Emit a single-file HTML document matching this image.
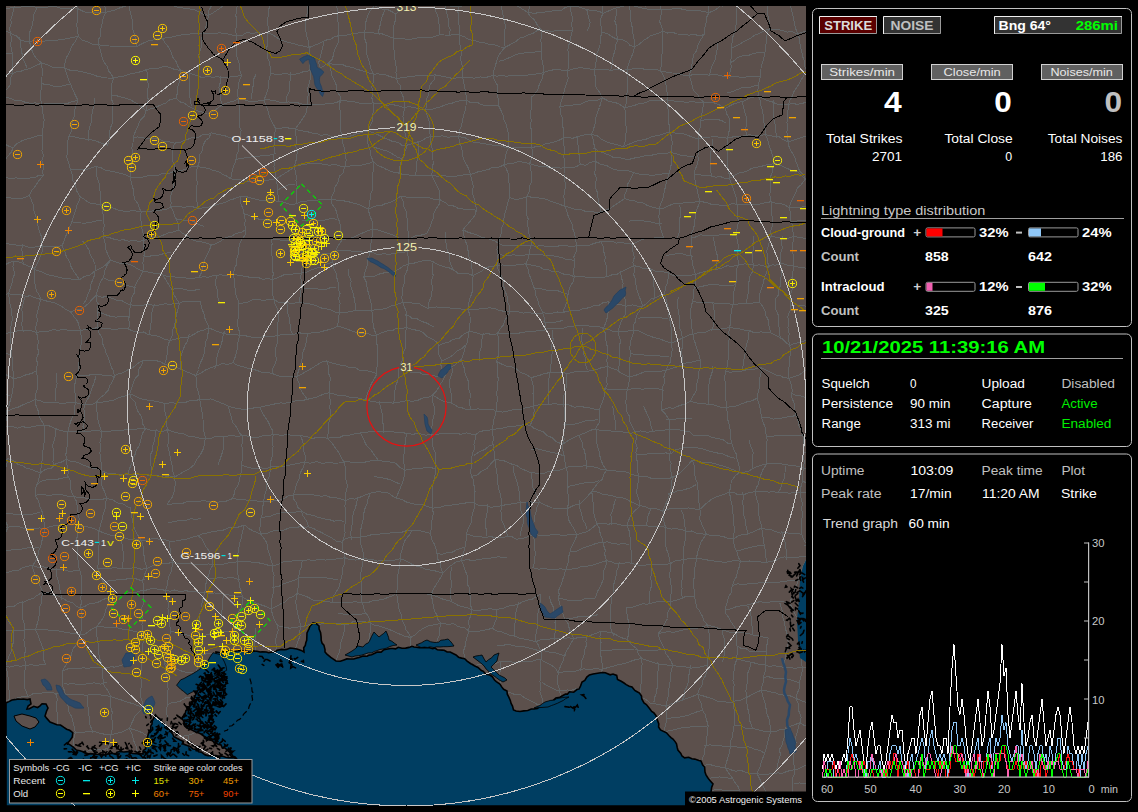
<!DOCTYPE html>
<html><head><meta charset="utf-8"><style>html,body{margin:0;padding:0;background:#000;overflow:hidden}svg{display:block}text{font-family:"Liberation Sans",sans-serif}</style></head>
<body><svg width="1138" height="812" viewBox="0 0 1138 812">
<defs><clipPath id="mclip"><rect x="6" y="6" width="800" height="800"/></clipPath>
<clipPath id="gclip"><rect x="820" y="540" width="269" height="238"/></clipPath></defs>
<rect width="1138" height="812" fill="#000"/>
<rect x="6" y="6" width="800" height="800" fill="#5c504c"/>
<g clip-path="url(#mclip)">
<path d="M-32.2,-26.1 L-27.8,-25.5 L-22.8,-24.3 L-17.0,-25.1 L-11.9,-24.4 L-6.9,-22.6 L-1.7,-21.9 L3.0,-20.4 L8.9,-19.2 L13.2,-17.7 M-32.2,-26.1 L-32.5,-20.7 L-31.5,-16.6 L-31.0,-10.2 L-30.8,-5.2 L-30.4,0.5 L-29.6,8.1 M-29.6,8.1 L-24.2,8.3 L-19.3,8.7 L-14.0,8.3 L-8.4,8.1 L-2.8,6.6 L3.2,8.1 L9.3,8.1 L14.1,7.4 M-29.6,8.1 L-30.7,13.7 L-29.4,19.1 L-26.8,25.3 L-24.5,30.3 M-24.5,30.3 L-17.8,28.9 L-13.5,30.1 L-7.3,30.0 L-2.0,29.9 L5.0,30.8 L10.3,33.2 M-24.5,30.3 L-24.7,35.7 L-25.6,40.7 L-26.3,44.2 L-28.4,50.5 L-28.2,55.2 L-30.6,60.6 L-31.9,67.0 L-34.6,73.2 L-36.7,78.7 M-30.6,54.5 L-25.2,54.5 L-19.7,56.3 L-13.6,55.5 L-8.0,56.1 L-3.3,55.1 L2.5,55.5 L6.4,53.3 L11.5,53.3 M-36.7,78.7 L-31.0,79.2 L-25.2,77.3 L-20.1,77.1 L-13.5,76.6 L-7.3,76.6 L-2.9,76.0 L2.6,75.2 L7.5,74.3 L12.6,73.5 M-36.7,78.7 L-33.8,82.5 L-31.9,86.8 L-31.9,93.2 L-31.8,99.7 M-31.8,99.7 L-26.7,98.4 L-22.7,96.3 L-16.8,97.1 L-10.6,96.0 L-4.9,96.2 L1.7,96.3 M-31.8,99.7 L-29.8,103.4 L-28.4,107.9 L-25.9,111.1 L-23.3,116.2 L-21.8,121.7 L-20.1,125.9 L-19.5,131.8 L-17.1,137.4 M-17.1,137.4 L-13.4,137.2 L-8.5,139.4 L-2.6,139.6 L2.8,142.5 L6.8,145.3 L13.1,147.8 M-17.1,137.4 L-16.8,141.5 L-15.3,147.5 L-16.0,151.5 L-17.2,158.3 L-19.4,165.0 L-20.3,170.5 M-20.3,170.5 L-12.4,172.7 L-7.8,174.6 L-2.2,177.0 M-20.3,170.5 L-19.7,174.4 L-19.7,179.7 L-20.8,185.2 L-23.5,190.1 L-24.2,197.0 M-24.2,197.0 L-17.6,199.0 L-11.6,198.5 L-6.3,199.3 L-0.3,197.9 L4.2,197.0 M-24.2,197.0 L-23.3,200.8 L-23.6,206.6 L-24.4,211.8 L-23.7,217.6 L-22.9,222.2 L-23.0,228.2 L-24.6,233.6 L-23.4,239.6 L-24.3,244.4 M-24.3,244.4 L-20.5,244.9 L-15.1,244.9 L-10.3,243.5 L-3.4,243.5 L1.9,242.4 M-24.3,244.4 L-24.2,249.3 L-25.2,255.2 L-24.3,259.8 L-26.0,263.8 L-25.6,270.2 L-26.5,274.8 M-26.5,274.8 L-21.4,273.3 L-15.9,271.7 L-10.0,270.7 L-6.2,268.1 L0.4,266.5 L4.4,265.2 L7.9,263.3 L13.5,260.9 M-26.5,274.8 L-24.9,279.7 L-24.1,286.5 L-23.6,294.3 M-23.6,294.3 L-18.6,294.9 L-13.7,296.0 L-7.2,295.9 L-3.3,295.8 L1.9,294.7 L8.3,293.9 M-23.6,294.3 L-23.4,299.8 L-25.1,305.5 L-25.2,311.0 L-25.1,314.8 L-23.6,320.3 L-24.3,327.2 L-23.7,332.3 L-21.8,337.8 M-21.8,337.8 L-16.2,337.8 L-11.5,336.8 L-6.7,337.5 L-0.1,334.5 L4.0,333.6 L10.4,332.6 M-21.8,337.8 L-24.6,341.4 L-26.9,347.0 L-29.0,353.6 L-31.0,359.6 M-26.4,348.7 L-22.0,349.5 L-15.6,349.2 L-9.7,349.7 L-5.0,350.5 L0.4,353.3 L6.3,353.3 L12.0,355.6 M-31.0,359.6 L-25.0,360.5 L-19.9,363.4 L-14.8,364.7 L-11.3,366.3 L-5.2,368.1 L-1.4,371.9 L4.9,374.4 L9.6,376.2 L13.6,378.6 M-31.0,359.6 L-29.3,364.0 L-28.3,369.8 L-25.9,374.8 L-23.4,381.0 L-22.5,386.8 L-22.4,392.0 L-19.8,395.9 L-19.7,401.5 M-25.3,380.5 L-19.6,383.5 L-14.5,385.4 L-8.5,388.8 L-4.1,391.3 L0.4,393.2 L5.2,394.5 L9.9,395.3 M-19.7,401.5 L-12.8,403.1 L-6.5,404.7 L-1.3,407.8 L1.4,410.7 L6.1,412.0 M-19.7,401.5 L-21.8,405.7 L-21.5,411.9 L-22.5,416.5 L-22.7,421.2 L-23.7,425.5 L-24.1,431.5 L-23.7,437.5 L-22.6,442.6 M-22.6,442.6 L-18.2,439.3 L-12.1,436.2 L-7.2,434.5 L-2.9,431.0 L2.2,426.5 M-22.6,442.6 L-21.0,448.6 L-21.3,454.0 L-20.3,459.6 L-20.4,466.1 L-21.0,471.5 L-22.7,476.4 M-22.7,459.5 L-18.7,457.1 L-11.9,455.5 L-7.7,453.4 L-3.8,450.0 L0.9,447.5 L5.1,442.6 M-22.7,476.4 L-17.3,473.7 L-12.3,471.3 L-9.0,468.8 L-3.5,464.8 L0.3,462.1 L3.7,461.4 L8.0,458.6 M-22.7,476.4 L-23.6,480.4 L-23.3,485.6 L-24.5,490.5 L-25.2,494.9 L-26.5,500.2 L-29.1,507.0 M-29.1,507.0 L-25.4,505.9 L-21.6,505.2 L-16.3,502.3 L-12.7,502.6 L-6.2,499.6 L-0.1,499.2 M-29.1,507.0 L-28.8,511.8 L-28.3,516.3 L-26.8,521.3 L-27.3,526.1 L-28.0,531.5 L-27.5,537.1 L-28.1,542.7 M-28.1,542.7 L-22.6,540.0 L-19.4,540.1 L-14.8,537.7 L-8.6,534.0 L-3.1,531.4 L3.1,529.4 L8.2,527.1 M-28.1,542.7 L-23.7,545.9 L-20.1,551.2 L-19.4,558.9 M-9.9,534.9 L-9.6,539.5 L-8.7,544.2 L-7.9,549.2 L-9.3,555.7 L-10.7,560.1 L-11.3,566.7 M-19.4,558.9 L-15.4,563.9 L-12.5,567.8 L-7.1,571.8 L-3.2,574.4 M-19.4,558.9 L-21.5,562.7 L-24.8,568.2 L-27.3,572.8 L-29.7,577.2 L-30.7,584.0 L-32.7,588.2 L-34.3,594.3 M-34.3,594.3 L-29.1,596.9 L-25.9,600.0 L-20.9,601.0 L-14.0,604.0 L-8.9,604.6 L-3.0,607.1 L2.3,609.2 M-17.7,631.7 L-12.7,631.1 L-9.5,631.7 L-4.3,631.9 L2.1,631.5 L7.9,630.0 L13.9,630.6 M-17.7,631.7 L-18.5,636.3 L-20.2,642.6 L-21.0,646.0 L-20.9,651.9 L-22.8,656.6 L-24.5,662.0 M-1.9,631.1 L-1.5,635.7 L-2.2,640.5 L-4.2,645.8 L-6.3,652.3 L-7.8,658.2 L-9.6,664.2 M-24.5,662.0 L-18.3,661.5 L-13.7,663.6 L-7.4,663.3 L-0.3,664.2 L5.2,666.4 M-24.5,662.0 L-25.4,667.2 L-27.8,673.9 L-28.9,678.1 L-27.8,684.1 L-27.6,690.1 L-26.9,696.7 M-26.9,696.7 L-21.6,697.2 L-17.7,696.5 L-12.0,697.4 L-7.1,698.3 L-2.0,699.6 L3.4,699.3 L8.9,700.9 M-9.0,698.8 L-8.6,704.6 L-7.2,709.1 L-8.7,713.2 L-8.5,718.1 L-9.5,723.1 L-10.7,729.3 L-11.4,734.1 M-30.0,733.7 L-24.6,734.1 L-20.5,734.5 L-14.4,733.5 L-8.1,734.5 L-3.9,733.1 L1.6,734.1 L7.2,734.4 M-30.0,733.7 L-30.7,740.0 L-30.2,744.8 L-29.3,750.8 L-30.1,756.1 L-29.1,762.0 L-26.0,768.5 L-25.3,773.1 M-25.3,773.1 L-21.1,771.8 L-17.2,770.0 L-11.6,769.1 L-5.9,767.4 L-1.2,766.3 L3.8,766.3 L8.4,765.6 L14.8,765.1 M-25.3,773.1 L-25.1,777.7 L-26.6,782.7 L-25.9,788.4 L-25.7,794.0 L-25.0,800.4 L-23.4,806.6 M-23.4,806.6 L-22.4,812.7 L-22.6,819.8 L-23.4,826.8 L-21.1,832.1 L-20.7,837.3 L-19.9,840.8 M-19.9,840.8 L-13.5,838.2 L-9.4,835.8 L-3.7,831.4 L0.8,827.0 M-19.9,840.8 L-19.5,847.5 L-21.4,853.2 L-23.6,857.3 M-21.7,849.0 L-17.0,848.1 L-11.3,847.4 L-7.0,847.0 L-1.4,845.7 L4.0,845.9 L8.2,845.7 M-23.6,857.3 L-19.4,857.7 L-12.6,858.4 L-8.6,860.9 L-2.5,861.2 L3.7,862.7 L9.2,863.9 L15.6,864.4 M13.2,-17.7 L12.4,-11.8 L12.4,-6.9 L12.5,-1.4 L13.9,2.1 L14.1,7.4 M14.1,7.4 L19.8,7.3 L23.6,6.5 L31.4,6.0 L37.3,7.6 M14.1,7.4 L12.8,13.3 L10.9,19.4 L11.2,23.8 L9.5,28.1 L10.3,33.2 M10.3,33.2 L16.4,35.9 L20.8,40.1 L26.2,41.7 L29.4,41.3 M10.3,33.2 L11.8,38.6 L10.7,43.8 L11.2,49.1 L12.7,54.2 L12.2,58.8 L12.5,64.4 L12.9,69.8 L12.6,73.5 M19.8,37.3 L20.3,43.8 L21.1,48.5 L22.2,54.6 L23.1,59.7 L25.4,63.8 L27.1,68.3 M12.6,73.5 L16.8,71.6 L20.9,71.2 L25.6,69.6 L31.6,67.9 L36.8,65.1 L41.6,63.2 M12.6,73.5 L10.8,77.3 L10.9,83.5 L8.6,87.3 L5.3,91.0 L1.7,96.3 M1.7,96.3 L6.8,97.8 L10.3,98.1 L15.7,100.7 L20.9,100.7 L25.7,102.4 L30.3,103.2 L35.8,102.9 L41.5,104.3 M13.1,147.8 L16.5,144.0 L21.4,141.0 L25.7,139.3 L30.5,138.1 L36.4,136.1 L42.6,135.1 M13.1,147.8 L11.2,152.4 L7.7,156.2 L5.2,160.4 L1.6,166.0 L0.9,170.6 L-2.2,177.0 M-2.2,177.0 L3.2,176.8 L10.2,178.6 L15.7,177.9 L20.5,178.3 L26.1,178.3 L29.8,178.0 L35.6,177.1 L38.0,175.7 L43.1,175.8 M-2.2,177.0 L-0.6,183.9 L-0.1,189.2 L2.8,194.3 L4.2,197.0 M4.2,197.0 L8.4,197.2 L13.7,199.0 L19.0,198.6 L25.1,197.6 L29.4,195.2 M1.9,242.4 L8.0,243.8 L13.5,244.7 L17.3,245.1 L24.1,245.8 L28.2,247.2 L33.4,247.2 L37.8,246.5 L42.5,246.3 M22.2,244.3 L21.9,249.9 L22.4,254.6 L22.5,259.9 L23.7,265.0 M13.5,260.9 L20.8,262.3 L25.6,265.0 L30.0,266.6 L34.0,269.1 M13.5,260.9 L12.9,266.8 L14.8,273.5 L13.1,277.7 L11.7,284.3 L9.7,289.7 L8.3,293.9 M8.3,293.9 L14.2,294.4 L19.5,294.7 L25.8,296.3 L30.4,295.8 L35.9,298.0 L40.9,299.4 M8.3,293.9 L9.5,298.7 L9.9,303.7 L11.1,308.8 L12.0,315.5 L12.3,319.8 L10.7,327.3 L10.4,332.6 M24.6,296.6 L23.5,302.6 L21.7,309.4 L22.9,314.6 L22.6,319.5 L21.6,323.4 L22.2,327.6 L23.3,332.4 M10.4,332.6 L15.0,331.9 L19.2,330.0 L23.7,330.3 L30.3,330.6 L36.3,332.3 M10.4,332.6 L10.5,337.3 L11.1,344.7 L11.0,349.7 L11.3,354.3 L12.7,359.1 L12.7,364.9 L12.8,370.0 L14.0,373.6 L13.6,378.6 M13.6,378.6 L19.8,377.5 L25.9,374.8 L31.3,373.6 L36.4,370.9 M13.6,378.6 L13.5,383.8 L13.0,388.3 L12.2,393.6 L10.4,399.9 L8.7,406.7 L6.1,412.0 M6.1,412.0 L12.0,408.9 L18.2,407.2 L22.2,405.2 L26.6,403.1 L30.8,401.6 L35.0,399.5 M6.1,412.0 L6.8,418.5 L5.0,424.0 L2.2,426.5 M2.2,426.5 L7.2,426.6 L12.0,426.3 L17.2,428.2 L22.7,426.6 L27.6,427.7 L32.1,426.9 L38.0,425.6 L44.4,425.5 M8.0,458.6 L13.8,460.6 L18.3,464.6 L22.6,465.8 L26.3,468.0 L31.2,469.4 L36.3,471.6 L40.4,472.7 M8.0,458.6 L6.8,464.0 L5.1,469.6 L4.0,473.7 L2.8,479.2 L1.1,483.3 L0.6,489.5 L0.8,493.7 L-0.1,499.2 M-0.1,499.2 L2.2,504.6 L3.9,511.0 L5.6,518.2 L5.9,521.9 L8.2,527.1 M4.1,513.1 L10.4,513.7 L15.9,514.4 L20.4,514.8 L26.3,514.5 L31.0,514.4 L36.1,513.2 L40.1,512.1 M8.2,527.1 L14.1,526.5 L18.3,526.5 L24.1,528.3 L29.7,528.1 L35.6,528.8 L39.5,527.9 L45.1,528.8 M8.2,527.1 L5.6,532.3 L5.3,537.4 L2.5,543.8 L1.2,549.4 L0.8,554.6 L-0.5,559.0 L-2.0,563.3 L-1.4,568.7 L-3.2,574.4 M2.5,550.7 L8.6,550.9 L12.6,549.6 L18.6,550.0 L23.0,548.6 L28.7,547.7 L34.4,548.2 L38.9,547.2 M-3.2,574.4 L1.3,573.2 L8.0,572.2 L13.1,570.6 L18.7,570.2 L22.9,567.6 L27.5,566.1 L32.7,565.7 M-3.2,574.4 L-3.5,578.1 L-3.3,583.3 L-3.1,588.2 L-0.7,593.4 L0.4,597.4 L1.1,603.1 L2.3,609.2 M2.3,609.2 L7.1,606.8 L13.9,606.5 L18.4,603.1 L22.8,602.6 L29.1,599.5 L33.9,597.9 L37.3,595.2 L43.0,592.0 M2.3,609.2 L6.4,616.1 L9.2,622.4 L12.6,626.4 L13.9,630.6 M22.6,600.6 L22.7,608.5 L22.4,613.9 L22.9,619.9 L24.6,625.2 L24.7,630.1 M13.9,630.6 L20.7,630.5 L26.3,629.7 L30.5,629.6 L35.4,629.7 M13.9,630.6 L13.6,635.0 L13.9,641.3 L12.2,645.6 L11.1,651.8 L9.0,656.0 L7.4,661.4 L5.2,666.4 M24.7,630.1 L24.3,634.7 L23.9,640.5 L24.9,645.8 L25.5,651.0 L24.1,655.3 L25.0,661.0 L25.4,665.6 M5.2,666.4 L9.7,667.1 L15.4,665.6 L20.5,666.2 L26.6,665.4 L30.8,664.6 L36.3,665.8 L40.2,664.5 L45.7,664.8 M5.2,666.4 L7.3,671.7 L7.8,676.0 L9.0,681.7 L8.8,688.8 L9.5,693.6 L8.9,700.9 M25.4,665.6 L24.9,671.7 L24.2,677.6 L24.4,683.5 L25.0,688.7 L26.9,693.2 L27.5,696.6 M8.9,700.9 L14.2,699.2 L18.4,697.6 L23.9,696.5 L28.3,696.3 L33.4,693.5 L39.9,693.3 L46.1,692.4 M8.9,700.9 L9.1,708.0 L8.4,712.4 L7.2,718.9 L6.3,725.0 L6.8,730.1 L7.2,734.4 M7.2,734.4 L11.8,733.4 L17.7,733.9 L23.1,735.1 L30.0,734.6 L35.7,735.0 M14.8,765.1 L19.9,765.1 L23.8,766.6 L28.8,765.5 L33.7,764.5 L41.2,765.5 L46.7,764.0 M14.8,765.1 L14.2,769.5 L12.9,774.7 L10.3,779.8 L10.0,784.0 L7.2,790.1 L6.8,797.4 L4.6,802.4 M4.6,802.4 L9.9,800.5 L15.1,797.4 L20.6,794.6 L24.7,793.5 L29.3,792.2 L33.5,790.4 M4.6,802.4 L2.8,809.0 L3.5,814.6 L1.4,820.5 L0.8,827.0 M0.8,827.0 L5.5,827.1 L11.3,827.2 L16.0,828.4 L22.5,827.6 L26.7,828.1 L32.6,825.9 L39.6,824.8 M0.8,827.0 L3.0,831.0 L5.9,835.2 L9.4,840.4 L11.1,844.6 L12.6,850.6 L13.0,855.5 L14.2,859.9 L15.6,864.4 M15.6,864.4 L21.4,866.1 L27.5,865.2 L31.8,867.1 L36.8,867.3 L41.9,869.1 L45.1,870.8 M40.0,-36.8 L44.6,-36.0 L50.4,-36.0 L54.3,-35.0 L59.7,-33.7 L65.7,-31.4 M38.6,-14.6 L45.1,-15.6 L51.5,-14.4 L57.0,-14.4 L61.8,-12.9 L66.7,-13.3 L71.9,-11.3 M37.3,7.6 L42.3,7.5 L48.2,7.0 L55.1,6.5 L59.7,8.0 L65.5,8.1 L68.5,8.7 L74.0,7.6 L78.1,8.8 M37.3,7.6 L34.1,13.6 L33.0,21.2 L31.6,27.5 L29.6,32.6 L29.4,37.8 L29.4,41.3 M29.4,41.3 L33.8,40.8 L38.9,42.0 L43.7,41.2 L49.5,40.4 L53.9,40.2 L60.7,39.9 L65.5,38.8 L72.8,37.6 L78.1,35.9 M29.4,41.3 L30.9,46.7 L32.6,52.5 L34.8,56.5 L38.2,60.0 L41.6,63.2 M41.6,63.2 L47.8,64.8 L53.8,67.8 L59.4,67.0 L64.6,67.8 M41.6,63.2 L42.0,67.5 L42.1,72.6 L42.0,77.4 L41.0,82.2 L41.3,87.2 L40.8,92.8 L40.6,99.1 L41.5,104.3 M41.6,83.8 L49.2,84.6 L54.2,86.4 L60.6,86.3 L66.1,84.9 L71.2,84.1 M41.5,104.3 L47.0,103.7 L52.2,103.5 L58.0,103.4 L62.3,103.6 L67.4,103.4 L73.4,101.3 L77.9,100.4 M41.5,104.3 L42.6,109.1 L43.1,114.8 L44.1,119.4 L43.9,124.3 L42.6,129.4 L42.6,135.1 M42.6,135.1 L42.9,139.8 L42.4,146.4 L41.9,150.5 L43.4,155.5 L41.9,160.8 L43.6,166.0 L42.9,171.2 L43.1,175.8 M43.1,175.8 L38.6,181.0 L35.9,185.3 L32.2,190.0 L29.4,195.2 M29.4,195.2 L31.1,199.6 L33.4,204.8 L33.5,208.8 L35.2,214.9 L37.0,219.8 L37.9,225.4 L38.9,230.0 L41.1,235.8 L41.3,241.3 L42.5,246.3 M42.5,246.3 L48.4,246.9 L55.2,246.3 L62.1,245.9 M42.5,246.3 L42.7,250.1 L40.3,256.5 L37.5,263.4 L34.0,269.1 M34.0,269.1 L39.1,271.1 L42.1,271.9 L48.0,274.9 L52.4,275.6 L57.1,276.8 L62.7,278.2 L68.1,278.4 L73.4,279.6 L79.6,279.7 M34.0,269.1 L34.7,274.3 L34.2,281.1 L35.2,284.9 L36.4,291.1 L38.7,294.0 L40.9,299.4 M40.9,299.4 L46.5,301.0 L50.2,301.7 L55.2,303.0 L60.9,305.8 L66.0,309.7 L70.7,312.0 M40.9,299.4 L39.5,303.6 L38.2,309.4 L36.7,315.8 L37.3,320.7 L35.7,326.9 L36.3,332.3 M36.3,332.3 L42.6,331.7 L47.6,331.5 L53.2,329.7 L58.2,330.3 L64.2,329.2 L69.1,330.5 L74.9,330.9 L80.5,330.4 M36.3,332.3 L37.9,337.4 L38.2,343.0 L37.5,347.2 L38.7,352.6 L36.8,357.9 L37.2,364.4 L36.4,370.9 M36.4,370.9 L37.4,377.3 L37.6,383.8 L37.3,388.8 L35.7,394.2 L35.0,399.5 M56.6,373.3 L56.2,377.8 L57.1,383.7 L55.8,389.3 L55.6,395.8 L55.1,401.0 M35.0,399.5 L40.0,400.7 L45.1,402.7 L49.8,402.1 L56.2,402.6 L59.8,403.1 L65.5,403.1 L69.9,402.6 L75.3,402.4 M35.0,399.5 L35.4,404.1 L38.1,410.7 L38.9,415.2 L40.8,419.4 L44.4,425.5 M44.4,425.5 L49.4,426.0 L54.2,428.0 L61.0,430.7 L67.8,431.8 M44.4,425.5 L44.8,430.2 L44.0,434.1 L44.3,439.3 L43.8,445.4 L43.0,450.4 L42.2,455.6 L42.1,460.7 L41.3,466.0 L40.4,472.7 M56.1,428.7 L55.4,435.0 L54.5,440.0 L52.5,445.5 L53.9,451.7 L54.0,456.4 L52.9,461.7 L53.5,466.0 M40.4,472.7 L45.1,469.5 L51.3,468.1 L55.6,463.9 L61.8,461.9 L66.5,459.4 M40.4,472.7 L39.3,476.1 L38.3,481.3 L35.9,487.3 L35.2,495.5 M37.8,484.1 L41.3,481.1 L46.8,479.8 L52.4,479.5 L57.6,479.2 L64.7,477.7 L70.2,478.1 M35.2,495.5 L41.7,494.0 L47.3,495.4 L53.0,494.9 L58.5,494.5 L62.7,494.9 L68.3,496.5 L73.8,496.7 M35.2,495.5 L38.8,501.4 L39.6,505.9 L41.7,510.4 L43.7,517.4 L44.0,522.4 L45.1,528.8 M45.1,528.8 L48.7,527.0 L55.5,525.4 L60.3,525.5 L66.3,525.4 L70.9,524.4 L78.2,524.9 M45.1,528.8 L42.7,535.5 L41.9,541.3 L40.7,546.0 L38.8,550.7 L37.7,557.3 L35.1,561.5 L32.7,565.7 M32.7,565.7 L38.5,567.3 L43.0,566.7 L47.0,567.6 L52.6,569.5 L58.0,569.5 L63.0,569.1 L68.3,571.2 L75.2,570.9 L80.1,570.9 M32.7,565.7 L33.0,568.6 L34.9,574.9 L37.7,578.7 L39.3,584.4 L43.0,592.0 M56.4,568.3 L56.3,573.0 L56.7,576.6 L58.8,582.0 L59.5,587.5 L60.8,592.9 L61.7,600.0 M43.0,592.0 L48.6,593.0 L52.8,595.1 L58.6,596.1 L63.6,598.8 L67.8,601.5 L73.2,603.0 L76.1,606.1 L80.5,607.9 M43.0,592.0 L41.6,598.1 L41.0,604.0 L39.4,607.9 L39.5,614.3 L38.2,619.9 L37.1,624.3 L35.4,629.7 M35.4,629.7 L40.0,629.1 L45.9,629.4 L52.0,630.9 L57.4,630.8 L61.9,631.6 L68.6,632.7 L73.9,633.6 L80.0,634.5 M35.4,629.7 L38.2,635.3 L39.5,639.4 L41.6,644.4 L43.6,650.3 L43.8,654.9 L44.0,660.4 L45.7,664.8 M46.1,692.4 L52.5,692.8 L60.3,694.0 L65.4,695.0 M55.8,693.7 L57.3,699.2 L56.6,704.1 L56.9,710.0 L57.2,715.1 L57.7,721.0 L56.6,725.6 L55.8,728.9 L55.5,733.8 M35.7,735.0 L41.5,733.7 L45.2,733.2 L51.5,731.6 L56.9,730.8 L63.1,731.4 L68.5,731.0 L75.3,732.5 M46.7,764.0 L51.5,767.9 L57.1,770.5 L62.2,772.2 L66.7,772.6 L70.3,773.8 M46.7,764.0 L43.6,769.3 L41.8,773.1 L38.9,779.1 L36.5,783.7 L33.5,790.4 M33.5,790.4 L39.5,791.0 L45.6,792.7 L49.4,793.7 L55.1,792.8 L61.0,793.6 L64.9,793.7 L69.7,794.8 L74.2,794.8 M33.5,790.4 L36.0,796.9 L38.4,803.0 L38.4,809.7 L39.3,815.2 L38.9,819.5 L39.6,824.8 M53.9,792.6 L52.7,798.2 L53.1,804.4 L53.0,810.9 L51.6,816.8 L53.5,821.3 L52.9,826.7 L53.3,831.5 M39.6,824.8 L45.2,826.6 L50.7,827.4 L55.9,828.4 L59.1,832.7 L63.5,834.8 L67.0,838.2 M39.6,824.8 L39.8,830.9 L40.6,836.4 L43.2,841.8 L43.0,847.9 L44.3,853.1 L44.5,856.8 L45.1,861.8 L44.0,865.6 L45.1,870.8 M45.1,870.8 L49.6,870.4 L54.5,870.9 L58.8,871.7 L64.9,870.3 L71.5,869.6 M65.7,-31.4 L71.9,-29.7 L77.2,-30.2 L81.6,-29.1 L87.9,-30.5 L92.7,-31.1 L96.2,-31.9 L102.0,-33.1 M65.7,-31.4 L68.0,-25.2 L68.5,-19.4 L69.7,-14.9 L71.2,-10.0 L74.4,-4.2 L76.1,0.0 L76.7,3.7 L78.1,8.8 M78.1,8.8 L82.8,11.2 L87.8,12.8 L93.1,11.8 L99.9,13.2 L105.7,12.3 M78.1,8.8 L77.3,14.5 L77.3,20.1 L76.8,25.5 L77.9,31.3 L78.1,35.9 M78.1,35.9 L81.6,39.8 L88.2,42.1 L93.0,44.7 L98.4,44.8 M78.1,35.9 L75.3,41.3 L71.8,46.4 L69.3,52.7 L66.5,57.5 L65.0,63.2 L64.6,67.8 M64.6,67.8 L69.7,70.1 L74.8,70.6 L80.1,71.3 L86.3,72.8 L90.1,73.6 L96.8,76.1 L102.2,77.2 L107.1,78.0 L113.4,78.1 M64.6,67.8 L65.7,71.4 L67.3,76.0 L68.3,79.3 L70.5,83.8 L72.8,89.7 L74.9,94.2 L77.9,100.4 M77.9,100.4 L75.9,105.7 L74.8,110.1 L74.7,114.9 L72.7,120.1 L71.4,125.2 L71.4,130.8 L68.9,136.3 M94.7,97.8 L94.3,103.6 L92.9,109.4 L91.8,115.1 L91.9,120.7 L89.9,126.4 L89.0,130.4 L88.8,136.7 L88.2,140.8 M68.9,136.3 L74.2,136.7 L79.2,138.1 L83.5,138.8 L90.6,139.8 L96.2,141.0 L101.6,143.4 L107.6,145.3 M68.9,136.3 L67.7,141.7 L67.3,146.4 L67.2,151.8 L66.9,157.3 L68.4,162.2 L70.4,169.2 M70.4,169.2 L77.4,169.4 L82.5,170.0 L87.8,169.0 L91.7,167.8 L96.0,166.4 M70.4,169.2 L72.2,174.9 L72.8,180.4 L75.4,184.2 L76.4,190.6 L80.4,197.1 M80.4,197.1 L84.3,199.2 L88.6,202.6 L92.9,203.7 L100.4,204.5 M80.4,197.1 L79.3,200.5 L76.6,205.7 L75.7,210.2 L73.8,215.9 L72.4,219.7 L70.4,225.5 L68.0,230.7 L65.9,235.8 L64.2,240.6 L62.1,245.9 M71.3,221.5 L76.0,222.8 L81.2,223.0 L84.5,223.1 L89.7,222.7 L97.0,220.7 L101.9,220.5 M62.1,245.9 L64.9,252.0 L66.5,256.9 L69.7,261.8 L71.1,266.9 L73.9,271.6 L76.5,275.3 L79.6,279.7 M82.8,241.2 L86.4,245.8 L89.2,250.6 L90.3,254.9 L93.1,259.4 L95.0,264.1 L95.1,269.9 M79.6,279.7 L84.1,276.6 L90.3,274.8 L93.9,271.7 L99.4,268.7 L102.7,267.5 L106.4,264.1 L110.5,260.0 M95.1,269.9 L94.4,275.5 L93.1,279.0 L91.1,283.8 L90.1,289.3 L87.6,295.1 L86.5,299.3 L83.4,303.8 M70.7,312.0 L75.3,310.0 L81.7,309.0 L86.1,305.5 L88.6,303.3 L92.2,299.3 L96.1,295.5 M70.7,312.0 L74.1,316.8 L77.8,321.6 L78.5,324.6 L80.5,330.4 M80.5,330.4 L87.0,329.2 L93.0,328.8 L97.5,327.4 M80.5,330.4 L80.9,334.2 L81.9,338.5 L81.2,344.3 L80.1,348.8 L79.6,352.8 L79.3,358.1 L78.8,364.8 L78.8,369.6 L76.9,375.7 M76.9,375.7 L81.6,376.0 L86.7,375.6 L91.4,374.6 L97.1,374.5 L102.3,375.0 L109.4,375.9 L114.5,376.1 M76.9,375.7 L75.5,380.5 L74.6,386.1 L74.9,389.9 L75.1,396.3 L75.3,402.4 M95.7,375.9 L94.5,382.2 L91.7,388.5 L90.2,393.9 L88.3,398.0 L86.0,402.2 M75.3,402.4 L82.6,404.7 L88.3,404.9 L92.8,404.0 L96.7,402.0 M75.3,402.4 L74.8,407.7 L74.3,414.3 L72.0,417.9 L70.2,422.8 L68.9,427.1 L67.8,431.8 M86.0,402.2 L83.9,408.5 L84.7,415.9 L84.0,421.6 L82.9,426.1 L84.5,431.6 M67.8,431.8 L71.8,431.9 L76.8,432.0 L81.7,431.4 L89.1,431.3 L95.5,430.3 L101.3,431.3 M67.8,431.8 L67.6,438.3 L67.3,444.5 L66.6,451.2 L65.8,454.4 L66.5,459.4 M66.5,459.4 L71.6,461.7 L77.4,462.1 L83.8,465.2 L87.8,466.8 L92.1,468.1 L97.7,468.7 L102.0,470.9 M66.5,459.4 L67.0,464.9 L68.2,470.4 L67.9,476.2 L70.5,481.0 L70.5,487.6 L71.7,492.7 L73.8,496.7 M73.8,496.7 L79.8,497.5 L85.0,497.9 L91.8,499.9 L96.3,499.4 L102.3,499.3 L106.7,498.2 M73.8,496.7 L76.8,501.9 L77.2,507.1 L78.0,512.2 L79.2,519.1 L78.2,524.9 M78.2,524.9 L83.8,526.8 L89.5,527.1 L94.2,528.8 L98.8,530.6 M78.2,524.9 L77.4,530.3 L77.9,535.5 L75.9,539.9 L76.7,544.6 L77.7,550.1 L77.2,555.0 L78.2,561.3 L78.3,565.8 L80.1,570.9 M80.1,570.9 L81.4,576.8 L81.6,582.4 L81.3,588.1 L81.7,593.1 L80.6,597.4 L81.4,601.9 L80.5,607.9 M80.5,607.9 L84.5,606.5 L89.9,603.6 L93.7,603.5 L98.6,602.0 L103.5,599.3 L109.3,597.6 M80.5,607.9 L82.1,613.6 L81.6,619.2 L81.1,624.7 L81.7,628.6 L80.0,634.5 M80.0,634.5 L85.3,634.0 L90.0,630.3 L96.6,626.6 M80.0,634.5 L77.8,640.7 L75.4,646.0 L72.6,649.2 L71.2,655.2 L67.9,658.7 L66.4,664.1 L64.7,667.1 L62.3,670.9 M62.3,670.9 L67.5,669.0 L72.0,668.3 L76.1,668.9 L82.6,667.9 L87.8,668.1 L92.1,667.9 L96.3,667.0 L102.5,668.1 M62.3,670.9 L62.1,678.1 L62.6,686.1 L64.3,690.1 L65.4,695.0 M63.8,683.0 L67.6,684.1 L73.5,683.7 L77.8,684.8 L82.7,684.3 L89.1,683.8 L94.3,682.8 L100.4,684.1 L106.6,682.3 M65.4,695.0 L70.6,694.7 L77.0,694.5 L80.6,694.9 L86.9,695.1 L91.7,694.6 L97.0,694.8 L100.9,695.0 L105.1,695.5 L110.7,696.6 M65.4,695.0 L66.1,699.8 L68.2,706.4 L68.4,711.2 L71.5,716.3 L72.8,721.0 L74.2,726.3 L75.3,732.5 M88.0,695.8 L87.4,701.5 L88.0,707.1 L88.5,712.6 L89.5,719.3 L89.7,724.6 L92.0,729.6 L93.1,733.5 M75.3,732.5 L80.1,732.5 L85.9,731.9 L90.3,731.9 L95.2,731.8 L100.6,733.4 L105.9,734.5 L111.0,734.5 M75.3,732.5 L74.0,737.9 L73.2,744.8 L71.9,749.5 L70.8,755.5 L70.9,761.0 L70.0,765.3 L69.8,768.9 L70.3,773.8 M72.8,753.1 L79.8,752.8 L86.0,751.6 L91.1,750.3 L97.4,749.3 L101.6,750.1 L107.3,748.5 M70.3,773.8 L74.5,773.4 L80.6,771.4 L84.9,770.9 L90.9,769.4 L93.8,767.2 L98.9,764.2 L103.6,762.4 M74.2,794.8 L79.7,795.6 L83.9,797.5 L89.3,799.1 L93.4,800.4 L98.5,800.8 L104.9,802.1 M74.2,794.8 L74.5,800.4 L73.0,805.6 L74.1,809.7 L72.3,815.6 L72.5,822.2 L69.6,826.6 L68.0,831.6 L67.0,838.2 M70.6,816.5 L77.5,816.4 L83.5,816.6 L88.6,815.5 L94.0,817.3 L100.2,817.3 L104.2,818.5 M67.0,838.2 L69.4,844.7 L69.7,850.9 L70.0,856.5 L70.9,860.7 L72.2,864.3 L71.5,869.6 M71.5,869.6 L77.2,868.3 L82.0,867.5 L87.7,866.7 L92.9,863.4 L99.2,861.1 L104.2,858.9 M102.0,-33.1 L107.1,-31.6 L113.0,-31.0 L118.8,-29.6 L124.7,-27.1 L129.4,-25.2 L133.3,-25.0 L138.7,-23.1 M102.0,-33.1 L102.1,-27.9 L102.7,-22.7 L102.5,-16.7 L102.9,-12.2 L103.7,-7.2 L105.0,-1.5 L105.7,3.0 L104.9,6.6 L105.7,12.3 M103.9,-10.4 L108.3,-10.8 L112.8,-11.0 L118.3,-10.5 L122.6,-11.0 L127.8,-9.8 L134.1,-9.3 M105.7,12.3 L113.2,10.6 L119.5,8.0 L124.1,6.5 L129.4,4.5 M105.7,12.3 L103.4,17.4 L102.1,24.0 L100.8,28.9 L100.9,35.1 L98.7,39.0 L98.4,44.8 M98.4,44.8 L105.3,45.9 L109.4,46.0 L115.6,46.6 L120.6,47.0 L126.9,46.4 L131.8,46.4 L136.5,46.6 M98.4,44.8 L100.4,49.7 L101.7,56.5 L103.9,61.9 L106.8,65.8 L108.8,71.1 L111.3,74.2 L113.4,78.1 M113.4,78.1 L118.7,76.8 L123.6,76.1 L129.2,74.2 L134.8,73.0 L141.9,71.5 L146.7,69.5 M113.4,78.1 L111.8,84.2 L112.0,90.3 L111.5,95.2 M111.5,95.2 L116.8,95.8 L122.5,97.4 L129.4,99.3 L133.5,101.5 L137.6,104.0 L141.8,107.3 L146.0,110.8 M111.5,95.2 L111.8,99.9 L113.1,103.4 L112.6,108.7 L112.2,114.1 L112.4,118.4 L112.1,123.9 L110.2,128.4 L109.2,134.9 L109.4,139.1 L107.6,145.3 M96.0,166.4 L100.7,167.6 L105.1,170.1 L109.6,170.9 L114.7,172.0 L119.4,173.2 L125.6,174.6 L130.5,177.3 M96.0,166.4 L96.1,171.9 L97.3,178.2 L99.1,183.3 L99.6,188.4 L100.5,194.4 L100.8,198.6 L100.4,204.5 M100.4,204.5 L105.3,205.4 L111.4,207.2 L117.5,209.9 L121.7,210.7 L127.0,211.7 L131.8,210.7 L137.5,211.1 L141.2,211.7 M100.4,204.5 L102.3,209.7 L103.5,216.5 L103.6,220.3 L104.2,226.2 L102.9,231.2 L103.5,236.5 M103.5,236.5 L108.9,237.5 L113.1,238.9 L118.5,240.2 L123.8,239.8 L129.3,241.3 L133.6,240.1 L138.6,241.4 L143.8,240.4 M103.5,236.5 L105.1,243.7 L105.9,249.7 L107.6,253.9 L110.5,260.0 M110.5,260.0 L116.5,262.2 L121.9,264.0 L128.1,263.9 L133.3,266.0 L137.8,269.0 L142.7,271.3 M110.5,260.0 L107.1,265.4 L104.7,271.1 L103.6,277.0 L99.8,283.0 L98.7,286.6 L97.4,290.9 L96.1,295.5 M103.3,277.8 L108.2,280.1 L113.4,280.7 L118.1,282.1 L123.8,284.6 L131.1,286.6 L136.4,288.0 M96.1,295.5 L102.0,297.3 L106.0,296.5 L112.7,298.6 L117.1,300.5 L121.8,300.5 L125.2,302.7 L130.1,304.8 M96.1,295.5 L96.2,300.7 L98.3,304.0 L97.6,309.3 L97.9,314.6 L97.6,320.7 L97.5,327.4 M96.8,311.5 L101.8,313.1 L105.8,314.8 L110.7,316.4 L116.1,317.1 L122.8,316.4 L129.1,316.8 M97.5,327.4 L102.5,328.4 L106.9,328.3 L111.6,329.2 L116.1,329.1 L123.1,328.8 L128.1,328.9 M97.5,327.4 L99.1,332.9 L102.1,338.2 L102.8,344.1 L104.9,348.5 L106.1,353.5 L108.7,358.8 L109.6,361.7 L111.3,367.0 L113.5,371.3 L114.5,376.1 M114.5,376.1 L117.3,374.1 L121.3,373.4 L127.6,370.0 L131.9,368.3 L138.0,363.3 L143.5,359.9 M114.5,376.1 L112.5,381.5 L109.5,386.1 L108.3,390.0 L103.8,395.1 L99.8,398.0 L96.7,402.0 M96.7,402.0 L102.3,402.2 L106.9,401.3 L113.3,400.2 L118.7,397.7 L124.5,396.1 L129.8,394.0 M96.7,402.0 L96.8,409.8 L97.4,415.3 L98.2,421.1 L99.7,426.4 L101.3,431.3 M101.3,431.3 L107.9,431.6 L114.3,430.5 L120.1,430.9 L124.9,429.8 L130.3,429.8 L135.2,429.2 L140.2,428.6 L145.6,428.6 M101.3,431.3 L101.4,436.1 L99.9,442.0 L100.6,447.1 L99.9,452.5 L100.3,458.9 L101.5,464.6 L102.0,470.9 M102.0,470.9 L107.2,473.2 L112.0,473.8 L117.1,474.1 L123.3,474.1 L128.5,474.8 M102.0,470.9 L102.7,476.7 L101.2,482.7 L102.2,486.7 L104.6,491.8 L106.7,498.2 M106.7,498.2 L112.7,500.0 L118.1,503.0 L123.8,504.1 L127.1,506.7 L130.4,507.9 M106.7,498.2 L105.6,502.5 L105.9,507.1 L103.4,513.5 L102.4,518.3 L100.7,524.6 L98.8,530.6 M98.8,530.6 L103.2,532.8 L108.0,534.5 L112.8,535.6 L119.4,536.2 L124.5,537.9 L128.6,539.1 L135.3,539.0 L141.5,540.7 M98.8,530.6 L98.3,536.6 L99.4,542.7 L98.5,548.5 L98.9,554.1 L98.5,558.9 L98.1,564.1 L97.5,568.1 M120.1,535.6 L121.9,542.7 L122.3,548.4 L123.5,553.1 L123.6,558.6 L122.9,562.9 L122.3,568.3 M97.5,568.1 L102.7,568.6 L108.9,568.7 L113.6,567.5 L118.8,568.2 L123.9,568.8 L129.4,568.2 L136.4,567.7 L141.1,569.2 L147.0,568.6 M97.5,568.1 L99.5,572.7 L102.0,579.6 L104.0,583.3 L105.2,589.3 L107.9,593.9 L109.3,597.6 M103.4,582.9 L108.4,580.9 L113.0,580.7 L118.3,579.6 L123.6,579.5 L128.3,578.7 L134.1,578.2 L140.0,580.2 L145.5,579.7 M109.3,597.6 L115.0,596.9 L120.6,595.1 L126.9,593.2 L130.9,592.6 L135.6,592.3 L140.2,591.0 L144.0,590.7 M109.3,597.6 L108.5,603.7 L106.1,608.7 L105.1,613.1 L103.2,617.9 L100.6,621.6 L96.6,626.6 M96.6,626.6 L101.5,626.2 L105.1,627.2 L111.3,627.4 L115.8,627.2 L121.6,629.0 L126.8,629.4 L131.3,630.5 L137.3,632.1 L143.3,633.2 M96.6,626.6 L96.0,631.2 L97.1,637.0 L98.1,643.3 L98.1,647.9 L98.7,653.0 L99.7,658.6 L101.2,662.5 L102.5,668.1 M102.5,668.1 L107.0,667.8 L110.3,666.8 L114.9,667.1 L120.3,665.6 L125.0,664.0 L130.0,662.1 L136.8,659.4 L142.3,658.1 M102.5,668.1 L102.3,673.7 L103.0,679.4 L104.2,685.7 L108.4,691.5 L110.7,696.6 M110.7,696.6 L116.9,698.6 L122.5,700.3 L126.5,701.8 L133.7,704.0 L137.2,705.4 L143.0,707.7 M110.7,696.6 L110.5,702.5 L111.0,707.7 L112.2,712.2 L111.4,718.2 L112.9,723.3 L112.4,728.3 L111.0,734.5 M111.0,734.5 L115.8,733.6 L122.1,731.9 L129.2,728.5 M111.0,734.5 L110.0,740.3 L109.1,745.8 L107.2,749.6 L107.0,756.6 L103.6,762.4 M103.6,762.4 L107.8,765.3 L113.0,767.3 L118.8,768.8 L122.3,769.4 L129.1,770.3 L133.2,771.0 L139.3,771.6 M103.6,762.4 L101.9,768.1 L102.0,774.7 L101.8,779.7 L102.6,784.9 L102.9,790.5 L103.6,797.2 L104.9,802.1 M104.9,802.1 L111.2,798.3 L117.3,795.6 L123.5,792.6 L128.3,791.5 L132.8,791.6 M104.9,802.1 L106.3,808.9 L107.1,813.3 L106.6,819.3 L105.8,824.5 L103.8,829.5 L103.4,834.9 M104.2,818.5 L111.0,816.7 L117.3,814.3 L122.8,812.5 L127.7,811.5 L132.9,812.5 M103.4,834.9 L108.2,834.0 L114.9,833.4 L119.6,834.2 L126.0,832.5 L133.0,833.3 M103.4,834.9 L102.7,841.6 L103.1,848.6 L102.7,853.1 L104.2,858.9 M104.2,858.9 L110.8,859.2 L116.5,860.0 L123.2,861.8 L129.0,861.8 L134.5,863.0 L138.8,862.1 L143.1,861.9 M138.7,-23.1 L144.4,-26.2 L148.3,-27.5 L154.3,-28.4 L158.6,-28.3 L164.2,-29.0 L168.3,-29.1 M138.7,-23.1 L136.5,-15.6 L133.5,-9.3 L131.0,-5.1 L131.4,0.6 L129.4,4.5 M153.5,-26.1 L152.4,-20.5 L150.5,-16.2 L149.4,-9.3 L149.6,-5.0 L149.0,-0.5 L148.7,4.4 M129.4,4.5 L129.7,8.5 L130.4,13.1 L131.8,18.1 L132.8,23.2 L132.6,28.5 L134.4,33.7 L135.7,41.3 L136.5,46.6 M136.5,46.6 L142.8,43.4 L147.9,41.0 L152.9,40.1 L157.6,38.8 L162.7,39.0 M146.7,69.5 L152.0,68.2 L157.2,68.4 L164.1,66.5 L169.3,67.2 L174.8,69.5 L180.5,70.3 M146.7,69.5 L147.5,75.6 L147.1,80.2 L148.8,84.9 L147.5,90.6 L147.7,94.3 L148.1,99.7 L147.2,105.0 L146.0,110.8 M146.0,110.8 L151.4,108.5 L155.2,107.8 L159.1,105.6 L165.8,103.0 L169.5,100.0 L175.9,98.2 M146.0,110.8 L144.3,116.2 L140.1,120.6 L138.2,125.3 L135.7,130.8 L133.2,137.3 M133.2,137.3 L137.8,136.9 L143.2,137.9 L148.5,138.5 L153.4,138.3 L158.2,138.9 L164.4,141.5 L169.6,141.9 L174.8,143.1 M133.2,137.3 L133.0,143.0 L131.9,147.7 L132.5,154.3 L131.6,158.6 L131.4,162.8 L130.9,168.6 L130.6,172.7 L130.5,177.3 M130.5,177.3 L137.0,177.2 L142.0,177.3 L147.4,176.0 L152.2,175.5 L158.7,175.3 L163.0,173.0 L169.7,173.0 L174.5,171.3 M130.5,177.3 L131.5,183.8 L133.2,189.1 L133.8,194.4 L134.6,199.5 L138.0,203.8 L139.4,208.2 L141.2,211.7 M141.2,211.7 L147.6,211.7 L153.8,210.7 L160.2,210.2 L166.3,209.6 L170.7,206.9 M141.2,211.7 L140.4,217.0 L141.2,222.5 L141.8,228.4 L143.3,233.9 L143.8,240.4 M143.8,240.4 L147.4,238.8 L152.6,237.9 L157.2,237.3 L162.0,235.7 L168.2,232.9 L172.8,232.2 L178.9,230.0 M143.8,240.4 L143.2,245.8 L144.9,251.8 L144.0,257.2 L142.8,263.2 L143.6,266.6 L142.7,271.3 M143.3,255.8 L147.6,256.9 L152.5,255.4 L158.2,255.3 L165.3,253.2 L170.9,252.5 M142.7,271.3 L149.7,272.3 L154.5,273.4 L160.0,273.6 L162.9,275.0 M142.7,271.3 L140.2,276.9 L137.4,281.3 L134.8,286.5 L134.4,293.0 L132.0,296.8 L131.2,301.7 L130.1,304.8 M130.1,304.8 L136.0,305.4 L141.5,305.4 L149.1,304.0 L153.6,305.7 L160.5,304.8 L165.7,303.5 L169.6,304.7 L173.7,303.4 L179.3,303.3 M130.1,304.8 L129.9,313.2 L128.7,319.1 L129.8,325.5 L128.1,328.9 M154.7,304.1 L152.4,309.8 L151.4,316.0 L151.2,321.5 L150.5,326.3 L150.0,330.3 L149.0,334.6 M128.1,328.9 L132.4,330.9 L137.8,332.3 L143.5,332.0 L149.1,334.9 L153.8,335.2 L159.7,336.8 L165.2,339.5 L169.9,340.4 M143.5,359.9 L149.7,360.9 L154.6,360.1 L160.9,362.1 L164.7,364.3 M143.5,359.9 L141.7,365.2 L138.5,369.8 L138.2,375.4 L134.4,379.4 L132.8,385.2 L131.1,389.9 L129.8,394.0 M129.8,394.0 L134.1,395.3 L137.8,397.5 L142.1,399.0 L148.7,400.3 L153.6,400.9 L159.0,401.9 L165.0,403.7 M129.8,394.0 L131.1,398.3 L135.4,402.5 L135.9,405.9 L138.1,411.8 L141.7,416.9 L142.5,423.6 L145.6,428.6 M145.6,428.6 L151.9,430.5 L157.3,430.9 L162.6,431.8 L167.3,429.6 M145.6,428.6 L142.5,433.3 L140.8,440.3 L139.7,444.6 L136.3,450.2 L134.6,455.9 L133.0,459.9 L131.0,465.4 L129.1,469.5 L128.5,474.8 M156.5,429.1 L155.4,434.0 L154.8,439.2 L152.9,445.1 L152.3,450.9 L150.6,454.4 L150.4,459.7 L151.0,465.7 L151.9,471.5 L151.6,475.9 M128.5,474.8 L133.1,474.4 L138.6,474.4 L144.3,474.8 L150.2,475.2 L154.9,475.3 L159.0,476.0 L164.7,477.3 L169.1,475.8 L174.8,477.1 M130.4,507.9 L131.2,515.2 L132.6,520.3 L133.4,526.2 L136.3,532.4 L138.9,537.0 L141.5,540.7 M141.5,540.7 L147.5,540.1 L152.9,538.4 L158.0,539.0 L164.9,539.8 L169.3,541.1 M141.5,540.7 L143.2,546.3 L143.6,552.1 L144.4,558.5 L145.3,563.0 L147.0,568.6 M147.0,568.6 L152.3,565.7 L159.2,563.5 L163.1,563.3 L168.2,563.3 L172.7,562.3 M147.0,568.6 L144.5,574.9 L142.6,581.6 L143.7,585.4 L144.0,590.7 M144.0,590.7 L150.8,588.8 L157.0,589.0 L161.2,589.4 L165.4,590.5 M144.0,590.7 L143.2,597.1 L143.8,602.7 L141.5,608.4 L141.5,613.6 L143.2,619.8 L141.9,624.1 L142.7,628.1 L143.3,633.2 M143.3,633.2 L143.6,639.7 L142.5,646.3 L142.5,651.7 L142.3,658.1 M142.3,658.1 L141.2,663.7 L141.1,669.6 L140.7,673.9 L141.1,680.0 L141.5,686.0 L140.3,691.4 L140.8,697.5 L142.5,702.4 L143.0,707.7 M143.0,707.7 L139.8,711.3 L135.1,715.9 L132.6,721.3 L129.2,728.5 M129.2,728.5 L133.3,729.4 L138.8,731.2 L142.5,732.9 L146.9,735.6 L153.1,736.8 L158.3,739.5 L163.9,741.8 M129.2,728.5 L131.8,733.1 L133.5,740.4 L135.9,745.5 L137.2,751.4 L137.9,755.2 L138.8,760.6 L139.7,765.8 L139.3,771.6 M139.3,771.6 L144.8,770.1 L151.4,769.2 L156.2,768.8 L160.7,767.5 L165.9,766.9 L170.6,767.0 M139.3,771.6 L138.0,774.6 L136.0,779.2 L133.6,784.2 L132.8,791.6 M132.8,791.6 L138.8,793.2 L143.5,797.2 L149.0,799.2 L154.2,800.4 L158.2,801.4 L165.3,803.2 L170.4,804.7 M132.8,791.6 L132.8,796.2 L134.4,801.6 L134.3,807.2 L133.6,811.8 L133.8,817.3 L133.8,822.0 L133.2,828.4 L133.0,833.3 M133.0,833.3 L139.2,832.7 L145.4,834.1 L150.1,832.9 L157.4,833.4 L162.6,832.4 L168.1,833.2 L171.8,833.0 L177.4,832.1 M133.0,833.3 L133.1,839.0 L135.9,845.7 L136.1,851.0 L137.7,854.2 L141.3,857.6 L143.1,861.9 M143.1,861.9 L148.1,862.7 L154.0,864.2 L158.9,864.3 L165.7,867.0 L170.6,868.4 M168.3,-29.1 L173.3,-29.1 L179.6,-30.9 L185.6,-31.6 L191.4,-30.8 L195.2,-30.5 L201.0,-31.0 L205.3,-30.5 L211.1,-29.0 M168.3,-29.1 L167.8,-22.3 L168.6,-15.6 L168.1,-9.5 L168.1,-4.3 L168.2,-0.8 L168.0,4.4 M168.0,4.4 L172.5,5.7 L179.5,7.6 L184.3,8.1 L188.7,8.8 L194.9,9.9 L199.1,11.8 L203.8,14.7 L208.7,15.2 M162.7,39.0 L166.5,37.1 L171.0,37.2 L176.8,35.7 L180.7,35.0 L185.7,34.3 L191.2,33.9 L197.3,33.8 L203.3,33.6 M162.7,39.0 L165.1,43.1 L168.2,46.7 L171.1,52.3 L172.8,57.2 L176.1,61.7 L178.0,66.5 L180.5,70.3 M180.5,70.3 L186.6,72.3 L191.8,73.9 L198.7,76.4 M180.5,70.3 L179.7,77.1 L179.4,81.4 L177.4,88.4 L177.4,93.2 L175.9,98.2 M189.6,73.3 L189.9,78.3 L189.8,84.6 L189.5,90.5 L189.7,95.8 L190.4,101.3 L191.7,106.2 M175.9,98.2 L179.8,101.8 L184.3,103.2 L188.2,106.1 L192.4,108.0 L198.0,110.9 L203.0,112.3 L207.5,114.2 M174.8,143.1 L180.2,142.4 L185.7,140.0 L191.2,138.0 L198.1,137.7 L202.1,134.7 L206.7,135.0 L211.1,132.8 M174.8,143.1 L173.4,147.2 L172.4,153.4 L172.1,159.4 L174.2,164.5 L174.5,171.3 M174.5,171.3 L179.3,170.8 L184.6,169.6 L191.2,166.8 L197.8,166.2 M174.5,171.3 L173.9,176.7 L173.2,181.6 L173.5,186.3 L172.0,191.7 L170.7,196.1 L171.1,202.9 L170.7,206.9 M170.7,206.9 L175.6,206.1 L180.0,206.5 L183.9,207.4 L190.9,206.3 L197.7,208.1 M170.7,206.9 L173.0,211.0 L174.8,216.6 L178.0,223.1 L178.9,230.0 M174.8,218.4 L180.7,219.8 L185.9,220.6 L190.3,219.9 L195.9,222.7 L200.8,225.3 L204.5,226.5 M178.9,230.0 L181.9,232.8 L186.5,235.1 L190.5,238.8 L194.7,240.8 L199.8,241.5 L206.6,243.2 L211.2,245.0 M162.9,275.0 L167.8,276.4 L174.1,276.9 L179.0,277.8 L184.8,277.6 L188.4,278.9 L193.2,278.3 L199.1,277.3 M162.9,275.0 L166.4,280.9 L168.4,284.2 L171.5,289.0 L174.3,295.5 L176.4,298.7 L179.3,303.3 M171.1,289.2 L177.5,288.8 L182.4,288.9 L188.7,290.4 L193.5,290.3 L199.7,289.4 M179.3,303.3 L182.6,301.9 L187.1,301.3 L193.1,302.0 L200.3,301.5 M179.3,303.3 L178.2,308.6 L176.4,314.5 L175.2,321.4 L174.7,326.1 L172.0,331.3 L172.3,335.7 L169.9,340.4 M169.9,340.4 L173.8,339.5 L180.3,338.0 L185.1,337.8 L188.9,337.1 L194.8,333.8 L198.2,331.6 L203.3,330.2 L208.6,327.7 M169.9,340.4 L168.2,344.6 L167.7,349.8 L166.8,356.8 L164.7,364.3 M189.2,334.0 L187.8,340.4 L184.7,345.8 L183.2,349.8 L180.9,356.3 L181.0,361.0 L180.3,365.0 L180.3,370.0 M164.7,364.3 L170.0,366.1 L175.6,367.1 L181.1,369.2 L185.3,371.3 L189.7,372.8 L195.9,375.7 M165.0,403.7 L171.0,402.7 L175.1,403.1 L181.2,402.8 L186.4,402.1 L189.5,400.7 L195.5,400.8 L199.8,399.1 M165.0,403.7 L164.2,406.9 L164.8,411.3 L166.1,416.5 L166.4,422.8 L167.3,429.6 M167.3,429.6 L172.7,431.5 L177.4,432.9 L184.0,434.0 L189.1,436.7 L194.4,436.8 L199.4,438.2 L205.6,438.5 M167.3,429.6 L168.2,433.7 L168.7,439.9 L167.8,445.6 L168.7,450.2 L169.8,454.4 L170.6,459.8 L172.5,466.9 L172.5,470.9 L174.8,477.1 M174.8,477.1 L180.3,473.8 L183.4,471.7 L189.3,468.9 L194.1,464.7 M174.8,477.1 L175.2,483.9 L174.5,490.8 L172.5,496.8 L168.7,501.9 L166.9,505.1 M166.9,505.1 L172.6,503.9 L177.5,503.2 L183.0,503.2 L188.2,501.2 L193.8,501.9 L198.9,501.4 L202.7,500.7 M168.1,523.1 L174.7,521.3 L180.2,520.6 L184.2,521.0 L191.1,518.5 L195.8,519.7 L200.5,518.2 M169.3,541.1 L175.9,541.0 L182.0,539.9 L186.3,539.2 L193.3,537.0 L198.2,535.7 M169.3,541.1 L170.1,549.0 L170.1,553.8 L171.1,558.1 L172.7,562.3 M172.7,562.3 L176.7,563.6 L182.8,563.8 L186.9,563.4 L193.2,564.0 L197.5,564.5 L203.6,564.5 L208.5,563.9 L213.1,564.8 M172.7,562.3 L172.1,566.3 L171.1,572.0 L168.1,577.4 L167.9,583.7 L165.4,590.5 M165.4,590.5 L169.9,591.2 L174.4,590.0 L180.8,591.6 L184.9,590.8 L192.5,591.4 L197.9,592.2 L204.9,592.4 M165.4,590.5 L166.1,595.5 L167.5,599.0 L168.4,603.8 L167.9,608.9 L168.8,613.3 L169.3,618.0 L169.6,624.7 L170.6,630.7 M170.6,630.7 L176.4,633.1 L182.0,634.1 L188.5,635.3 L192.9,637.0 L199.5,636.3 M170.6,630.7 L169.6,635.8 L169.3,641.4 L168.6,645.9 L167.0,652.7 L166.1,657.3 L164.4,663.2 M164.4,663.2 L170.8,666.0 L177.5,669.1 L181.4,671.0 L188.0,672.8 L192.5,672.7 L196.3,673.7 M164.4,663.2 L165.9,667.9 L165.5,673.3 L167.4,678.6 L167.8,684.1 L168.1,689.3 L167.5,693.3 L167.2,698.8 L167.4,704.5 M167.4,704.5 L171.9,702.8 L175.6,702.6 L181.1,700.8 L185.7,697.9 L189.8,697.7 L196.0,695.0 L201.1,694.6 L207.2,691.8 L212.2,690.9 M167.4,704.5 L166.2,711.3 L167.6,717.6 L165.7,722.6 L166.7,728.2 L165.1,732.7 L164.5,736.6 L163.9,741.8 M163.9,741.8 L169.7,740.9 L174.1,738.1 L180.1,736.4 L185.5,735.9 L189.9,734.8 L196.0,732.3 L200.0,731.1 L204.5,730.1 L208.2,730.7 L212.8,729.5 M163.9,741.8 L165.5,746.0 L165.5,751.0 L167.9,755.7 L168.8,761.4 L170.6,767.0 M188.3,735.7 L188.6,740.0 L189.0,746.9 L189.1,752.0 L190.0,757.1 L189.9,763.8 L190.0,768.6 M170.6,767.0 L176.1,768.7 L182.6,768.7 L187.3,769.4 L193.2,769.8 L199.0,771.3 L203.2,770.7 L209.4,770.1 M190.0,768.6 L188.3,776.0 L188.2,781.0 L187.8,788.2 L186.6,793.0 L186.6,799.0 L185.1,803.1 M170.4,804.7 L177.4,804.7 L183.7,805.9 L189.5,804.7 L195.3,804.0 L199.9,801.5 M170.4,804.7 L172.3,809.0 L172.9,813.6 L175.6,818.4 L176.0,824.9 L177.4,832.1 M177.4,832.1 L184.6,832.9 L189.1,834.0 L195.1,834.6 L198.4,836.8 L203.9,837.4 L207.1,837.1 M177.4,832.1 L176.5,836.2 L173.9,842.2 L174.0,846.0 L171.7,852.6 L171.1,857.4 L171.9,861.9 L170.6,868.4 M174.0,850.3 L179.0,853.1 L184.7,853.3 L189.6,854.4 L196.4,854.9 L203.2,853.1 M170.6,868.4 L176.3,868.4 L181.4,867.2 L187.2,868.1 L193.6,868.1 L199.3,869.1 M211.1,-29.0 L217.7,-28.7 L223.0,-29.5 L227.4,-29.4 L233.0,-29.0 L238.4,-26.3 L241.7,-24.8 L246.2,-23.5 M211.1,-29.0 L210.6,-21.9 L212.6,-15.5 L212.3,-10.9 L212.1,-4.4 L210.8,0.1 L211.2,6.1 L209.0,10.4 L208.7,15.2 M208.7,15.2 L213.5,12.6 L219.2,8.7 L224.1,5.0 L227.8,3.0 L232.7,1.3 L237.7,-1.7 M208.7,15.2 L206.6,23.8 L205.0,29.7 L203.3,33.6 M203.3,33.6 L209.7,33.3 L214.4,33.8 L219.4,32.8 L226.6,33.6 L231.6,34.9 L236.9,36.0 M203.3,33.6 L201.3,38.7 L201.9,45.2 L200.5,49.8 L198.7,54.9 L200.1,61.9 L198.7,66.5 L198.6,71.9 L198.7,76.4 M198.7,76.4 L202.9,77.8 L207.1,76.4 L212.7,77.3 L217.0,76.7 L223.0,77.7 L229.2,77.1 L234.5,76.4 L241.4,75.6 M220.0,76.0 L220.4,82.1 L218.9,87.5 L220.1,93.3 L220.2,98.2 L221.5,103.2 L222.9,106.4 M207.5,114.2 L214.1,111.1 L219.7,106.5 L224.6,103.8 L229.1,102.3 L233.6,101.1 L238.3,98.6 M211.1,132.8 L218.4,134.7 L224.2,135.5 L230.2,137.7 L235.3,139.7 L239.9,140.6 M211.1,132.8 L209.1,137.8 L205.5,140.4 L203.3,145.1 L202.1,150.9 L199.8,154.7 L199.9,159.8 L197.8,166.2 M197.8,166.2 L203.2,167.9 L208.3,168.1 L213.5,170.6 L218.3,171.3 L221.5,173.6 L227.0,176.3 L230.6,178.8 M197.8,166.2 L196.4,171.5 L196.1,178.2 L197.6,183.1 L196.2,188.0 L196.2,193.6 L196.2,198.9 L197.1,202.6 L197.7,208.1 M197.7,208.1 L202.5,208.0 L207.2,207.4 L212.3,206.2 L219.4,203.8 L223.9,202.8 L229.8,200.2 L235.0,198.5 L240.1,196.5 M211.2,245.0 L216.1,243.6 L221.1,240.9 L226.2,237.1 L230.9,236.8 L235.9,233.2 L240.7,232.7 L245.6,229.8 M211.2,245.0 L209.1,251.2 L206.0,256.8 L203.2,264.1 L202.7,268.9 L201.5,272.7 L199.1,277.3 M199.1,277.3 L204.2,276.8 L208.1,277.2 L213.8,275.5 L220.1,274.9 L226.4,275.2 L233.6,274.4 M216.4,275.9 L215.7,281.9 L215.9,285.6 L217.9,291.5 L217.9,297.4 L219.6,302.8 M200.3,301.5 L201.7,308.6 L203.8,313.4 L205.4,320.1 L207.7,324.0 L208.6,327.7 M208.6,327.7 L215.5,330.7 L220.4,332.5 L226.3,334.0 L231.4,334.4 L236.1,334.7 L239.9,335.2 M208.6,327.7 L208.1,332.7 L207.5,337.9 L206.0,341.4 L204.7,348.3 L204.2,353.7 L202.2,359.1 L199.8,364.1 L198.5,369.5 L195.9,375.7 M224.3,331.4 L222.8,337.1 L222.3,340.5 L220.5,346.5 L218.4,351.3 L216.8,358.0 L216.9,363.1 L214.6,369.1 M195.9,375.7 L201.5,372.6 L205.6,370.0 L212.0,367.3 L215.6,366.1 L222.5,363.6 L227.5,364.4 L233.2,362.5 M195.9,375.7 L196.3,380.7 L196.3,386.1 L198.5,392.8 L199.8,399.1 M199.8,399.1 L205.9,399.1 L211.1,399.0 L217.6,401.5 L223.6,403.9 L228.4,406.3 M199.8,399.1 L200.4,403.4 L201.2,408.5 L202.7,414.6 L203.0,418.9 L203.1,424.8 L203.9,431.8 L205.6,438.5 M205.6,438.5 L210.5,438.6 L215.8,436.2 L221.4,436.7 L225.6,436.3 L232.2,435.5 L236.5,436.2 L242.1,435.9 M205.6,438.5 L204.3,442.4 L203.9,447.6 L201.2,453.2 L196.8,459.6 L194.1,464.7 M223.8,437.2 L223.1,441.3 L223.9,447.6 L222.3,452.7 L220.0,459.5 L218.0,464.9 M202.7,500.7 L210.2,501.4 L215.0,502.5 L220.7,501.8 L226.2,501.1 L232.3,498.7 M198.2,535.7 L201.8,534.0 L206.4,533.1 L211.3,532.0 L217.5,530.9 L223.0,530.2 L228.2,528.0 L233.4,527.9 L239.7,526.8 L244.5,524.8 M198.2,535.7 L202.6,539.7 L205.4,545.9 L208.9,550.8 L209.9,555.1 L212.1,559.3 L213.1,564.8 M213.1,564.8 L217.3,564.4 L222.9,564.3 L229.5,562.5 L237.1,561.9 M213.1,564.8 L210.3,568.8 L208.8,574.4 L206.7,580.2 L205.4,586.4 L204.9,592.4 M209.0,578.6 L215.4,578.3 L219.7,577.4 L225.2,578.5 L230.9,577.0 L235.8,578.7 L239.7,579.5 M204.9,592.4 L210.4,593.4 L214.5,593.0 L218.8,593.3 L224.6,594.1 L230.3,595.4 L237.1,596.4 L242.4,597.1 M204.9,592.4 L203.2,597.2 L201.8,604.3 L202.2,608.9 L199.5,614.6 L199.1,619.9 L198.8,625.7 L199.0,630.5 L199.5,636.3 M223.6,594.7 L222.6,600.3 L222.7,606.9 L221.1,613.7 L221.1,618.5 L220.4,624.0 L218.4,629.0 L216.6,633.7 M199.5,636.3 L206.4,635.0 L213.5,633.8 L217.9,631.3 L224.9,631.0 L229.9,631.2 L233.7,631.1 M199.5,636.3 L198.6,640.9 L197.3,644.7 L197.5,650.3 L197.1,654.7 L197.2,661.1 L197.4,666.7 L196.3,673.7 M197.9,655.0 L204.1,654.2 L210.6,653.3 L217.2,653.2 L220.6,650.9 L226.7,651.1 L230.6,651.3 L235.7,651.3 M196.3,673.7 L203.2,674.2 L209.0,674.9 L213.1,675.6 L220.0,674.4 L224.8,675.1 L228.6,673.5 L234.2,673.5 L237.8,671.4 M196.3,673.7 L200.9,678.1 L203.7,681.5 L208.0,685.7 L212.2,690.9 M212.2,690.9 L215.7,694.5 L219.1,697.6 L224.0,701.7 L229.6,704.0 L234.1,705.9 M212.2,690.9 L213.5,697.2 L213.7,702.9 L213.4,707.8 L213.3,714.2 L214.0,718.2 L213.9,723.4 L212.8,729.5 M209.4,770.1 L213.9,766.3 L218.7,762.6 L222.6,758.7 L229.0,757.3 M209.4,770.1 L208.3,777.3 L208.0,782.0 L206.4,787.6 L205.0,793.1 L202.4,797.4 L199.9,801.5 M199.9,801.5 L206.4,801.5 L212.0,800.5 L217.5,800.1 L224.1,799.8 L227.7,801.1 L233.9,800.3 L237.6,802.6 L242.6,802.5 M199.9,801.5 L201.3,807.2 L203.6,811.7 L204.2,817.3 L205.5,821.7 L204.8,827.8 L206.3,832.4 L207.1,837.1 M207.1,837.1 L211.3,834.7 L215.0,831.8 L219.2,830.2 L224.2,827.0 L230.7,824.8 M207.1,837.1 L205.0,841.2 L203.7,846.1 L202.2,850.8 L201.3,857.8 L199.5,862.9 L199.3,869.1 M246.2,-23.5 L250.6,-24.4 L255.0,-24.3 L260.0,-23.5 L265.2,-22.6 L269.8,-22.0 L276.3,-22.0 M246.2,-23.5 L243.5,-17.2 L240.6,-13.3 L239.0,-7.1 L237.7,-1.7 M237.7,-1.7 L243.4,-1.1 L249.4,-2.1 L256.8,-1.9 L261.6,-0.5 L267.5,-1.0 L271.8,-1.1 M237.7,-1.7 L237.9,3.3 L236.5,9.6 L235.8,15.9 L237.0,19.6 L236.3,25.8 L235.6,31.6 L236.9,36.0 M236.9,36.0 L241.8,35.6 L246.3,32.6 L252.2,33.3 L256.7,32.8 L261.7,33.1 L268.0,32.9 M236.9,36.0 L236.5,40.7 L236.1,46.7 L236.3,52.7 L237.3,58.2 L239.7,64.5 L239.4,68.8 L241.4,75.6 M241.4,75.6 L239.1,81.7 L238.3,87.3 L237.4,92.9 L238.3,98.6 M256.0,74.5 L253.3,79.9 L253.4,85.0 L252.6,88.0 L251.8,94.8 L251.2,99.3 M238.3,98.6 L244.5,99.8 L249.8,101.5 L255.3,101.9 L258.8,100.7 L264.0,100.0 M238.3,98.6 L238.9,103.1 L239.7,109.4 L239.2,113.6 L239.8,119.7 L239.1,125.4 L241.1,130.4 L240.3,135.0 L239.9,140.6 M239.9,140.6 L238.3,144.7 L238.3,151.3 L236.7,154.8 L235.7,161.7 L233.5,166.3 L231.9,172.3 L230.6,178.8 M235.2,159.7 L240.5,158.2 L246.4,157.9 L252.2,156.7 L256.7,156.7 L262.0,155.5 L266.2,155.8 L271.6,154.6 L275.8,153.7 M230.6,178.8 L234.4,179.6 L239.0,179.4 L245.2,181.0 L249.3,181.8 L253.7,180.9 L260.8,181.5 L265.2,180.9 L271.4,179.4 L276.1,178.8 M240.1,196.5 L246.0,196.6 L252.9,198.5 L258.3,199.9 L263.9,200.8 L268.5,199.8 L274.0,200.6 L279.0,201.7 M240.1,196.5 L241.0,203.9 L243.5,210.3 L244.1,214.7 L245.2,219.9 L244.8,224.8 L245.6,229.8 M242.9,213.1 L248.3,215.1 L254.8,218.1 L260.1,219.4 L265.5,220.0 L270.8,220.5 L275.0,220.2 M245.6,229.8 L245.0,235.1 L242.5,238.4 L240.1,242.7 L238.9,247.9 L238.9,252.9 L236.9,258.6 L236.7,264.1 L234.2,268.9 L233.6,274.4 M233.6,274.4 L239.5,275.6 L245.0,276.3 L252.3,277.8 L257.3,277.2 L263.0,279.3 L267.3,278.6 L272.7,279.5 M233.6,274.4 L234.2,279.4 L234.1,284.8 L235.7,289.8 L235.9,295.1 L238.2,300.6 L238.9,304.1 M238.9,304.1 L243.0,303.0 L248.1,302.1 L251.9,299.9 L256.7,299.2 L262.8,300.3 L268.8,299.7 L273.7,299.0 M238.9,304.1 L238.8,311.3 L238.4,315.6 L237.6,322.5 L237.9,326.5 L239.1,330.8 L239.9,335.2 M239.9,335.2 L244.6,335.5 L249.8,336.9 L254.0,337.2 L259.4,337.3 L266.0,336.6 L270.8,336.5 L277.2,335.7 M239.9,335.2 L238.0,341.7 L237.4,347.8 L236.7,352.3 L234.8,358.1 L233.2,362.5 M233.2,362.5 L237.4,365.5 L243.2,366.7 L246.9,368.1 L252.7,369.1 L258.6,371.0 L262.2,372.6 L268.1,372.3 L272.0,373.5 M228.4,406.3 L232.6,407.6 L237.7,408.5 L244.5,409.5 L249.9,408.8 L254.9,407.7 L260.0,407.4 M228.4,406.3 L229.6,411.9 L231.5,417.1 L232.4,422.0 L236.5,427.2 L239.0,432.2 L242.1,435.9 M242.1,435.9 L247.2,436.0 L252.6,437.9 L258.1,437.5 L262.7,435.7 L268.9,435.2 L273.2,434.8 M242.1,435.9 L242.6,440.3 L241.8,445.6 L242.9,452.8 L242.2,458.4 L241.8,465.2 M241.8,465.2 L249.1,467.8 L254.7,468.5 L261.4,467.9 L265.8,468.6 L270.5,467.2 M241.8,465.2 L241.0,472.9 L239.8,478.4 L238.4,484.5 L235.0,489.8 L234.3,493.8 L232.3,498.7 M232.3,498.7 L238.7,499.3 L245.3,499.9 L249.4,500.5 L254.5,500.1 L258.9,501.5 L263.9,501.6 M244.5,524.8 L249.5,529.0 L253.8,531.3 L260.7,534.0 M244.5,524.8 L243.2,528.9 L241.7,535.1 L240.9,539.4 L239.3,544.8 L238.5,550.2 L237.4,556.7 L237.1,561.9 M237.1,561.9 L241.9,561.3 L247.8,561.7 L251.6,562.1 L258.2,562.7 L261.7,563.5 L267.9,565.1 L272.9,565.9 M237.1,561.9 L237.7,567.9 L237.7,571.2 L238.1,576.1 L239.0,582.3 L239.3,586.6 L241.3,591.2 L242.4,597.1 M242.4,597.1 L246.9,599.3 L253.4,601.7 L257.9,603.8 L263.9,605.8 L267.9,607.2 L271.3,609.2 M242.4,597.1 L242.6,601.5 L241.5,607.3 L239.0,610.9 L238.1,616.2 L238.0,621.3 L235.5,625.6 L233.7,631.1 M233.7,631.1 L232.5,636.6 L233.7,642.0 L233.9,646.5 L234.3,653.2 L235.1,656.9 L235.1,663.0 L236.7,667.1 L237.8,671.4 M255.7,628.4 L255.6,632.5 L255.4,638.9 L254.8,642.0 L255.2,648.8 L254.7,654.1 L256.4,658.7 L255.8,664.3 L256.8,669.9 M237.8,671.4 L243.0,672.2 L248.7,671.8 L252.8,672.1 L258.8,672.9 L263.1,670.2 L269.3,670.0 L275.8,668.5 M237.8,671.4 L238.1,677.8 L238.3,682.5 L237.6,689.2 L237.5,695.4 L236.3,699.6 L234.1,705.9 M256.8,669.9 L255.6,675.9 L252.7,681.4 L252.3,686.3 L250.3,691.8 L248.5,696.5 L247.5,701.1 M234.1,705.9 L240.6,705.8 L247.0,704.0 L252.4,702.6 L256.9,698.9 L261.0,696.2 M234.1,705.9 L233.5,711.1 L230.7,716.0 L230.6,721.3 L229.2,727.4 M229.2,727.4 L230.0,734.0 L231.1,739.5 L231.2,744.5 L230.3,750.2 L229.0,757.3 M229.1,742.3 L234.7,744.2 L240.6,745.0 L247.5,746.1 L251.8,748.5 L257.6,748.4 L262.6,748.2 L267.7,748.6 M229.0,757.3 L234.2,759.5 L240.6,762.8 L247.5,765.7 L251.1,766.3 L258.0,769.4 L262.5,770.2 L265.4,772.4 L270.8,773.6 M249.9,765.4 L250.3,770.2 L250.6,775.6 L250.1,780.9 L251.2,787.4 L251.4,791.8 L253.7,799.1 L254.5,804.0 M242.6,802.5 L246.3,802.9 L252.0,803.5 L258.3,804.1 L266.5,805.4 M242.6,802.5 L240.2,807.2 L239.4,813.2 L236.3,816.0 L233.6,821.2 L230.7,824.8 M230.7,824.8 L237.9,823.9 L243.3,823.3 L249.3,822.5 L255.3,822.0 L259.4,821.8 L264.4,822.3 L270.4,823.0 L273.9,823.7 M230.7,824.8 L230.8,830.2 L232.0,836.5 L232.5,842.3 L232.4,846.8 L233.4,852.0 L234.3,858.9 L235.1,862.8 L235.3,868.9 M235.3,868.9 L239.6,868.5 L244.2,870.0 L250.0,869.1 L254.8,869.0 L258.8,868.4 L265.6,868.8 L271.7,866.7 L277.2,866.0 M276.3,-22.0 L281.3,-21.6 L285.7,-23.2 L290.6,-22.7 L295.4,-22.9 L301.8,-23.1 L305.6,-23.1 L311.5,-22.7 M276.3,-22.0 L275.6,-15.0 L273.9,-10.2 L273.2,-6.2 L271.8,-1.1 M271.8,-1.1 L276.5,-0.2 L280.6,1.7 L286.3,1.5 L290.4,2.8 L297.1,3.3 L301.8,3.2 L307.8,2.9 M271.8,-1.1 L269.8,4.8 L268.9,9.0 L268.8,13.7 L267.5,19.4 L268.0,25.8 L268.0,32.9 M268.0,32.9 L272.7,34.8 L276.7,37.6 L280.8,39.9 L287.1,42.0 L291.4,43.1 L297.9,44.9 L302.6,46.0 L309.1,47.6 M268.0,32.9 L267.8,37.3 L267.7,43.5 L266.6,48.3 L267.5,53.3 L267.3,56.8 L269.4,62.3 L270.3,67.5 L270.6,73.4 M270.6,73.4 L275.6,74.4 L280.1,74.3 L285.9,73.5 L291.3,74.8 L297.2,73.9 L303.7,71.6 L310.2,70.7 M270.6,73.4 L269.3,78.8 L268.0,83.2 L268.3,88.6 L265.9,95.3 L264.0,100.0 M290.4,72.1 L290.5,78.5 L289.7,83.2 L289.4,87.1 L289.0,92.2 L286.6,97.0 L286.1,102.4 M264.0,100.0 L269.5,99.9 L275.9,100.9 L282.0,102.9 L288.3,101.9 L294.6,102.9 L297.8,102.8 L303.2,104.5 L308.1,104.7 M264.0,100.0 L266.5,106.7 L268.1,111.2 L269.5,117.1 L271.2,120.8 L273.6,124.6 L275.6,128.6 M275.6,128.6 L279.6,128.2 L286.2,127.7 L295.2,128.9 M275.6,128.6 L274.8,132.8 L274.5,137.6 L274.3,141.7 L273.9,146.3 L274.5,151.5 L273.1,158.1 L274.2,161.6 L274.0,167.1 L275.5,172.8 L276.1,178.8 M276.1,178.8 L282.1,175.1 L287.8,171.4 L292.1,168.6 L294.6,165.0 M276.1,178.8 L277.2,185.5 L277.7,192.7 L278.2,196.9 L279.0,201.7 M277.5,190.2 L281.7,187.8 L289.1,184.6 L295.4,184.5 M279.0,201.7 L283.2,202.0 L290.3,204.3 L296.2,203.9 M271.1,238.7 L274.9,239.6 L280.3,240.0 L286.0,240.9 L291.3,239.4 L295.4,239.9 L302.2,238.7 L307.0,237.7 M271.1,238.7 L272.2,243.9 L271.1,247.3 L271.4,253.1 L272.5,258.7 L272.6,263.3 L272.1,269.2 L273.2,273.2 L272.7,279.5 M272.7,279.5 L278.1,277.6 L283.8,274.9 L288.7,274.8 L294.6,273.7 L301.4,273.0 M272.7,279.5 L272.4,287.1 L272.4,293.0 L273.7,299.0 M273.7,299.0 L277.8,301.9 L280.9,302.4 L287.5,302.9 L292.9,303.4 L299.1,302.3 M273.7,299.0 L274.8,303.7 L277.0,308.3 L278.3,313.2 L278.5,317.7 L277.8,323.9 L277.6,329.9 L277.2,335.7 M286.4,300.6 L287.4,306.0 L287.9,313.7 L289.5,318.9 L290.0,324.0 L290.4,329.2 L292.7,334.9 M277.2,335.7 L283.1,334.3 L288.2,334.2 L294.3,334.2 L298.1,332.4 L303.9,333.9 L308.1,334.0 M277.2,335.7 L278.0,341.0 L275.9,347.2 L275.6,353.8 L276.4,360.0 L275.4,363.3 L272.5,369.0 L272.0,373.5 M272.0,373.5 L279.5,376.1 L286.5,376.6 L292.0,376.8 L296.6,377.0 M260.0,407.4 L264.0,406.3 L270.7,404.8 L274.6,404.0 L280.3,402.9 L285.2,403.2 L290.2,402.4 L296.9,400.3 L302.0,400.6 L307.4,399.3 M260.0,407.4 L262.5,413.5 L265.6,417.8 L268.6,422.5 L270.8,427.6 L272.5,430.3 L273.2,434.8 M273.2,434.8 L277.0,434.3 L281.2,435.8 L287.4,434.0 L292.6,435.8 L300.4,435.6 M273.2,434.8 L272.2,440.3 L273.1,446.5 L272.5,452.8 L272.0,457.5 L270.7,461.5 L270.5,467.2 M270.5,467.2 L275.8,466.1 L282.5,466.6 L286.3,465.9 L293.3,464.3 L298.8,463.1 L304.9,462.5 M270.5,467.2 L269.9,472.6 L269.3,476.4 L266.7,482.1 L266.9,485.9 L265.7,492.2 L264.2,495.6 L263.9,501.6 M263.9,501.6 L270.5,501.4 L278.7,500.3 L283.8,498.7 L287.9,496.1 L293.1,495.2 M263.9,501.6 L262.5,507.7 L262.3,513.6 L260.6,519.6 L260.2,525.1 L259.7,529.5 L260.7,534.0 M262.3,517.8 L267.0,516.6 L270.8,516.1 L277.4,513.3 L282.1,512.9 L288.8,512.1 L295.2,512.1 L300.9,511.0 M260.7,534.0 L267.1,533.4 L273.9,530.5 L278.5,530.2 L283.7,530.1 L290.6,527.4 L294.5,527.8 L300.0,526.7 L304.9,527.1 L308.7,526.9 M260.7,534.0 L263.5,537.9 L266.9,542.8 L267.7,549.1 L269.9,555.1 L271.0,560.2 L272.9,565.9 M272.9,565.9 L279.7,563.7 L283.9,561.6 L290.8,561.2 L295.6,560.5 L302.2,560.9 M272.9,565.9 L272.6,570.5 L274.2,575.4 L273.2,580.5 L273.5,587.7 L273.5,591.8 L271.9,598.8 L272.0,603.6 L271.3,609.2 M272.1,587.5 L278.7,586.4 L284.3,583.5 L291.5,581.3 L295.1,580.1 L299.7,577.2 M271.3,609.2 L275.7,606.6 L281.7,603.4 L285.2,601.8 L289.0,597.8 L293.3,596.7 L297.2,593.4 M271.3,609.2 L272.5,614.7 L274.1,619.6 L277.8,625.7 M277.8,625.7 L283.5,626.8 L289.3,628.2 L296.3,627.4 L301.1,626.4 M277.8,625.7 L278.1,630.5 L276.4,635.7 L275.7,640.6 L276.3,646.5 L275.5,652.6 L275.1,656.9 L274.9,663.8 L275.8,668.5 M275.8,668.5 L277.8,666.8 L283.2,663.4 L287.1,660.3 L293.5,658.2 M275.8,668.5 L271.8,672.5 L270.3,677.4 L266.0,681.4 L263.6,686.7 L263.0,690.9 L261.0,696.2 M284.7,663.3 L284.9,669.0 L284.3,675.0 L283.8,681.1 L283.0,687.9 L280.4,692.3 L278.7,697.5 M261.0,696.2 L264.8,696.7 L271.2,699.3 L275.9,698.6 L280.3,699.1 L285.6,700.7 L290.9,700.3 L296.4,698.8 M261.0,696.2 L261.2,699.9 L261.9,705.4 L264.4,711.6 L264.4,716.5 L264.7,723.6 M262.8,709.9 L270.0,709.0 L274.6,709.0 L280.9,708.3 L286.1,707.9 L291.4,709.8 L295.3,710.6 M264.7,723.6 L270.9,724.4 L277.0,723.2 L281.3,723.1 L287.4,723.8 L294.2,722.4 M264.7,723.6 L264.6,728.2 L264.8,732.2 L267.0,738.9 L266.0,742.6 L267.2,747.4 L268.1,752.1 L269.4,758.8 L268.9,762.7 L270.9,769.3 L270.8,773.6 M279.4,723.0 L280.5,728.4 L280.9,734.0 L281.9,737.6 L281.9,742.6 L282.6,749.2 L282.5,752.8 L284.1,757.7 L285.2,763.0 L286.4,768.4 M270.8,773.6 L274.3,771.3 L278.4,770.3 L284.6,767.2 L289.7,765.1 L296.3,765.1 L302.0,763.2 M270.8,773.6 L268.7,778.6 L267.6,784.5 L266.7,789.5 L267.0,794.3 L265.4,800.0 L266.5,805.4 M268.6,789.5 L272.2,786.9 L277.6,782.9 L281.4,781.7 L286.3,780.5 L292.0,777.8 L299.1,777.8 L304.5,776.1 M266.5,805.4 L270.7,803.5 L275.4,803.3 L280.8,801.5 L285.4,799.0 L291.2,796.1 L295.5,794.9 L302.2,792.1 L307.1,789.0 M266.5,805.4 L268.4,811.1 L270.4,818.7 L273.9,823.7 M273.9,823.7 L280.8,823.6 L285.0,823.4 L290.9,824.7 L295.5,825.7 L301.1,828.9 M273.9,823.7 L273.0,829.0 L273.4,834.0 L274.1,838.3 L273.9,844.8 L273.9,849.3 L274.5,854.6 L276.3,861.3 L277.2,866.0 M277.2,866.0 L283.8,869.6 L289.2,872.5 L293.5,873.3 M311.5,-22.7 L317.1,-26.0 L321.4,-28.5 L325.7,-31.3 L330.4,-35.1 M311.5,-22.7 L309.8,-16.4 L308.5,-12.2 L308.6,-7.0 L309.0,-1.9 L307.8,2.9 M307.8,2.9 L307.4,9.1 L307.0,14.4 L306.2,20.0 L305.1,25.4 L305.7,30.4 L306.8,36.4 L308.7,42.5 L309.1,47.6 M309.1,47.6 L314.7,45.2 L320.6,42.8 L325.3,40.3 L331.3,38.9 L335.2,36.3 L338.4,35.9 M309.1,47.6 L309.0,55.1 L309.2,62.5 L309.6,67.1 L310.2,70.7 M323.8,41.8 L322.8,46.9 L321.6,51.5 L320.7,55.4 L318.8,62.4 L319.4,66.9 M310.2,70.7 L316.2,69.6 L322.5,66.8 L328.5,63.0 M310.2,70.7 L310.4,77.1 L309.4,83.3 L307.4,88.8 L308.5,93.9 L307.1,99.8 L308.1,104.7 M308.1,104.7 L313.7,104.5 L320.8,104.4 L327.2,103.8 L332.0,103.4 L336.4,102.6 L340.6,100.5 M308.1,104.7 L306.8,108.2 L306.0,113.5 L303.0,118.2 L299.4,123.3 L295.2,128.9 M295.2,128.9 L300.6,130.9 L306.4,131.2 L310.6,132.8 L317.1,133.8 L320.8,135.3 L326.9,134.6 L330.8,136.3 L337.2,137.6 L341.8,137.3 M295.2,128.9 L296.0,135.6 L296.8,140.7 L295.8,146.2 L297.5,152.0 L296.3,156.5 L296.1,160.2 L294.6,165.0 M294.6,165.0 L300.0,165.2 L305.0,164.3 L310.3,163.5 L314.0,163.2 L320.3,163.5 L324.6,164.6 L329.5,165.2 L335.8,164.5 L339.7,165.9 L344.7,167.0 M294.6,165.0 L295.0,169.9 L296.1,175.6 L296.0,180.9 L297.3,187.1 L296.3,192.2 L296.7,199.0 L296.2,203.9 M296.2,203.9 L299.9,201.9 L305.6,201.7 L309.5,200.1 L314.3,200.5 L320.5,199.6 L326.2,199.6 L331.0,199.3 M301.6,220.8 L306.6,220.9 L313.7,219.7 L318.1,220.6 L323.1,220.4 L327.8,219.2 L332.8,218.6 L336.6,219.4 M307.0,237.7 L312.8,236.2 L319.4,237.2 L325.0,237.3 L328.3,237.2 L334.5,237.6 L337.6,237.9 L342.3,239.6 M307.0,237.7 L306.3,241.6 L304.4,245.3 L302.9,250.4 L303.1,255.0 L302.5,260.4 L302.1,266.8 L301.4,273.0 M304.2,255.4 L309.9,256.1 L315.1,255.8 L318.9,254.4 L324.7,253.7 L332.2,253.0 L337.6,250.7 M301.4,273.0 L306.1,272.4 L311.7,269.7 L317.2,267.8 L322.2,266.7 L326.6,264.3 L332.9,261.9 M301.4,273.0 L300.7,277.3 L301.4,281.8 L301.1,289.4 L300.3,296.0 L299.1,302.3 M300.3,287.6 L307.0,288.5 L311.4,288.3 L317.5,289.0 L323.6,289.8 L327.0,289.1 L331.7,287.1 L336.3,287.1 M299.1,302.3 L305.3,303.2 L311.0,304.2 L315.9,305.4 L322.3,308.4 L326.4,308.9 L331.7,310.3 L335.0,312.2 L339.6,312.4 M308.1,334.0 L312.9,332.5 L318.0,332.7 L323.2,331.1 L328.7,329.7 L333.4,328.3 L337.8,326.1 M308.1,334.0 L306.8,337.9 L305.9,343.9 L305.0,347.3 L302.1,354.0 L302.3,358.4 L300.2,365.7 L298.9,369.8 L296.6,377.0 M296.6,377.0 L302.0,373.9 L306.2,371.4 L311.9,368.2 L316.6,365.2 L321.0,362.4 L326.6,360.8 M296.6,377.0 L299.0,383.3 L299.9,388.6 L303.4,394.0 L307.4,399.3 M307.4,399.3 L311.5,398.2 L316.6,397.3 L323.1,394.2 L329.4,392.7 M300.4,435.6 L306.2,436.5 L312.2,438.4 L318.0,437.4 L321.4,437.6 L327.1,438.1 M300.4,435.6 L302.8,441.3 L303.4,445.6 L303.8,451.4 L305.4,456.6 L304.9,462.5 M304.9,462.5 L310.4,463.2 L316.6,461.7 L322.5,463.5 L328.0,462.4 L333.7,463.1 L338.7,463.0 L344.0,462.0 M304.9,462.5 L303.2,467.3 L300.1,473.4 L299.0,479.4 L296.3,484.3 L295.7,488.7 L293.1,495.2 M293.1,495.2 L297.9,494.3 L304.0,495.0 L310.2,494.6 L315.7,495.2 L320.6,496.1 L326.4,495.9 L331.1,497.6 L335.7,497.7 L339.7,498.7 L345.5,500.5 M293.1,495.2 L294.0,499.6 L296.0,502.3 L297.6,507.1 L301.6,510.7 L302.4,515.1 L306.4,520.6 L308.7,526.9 M300.9,511.0 L307.0,514.2 L313.0,515.4 L319.2,517.7 L324.1,518.8 L330.2,519.9 L334.0,521.2 L339.4,520.5 L343.8,521.4 M308.7,526.9 L312.9,528.2 L316.9,530.3 L321.7,532.6 L325.3,534.6 L331.3,537.7 L336.2,541.0 L342.1,542.3 M302.2,560.9 L308.7,559.7 L313.6,560.6 L320.2,559.0 L325.3,560.1 L329.2,559.3 L334.7,559.3 L339.8,558.4 L344.8,557.7 M302.2,560.9 L301.5,566.4 L299.8,570.7 L298.8,576.1 L298.3,582.4 L298.1,587.5 L297.2,593.4 M299.7,577.2 L305.8,577.5 L311.4,577.5 L315.0,577.3 L320.8,577.4 L327.5,578.1 L332.1,578.8 L338.4,579.9 M297.2,593.4 L301.7,594.8 L308.5,597.4 L312.7,600.0 L318.1,600.4 L322.0,600.8 L326.9,601.8 L332.1,602.1 M297.2,593.4 L296.8,597.3 L295.5,601.6 L296.5,606.8 L297.4,612.8 L299.4,620.6 L301.1,626.4 M301.1,626.4 L306.1,625.6 L312.0,624.0 L316.5,624.7 L323.4,623.7 L327.3,623.4 L334.0,623.9 L338.7,623.5 L344.9,624.8 M301.1,626.4 L299.7,631.6 L300.1,635.7 L298.3,640.2 L296.3,646.2 L294.7,651.5 L293.5,658.2 M293.5,658.2 L299.2,659.4 L302.5,660.7 L308.2,663.4 L311.8,665.1 L317.9,667.3 L321.6,669.6 L327.4,670.5 L331.9,673.0 M293.5,658.2 L293.3,662.8 L293.0,667.6 L293.8,672.0 L293.6,677.1 L294.9,682.4 L296.0,687.6 L295.8,692.3 L296.4,698.8 M296.4,698.8 L301.7,698.1 L306.7,697.6 L312.8,695.3 L317.4,697.0 L322.6,696.8 L328.3,696.8 M296.4,698.8 L297.7,703.1 L296.2,708.7 L296.4,714.9 L294.2,722.4 M294.2,722.4 L299.5,724.9 L302.7,726.7 L308.4,727.4 L312.7,729.9 L317.9,730.4 L323.5,733.2 L327.8,734.8 L332.7,735.6 M294.2,722.4 L296.6,726.6 L297.1,732.6 L297.5,737.2 L299.0,742.4 L300.6,746.9 L300.6,752.3 L301.7,758.2 L302.0,763.2 M302.0,763.2 L307.0,762.7 L311.4,762.9 L317.1,761.2 L322.2,762.3 L328.2,759.8 L333.7,759.3 L338.6,758.3 L344.6,758.5 M302.0,763.2 L302.3,767.9 L301.9,774.9 L302.5,779.4 L305.4,784.3 L307.1,789.0 M307.1,789.0 L312.7,790.1 L317.1,792.4 L322.4,793.8 L326.5,795.6 L332.2,797.8 L336.9,799.8 L340.8,802.7 M307.1,789.0 L305.2,793.4 L304.0,797.0 L303.4,801.5 L301.7,805.6 L302.0,812.3 L301.0,817.3 L300.7,822.9 L301.1,828.9 M301.1,828.9 L306.2,830.6 L312.3,832.2 L319.2,832.8 L323.6,833.7 L327.9,832.3 L332.9,833.0 L337.9,832.5 L342.7,832.1 M301.1,828.9 L300.7,835.2 L301.2,840.6 L299.7,845.7 L299.4,849.8 L299.5,855.0 L297.0,861.2 L296.6,864.7 L295.4,868.1 L293.5,873.3 M321.9,830.5 L320.7,833.8 L321.3,838.8 L319.5,843.4 L320.6,849.6 L319.3,854.1 L319.8,861.7 L319.0,867.3 M293.5,873.3 L298.3,872.6 L305.5,871.2 L310.7,871.8 L316.4,869.8 L320.2,868.4 L326.7,867.1 L331.0,866.8 L335.4,864.9 L339.5,862.0 L344.5,861.3 M330.4,-35.1 L336.3,-34.4 L343.6,-34.4 L347.9,-33.6 L353.2,-33.8 L359.3,-33.8 L363.8,-33.3 L367.3,-32.4 M330.4,-35.1 L331.0,-30.4 L331.1,-25.0 L332.2,-18.9 L333.0,-12.8 L334.2,-5.7 L335.5,-0.7 M332.9,-17.9 L338.6,-17.5 L344.3,-15.8 L351.0,-14.1 L357.2,-13.9 L361.3,-13.2 L366.6,-13.3 L370.9,-13.4 M335.5,-0.7 L337.2,3.2 L336.9,7.9 L338.0,13.0 L337.1,17.2 L338.3,23.6 L338.6,30.6 L338.4,35.9 M338.4,35.9 L344.2,35.9 L350.2,34.2 L354.2,33.4 L359.4,32.8 L364.4,32.4 M338.4,35.9 L338.4,41.9 L335.5,47.8 L333.7,52.5 L332.6,59.0 L328.5,63.0 M328.5,63.0 L333.6,64.5 L338.5,64.4 L342.4,64.4 L346.7,66.7 L351.5,67.1 L356.2,69.1 L362.4,70.8 L367.5,72.5 L373.4,74.1 M328.5,63.0 L330.6,69.0 L331.8,75.2 L334.4,81.0 L336.6,85.8 L336.8,90.9 L340.2,96.6 L340.6,100.5 M340.6,100.5 L347.8,101.1 L353.2,101.6 L359.3,103.0 L363.6,103.6 L367.9,103.8 L373.2,102.7 M340.6,100.5 L339.3,104.8 L339.9,109.2 L340.5,115.7 L340.4,119.2 L340.3,124.8 L340.9,131.4 L341.8,137.3 M341.8,137.3 L346.7,137.2 L351.8,135.6 L356.4,134.0 L362.7,132.1 L368.7,131.1 M341.8,137.3 L342.9,143.4 L344.5,149.2 L345.8,155.8 L346.1,160.8 L344.7,167.0 M344.7,167.0 L352.0,165.6 L359.2,166.0 L364.2,164.3 L368.5,163.7 L373.2,161.5 M344.7,167.0 L343.0,173.0 L339.4,176.2 L338.4,181.4 L335.0,187.4 L334.8,190.8 L332.8,194.2 L331.0,199.3 M331.0,199.3 L337.5,200.3 L342.0,200.7 L346.8,201.3 L353.4,203.0 L358.2,204.3 L364.0,207.2 L368.3,209.2 M331.0,199.3 L332.1,204.3 L335.5,208.9 L336.9,213.2 L337.9,217.3 L340.0,223.4 L340.3,228.6 L341.8,234.1 L342.3,239.6 M342.3,239.6 L348.1,238.7 L353.4,237.5 L357.2,235.5 L361.9,233.3 L366.9,231.1 L372.5,228.9 M342.3,239.6 L337.9,246.3 L334.6,252.2 L333.1,257.0 L332.9,261.9 M337.6,250.7 L342.9,250.9 L348.4,250.4 L352.1,251.4 L357.0,251.0 L363.0,252.3 L368.1,252.9 M332.9,261.9 L333.4,268.2 L335.9,272.8 L336.7,277.3 L338.2,283.1 L338.4,288.8 L340.0,293.5 L338.6,298.5 L340.1,303.4 L339.2,308.1 L339.6,312.4 M348.3,269.4 L348.7,275.4 L351.1,280.8 L350.8,286.3 L352.2,290.2 L353.8,296.2 L354.6,301.0 L355.8,305.7 L355.7,311.5 M339.6,312.4 L344.6,312.7 L351.4,311.2 L357.0,310.3 L362.9,310.4 L367.9,311.0 L371.8,310.6 M339.6,312.4 L338.2,319.7 L337.8,326.1 M337.8,326.1 L342.9,327.7 L349.8,330.1 L355.6,332.1 L361.4,333.8 L366.3,333.0 L371.4,335.0 L376.4,335.0 M326.6,360.8 L331.6,363.0 L335.5,363.8 L341.4,365.4 L344.8,365.4 L349.9,367.7 L355.9,368.0 L360.3,370.7 L366.3,370.6 L372.0,372.1 L376.9,373.7 M326.6,360.8 L328.6,366.2 L328.0,372.0 L330.4,377.8 L329.6,384.2 L329.1,388.5 L329.4,392.7 M329.4,392.7 L336.2,394.8 L341.9,396.0 L345.5,395.8 L352.6,398.0 L356.6,397.6 L360.3,398.9 L365.7,399.4 M329.4,392.7 L329.3,396.7 L330.8,401.3 L329.4,407.4 L330.8,411.2 L330.5,417.2 L329.1,421.8 L328.1,428.0 L328.1,433.7 L327.1,438.1 M327.1,438.1 L331.8,437.9 L339.2,437.6 L344.5,435.1 L348.7,435.5 L355.7,433.4 L360.4,433.0 M327.1,438.1 L332.6,443.9 L335.4,448.0 L338.9,452.7 L341.3,457.9 L344.0,462.0 M344.0,462.0 L347.8,461.7 L353.5,462.6 L358.9,462.2 L365.1,462.1 L371.9,460.6 L378.1,460.1 M344.0,462.0 L345.2,466.9 L345.6,472.8 L345.9,479.1 L347.1,484.2 L347.0,488.6 L345.4,494.6 L345.5,500.5 M345.5,500.5 L350.3,498.5 L354.4,499.1 L360.2,497.1 L364.8,495.2 L370.4,493.2 M345.5,500.5 L344.9,505.9 L345.5,510.1 L345.8,516.9 L345.5,522.1 L344.3,527.4 L345.1,532.4 L344.1,537.1 L342.1,542.3 M357.9,496.9 L357.0,501.4 L355.5,507.6 L353.9,511.4 L352.4,517.7 L352.9,522.4 L351.3,527.7 L350.8,533.5 L351.3,539.7 M342.1,542.3 L345.5,538.3 L353.3,537.5 L360.6,537.0 M342.1,542.3 L342.5,549.5 L344.1,553.5 L344.8,557.7 M344.8,557.7 L349.3,559.5 L356.0,560.1 L363.8,558.0 M344.8,557.7 L344.7,563.7 L342.4,568.1 L342.4,573.5 L341.3,577.6 L339.9,583.6 L338.7,588.1 L335.7,592.5 L333.1,596.9 L332.1,602.1 M332.1,602.1 L337.7,602.8 L342.5,602.5 L348.8,602.8 L354.7,601.6 L362.1,602.9 M338.5,613.4 L344.3,614.2 L347.5,614.6 L353.6,614.8 L360.2,614.5 L366.4,613.1 M344.9,624.8 L348.4,624.3 L353.3,621.5 L358.6,621.5 L364.6,621.5 L370.7,623.2 M344.9,624.8 L344.2,631.0 L343.0,636.5 L340.9,642.6 L340.3,648.0 L339.2,652.4 L336.7,658.6 L335.8,662.4 L334.2,668.0 L331.9,673.0 M331.9,673.0 L336.6,672.3 L343.6,671.5 L349.3,671.4 L354.3,671.9 L357.6,674.7 L363.6,675.3 M331.9,673.0 L331.0,679.3 L331.5,685.4 L329.5,692.4 L328.3,696.8 M328.3,696.8 L334.8,696.4 L339.1,698.3 L345.6,697.5 L350.3,699.2 L354.2,698.8 L359.0,700.6 L363.4,700.2 M328.3,696.8 L329.2,701.4 L327.7,706.6 L329.2,712.6 L328.6,717.2 L329.6,724.3 L331.4,728.6 L332.7,735.6 M345.8,698.5 L347.1,705.1 L346.1,711.8 L347.9,716.8 L347.2,723.0 L349.0,726.5 L348.5,732.5 L350.0,736.6 M332.7,735.6 L338.5,736.0 L344.5,737.0 L350.0,736.8 L356.5,735.7 L362.3,736.7 L367.4,737.6 M332.7,735.6 L334.9,739.6 L337.3,745.8 L339.2,749.2 L341.8,755.0 L344.6,758.5 M344.6,758.5 L350.8,762.3 L355.3,764.0 L361.6,766.7 L365.6,768.8 L371.1,770.8 M344.6,758.5 L345.4,764.4 L344.3,769.7 L345.1,775.7 L343.7,780.2 L344.2,785.9 L342.2,790.5 L341.7,797.2 L340.8,802.7 M340.8,802.7 L345.1,802.0 L348.9,801.1 L353.4,799.4 L358.8,796.3 L364.0,793.9 L369.7,791.8 M340.8,802.7 L341.5,807.6 L342.0,813.9 L342.8,819.3 L343.2,825.4 L342.7,832.1 M342.7,832.1 L346.8,828.4 L349.6,825.8 L356.8,824.8 L362.6,822.6 M342.7,832.1 L343.7,836.7 L344.3,843.1 L344.2,847.2 L344.7,854.0 L344.5,861.3 M352.6,827.3 L355.2,833.7 L356.8,837.7 L357.1,842.7 L359.3,848.3 L359.3,854.4 L360.0,858.8 M344.5,861.3 L350.3,861.4 L356.2,860.2 L360.9,860.3 L366.3,859.8 L371.0,857.5 L375.5,856.3 M367.3,-32.4 L370.6,-28.1 L375.3,-25.2 L380.1,-21.6 L386.2,-20.2 L392.5,-17.7 M367.3,-32.4 L368.0,-28.7 L368.3,-22.3 L369.9,-17.1 L370.8,-12.3 L372.7,-7.2 L373.1,-1.1 L374.6,5.6 M374.6,5.6 L381.0,8.9 L387.6,9.6 L392.8,12.2 L396.0,13.9 M374.6,5.6 L370.4,10.6 L367.6,15.4 L365.9,21.9 L366.0,26.6 L364.4,32.4 M385.3,9.7 L382.4,15.7 L380.9,21.9 L379.9,25.9 L378.9,30.0 L379.1,35.3 M364.4,32.4 L370.0,32.0 L376.0,33.4 L381.9,33.8 L387.5,35.9 L393.7,38.3 M364.4,32.4 L364.4,37.6 L366.1,42.8 L366.7,49.8 L366.7,54.3 L368.5,59.7 L369.8,63.9 L371.3,69.7 L373.4,74.1 M373.4,74.1 L378.5,73.9 L384.7,74.6 L389.9,76.5 L396.5,78.6 M373.4,74.1 L373.6,81.0 L371.8,86.5 L372.6,93.8 L371.9,98.1 L373.2,102.7 M373.2,102.7 L377.5,103.8 L382.0,103.7 L386.6,105.4 L392.2,104.5 L398.9,106.0 L404.3,107.8 M373.2,102.7 L373.8,109.1 L372.4,116.1 L372.7,120.4 L369.8,126.5 L368.7,131.1 M368.7,131.1 L373.5,132.8 L379.2,135.3 L383.8,137.7 L388.8,139.6 L393.0,141.7 L398.4,142.3 L401.6,145.1 L407.2,145.4 M368.7,131.1 L367.8,135.4 L367.5,140.9 L368.3,145.0 L370.2,150.8 L371.1,156.3 L373.2,161.5 M371.0,146.3 L376.8,148.1 L383.4,150.2 L387.6,151.2 L392.7,154.1 L397.8,157.3 L403.1,159.2 M373.2,161.5 L377.4,165.3 L383.1,167.7 L386.8,169.7 L392.7,172.0 L398.9,173.1 M373.2,161.5 L373.8,167.6 L372.9,172.6 L372.9,178.3 L372.5,182.2 L372.6,189.2 L370.8,193.7 L370.1,198.5 L369.7,204.6 L368.3,209.2 M368.3,209.2 L372.2,207.3 L376.3,205.9 L380.7,205.9 L385.4,203.6 L391.3,202.0 L396.3,199.1 L400.9,196.2 M368.3,209.2 L369.6,215.1 L372.5,222.2 L372.9,225.0 L372.5,228.9 M372.5,228.9 L377.8,230.0 L384.8,232.4 L390.3,234.1 L395.2,236.0 L399.0,238.1 L405.2,238.7 L408.7,238.9 M372.5,228.9 L372.5,233.6 L371.7,239.4 L370.6,245.0 L370.7,248.9 L369.4,254.8 L367.0,261.1 L367.2,265.9 L365.1,271.3 L363.7,276.9 M368.1,252.9 L373.8,253.0 L379.0,255.0 L382.4,253.9 L388.8,254.1 L393.3,253.9 L397.4,252.4 L404.2,252.2 L408.5,251.5 M363.7,276.9 L368.8,276.5 L374.8,276.1 L380.2,273.7 L384.0,272.9 L390.3,271.7 L395.0,271.3 L399.5,268.7 L403.6,265.7 L408.3,264.1 M363.7,276.9 L366.1,281.7 L367.1,287.9 L368.6,293.8 L370.1,299.1 L371.4,304.1 L371.8,310.6 M371.8,310.6 L376.0,309.3 L379.6,309.7 L386.2,308.5 L389.8,306.3 L396.1,304.9 L402.8,302.3 M371.8,310.6 L372.6,317.8 L373.2,324.8 L374.3,329.8 L376.4,335.0 M376.4,335.0 L381.0,333.1 L387.0,331.0 L392.8,330.5 L396.1,328.5 L402.0,328.3 L406.6,327.5 M376.4,335.0 L376.1,341.0 L377.1,344.8 L377.9,350.8 L377.2,357.5 L377.4,361.4 L377.0,367.3 L376.9,373.7 M376.9,373.7 L375.3,377.0 L371.6,383.1 L370.0,386.9 L367.6,393.5 L365.7,399.4 M365.7,399.4 L371.4,401.4 L377.2,402.1 L381.1,402.8 L386.7,402.5 L393.4,403.1 M379.6,401.2 L380.2,406.3 L381.4,410.7 L382.6,415.0 L382.8,421.5 L383.3,426.2 L383.6,433.2 M360.4,433.0 L365.0,432.4 L371.5,431.6 L376.0,431.6 L382.1,431.2 L386.7,431.3 L392.6,431.7 L397.2,432.7 L402.4,432.5 L406.7,433.5 M360.4,433.0 L362.0,436.0 L364.7,441.8 L366.5,445.5 L371.2,450.2 L374.0,454.4 L378.1,460.1 M378.1,460.1 L384.8,461.5 L389.7,461.9 L395.9,463.3 L399.9,467.4 L405.0,470.1 M374.2,476.7 L380.6,477.5 L386.1,478.6 L390.5,479.8 L395.7,482.4 L400.6,484.1 M370.4,493.2 L377.5,491.8 L383.2,492.1 L389.0,493.3 L393.3,496.5 L396.3,498.0 M370.4,493.2 L368.0,499.0 L367.0,504.2 L365.0,508.6 L363.3,515.4 L363.2,519.7 L361.4,526.6 L360.4,531.6 L360.6,537.0 M360.6,537.0 L365.8,536.5 L371.5,534.7 L378.6,534.3 L383.6,533.2 L388.3,533.6 L393.9,532.0 L398.6,532.0 L402.3,532.1 L406.6,530.6 L411.9,530.7 M360.6,537.0 L360.6,543.5 L362.7,550.5 L363.5,553.4 L363.8,558.0 M363.8,558.0 L368.3,559.6 L372.8,559.4 L377.3,561.2 L383.0,560.0 L388.4,560.5 L394.4,560.1 L400.6,558.7 M363.8,558.0 L362.3,564.5 L361.7,570.0 L360.0,574.8 L361.3,581.7 L361.3,587.3 L361.1,593.2 L361.2,598.2 L362.1,602.9 M362.1,602.9 L367.1,603.0 L372.0,601.0 L377.7,600.1 L382.8,599.6 L387.7,597.5 L391.9,596.1 L396.4,593.3 M362.1,602.9 L363.3,605.8 L364.5,611.0 L368.6,616.7 L370.7,623.2 M370.7,623.2 L373.9,625.0 L378.5,625.8 L382.7,627.3 L387.9,628.9 L393.7,631.4 L398.0,633.3 L403.9,635.9 L410.6,637.5 M370.7,623.2 L371.0,628.5 L369.8,633.6 L369.0,639.4 L368.7,644.8 L366.8,649.3 L367.0,655.1 L365.4,659.5 L365.5,665.2 L365.2,669.5 L363.6,675.3 M363.6,675.3 L369.9,675.3 L375.0,676.0 L380.0,677.1 L384.3,676.4 L389.1,677.2 L395.5,678.0 L400.4,676.7 L405.2,676.7 L409.5,675.7 M363.6,675.3 L364.3,681.0 L365.1,687.7 L365.1,694.5 L363.4,700.2 M386.5,675.5 L385.4,681.4 L385.3,686.0 L384.3,692.3 L383.7,698.1 L383.8,703.9 M363.4,700.2 L363.8,705.7 L364.2,709.0 L364.4,714.5 L365.9,719.2 L365.2,726.1 L367.0,732.5 L367.4,737.6 M367.4,737.6 L372.2,735.8 L376.9,733.3 L381.3,731.8 L387.1,732.6 L391.1,730.1 L397.6,731.2 L402.7,730.4 M367.4,737.6 L368.5,742.2 L369.4,748.7 L371.5,753.9 L371.5,759.7 L372.4,765.4 L371.1,770.8 M371.1,770.8 L378.5,771.1 L384.3,770.5 L390.0,771.0 L396.8,771.2 L401.1,770.8 L405.6,771.5 L411.0,773.1 M371.1,770.8 L370.0,776.8 L368.4,782.0 L367.5,786.5 L369.7,791.8 M369.7,791.8 L376.1,792.8 L381.5,793.3 L385.7,793.9 L392.5,794.8 L396.8,795.9 L401.6,796.3 L406.7,796.9 L411.0,797.7 M369.7,791.8 L368.8,796.4 L367.6,801.8 L366.9,808.0 L366.2,813.3 L364.1,817.9 L362.6,822.6 M362.6,822.6 L368.1,823.8 L371.8,824.7 L376.6,826.1 L381.8,826.2 L386.4,827.1 L391.0,828.6 L396.4,828.8 L402.8,828.9 L407.5,829.1 M362.6,822.6 L364.7,826.8 L366.7,831.4 L368.4,835.5 L370.4,840.5 L373.1,844.8 L373.8,849.8 L375.5,856.3 M392.5,-17.7 L397.9,-17.6 L403.8,-16.1 L408.2,-16.9 L413.9,-15.3 L420.5,-17.1 L425.2,-16.7 L430.8,-18.3 M396.0,13.9 L400.1,10.5 L404.3,7.8 L407.8,5.0 L414.1,4.0 L417.4,0.7 L423.9,-0.4 L428.7,-2.1 M396.0,13.9 L395.2,20.7 L393.7,26.5 L393.9,32.9 L393.7,38.3 M393.7,38.3 L398.7,38.3 L405.1,39.0 L410.7,39.3 L415.5,38.1 L421.5,37.6 L426.7,37.6 L431.0,37.6 L435.9,36.0 L439.4,34.9 M393.7,38.3 L393.5,42.3 L393.8,48.7 L394.7,52.5 L394.9,58.7 L395.2,63.0 L396.7,69.0 L396.0,72.4 L396.5,78.6 M396.5,78.6 L400.2,78.0 L405.7,77.1 L411.4,76.7 L416.4,75.7 L421.7,75.6 L429.9,75.7 L435.4,74.8 M396.5,78.6 L397.6,82.3 L400.6,85.9 L401.0,91.6 L402.8,95.4 L404.2,102.7 L404.3,107.8 M404.3,107.8 L408.1,106.6 L413.1,107.4 L419.6,109.0 L425.8,109.9 M404.3,107.8 L403.9,112.5 L402.9,116.6 L403.9,121.8 L403.9,128.4 L404.9,133.0 L406.3,138.4 L407.2,145.4 M407.2,145.4 L414.1,143.0 L421.8,140.8 L426.4,137.7 L430.5,136.6 M407.2,145.4 L404.7,152.2 L402.7,157.7 L400.5,163.0 L399.6,169.0 L398.9,173.1 M418.9,141.0 L419.0,147.4 L418.3,152.5 L417.7,158.4 L416.5,163.7 L416.4,169.9 L415.4,174.5 M398.9,173.1 L403.2,174.6 L408.6,175.0 L413.6,175.6 L419.7,175.0 L426.8,175.5 L431.9,175.8 M400.9,196.2 L406.5,197.1 L411.9,197.1 L418.0,197.3 L422.1,197.7 L428.3,197.5 L433.9,199.2 L439.9,199.7 M400.9,196.2 L403.1,201.2 L403.9,206.4 L406.1,211.3 L406.8,216.5 L407.7,221.0 L407.4,226.3 L408.4,233.8 L408.7,238.9 M408.7,238.9 L416.4,235.5 L422.7,234.9 L427.1,233.0 M408.7,238.9 L408.9,241.9 L407.6,246.6 L406.8,251.4 L408.3,257.0 L408.3,264.1 M408.3,264.1 L414.2,263.1 L421.0,261.3 L424.6,260.4 L429.4,260.6 L433.2,261.6 M408.3,264.1 L407.5,269.4 L404.7,275.8 L404.3,282.8 L403.0,286.8 L402.8,292.5 L401.7,297.3 L402.8,302.3 M402.8,302.3 L408.2,302.8 L415.5,303.2 L419.6,303.9 L423.5,306.4 L428.1,308.3 M402.8,302.3 L404.2,306.3 L406.6,312.7 L406.3,317.3 L407.0,323.1 L406.6,327.5 M404.7,314.9 L408.4,315.4 L412.3,318.5 L417.4,319.0 L421.8,321.4 L427.6,323.4 L433.5,326.9 M406.6,327.5 L412.5,329.7 L418.5,330.3 L422.8,332.5 L426.9,336.5 L431.9,338.9 L436.2,341.5 L439.0,345.5 M406.6,327.5 L405.4,332.7 L405.4,337.2 L405.1,343.1 L405.5,347.7 L403.1,353.1 L402.7,358.8 L400.7,364.2 L398.9,368.7 M398.9,368.7 L403.1,369.7 L408.1,371.7 L413.6,372.5 L419.1,372.2 L423.0,374.5 L428.5,374.6 L434.6,376.0 L440.1,376.0 L444.6,376.5 M398.9,368.7 L398.6,375.2 L397.7,380.6 L395.7,386.3 L394.5,392.2 L394.7,398.2 L393.4,403.1 M393.4,403.1 L399.4,402.2 L406.5,400.7 L412.8,401.3 L418.3,400.1 L422.6,398.0 L428.6,397.1 L432.5,395.2 M406.7,433.5 L412.8,434.3 L418.7,433.3 L425.7,435.2 L431.2,434.3 M406.7,433.5 L405.6,439.7 L404.9,445.4 L404.4,451.6 L403.8,455.4 L403.3,462.1 L404.9,465.9 L405.0,470.1 M405.0,470.1 L410.1,469.5 L415.7,468.1 L420.6,468.4 L425.4,467.7 L430.9,467.6 L435.5,468.8 M405.0,470.1 L404.2,475.9 L402.9,481.6 L400.4,487.8 L398.4,492.5 L396.3,498.0 M396.3,498.0 L402.1,499.7 L407.0,502.3 L414.0,504.0 L417.6,504.2 L424.0,505.2 L428.4,506.8 L432.2,508.1 M411.9,530.7 L416.4,530.2 L421.7,531.2 L430.7,533.3 M411.9,530.7 L409.0,535.6 L405.4,539.5 L403.3,544.9 L402.2,549.3 L400.6,554.2 L400.6,558.7 M400.6,558.7 L406.7,561.2 L411.4,564.0 L415.5,565.8 L421.8,567.6 L426.8,569.6 L432.9,570.5 L437.0,571.3 L442.7,573.1 M400.6,558.7 L399.5,564.2 L399.0,568.9 L397.6,575.6 L397.3,581.4 L397.5,587.3 L396.4,593.3 M396.4,593.3 L401.5,593.5 L406.2,593.5 L412.2,593.5 L417.1,594.0 L424.7,593.5 L430.9,594.9 M396.4,593.3 L397.6,598.0 L398.2,604.8 L399.2,610.2 L401.2,614.3 L402.3,620.7 L404.7,625.0 L405.8,629.5 L409.0,633.7 L410.6,637.5 M410.6,637.5 L415.5,634.6 L419.0,631.1 L424.9,627.3 L428.6,625.8 L435.9,624.4 L441.1,623.2 M410.6,637.5 L410.1,643.2 L409.9,649.7 L408.9,654.5 L408.6,660.0 L409.9,664.8 L409.6,670.6 L409.5,675.7 M409.5,675.7 L413.9,671.9 L417.0,668.8 L423.4,667.2 L427.6,666.6 M409.5,675.7 L406.7,681.4 L405.5,687.5 L405.0,693.1 L403.8,698.6 L403.6,702.9 L404.2,707.6 M404.2,707.6 L410.4,704.5 L415.0,703.0 L419.9,700.4 L423.4,698.2 L427.2,696.2 L431.9,693.7 L435.7,692.3 M404.2,707.6 L403.3,713.5 L403.2,718.0 L402.4,724.4 L402.7,730.4 M402.7,730.4 L408.8,731.3 L416.1,730.5 L421.0,729.1 L426.0,726.1 M402.7,730.4 L404.2,735.4 L404.9,739.2 L407.0,744.1 L406.8,748.8 L409.3,754.9 L409.1,761.5 L411.1,767.5 L411.0,773.1 M411.0,773.1 L411.1,778.2 L412.1,785.5 L411.4,791.7 L411.0,797.7 M411.0,797.7 L415.9,799.0 L420.8,798.9 L427.3,799.6 L431.9,801.3 L438.2,802.4 L444.6,803.7 M411.0,797.7 L410.9,804.5 L410.7,809.2 L410.8,815.8 L410.8,820.5 L410.0,823.8 L407.5,829.1 M407.5,829.1 L412.6,827.6 L418.0,827.5 L423.5,826.2 L428.5,825.6 L433.8,824.9 L438.4,823.2 L444.6,821.7 M407.5,829.1 L408.5,835.3 L407.1,841.2 L407.3,845.7 L409.2,851.7 L409.6,857.7 L409.9,862.2 L410.2,867.0 L411.9,872.4 M411.9,872.4 L414.9,867.7 L418.4,863.7 L422.9,859.3 L428.7,854.3 M430.8,-18.3 L436.2,-20.0 L442.2,-23.1 L448.6,-23.9 L452.8,-25.4 L458.0,-27.4 L462.6,-29.2 L466.6,-30.2 M430.8,-18.3 L429.7,-13.5 L428.6,-8.0 L428.7,-2.1 M448.7,-24.3 L446.8,-18.7 L447.1,-11.3 L445.6,-5.9 L445.7,-2.8 L443.9,2.4 M428.7,-2.1 L434.2,-0.5 L440.8,3.5 L445.2,4.8 L450.3,6.1 L454.7,6.7 L459.0,6.9 M428.7,-2.1 L430.7,2.9 L434.1,5.7 L435.6,11.2 L437.9,16.3 L438.8,22.2 L439.8,29.1 L439.4,34.9 M443.9,2.4 L445.7,8.5 L447.2,14.7 L448.3,19.5 L448.3,25.5 L450.1,29.6 L449.7,35.1 M439.4,34.9 L444.5,35.0 L450.3,35.2 L454.5,34.4 L459.9,35.2 M435.4,74.8 L441.7,76.1 L447.5,77.4 L453.4,78.6 L458.4,77.3 L462.9,78.0 M435.4,74.8 L434.2,79.7 L430.3,84.2 L429.0,89.3 L428.2,95.5 L426.4,99.6 L426.4,104.6 L425.8,109.9 M425.8,109.9 L430.8,109.6 L436.5,107.9 L440.7,106.8 L446.9,104.2 L451.5,103.5 L455.5,101.7 L462.1,100.4 L466.4,100.2 M425.8,109.9 L427.1,115.3 L429.3,121.8 L429.3,126.1 L429.8,132.7 L430.5,136.6 M430.5,136.6 L437.2,136.9 L442.2,135.7 L448.1,137.3 L453.2,136.5 L458.9,136.6 M430.5,136.6 L430.7,141.2 L432.0,147.4 L432.3,152.9 L432.9,158.7 L433.2,163.4 L432.2,169.3 L431.9,175.8 M431.9,175.8 L438.3,176.1 L443.9,175.5 L448.4,176.8 L455.0,176.5 L459.0,175.4 L465.8,174.7 L470.5,174.5 M431.9,175.8 L433.8,180.0 L436.2,184.0 L439.2,190.5 L439.3,194.5 L439.9,199.7 M439.9,199.7 L445.3,202.6 L448.5,205.4 L455.1,206.2 L458.5,208.6 L464.6,209.1 L470.9,209.4 L476.3,210.2 M439.9,199.7 L439.1,204.4 L436.2,208.6 L433.5,214.2 L433.2,218.2 L431.4,222.9 L429.3,228.6 L427.1,233.0 M445.0,231.3 L445.1,238.2 L446.3,244.6 L447.2,249.7 L449.1,254.3 L449.4,259.4 L450.7,264.8 L453.2,268.7 M433.2,261.6 L437.6,264.6 L443.6,266.7 L449.6,268.0 L454.6,270.6 L457.9,273.2 L464.3,273.8 L469.1,273.9 L473.2,275.8 M433.2,261.6 L432.7,266.6 L432.2,270.7 L433.2,275.3 L431.6,280.4 L432.1,285.8 L432.1,290.8 L431.0,297.2 L428.7,302.8 L428.1,308.3 M428.1,308.3 L432.1,307.1 L436.9,307.0 L441.8,307.3 L446.3,307.2 L451.4,308.2 L456.7,308.4 L462.8,309.3 L468.2,309.6 M439.0,345.5 L443.0,343.3 L448.0,342.6 L452.7,339.5 L459.1,338.3 L464.1,333.9 L469.0,331.6 M439.0,345.5 L438.7,350.8 L439.0,354.9 L441.1,359.2 L441.0,365.4 L442.8,371.7 L444.6,376.5 M441.8,361.0 L447.7,358.4 L453.1,354.9 L456.9,350.9 L461.6,348.8 L465.2,345.5 M444.6,376.5 L446.3,372.5 L450.0,368.0 L455.8,364.3 L461.4,359.3 M444.6,376.5 L442.3,381.2 L438.6,387.4 L436.2,391.5 L432.5,395.2 M453.0,367.9 L452.1,373.0 L449.4,380.4 L449.1,384.9 L450.9,391.9 L451.5,397.1 L451.7,402.6 M432.5,395.2 L437.8,398.2 L444.0,401.6 L449.5,402.3 L453.1,404.0 L458.5,407.1 L462.9,408.1 L467.0,409.8 L470.9,409.9 M432.5,395.2 L432.8,402.2 L434.6,407.3 L434.2,414.3 L432.9,419.6 L432.2,424.0 L431.5,429.9 L431.2,434.3 M431.2,434.3 L437.0,434.3 L444.8,433.0 L450.6,433.7 L455.1,433.6 L461.6,434.2 L466.4,432.9 L472.0,434.2 L476.1,434.3 M431.2,434.3 L432.8,441.0 L433.0,447.3 L435.1,452.3 L435.7,458.4 L435.4,463.7 L435.5,468.8 M435.5,468.8 L435.0,475.0 L433.7,481.2 L432.4,486.9 L432.8,492.5 L433.0,498.7 L432.7,502.8 L432.2,508.1 M432.2,508.1 L438.2,507.7 L443.7,506.1 L449.3,505.2 L456.7,504.7 L460.0,503.7 L464.9,503.1 L470.6,502.3 L474.3,503.1 M432.2,508.1 L433.5,513.6 L432.2,517.5 L431.7,524.4 L431.2,527.6 L430.7,533.3 M430.7,533.3 L431.5,539.2 L434.1,543.7 L435.9,548.5 L437.1,554.3 L437.9,559.3 L440.4,563.0 L441.1,568.9 L442.7,573.1 M436.7,553.2 L441.5,554.3 L446.7,552.9 L452.3,552.1 L456.8,549.8 L463.9,547.5 M442.7,573.1 L446.3,569.5 L450.2,566.1 L455.9,561.9 L461.4,560.7 M442.7,573.1 L441.0,577.1 L437.4,582.7 L434.0,588.1 L430.9,594.9 M452.1,566.9 L450.6,572.1 L450.3,575.9 L451.2,581.3 L451.1,586.5 L450.8,590.8 L450.9,597.6 L451.3,602.3 M430.9,594.9 L436.2,596.3 L441.1,598.6 L447.0,600.3 L451.3,601.4 L457.5,605.0 L462.2,606.8 L467.6,607.6 L471.7,609.8 M430.9,594.9 L432.8,601.1 L433.1,605.1 L434.6,611.2 L436.8,614.7 L438.0,619.6 L441.1,623.2 M441.1,623.2 L447.8,624.4 L453.7,623.6 L458.0,626.6 L464.9,627.9 L468.9,631.2 M441.1,623.2 L439.5,628.5 L439.8,634.7 L437.2,639.5 L436.6,644.5 L435.4,650.0 L432.5,652.7 L431.1,658.9 L429.5,662.9 L427.6,666.6 M427.6,666.6 L429.0,671.2 L429.0,674.7 L430.8,681.1 L432.5,685.3 L435.7,692.3 M435.7,692.3 L434.1,696.0 L432.2,701.0 L430.7,706.2 L429.8,710.6 L429.2,715.7 L428.0,720.1 L426.0,726.1 M426.0,726.1 L430.7,725.2 L434.8,725.2 L439.6,723.6 L443.8,724.4 L448.5,723.4 L453.8,723.1 L459.3,724.6 L464.9,723.6 L471.6,725.3 L477.2,725.1 M426.0,726.1 L428.8,730.3 L431.5,734.5 L432.6,739.0 L433.9,743.0 L437.5,748.2 L438.4,753.9 L440.1,758.1 L440.4,764.3 M440.4,764.3 L446.8,764.8 L452.5,763.8 L458.7,764.1 L464.3,765.4 M440.4,764.3 L440.7,770.5 L441.2,776.3 L441.6,781.5 L442.7,787.5 L444.2,793.2 L444.5,797.8 L444.6,803.7 M444.6,803.7 L450.4,804.7 L457.4,806.4 L462.7,806.9 L466.2,805.0 M444.6,803.7 L444.7,807.6 L444.5,814.6 L444.6,821.7 M444.6,821.7 L448.8,825.6 L452.8,829.6 L457.3,831.7 L461.9,836.1 L468.1,838.2 L474.6,839.6 M444.6,821.7 L442.5,824.8 L438.1,829.2 L436.1,832.6 L433.4,838.6 L432.9,842.2 L430.0,849.6 L428.7,854.3 M428.7,854.3 L432.6,855.5 L438.5,855.2 L443.5,856.2 L448.2,855.2 L453.4,854.7 L457.9,855.1 L463.8,854.7 L470.2,854.6 M466.6,-30.2 L470.9,-29.8 L475.4,-29.7 L480.8,-30.5 L485.5,-29.7 L489.9,-28.9 L496.4,-27.1 L502.5,-26.0 M466.6,-30.2 L465.9,-24.1 L466.2,-17.0 L465.2,-11.9 L463.2,-7.2 L463.2,-2.5 L461.5,3.4 L459.0,6.9 M459.0,6.9 L465.7,4.9 L471.3,4.3 L476.8,3.0 L481.8,2.9 L486.0,2.9 L492.3,2.1 L496.4,1.9 L500.8,1.6 M459.0,6.9 L457.8,11.8 L459.0,16.1 L458.5,22.7 L459.9,29.4 L459.9,35.2 M459.9,35.2 L463.9,36.5 L468.8,39.7 L475.5,40.8 L480.3,42.4 L485.4,43.1 L490.4,44.6 L495.8,45.1 L500.3,47.0 L505.2,47.2 M459.9,35.2 L459.5,41.0 L460.3,47.8 L461.4,52.5 L460.6,59.4 L461.7,63.6 L463.1,68.3 L462.5,72.5 L462.9,78.0 M462.9,78.0 L468.9,77.1 L474.3,78.2 L480.2,76.9 L485.4,77.7 L489.1,76.5 L493.0,75.4 M462.9,78.0 L463.7,83.0 L464.8,87.8 L465.9,94.0 L466.4,100.2 M466.4,100.2 L471.0,102.8 L477.5,102.5 L481.6,104.7 L486.4,105.7 L492.6,105.9 L498.4,105.3 M466.4,100.2 L466.0,105.8 L465.0,111.0 L463.7,114.9 L462.3,121.2 L461.5,125.4 L459.4,130.7 L458.9,136.6 M458.9,136.6 L465.0,137.7 L470.2,140.6 L473.5,142.5 L478.6,142.8 L483.7,143.5 L489.6,144.6 L494.5,145.5 L499.9,145.6 L503.8,147.0 L508.9,147.2 M458.9,136.6 L459.3,143.4 L461.8,147.6 L462.6,155.0 L464.0,160.3 L466.6,164.7 L468.7,169.0 L470.5,174.5 M470.5,174.5 L477.1,172.1 L482.0,170.9 L488.4,169.6 L492.7,167.3 L499.0,167.1 L503.9,164.9 M470.5,174.5 L471.7,179.8 L473.4,186.2 L472.4,190.4 L473.1,195.4 L474.7,200.6 L476.0,206.4 L476.3,210.2 M476.3,210.2 L475.2,215.0 L471.8,219.4 L468.1,223.6 L462.9,229.7 M462.9,229.7 L468.2,232.4 L475.7,234.4 L481.2,237.1 L485.7,238.3 L490.3,239.3 L495.2,241.0 L498.7,243.6 M462.9,229.7 L463.6,234.5 L465.5,241.4 L467.2,245.3 L468.1,251.1 L468.4,256.2 L471.1,261.0 L471.7,267.4 L472.6,272.0 L473.2,275.8 M473.2,275.8 L476.4,273.6 L481.8,271.2 L485.5,267.7 L490.3,266.6 L497.3,265.4 M473.2,275.8 L472.1,281.5 L473.0,287.9 L471.8,293.6 L469.7,298.9 L468.5,304.3 L468.2,309.6 M468.2,309.6 L473.7,309.6 L479.4,309.0 L484.9,308.7 L489.1,307.8 L494.7,308.4 L499.6,310.6 L505.2,311.4 L510.0,311.9 M468.2,309.6 L470.0,316.0 L470.1,321.5 L469.7,327.7 L469.0,331.6 M469.0,331.6 L475.3,332.3 L481.7,334.7 L486.6,333.8 L493.6,334.3 L497.3,333.9 M469.0,331.6 L468.3,335.7 L467.5,341.6 L465.1,347.5 L463.9,352.4 L461.4,359.3 M483.2,332.7 L482.3,337.7 L481.3,341.4 L481.2,347.4 L479.0,354.1 L479.0,360.5 M461.4,359.3 L462.7,364.3 L464.8,369.4 L465.1,373.9 L467.3,378.5 L468.7,382.3 L468.6,388.4 L470.2,394.0 L470.0,399.0 L469.8,404.7 L470.9,409.9 M470.9,409.9 L477.5,408.9 L483.4,409.5 L488.5,409.6 L492.5,409.2 L496.0,411.6 M476.1,434.3 L480.1,431.1 L485.4,430.9 L492.6,429.6 M476.1,434.3 L475.3,438.6 L474.0,444.2 L474.2,449.9 L472.2,454.0 L471.6,460.7 L471.4,465.7 L470.8,471.5 L471.3,476.6 M473.7,455.5 L479.1,452.0 L485.2,449.2 L489.8,445.4 L493.8,444.6 M471.3,476.6 L477.5,474.8 L481.6,471.2 L486.9,468.7 L490.9,463.8 L495.0,459.6 M471.3,476.6 L473.7,480.0 L474.0,485.5 L475.1,491.0 L474.2,496.3 L474.3,503.1 M474.3,503.1 L479.2,505.6 L486.1,505.4 L491.4,507.5 L495.8,506.3 L501.5,505.9 M474.3,503.1 L474.6,507.6 L472.7,512.9 L471.9,516.2 L471.5,522.3 L468.5,527.8 L466.3,534.4 M487.9,504.5 L487.7,510.0 L486.7,514.2 L485.9,518.7 L485.5,525.6 L486.4,530.8 L487.0,535.5 M466.3,534.4 L471.3,535.2 L475.4,537.0 L480.4,536.7 L485.0,537.8 L490.1,536.6 L496.0,537.6 L502.8,537.4 L507.8,536.6 M466.3,534.4 L466.3,538.4 L465.7,543.3 L464.6,548.8 L462.8,554.9 L461.4,560.7 M461.4,560.7 L466.7,559.7 L473.0,560.4 L479.1,559.6 L485.0,558.2 L489.5,558.2 L493.3,557.8 L498.7,556.5 L502.4,557.8 L507.4,557.1 M461.4,560.7 L463.7,565.6 L464.4,568.4 L466.6,573.9 L467.6,577.5 L467.1,584.3 L469.5,587.3 L469.9,593.9 L470.3,599.4 L470.6,604.6 L471.7,609.8 M471.7,609.8 L477.4,610.5 L481.2,610.0 L489.2,608.9 L496.6,609.2 M471.7,609.8 L470.5,616.3 L468.7,620.4 L469.1,626.1 L468.9,631.2 M468.9,631.2 L475.6,632.0 L482.6,630.4 L488.2,629.3 L492.4,628.4 M468.9,631.2 L467.3,635.7 L466.1,640.8 L465.1,646.3 L463.4,651.2 L465.0,658.0 L465.0,665.1 M465.0,665.1 L470.8,665.9 L476.1,665.2 L480.6,664.5 L485.2,663.9 L490.2,662.9 L495.9,663.4 L500.7,661.4 M465.0,665.1 L465.3,670.2 L466.9,675.9 L467.6,682.0 L469.1,687.9 L471.0,693.2 L474.1,698.1 M474.1,698.1 L478.9,696.5 L484.8,695.6 L491.7,692.8 L495.9,691.8 L501.9,689.9 M474.1,698.1 L475.9,701.7 L476.6,707.0 L477.8,711.8 L476.9,719.2 L477.2,725.1 M477.2,725.1 L482.2,730.2 L485.5,733.4 L490.8,736.9 L495.7,741.2 M464.3,765.4 L469.8,768.6 L476.5,769.4 L481.6,772.4 L486.1,772.2 L491.0,773.6 L493.9,773.1 M464.3,765.4 L465.9,769.9 L465.4,774.4 L467.1,779.4 L467.0,786.6 L466.5,791.6 L466.2,798.3 L466.2,805.0 M466.2,805.0 L471.7,804.2 L479.0,805.1 L483.3,804.9 L489.8,805.5 L494.6,807.9 M466.2,805.0 L466.8,808.3 L467.5,812.8 L470.0,818.2 L470.0,822.7 L471.4,829.1 L473.6,834.0 L474.6,839.6 M470.4,822.3 L475.7,823.5 L483.3,824.1 L489.2,823.0 L493.9,821.5 L499.5,820.9 M474.6,839.6 L479.8,839.2 L486.4,838.3 L491.3,839.3 L495.3,837.8 L500.9,836.2 L504.5,833.9 M474.6,839.6 L474.2,845.9 L471.8,851.7 L470.2,854.6 M489.5,836.8 L484.6,844.9 L483.1,850.8 L482.0,854.9 M470.2,854.6 L475.3,856.6 L479.6,857.1 L486.6,855.7 L493.8,855.1 M502.5,-26.0 L507.2,-25.2 L512.3,-27.4 L517.8,-27.4 L522.3,-28.4 L528.5,-29.7 L533.0,-30.7 L539.2,-33.5 M502.5,-26.0 L502.2,-21.9 L501.9,-16.0 L499.8,-10.9 L500.2,-4.9 L500.8,1.6 M500.8,1.6 L506.6,3.2 L512.3,3.0 L518.7,6.7 L522.6,9.2 L527.8,12.5 M500.8,1.6 L501.6,6.9 L502.3,12.0 L503.2,15.3 L504.3,21.7 L505.8,26.7 L504.4,30.9 L504.9,37.6 L504.6,42.4 L505.2,47.2 M505.2,47.2 L510.7,44.4 L515.8,41.5 L519.7,38.2 L524.7,36.8 L529.2,34.5 L533.3,33.1 L537.2,30.5 L541.5,30.0 M505.2,47.2 L502.3,50.3 L499.0,54.8 L497.3,58.7 L495.9,64.0 L493.8,70.3 L493.0,75.4 M499.1,61.3 L504.0,60.1 L508.8,57.9 L514.5,55.2 L518.4,54.0 L524.1,53.0 L530.0,52.9 L537.2,51.5 L542.4,51.3 M493.0,75.4 L497.4,76.2 L501.5,75.1 L506.5,76.3 L511.5,75.4 L516.3,75.9 L521.3,76.0 L527.1,75.2 L531.8,74.2 L538.3,73.9 L543.2,72.7 M493.0,75.4 L494.3,80.2 L497.6,85.3 L497.1,91.0 L497.7,95.8 L498.6,101.6 L498.4,105.3 M498.4,105.3 L500.7,110.0 L503.4,115.4 L503.8,120.0 L506.1,124.0 L507.2,129.0 L508.8,134.9 L508.5,141.9 L508.9,147.2 M508.9,147.2 L515.8,147.2 L521.2,147.7 L526.3,147.0 L531.8,147.8 M508.9,147.2 L506.7,151.3 L505.3,157.3 L503.9,164.9 M503.9,164.9 L508.9,163.3 L514.2,163.0 L518.4,161.6 L525.0,162.4 L529.6,163.6 M503.9,164.9 L506.5,169.1 L508.3,174.1 L508.6,179.9 L509.4,185.2 L510.0,191.7 L509.4,197.6 M509.4,197.6 L515.4,199.5 L521.8,198.7 L526.9,196.5 M509.4,197.6 L508.0,202.2 L506.7,207.6 L504.8,213.4 L503.9,218.2 L503.6,224.1 L501.6,228.2 L501.3,233.2 L499.8,238.0 L498.7,243.6 M498.7,243.6 L503.1,245.3 L507.9,245.0 L513.2,246.0 L518.9,245.8 L525.4,245.9 L531.0,245.3 M498.7,243.6 L496.9,249.2 L498.1,254.3 L497.1,260.7 L497.3,265.4 M498.0,254.5 L503.2,255.1 L507.4,255.4 L513.0,254.9 L517.6,255.2 L522.7,255.3 L528.3,254.6 M497.3,265.4 L502.6,265.0 L506.0,265.6 L513.2,265.1 L519.9,264.9 L525.5,263.8 M497.3,265.4 L498.3,270.1 L501.5,275.5 L503.2,279.6 L503.4,285.4 L504.9,290.5 L507.3,296.8 L507.7,302.2 L509.9,306.8 L510.0,311.9 M510.0,311.9 L517.0,311.6 L523.2,313.1 L529.0,312.6 L534.2,313.9 L538.1,313.4 L542.8,312.9 M510.0,311.9 L508.0,316.0 L505.0,319.9 L503.2,325.1 L499.7,329.5 L497.3,333.9 M497.3,333.9 L501.9,333.7 L506.8,333.3 L511.8,333.1 L517.2,333.3 L523.4,332.5 L528.2,331.3 L532.7,331.7 L539.1,330.2 L543.6,330.9 M497.3,333.9 L498.7,337.5 L498.4,343.3 L498.2,348.2 L498.6,354.5 L496.6,361.6 M496.6,361.6 L501.4,364.0 L506.5,366.2 L511.6,366.7 L516.3,368.9 L520.2,372.2 L526.3,374.5 L531.1,378.0 M496.6,361.6 L497.8,366.2 L497.4,372.4 L498.0,377.5 L498.0,381.1 L497.6,388.1 L496.6,392.8 L497.5,399.9 L496.5,405.2 L496.0,411.6 M496.0,411.6 L502.9,412.1 L508.9,410.7 L514.7,409.5 L520.2,409.9 L523.7,408.3 L528.8,407.3 L533.7,406.1 M496.0,411.6 L494.9,416.5 L493.3,421.7 L492.6,429.6 M492.6,429.6 L499.1,428.5 L504.8,427.7 L509.7,426.3 L515.2,426.2 L520.6,425.3 L524.6,424.5 L530.3,425.4 M492.6,429.6 L492.8,433.9 L493.3,438.5 L492.9,442.7 L493.3,447.8 L494.5,453.7 L495.0,459.6 M495.0,459.6 L501.3,460.3 L505.4,461.2 L511.2,463.9 L517.1,465.7 L520.6,468.3 L526.7,471.0 L530.9,473.0 M495.0,459.6 L495.0,465.6 L496.5,469.7 L497.3,476.1 L497.2,481.3 L498.2,485.6 L499.1,490.0 L500.5,495.1 L501.4,500.6 L501.5,505.9 M513.0,466.3 L513.7,471.6 L515.5,477.4 L517.4,482.7 L518.5,488.0 L519.2,492.5 L519.4,497.7 L520.6,504.1 M501.5,505.9 L507.2,504.2 L513.6,503.9 L518.9,502.5 L523.7,502.8 L529.8,501.7 L534.8,502.6 L539.6,502.4 M501.5,505.9 L500.9,511.2 L501.4,514.3 L501.9,520.7 L504.1,524.9 L506.1,531.5 L507.8,536.6 M520.6,504.1 L520.7,510.6 L523.2,516.3 L523.6,523.0 L521.8,527.3 L521.0,530.7 L520.5,535.7 M507.8,536.6 L512.4,537.0 L516.4,539.1 L521.6,538.7 L527.3,536.8 L533.3,534.8 M496.6,609.2 L502.5,608.7 L507.8,606.1 L512.5,605.5 L517.7,604.6 L521.6,602.3 L525.9,600.5 L532.4,599.2 L536.7,596.2 L540.7,594.0 M496.6,609.2 L496.5,614.0 L496.2,619.6 L492.4,628.4 M518.7,601.6 L517.2,607.4 L515.6,614.0 L515.4,619.4 L514.8,625.5 L514.6,629.0 L514.1,635.0 M492.4,628.4 L496.7,630.9 L501.4,631.9 L506.0,633.7 L510.2,635.4 L514.3,635.9 L519.8,638.4 L524.4,639.1 L531.0,640.5 L535.9,641.7 M496.5,644.9 L501.6,645.8 L506.0,644.6 L512.2,645.1 L517.4,646.6 L523.3,646.7 L527.4,647.7 L533.3,649.0 L538.4,650.6 M500.7,661.4 L505.6,661.2 L510.3,661.3 L513.3,662.4 L518.3,662.1 L523.6,661.8 L529.7,662.0 L535.3,660.1 L541.0,659.6 M500.7,661.4 L500.8,666.4 L499.8,673.3 L499.9,678.6 L500.5,684.2 L501.9,689.9 M501.9,689.9 L505.9,691.3 L511.5,693.3 L515.3,694.6 L520.7,695.0 L525.5,698.3 L531.8,701.4 L536.4,704.0 L543.3,705.8 M501.9,689.9 L501.4,695.2 L500.6,702.2 L499.9,707.4 L500.1,712.1 L498.8,718.6 L497.9,722.2 L496.8,726.7 L496.5,731.2 L497.0,736.9 L495.7,741.2 M495.7,741.2 L496.0,746.2 L495.0,749.7 L495.1,754.9 L494.3,761.7 L493.4,767.4 L493.9,773.1 M493.9,773.1 L493.3,778.2 L492.5,782.5 L492.3,789.6 L492.3,795.8 L493.9,802.0 L494.6,807.9 M494.2,790.5 L499.6,789.9 L505.2,787.2 L508.9,785.2 L514.0,784.5 L519.1,782.6 L525.7,779.7 L530.0,777.2 L535.8,776.1 M494.6,807.9 L496.4,815.2 L498.4,820.1 L500.9,825.8 L501.9,829.9 L504.5,833.9 M519.1,802.0 L520.9,806.6 L522.0,811.5 L521.9,817.6 L522.5,822.0 L523.0,828.6 M504.5,833.9 L511.0,832.0 L516.2,831.2 L520.8,829.2 L526.7,828.1 L531.2,825.8 L535.8,825.8 L541.5,823.3 M504.5,833.9 L503.3,838.8 L502.1,842.6 L497.6,848.5 L493.8,855.1 M493.8,855.1 L497.6,857.6 L502.6,859.2 L507.7,863.0 L512.9,865.5 L517.9,868.0 L524.3,871.4 M539.2,-33.5 L543.6,-30.6 L547.8,-29.4 L551.5,-27.0 L556.1,-24.0 L561.9,-22.0 L567.3,-18.8 L572.9,-17.2 M539.2,-33.5 L537.6,-28.2 L536.5,-22.6 L534.2,-16.0 L532.6,-9.8 L532.7,-6.5 L530.8,-0.5 L530.2,4.6 L529.1,8.5 L527.8,12.5 M527.8,12.5 L533.9,13.2 L539.4,12.8 L544.8,12.1 L550.2,11.1 L556.5,10.8 L561.0,10.5 L565.7,7.2 L570.7,6.5 M527.8,12.5 L530.3,16.7 L534.5,19.8 L537.8,25.9 L541.5,30.0 M541.5,30.0 L545.2,30.5 L551.0,31.3 L555.0,30.9 L561.3,30.1 L566.8,30.1 L572.3,30.9 M541.5,30.0 L541.4,35.0 L540.8,40.6 L541.5,45.6 L541.8,50.1 L541.4,55.3 L542.2,62.0 L543.6,66.9 L543.2,72.7 M543.2,72.7 L548.8,70.8 L554.0,69.7 L560.2,69.9 L567.8,70.8 M543.2,72.7 L542.7,77.7 L539.3,84.2 L538.3,88.9 L534.7,94.1 L531.6,97.1 M531.6,97.1 L531.9,100.8 L531.3,105.5 L531.1,109.5 L530.0,115.2 L531.5,120.6 L530.0,125.8 L531.8,130.7 L531.0,137.2 L531.2,141.4 L531.8,147.8 M531.8,147.8 L536.7,146.4 L540.0,146.4 L546.4,143.5 L551.5,142.7 L558.2,140.6 L563.5,138.1 M531.8,147.8 L532.5,151.2 L531.9,157.4 L529.6,163.6 M529.6,163.6 L536.0,165.6 L540.7,166.7 L545.8,166.2 L549.9,168.1 L555.0,167.3 L560.8,168.2 L564.5,167.4 M529.6,163.6 L530.9,169.4 L531.3,175.2 L531.3,182.4 L529.2,186.4 L529.0,192.4 L526.9,196.5 M526.9,196.5 L531.9,197.2 L537.6,197.8 L544.1,198.6 L549.3,200.6 L554.3,202.6 L559.1,204.1 L564.2,206.0 M526.9,196.5 L526.6,202.1 L526.7,207.7 L526.3,214.0 L528.3,219.3 L527.2,223.1 L528.7,229.6 L529.1,234.9 L531.2,240.0 L531.0,245.3 M531.0,245.3 L535.8,246.4 L539.7,245.6 L545.2,246.1 L551.0,246.4 L555.5,246.7 L561.5,245.3 L565.5,245.6 L571.0,246.6 L576.6,245.7 M531.0,245.3 L529.2,251.6 L528.8,258.0 L525.5,263.8 M528.3,254.6 L533.7,254.2 L541.1,254.7 L545.4,255.3 L552.3,255.5 L556.5,256.5 L562.8,257.9 L567.0,259.8 L570.3,259.5 L575.4,261.2 M525.5,263.8 L529.7,264.7 L535.2,265.9 L539.1,266.6 L543.6,269.2 L548.7,269.7 L552.6,271.9 L558.7,271.9 L564.3,274.4 L568.5,274.3 L574.2,276.7 M525.5,263.8 L528.2,269.4 L528.9,274.1 L531.2,279.1 L532.5,283.9 L535.0,289.7 L535.0,294.3 L537.2,298.2 L539.0,304.6 L540.4,307.5 L542.8,312.9 M534.2,288.4 L540.0,288.6 L545.1,289.9 L551.3,290.7 L557.1,290.5 L561.6,292.1 L568.5,294.6 M542.8,312.9 L551.0,313.4 L557.6,312.0 L562.7,312.5 M542.8,312.9 L544.6,319.5 L545.4,326.2 L543.6,330.9 M543.2,321.9 L549.0,322.4 L555.8,322.1 L562.6,320.5 M543.6,330.9 L549.3,328.0 L556.1,328.7 L562.4,328.5 M553.0,329.7 L552.7,335.7 L553.2,340.1 L551.4,346.4 L552.4,351.7 L551.4,357.1 L551.8,361.3 L550.2,366.4 L550.3,371.0 L549.1,375.8 M531.1,378.0 L535.6,376.1 L538.9,375.8 L543.9,373.4 L549.4,372.8 L554.6,372.4 L561.9,372.3 L567.0,373.6 M531.1,378.0 L532.8,383.0 L533.2,387.1 L533.0,393.4 L533.8,400.6 L533.7,406.1 M549.1,375.8 L548.9,380.8 L548.1,387.0 L548.3,392.7 L548.6,398.7 L548.8,405.5 M533.7,406.1 L539.8,404.7 L544.5,404.8 L549.7,404.4 L555.2,403.6 L559.9,404.5 L563.8,404.9 M533.7,406.1 L534.2,410.6 L533.0,418.1 L530.3,425.4 M530.3,425.4 L534.1,428.4 L539.2,430.4 L542.9,431.6 L546.6,435.3 L551.9,437.6 L556.4,441.7 L562.6,444.3 M530.6,449.2 L537.4,448.9 L542.8,450.3 L548.1,451.6 L555.0,453.0 L559.1,454.3 L564.4,455.9 M530.9,473.0 L534.8,472.9 L538.8,473.6 L544.6,473.1 L548.5,471.4 L554.2,470.4 L560.6,470.0 L566.1,467.6 M530.9,473.0 L531.9,477.0 L532.2,482.9 L532.4,486.5 L535.7,492.7 L537.6,498.3 L539.6,502.4 M539.6,502.4 L547.2,505.9 L552.1,508.0 L557.7,508.1 L562.2,508.1 L567.6,508.5 M539.6,502.4 L537.2,506.1 L535.9,512.1 L534.6,516.5 L534.0,522.4 L533.5,529.3 L533.3,534.8 M533.3,534.8 L537.4,534.9 L543.7,535.7 L547.8,535.4 L553.4,534.2 L559.3,534.9 L564.9,535.5 L571.7,534.0 L576.7,534.6 M533.3,534.8 L534.5,541.3 L534.5,547.6 L535.4,553.7 L534.6,559.3 L534.4,562.8 L532.8,567.7 M532.8,567.7 L539.2,569.2 L544.4,568.4 L549.6,569.6 L555.3,569.4 L560.5,568.8 L565.8,569.4 M540.7,594.0 L540.7,600.4 L539.8,605.5 L538.8,610.5 L537.3,615.7 L537.1,621.4 L537.6,626.4 L536.3,631.3 L535.8,635.9 L535.9,641.7 M549.5,596.3 L550.5,601.5 L553.2,606.8 L553.4,612.1 L555.4,616.9 L555.0,622.4 L555.7,628.7 L554.7,634.5 L554.9,640.1 M535.9,641.7 L540.8,639.6 L546.5,639.4 L552.1,638.8 L558.9,638.0 L563.8,638.2 L568.9,637.9 L573.9,638.5 M535.9,641.7 L538.1,644.8 L541.0,650.9 L541.0,659.6 M538.4,650.6 L543.6,650.4 L548.0,651.9 L554.0,652.4 L560.6,654.7 L566.1,655.8 M541.0,659.6 L546.5,662.9 L550.7,664.6 L555.6,668.2 L558.2,673.1 M541.0,659.6 L540.7,664.9 L540.8,671.2 L540.2,675.8 L540.0,681.5 L540.7,686.2 L539.9,691.6 L541.6,696.8 L542.9,701.3 L543.3,705.8 M542.1,682.7 L548.2,686.0 L552.3,688.2 L557.0,690.7 L561.4,690.9 M543.3,705.8 L548.4,706.0 L552.7,708.1 L558.5,708.0 L564.7,708.6 M543.3,705.8 L539.8,709.8 L535.4,713.9 L532.9,718.9 L529.4,722.5 L527.4,727.3 M554.0,707.2 L554.6,712.8 L553.1,718.3 L550.3,722.8 L545.8,726.8 M527.4,727.3 L532.6,726.6 L536.7,726.5 L541.6,726.4 L547.9,726.1 L551.8,726.4 L558.5,727.3 L564.3,726.3 M527.4,727.3 L525.8,732.5 L526.0,737.6 L526.0,745.1 L526.5,750.5 L528.0,756.1 M545.8,726.8 L544.6,731.5 L544.3,736.6 L545.5,741.3 L546.0,745.1 L546.3,751.6 L546.6,757.1 L548.0,764.4 M528.0,756.1 L532.9,759.0 L536.9,760.9 L542.3,763.0 L546.2,764.4 L551.8,767.2 L557.3,768.7 L563.6,771.9 L568.0,772.7 M528.0,756.1 L529.8,760.5 L532.6,767.1 L534.6,771.3 L536.9,776.9 L540.0,781.7 L540.4,787.2 L543.1,791.3 L543.6,796.2 M543.6,796.2 L548.2,798.3 L553.1,801.1 L558.5,803.2 L565.6,805.3 M543.6,796.2 L544.0,803.0 L543.5,807.0 L542.9,812.8 L541.7,818.3 L541.5,823.3 M542.5,809.7 L549.8,809.9 L554.4,810.6 L560.3,812.0 L565.3,814.7 L568.4,816.8 M541.5,823.3 L539.2,827.7 L537.8,833.0 L534.5,838.4 L533.2,843.5 L531.5,848.0 L530.7,852.1 L527.4,857.7 L526.5,863.1 L525.9,866.1 L524.3,871.4 M556.3,825.8 L555.7,830.2 L554.8,833.8 L553.1,839.0 L552.4,844.2 L551.1,848.9 L547.2,855.6 L546.1,861.1 L543.6,867.8 M524.3,871.4 L529.4,870.3 L533.6,869.0 L539.8,867.9 L545.1,865.8 L550.2,865.3 L557.5,863.9 L563.0,864.1 M572.9,-17.2 L578.4,-21.4 L582.4,-24.3 L586.7,-26.4 L592.8,-27.9 L598.0,-29.5 M572.9,-17.2 L573.6,-12.9 L573.5,-8.3 L573.0,-0.6 L570.7,6.5 M570.7,6.5 L577.6,6.7 L583.0,8.3 L589.1,10.1 L593.6,10.3 L599.5,11.4 L603.0,13.5 M570.7,6.5 L571.0,12.0 L572.4,17.1 L571.8,24.3 L572.3,30.9 M586.9,10.0 L588.5,17.1 L590.2,22.2 L589.1,26.9 L587.0,31.4 M572.3,30.9 L571.1,36.0 L570.0,40.9 L568.7,45.6 L567.9,50.0 L568.7,56.5 L568.4,61.3 L568.6,65.2 L567.8,70.8 M567.8,70.8 L575.0,68.5 L579.8,67.6 L585.6,68.3 L590.3,69.1 L594.4,69.4 M567.8,70.8 L567.4,74.3 L568.4,78.3 L566.4,83.3 L564.9,88.7 L563.4,94.5 L561.5,100.4 L559.9,107.0 M559.9,107.0 L564.9,105.7 L569.6,106.0 L575.0,104.6 L580.8,104.2 L586.1,101.6 L590.9,100.2 L597.8,100.1 L602.3,97.8 M559.9,107.0 L560.5,114.0 L562.9,119.3 L562.0,123.7 L563.6,129.6 L563.3,134.5 L563.5,138.1 M563.5,138.1 L567.6,137.6 L572.7,138.3 L577.5,136.7 L584.2,135.0 L591.6,134.4 M563.5,138.1 L563.1,144.1 L565.1,149.0 L563.7,155.3 L564.3,161.3 L564.5,167.4 M577.5,136.3 L577.6,141.6 L578.3,147.3 L578.9,153.8 L579.6,158.2 L580.1,164.5 M564.5,167.4 L570.6,167.7 L575.7,166.9 L579.8,164.8 L586.0,165.1 L590.5,162.2 L595.7,161.6 M564.5,167.4 L564.0,173.8 L564.6,179.4 L565.6,185.0 L564.8,190.4 L563.8,196.8 L564.6,202.1 L564.2,206.0 M564.2,206.0 L570.4,207.7 L575.4,209.4 L582.1,209.9 L586.3,211.8 L591.1,211.6 L596.3,212.4 L600.8,212.4 M564.2,206.0 L566.3,209.3 L567.5,214.5 L569.8,219.5 L572.0,223.8 L572.4,227.9 L574.8,234.3 L575.7,240.2 L576.6,245.7 M576.6,245.7 L582.1,245.5 L588.7,245.6 L593.9,243.4 L600.7,241.7 M576.6,245.7 L576.3,251.4 L573.8,256.9 L574.8,261.7 L574.1,267.1 L573.5,271.2 L574.2,276.7 M574.2,276.7 L579.9,276.5 L585.0,277.0 L590.5,278.0 L596.3,277.3 L601.6,277.7 L606.6,276.8 M574.2,276.7 L573.3,281.4 L570.4,285.9 L568.8,290.6 L567.5,297.0 L567.2,301.5 L564.7,307.5 L562.7,312.5 M562.7,312.5 L567.7,311.1 L573.9,310.6 L579.1,310.6 L582.9,308.3 L589.2,307.9 L593.6,305.9 L598.8,305.4 L603.0,302.7 L608.3,301.8 M562.4,328.5 L568.2,326.7 L574.5,325.9 L579.9,325.5 L586.2,325.7 L590.8,326.3 L595.2,326.8 L599.9,327.0 L603.6,328.4 M583.0,328.4 L582.3,333.4 L581.7,337.3 L582.0,342.2 L583.4,347.9 L583.1,352.7 L585.3,358.0 L585.6,364.2 L587.3,370.1 M567.0,373.6 L572.2,372.7 L575.2,371.7 L579.7,371.8 L585.8,371.5 L590.0,370.8 L596.0,369.8 L601.9,367.4 L607.6,366.6 M567.0,373.6 L566.9,379.1 L566.3,385.8 L565.6,392.0 L563.9,395.1 L563.5,400.3 L563.8,404.9 M563.8,404.9 L568.7,404.8 L574.5,407.3 L579.5,406.2 L584.9,407.3 L589.0,407.6 L594.5,409.2 L599.5,409.8 M563.8,404.9 L564.6,411.6 L564.7,417.5 L565.4,424.4 L564.6,428.5 L563.6,434.0 L564.2,439.6 L562.6,444.3 M563.2,424.6 L570.2,424.4 L575.8,423.9 L580.5,422.4 L586.2,420.7 L592.2,420.7 L597.6,419.3 M562.6,444.3 L567.6,440.9 L572.5,438.2 L576.8,436.2 L581.3,434.3 L585.4,432.9 L590.9,430.2 L595.7,428.8 M562.6,444.3 L562.7,450.0 L564.1,455.5 L564.9,461.2 L566.1,467.6 M579.2,436.6 L582.0,441.8 L582.5,446.9 L584.4,450.1 L585.7,457.4 L586.4,462.7 L586.3,468.8 M566.1,467.6 L570.7,466.2 L576.2,466.2 L579.2,466.6 L585.7,465.7 L589.8,466.5 L596.3,467.3 L601.8,469.7 L606.5,470.0 M566.1,467.6 L567.5,472.8 L567.8,476.7 L567.0,481.3 L567.4,485.9 L567.2,492.0 L568.8,496.4 L568.5,501.9 L567.6,508.5 M566.8,488.0 L570.7,485.8 L576.0,484.8 L580.7,483.6 L586.9,482.4 L592.3,482.7 L599.1,480.8 M567.6,508.5 L573.9,505.3 L580.0,503.7 L584.6,499.4 L588.9,494.8 L591.7,491.6 M567.6,508.5 L567.5,514.0 L569.1,520.9 L571.6,525.0 L574.7,530.0 L576.7,534.6 M579.7,500.0 L579.3,505.4 L579.9,508.7 L581.4,513.7 L582.9,520.0 L585.5,524.0 L586.9,529.4 M576.7,534.6 L581.4,533.2 L587.7,531.5 L593.0,527.4 L597.0,524.1 M576.7,534.6 L575.9,538.0 L573.6,542.8 L571.1,548.0 L569.5,553.8 L568.2,558.4 L568.2,562.8 L565.8,569.4 M571.3,552.0 L576.0,551.3 L581.5,548.7 L586.8,546.8 L592.1,545.0 L596.3,543.2 L601.8,542.4 M565.8,569.4 L571.9,569.0 L577.4,568.5 L580.8,566.8 L586.1,566.3 L591.9,565.4 L595.9,564.0 L601.4,562.2 L606.6,560.7 M565.8,569.4 L564.5,574.4 L562.7,579.3 L561.2,584.3 L558.5,590.7 L559.2,594.5 L558.4,598.5 M558.4,598.5 L563.4,599.0 L570.2,600.8 L576.1,600.0 L579.9,600.8 L585.1,598.7 L590.7,599.0 L595.5,597.8 M558.4,598.5 L559.8,604.2 L561.0,609.0 L562.9,613.4 L564.9,619.4 L567.9,623.1 L569.3,628.6 L571.0,633.1 L573.9,638.5 M566.2,618.5 L571.2,618.7 L574.8,617.4 L579.6,616.7 L585.9,616.8 L592.2,616.0 L597.9,614.7 M573.9,638.5 L580.4,637.3 L585.3,637.7 L590.5,635.4 L594.6,633.9 L600.2,631.6 M573.9,638.5 L571.4,642.3 L569.6,645.6 L566.7,650.8 L564.4,655.7 L562.9,661.4 L559.7,668.1 L558.2,673.1 M587.1,635.1 L586.0,641.2 L586.1,646.2 L584.6,650.7 L583.7,656.8 L581.6,661.2 L581.7,665.3 L580.4,671.1 M558.2,673.1 L563.0,671.9 L567.6,671.4 L573.1,671.7 L577.9,670.4 L583.2,668.9 L589.2,669.3 L595.4,668.8 L602.6,669.2 M558.2,673.1 L557.7,678.6 L557.4,683.1 L558.9,687.6 L560.1,693.6 L561.6,698.9 L562.6,702.7 L564.7,708.6 M561.4,690.9 L567.5,690.0 L571.7,690.2 L576.2,688.8 L581.5,687.5 L586.4,686.4 L590.6,683.5 L595.6,681.6 L600.6,680.1 M564.7,708.6 L564.0,715.9 L564.7,721.0 L564.3,726.3 M564.3,726.3 L568.1,727.6 L573.7,729.8 L577.8,730.8 L583.4,732.2 L587.8,731.8 L593.7,734.4 L598.7,734.5 L603.9,734.7 L609.6,735.8 M564.3,726.3 L564.2,730.8 L566.1,736.9 L567.4,741.3 L567.6,747.3 L567.3,751.8 L568.1,756.9 L568.3,762.0 L568.0,767.1 L568.0,772.7 M568.0,772.7 L574.2,772.1 L579.0,770.0 L583.9,768.9 L589.0,767.0 L591.7,763.8 M568.0,772.7 L566.8,778.3 L567.9,784.2 L566.0,789.4 L566.0,793.9 L566.0,799.5 L565.6,805.3 M565.6,805.3 L569.6,805.1 L574.3,805.9 L580.1,805.4 L586.8,805.7 L592.3,806.9 L599.1,807.2 L605.1,807.8 M565.6,805.3 L565.3,810.6 L567.4,816.9 L569.1,821.9 L571.2,828.2 M568.4,816.8 L574.5,814.7 L582.1,814.8 L588.4,815.0 L593.6,813.9 L598.2,814.5 M571.2,828.2 L574.7,825.4 L580.1,823.0 L586.5,821.9 L591.3,821.2 M571.2,828.2 L568.6,833.6 L566.2,838.9 L565.3,843.3 L564.1,849.7 L564.2,855.2 L564.1,858.7 L563.0,864.1 M567.1,846.2 L572.4,844.8 L578.1,845.2 L585.1,844.9 L590.0,843.6 L595.5,841.8 M563.0,864.1 L567.3,862.3 L572.2,862.0 L575.6,861.7 L581.1,862.2 L587.7,862.0 L594.1,861.5 L599.6,862.4 M598.0,-29.5 L599.4,-23.3 L601.3,-18.2 L601.4,-14.1 L601.3,-8.3 L603.2,-2.6 L602.6,3.6 L602.2,7.8 L603.0,13.5 M603.0,13.5 L607.7,11.4 L615.0,8.2 L619.4,7.3 L623.6,6.0 L629.6,4.4 M603.0,13.5 L600.6,18.6 L601.0,25.8 L601.7,31.9 M616.3,8.9 L616.5,14.0 L614.8,20.9 L616.8,26.8 L616.2,29.9 L616.8,35.5 L618.2,39.3 M601.7,31.9 L608.2,34.1 L612.5,37.0 L616.9,39.2 L623.0,39.9 L627.5,42.2 L629.9,45.4 L634.7,46.7 M601.7,31.9 L600.5,38.2 L600.0,44.6 L598.5,49.5 L596.2,55.4 L596.1,60.2 L595.8,65.6 L594.4,69.4 M618.2,39.3 L615.9,44.3 L614.7,51.4 L613.1,56.5 L612.3,60.4 L612.0,65.3 L610.7,69.6 M594.4,69.4 L599.6,69.3 L605.5,69.1 L610.3,70.5 L616.0,69.5 L622.1,70.3 L627.0,69.8 M594.4,69.4 L595.0,75.5 L595.0,82.6 L596.3,87.9 L600.1,93.0 L602.3,97.8 M602.3,97.8 L609.2,101.5 L615.5,102.5 L620.1,104.7 L624.8,107.8 M602.3,97.8 L601.0,101.6 L599.5,107.5 L597.7,111.5 L596.0,116.9 L595.1,123.6 L593.4,129.6 L591.6,134.4 M591.6,134.4 L597.3,135.8 L602.2,139.7 L606.1,141.6 L612.4,143.7 L618.3,145.0 L623.5,146.7 M591.6,134.4 L593.4,140.7 L594.0,144.5 L595.8,150.7 L595.0,155.3 L595.7,161.6 M593.6,148.0 L598.3,151.0 L602.3,152.4 L608.7,154.9 L613.6,157.6 L617.0,157.0 L622.3,158.4 L628.5,159.6 M595.7,161.6 L600.7,164.2 L606.9,165.6 L612.2,168.8 L617.8,170.1 L623.7,170.6 L628.8,171.0 L633.5,172.5 M595.7,161.6 L595.7,166.4 L594.7,173.8 L596.7,178.4 L595.3,183.4 L596.0,189.2 L597.6,192.8 L598.1,199.4 L598.4,203.0 L600.5,207.5 L600.8,212.4 M600.8,212.4 L605.4,210.2 L610.4,208.3 L614.9,205.1 L620.6,201.2 L624.7,198.6 M600.7,241.7 L605.5,241.2 L612.3,241.4 L616.4,243.1 L621.2,242.2 L627.4,243.8 L632.4,244.1 M600.7,241.7 L603.0,245.8 L603.4,250.4 L605.1,256.4 L604.9,261.9 L606.5,265.8 L606.2,271.6 L606.6,276.8 M606.6,276.8 L612.1,274.8 L616.6,274.5 L622.2,271.5 L627.4,268.8 L633.8,265.7 M620.2,271.2 L621.4,277.2 L623.1,283.5 L622.5,290.3 L624.5,295.8 L625.2,300.3 L625.5,304.0 M608.3,301.8 L613.7,303.6 L620.7,304.8 L626.9,306.1 L632.2,304.9 L637.8,306.1 L642.6,306.2 M608.3,301.8 L608.7,307.8 L607.9,313.7 L606.6,320.7 L604.8,325.0 L603.6,328.4 M625.5,304.0 L625.7,309.9 L625.0,315.0 L622.3,319.2 L620.2,324.3 L618.6,329.2 M603.6,328.4 L608.3,329.4 L613.6,331.6 L620.1,331.6 L625.9,331.5 L633.6,330.0 M603.6,328.4 L605.3,333.3 L605.4,338.3 L606.7,343.8 L608.0,350.9 L607.2,355.7 L606.9,361.5 L607.6,366.6 M618.6,329.2 L618.5,334.9 L620.7,340.5 L619.4,346.3 L619.6,352.1 L619.2,356.5 L619.8,361.8 L618.9,367.1 L618.3,371.8 M607.6,366.6 L612.1,368.4 L617.0,370.1 L621.6,373.5 L629.0,377.0 M607.6,366.6 L608.0,372.4 L606.6,379.1 L607.2,384.2 L604.6,390.6 L604.3,395.6 L602.8,401.1 L601.0,404.9 L599.5,409.8 M603.6,388.2 L607.9,389.3 L614.4,389.7 L619.2,389.0 L627.3,389.8 M599.5,409.8 L599.7,415.4 L599.3,422.1 L595.7,428.8 M612.6,406.2 L613.8,410.4 L614.1,416.7 L615.9,422.4 L615.6,430.4 M595.7,428.8 L601.1,430.7 L608.3,430.1 L613.7,431.9 L618.8,431.3 L624.5,432.3 L631.3,433.2 L635.4,432.1 M595.7,428.8 L597.0,435.6 L596.3,440.2 L597.4,446.1 L599.5,452.2 L599.8,455.8 L601.3,460.8 L603.2,465.5 L606.5,470.0 M606.5,470.0 L611.8,470.2 L616.7,471.1 L621.7,471.3 L626.2,472.0 L632.7,474.6 L638.4,476.2 M606.5,470.0 L603.8,474.6 L602.3,479.3 L598.0,482.8 L595.2,486.4 L591.7,491.6 M591.7,491.6 L596.8,491.9 L602.4,494.1 L606.0,494.7 L612.3,495.9 L615.8,497.0 L620.9,497.4 L625.9,498.8 L630.2,501.4 L636.0,504.0 L640.2,505.8 M591.7,491.6 L592.6,497.0 L592.7,500.4 L593.9,507.3 L593.7,512.2 L594.7,517.1 L597.0,524.1 M615.9,498.7 L614.2,503.6 L612.9,509.7 L610.7,514.9 L611.8,520.0 L612.0,524.7 M597.0,524.1 L602.4,523.2 L608.5,524.2 L613.1,523.3 L617.3,524.1 L622.1,525.3 L627.1,525.2 M597.0,524.1 L599.2,527.8 L600.3,534.1 L602.6,539.2 L603.3,544.3 L605.2,550.1 L604.7,554.5 L606.6,560.7 M601.8,542.4 L607.5,541.9 L611.6,543.3 L618.0,544.1 L622.9,543.8 L629.4,544.2 M606.6,560.7 L611.2,561.8 L615.6,563.6 L621.1,563.7 L626.8,562.6 L631.7,563.2 M606.6,560.7 L606.2,564.9 L603.9,570.4 L603.9,575.6 L602.8,580.8 L599.9,587.1 L597.4,591.5 L595.5,597.8 M619.2,562.0 L618.3,567.3 L616.1,572.5 L616.1,576.1 L614.1,582.7 L613.5,588.1 L613.5,592.9 L611.3,596.5 L611.2,602.6 M611.2,602.6 L610.2,609.5 L610.8,615.0 L611.0,620.7 L610.5,625.7 L611.4,631.8 L613.8,635.6 M600.2,631.6 L606.6,631.9 L612.5,632.8 L617.1,635.4 L622.6,638.1 L627.3,639.5 M600.2,631.6 L600.0,636.6 L601.1,642.3 L600.0,645.7 L600.6,651.6 L601.1,657.6 L602.2,664.2 L602.6,669.2 M601.4,650.4 L607.9,650.9 L613.7,649.5 L619.9,649.5 L624.7,649.2 L629.8,649.8 L634.5,648.9 M602.6,669.2 L607.5,667.7 L612.6,666.4 L617.2,664.8 L620.4,664.3 L625.7,663.2 L631.6,661.0 L635.7,659.6 L641.8,658.4 M602.6,669.2 L599.8,675.5 L598.7,680.9 L599.0,686.3 L598.7,690.9 M598.7,690.9 L604.0,691.2 L608.7,693.3 L615.2,693.1 L620.3,694.7 L625.3,695.8 L629.7,695.3 L635.4,695.9 L641.3,696.9 M598.7,690.9 L600.6,697.4 L601.9,702.8 L602.9,707.0 L606.1,712.9 L605.5,717.1 L606.6,722.8 L608.3,726.3 L608.9,731.2 L609.6,735.8 M609.6,735.8 L612.7,734.2 L618.2,732.2 L622.0,727.8 L627.2,725.7 M591.7,763.8 L597.7,762.4 L603.6,761.6 L610.6,762.6 L615.4,762.5 L620.0,764.3 L623.8,765.0 M591.7,763.8 L593.7,767.2 L594.4,772.7 L596.4,777.9 L597.7,781.8 L598.8,786.8 L599.6,792.0 L601.8,797.5 L603.6,802.5 L605.1,807.8 M607.7,764.4 L609.5,769.3 L612.0,775.2 L612.0,781.0 L614.5,785.2 L615.1,790.6 L615.7,796.7 L618.0,801.3 L617.9,806.4 M605.1,807.8 L610.7,807.4 L614.7,805.2 L620.3,805.5 L626.3,804.9 L630.7,805.0 M605.1,807.8 L600.7,811.6 L595.9,816.2 L591.3,821.2 M598.2,814.5 L602.7,814.6 L607.5,815.6 L613.7,815.3 L618.1,814.2 L623.9,815.4 L629.9,813.6 L635.2,813.6 M591.3,821.2 L597.1,821.2 L602.7,820.1 L609.0,820.9 L614.3,820.4 L618.9,821.3 L625.3,821.8 L630.8,821.5 L634.6,821.2 L639.7,822.1 M591.3,821.2 L593.0,826.8 L594.2,832.0 L594.9,838.0 L596.2,843.0 L598.0,848.0 L597.7,853.9 L599.3,857.7 L599.6,862.4 M599.6,862.4 L603.4,862.5 L609.0,861.6 L613.9,862.6 L618.6,860.9 L625.7,860.8 L631.0,861.8 M640.9,-20.5 L645.1,-24.1 L650.4,-28.9 L655.0,-31.2 L659.6,-32.0 M640.9,-20.5 L637.0,-15.2 L634.6,-10.5 L632.7,-5.4 L631.2,-1.2 L629.6,4.4 M650.2,-26.2 L649.5,-21.0 L648.6,-16.2 L649.2,-11.1 L648.4,-5.8 L646.2,1.1 L645.4,7.1 M629.6,4.4 L635.5,6.5 L639.2,7.4 L645.9,8.9 L650.2,9.4 L656.3,9.9 L661.3,9.9 M629.6,4.4 L629.8,9.8 L631.0,13.4 L630.4,18.9 L631.4,23.6 L632.4,28.3 L633.0,34.1 L634.4,40.4 L634.7,46.7 M634.7,46.7 L639.2,44.3 L643.1,40.8 L646.7,38.5 L651.2,35.4 L658.0,33.5 L662.8,31.2 M634.7,46.7 L632.9,53.7 L629.9,60.2 L628.0,65.8 L627.0,69.8 M627.0,69.8 L633.6,68.7 L638.7,68.2 L645.2,69.3 L650.9,69.3 L656.1,69.5 L660.4,70.8 M627.0,69.8 L627.0,75.1 L627.1,78.8 L627.3,84.2 L627.1,91.0 L626.9,96.1 L626.8,101.0 L624.8,107.8 M624.8,107.8 L630.4,106.5 L634.6,105.4 L638.9,103.5 L644.8,102.9 L649.2,100.8 L654.8,100.8 L661.4,100.3 L667.3,99.9 M624.8,107.8 L625.3,112.6 L625.7,118.8 L625.5,124.2 L626.8,129.4 L625.8,134.4 L625.3,141.6 L623.5,146.7 M623.5,146.7 L629.7,143.9 L635.6,141.5 L639.3,140.4 L645.9,139.3 L651.4,137.0 L656.0,135.8 L660.6,134.9 L665.1,133.1 L670.0,132.3 M628.5,159.6 L633.5,158.1 L636.9,157.8 L641.5,156.6 L647.7,155.0 L652.1,155.1 L657.9,153.7 L663.5,154.0 L669.7,152.7 M633.5,172.5 L639.3,174.1 L644.1,174.1 L649.2,175.0 L654.7,175.0 L659.7,174.6 L665.0,173.1 L669.4,173.2 M633.5,172.5 L631.2,178.0 L627.6,184.1 L626.8,190.8 L624.5,194.7 L624.7,198.6 M624.7,198.6 L628.7,200.0 L633.5,200.2 L637.9,202.4 L642.9,202.9 L647.4,205.5 L654.1,207.5 L659.5,209.0 M628.5,221.4 L633.2,220.3 L640.1,220.2 L644.6,221.2 L650.2,221.9 L656.5,223.3 L661.7,223.4 M632.4,244.1 L637.4,241.8 L642.8,239.2 L647.9,238.3 L654.0,238.0 L658.4,237.5 L663.9,237.8 M632.4,244.1 L632.8,251.6 L634.3,257.5 L632.9,262.4 L633.8,265.7 M633.8,265.7 L639.3,266.7 L643.1,268.3 L649.9,268.5 L655.1,271.1 L660.5,271.5 L668.0,272.6 M633.8,265.7 L634.7,269.5 L633.6,274.5 L635.8,279.6 L635.8,284.0 L637.2,290.7 L638.7,295.5 L640.7,300.1 L642.6,306.2 M650.9,269.1 L651.6,273.9 L653.8,279.2 L653.5,284.4 L654.6,289.3 L654.4,295.9 L653.7,300.2 M642.6,306.2 L646.6,303.7 L650.8,299.0 L654.3,298.3 L659.0,295.9 L664.8,294.1 M642.6,306.2 L639.4,311.3 L636.2,315.9 L635.8,321.2 L633.7,324.5 L633.6,330.0 M638.1,318.1 L643.1,317.8 L648.4,317.5 L653.5,318.0 L659.1,317.4 L662.7,318.1 L668.3,318.7 M633.6,330.0 L638.2,330.6 L642.8,333.0 L647.9,335.3 L652.8,337.1 L657.8,338.4 L662.3,339.9 L667.0,341.8 L671.7,343.2 M633.6,330.0 L632.9,334.6 L631.0,339.6 L630.1,343.6 L629.9,348.8 L630.6,354.4 L629.4,360.7 L629.4,365.6 L630.0,371.8 L629.0,377.0 M631.3,353.5 L636.4,354.9 L642.7,354.8 L647.2,355.6 L651.4,355.7 L657.5,355.5 L663.9,356.8 L668.8,356.9 M629.0,377.0 L635.2,375.5 L640.3,373.6 L645.6,371.1 L651.7,371.5 L656.2,371.4 L661.2,371.1 L665.8,370.6 M629.0,377.0 L629.2,381.2 L628.6,385.0 L627.2,389.8 L626.5,396.0 L625.7,402.6 M627.3,389.8 L633.1,388.4 L637.6,388.5 L642.3,389.3 L647.4,388.6 L653.9,388.8 L659.3,389.0 L663.6,390.3 M625.7,402.6 L626.5,406.8 L626.5,411.4 L629.3,415.9 L629.8,421.5 L632.2,426.6 L635.4,432.1 M643.5,406.3 L646.5,412.6 L649.5,418.8 L650.4,423.0 L651.3,426.8 L652.6,430.8 M635.4,432.1 L640.8,430.9 L647.3,432.2 L653.2,431.5 L657.9,430.1 L664.1,430.2 L669.7,429.4 M635.4,432.1 L636.4,437.1 L635.7,442.7 L637.3,447.5 L635.9,452.4 L636.5,458.3 L637.9,464.4 L637.6,470.2 L638.4,476.2 M636.9,454.1 L642.5,454.7 L649.3,453.6 L653.6,453.3 L659.7,453.1 L666.4,453.0 L671.0,453.6 M638.4,476.2 L646.1,476.4 L652.3,478.7 L657.1,479.0 L662.8,478.8 L668.2,478.4 L672.3,477.7 M638.4,476.2 L638.1,482.0 L637.1,488.4 L636.6,493.0 L639.0,499.9 L640.2,505.8 M640.2,505.8 L644.4,506.2 L648.3,508.1 L656.2,508.6 L662.9,510.9 M640.2,505.8 L634.6,511.0 L631.0,515.0 L628.3,521.0 L627.1,525.2 M651.5,508.3 L648.1,515.3 L647.1,521.3 L646.4,526.4 M627.1,525.2 L633.0,525.7 L638.7,525.5 L644.4,525.8 L650.8,526.2 L655.4,526.5 L661.8,526.0 L665.7,527.6 M627.1,525.2 L629.0,530.4 L629.8,535.9 L630.8,541.0 L630.5,545.3 L631.1,550.5 L631.8,557.9 L631.7,563.2 M631.7,563.2 L635.3,564.6 L642.0,565.8 L646.9,564.8 L651.3,564.8 L658.0,564.3 L663.5,564.4 L670.3,563.8 M651.0,563.5 L651.3,568.6 L651.9,573.0 L650.7,577.0 L651.3,582.7 L651.1,587.1 L649.5,593.0 L649.8,599.2 L648.8,604.5 M626.9,607.4 L632.3,607.3 L636.1,605.9 L643.1,603.8 L646.8,604.3 L653.9,602.5 L658.2,601.5 L664.6,601.8 L670.6,601.7 M626.9,607.4 L626.9,613.4 L627.9,619.1 L629.3,624.8 L628.8,630.2 L628.7,633.7 L627.3,639.5 M627.3,639.5 L632.3,645.3 L636.7,648.5 L638.4,654.0 L641.8,658.4 M634.5,648.9 L638.7,650.2 L643.9,650.9 L647.8,650.9 L654.5,650.2 L660.4,649.9 L665.6,649.6 M641.8,658.4 L648.3,660.9 L653.3,662.5 L658.6,664.0 L662.7,664.3 L668.8,665.4 L673.0,665.6 M641.8,658.4 L642.1,664.3 L641.2,671.4 L641.5,677.0 L641.2,682.9 L640.4,687.8 L640.8,692.9 L641.3,696.9 M657.4,662.0 L658.8,666.9 L657.6,673.3 L658.0,679.1 L657.2,684.8 L656.9,691.1 L654.9,696.8 L654.0,701.6 M641.3,696.9 L646.4,699.8 L649.9,702.9 L655.1,703.9 L660.8,705.0 L666.8,706.3 M641.3,696.9 L639.3,701.9 L634.8,707.1 L633.8,711.1 L631.6,717.4 L629.5,720.7 L627.2,725.7 M627.2,725.7 L631.1,727.8 L636.4,729.1 L641.1,730.6 L646.2,730.8 L653.2,731.3 L659.3,730.7 L664.9,731.9 M627.2,725.7 L625.5,731.6 L624.8,738.5 L624.5,742.9 L623.7,749.2 L622.7,755.8 L623.8,760.5 L623.8,765.0 M625.5,745.4 L631.3,745.8 L636.3,747.5 L641.0,747.0 L646.0,748.7 L651.9,750.2 L657.0,749.9 L661.1,750.0 L666.3,751.7 M623.8,765.0 L628.2,766.3 L634.4,768.6 L640.0,769.6 L645.2,769.6 L650.4,771.3 L656.2,770.8 L662.3,771.3 L667.7,771.5 M623.8,765.0 L624.4,770.0 L623.9,775.9 L624.0,779.8 L625.4,785.3 L627.2,789.5 L627.9,795.5 L630.0,800.9 L630.7,805.0 M645.7,768.2 L643.6,773.2 L642.8,778.9 L643.0,783.4 L644.1,789.7 L645.4,797.5 M630.7,805.0 L635.1,802.8 L640.7,800.3 L644.4,796.5 L650.3,794.0 L656.0,791.4 L660.1,789.9 M630.7,805.0 L631.0,811.2 L635.0,816.1 L639.7,822.1 M645.4,797.5 L645.7,801.6 L646.7,804.5 L648.1,810.4 L650.6,814.7 L652.6,820.8 L655.4,827.1 M639.7,822.1 L644.7,823.5 L650.5,825.5 L657.0,828.4 L662.7,829.1 L666.6,830.5 L671.2,832.1 M655.4,827.1 L653.1,832.1 L651.6,839.2 L650.3,844.1 L648.8,849.1 L648.2,854.3 L648.5,857.2 L647.7,862.6 L646.5,866.8 M631.0,861.8 L635.3,862.0 L639.8,864.0 L645.6,865.2 L650.0,866.1 L655.9,869.5 L662.1,871.8 M659.6,-32.0 L663.6,-30.3 L667.8,-29.9 L673.8,-29.6 L678.2,-27.8 L683.7,-28.2 L689.1,-26.7 L694.8,-27.3 L701.6,-26.1 L706.7,-26.2 M659.6,-32.0 L658.9,-26.8 L659.3,-22.5 L658.8,-16.8 L658.3,-12.2 L660.1,-7.6 L660.6,-2.3 L659.6,4.5 L661.3,9.9 M661.3,9.9 L667.6,9.8 L672.6,8.9 L679.0,8.2 L683.8,9.7 L688.2,10.4 L694.2,10.0 L698.8,10.7 L704.0,11.4 L708.8,12.7 M661.3,9.9 L661.0,15.5 L659.6,21.4 L661.3,25.9 L662.8,31.2 M662.8,31.2 L667.7,33.1 L672.5,32.3 L677.2,34.0 L683.1,34.2 L689.2,35.3 L692.9,34.3 L699.0,35.5 L704.0,34.8 M662.8,31.2 L662.7,35.4 L662.7,41.4 L662.6,45.9 L662.2,52.6 L661.6,57.3 L661.7,63.5 L660.4,70.8 M660.4,70.8 L667.1,72.2 L672.4,73.0 L678.7,73.5 L683.5,75.2 L689.2,75.6 M660.4,70.8 L663.3,75.1 L665.5,81.8 L666.3,86.5 L667.1,93.0 L667.3,99.9 M667.3,99.9 L671.7,100.7 L675.4,101.2 L681.5,101.2 L685.8,102.5 L692.1,101.5 L698.5,102.5 L703.7,102.0 M667.3,99.9 L667.5,104.5 L668.1,110.3 L668.5,116.9 L668.2,120.7 L669.8,128.0 L670.0,132.3 M670.0,132.3 L677.2,133.4 L682.5,133.5 L688.4,135.5 L692.7,137.4 L698.6,139.3 M670.0,132.3 L671.5,136.9 L672.2,141.9 L671.9,147.4 L672.0,152.2 L671.2,156.9 L671.6,162.8 L670.6,167.4 L669.4,173.2 M669.7,152.7 L675.0,153.2 L679.7,155.0 L683.5,155.2 L691.0,156.9 L696.3,157.1 M669.4,173.2 L666.8,179.6 L665.9,185.0 L664.8,189.3 L663.5,195.5 L662.6,199.5 L660.3,204.6 L659.5,209.0 M659.5,209.0 L663.8,208.2 L669.4,205.4 L673.7,203.9 L678.7,204.0 L684.8,202.6 L688.4,202.4 L693.9,202.1 L700.3,201.7 M659.5,209.0 L658.9,216.5 L659.3,222.6 L660.3,226.8 L661.5,232.0 L663.9,237.8 M679.9,205.4 L680.4,211.3 L680.3,216.0 L679.2,221.6 L679.5,226.5 L679.5,231.8 L677.5,237.9 M665.9,255.2 L670.3,254.9 L675.9,253.9 L681.4,253.4 L687.3,255.4 L693.3,256.3 M668.0,272.6 L671.6,274.9 L676.2,275.8 L681.6,275.5 L688.1,275.7 L695.4,274.5 M668.0,272.6 L668.2,276.5 L667.8,281.9 L665.3,287.4 L664.8,294.1 M664.8,294.1 L666.4,300.6 L667.7,305.8 L669.1,311.4 L668.8,316.6 L670.4,322.4 L671.2,327.9 L671.1,334.1 L671.9,337.3 L671.7,343.2 M678.6,297.5 L677.4,301.1 L677.3,305.7 L678.6,311.6 L679.2,316.0 L679.1,321.4 L679.3,327.3 L681.5,332.4 L682.3,338.7 M671.7,343.2 L678.3,340.0 L684.9,337.1 L689.9,334.4 L692.9,334.2 M671.7,343.2 L672.2,350.3 L671.0,357.0 L670.2,362.1 L667.8,366.1 L665.8,370.6 M682.3,338.7 L683.0,345.3 L681.1,351.4 L682.7,357.2 L682.1,362.1 L683.2,365.9 M665.8,370.6 L671.3,368.5 L677.7,366.8 L682.3,364.2 L688.3,362.1 L692.5,362.0 L696.9,360.7 L700.5,361.1 M665.8,370.6 L663.9,376.8 L664.7,382.6 L662.8,386.7 L662.6,393.6 L662.4,399.2 L661.0,404.7 L661.4,410.0 M661.4,410.0 L668.2,407.9 L673.6,408.1 L679.4,405.6 L685.3,403.9 L690.1,401.6 M661.4,410.0 L664.9,413.5 L669.0,419.0 L669.8,423.9 L669.7,429.4 M665.5,419.7 L670.6,419.9 L677.0,418.8 L681.7,419.0 L687.5,418.8 L691.6,418.4 M669.7,429.4 L677.2,429.2 L682.7,430.7 L689.4,431.5 L693.0,435.1 M669.7,429.4 L669.3,436.6 L669.1,442.4 L669.5,446.7 L670.2,452.5 L669.5,459.6 L671.1,463.4 L670.1,467.7 L671.4,474.0 L672.3,477.7 M671.0,453.6 L675.6,450.0 L681.1,448.2 L687.5,447.2 L692.7,447.6 M672.3,477.7 L675.5,476.0 L680.5,472.8 L684.5,468.3 L687.7,465.2 L692.3,460.0 M672.3,477.7 L671.5,484.2 L670.9,490.5 L669.0,496.4 L666.8,501.7 L664.6,507.1 L662.9,510.9 M667.6,494.3 L673.4,492.5 L676.9,491.1 L683.3,490.0 L690.2,487.9 L696.0,484.7 M662.9,510.9 L669.0,509.0 L673.5,508.2 L677.9,509.0 L683.5,508.2 L688.6,508.0 L693.6,508.9 L699.8,509.5 M662.9,510.9 L663.4,516.1 L663.8,521.6 L665.7,527.6 M681.3,510.2 L683.5,515.6 L684.5,522.6 L684.8,526.2 L686.0,530.9 M665.7,527.6 L671.4,529.1 L676.3,528.6 L683.1,529.9 L687.5,531.9 L691.5,531.0 L697.4,533.7 L701.2,533.9 L706.4,534.3 M665.7,527.6 L666.0,531.6 L665.4,538.1 L665.7,541.5 L666.1,548.0 L668.1,553.4 L669.2,557.4 L670.3,563.8 M686.0,530.9 L685.6,535.2 L685.3,539.4 L684.4,544.9 L683.0,550.3 L683.5,554.7 L683.6,561.0 M670.3,563.8 L674.6,561.0 L679.2,560.4 L685.3,559.3 L690.4,558.3 L696.9,558.3 M670.3,563.8 L670.3,570.0 L669.6,575.6 L670.6,580.6 L671.3,587.3 L671.3,591.0 L670.7,596.5 L670.6,601.7 M683.6,561.0 L682.5,567.2 L682.9,571.2 L682.5,578.3 L681.1,582.2 L682.1,588.4 L681.3,592.8 L682.6,599.0 M670.6,601.7 L679.1,599.3 L685.4,596.6 L691.1,596.8 L694.5,596.3 M670.6,601.7 L670.1,608.3 L667.6,612.6 L667.5,618.5 L664.5,624.3 L661.7,629.4 L658.2,633.6 M658.2,633.6 L663.9,632.2 L668.5,631.7 L673.4,632.4 L677.3,631.3 L683.0,630.0 L688.5,629.0 L693.1,628.6 L697.5,628.2 L703.4,626.6 L707.8,625.3 M658.2,633.6 L659.5,639.2 L662.5,644.7 L664.4,649.3 L665.7,653.6 L669.0,657.9 L671.0,661.2 L673.0,665.6 M673.0,665.6 L678.9,666.3 L685.4,666.8 L690.8,668.1 L698.2,667.6 L703.4,666.1 L708.0,665.5 M673.0,665.6 L671.7,669.1 L670.5,673.5 L671.0,678.8 L669.3,684.5 L668.8,689.8 L668.7,694.5 L666.9,701.2 L666.8,706.3 M690.5,665.5 L689.7,670.8 L688.5,677.3 L688.5,681.3 L686.5,687.7 L684.8,690.6 L684.7,695.0 L682.2,700.3 M666.8,706.3 L671.0,703.9 L675.4,702.8 L680.6,700.7 L684.8,699.1 L692.6,696.4 L697.7,694.2 M666.8,706.3 L666.2,711.4 L666.4,716.4 L666.6,721.4 L664.8,727.4 L664.9,731.9 M665.9,719.1 L672.0,717.7 L676.2,717.6 L681.2,716.9 L688.1,715.3 L692.7,713.4 L697.3,711.7 L703.0,710.0 M664.9,731.9 L669.6,730.6 L675.4,729.5 L681.2,727.9 L686.8,727.7 L691.7,726.6 L697.6,726.2 L702.3,726.8 L708.3,725.7 M664.9,731.9 L664.9,737.5 L666.0,742.5 L667.1,748.8 L667.5,754.2 L668.1,759.4 L668.5,766.3 L667.7,771.5 M667.7,771.5 L673.7,770.6 L680.8,768.7 L686.6,767.1 L690.2,765.5 L695.1,766.2 L700.4,765.2 M684.0,768.3 L683.5,773.7 L681.1,777.8 L679.9,784.7 L676.5,791.2 M660.1,789.9 L664.8,790.2 L670.5,791.4 L674.7,791.1 L681.3,791.6 L687.0,793.2 L693.0,792.5 M665.6,811.0 L671.1,810.8 L676.4,812.0 L682.8,811.8 L688.2,813.4 L691.7,812.3 L695.9,814.3 L700.8,814.6 M671.2,832.1 L677.0,834.0 L680.4,834.6 L686.9,836.3 L691.6,837.2 L697.4,837.2 L703.0,837.3 L708.7,836.8 M671.2,832.1 L668.8,835.9 L666.6,839.7 L664.9,844.8 L663.9,849.9 L662.9,855.5 L662.9,860.6 L662.2,865.9 L662.1,871.8 M662.1,871.8 L666.6,871.5 L669.9,870.4 L675.6,870.5 L681.0,870.5 L686.2,870.3 L691.9,871.2 L697.5,872.3 L703.7,872.1 M706.7,-26.2 L710.3,-25.5 L717.1,-25.2 L724.0,-22.9 M706.7,-26.2 L707.5,-21.3 L706.3,-15.4 L707.3,-8.8 L707.1,-3.7 L708.8,2.0 L709.0,7.6 L708.8,12.7 M715.3,-24.5 L714.8,-19.8 L716.3,-15.0 L715.8,-10.6 L718.9,-5.7 L720.3,1.6 L722.9,6.6 M708.8,12.7 L714.0,10.6 L718.4,7.7 L721.8,3.6 L726.7,3.5 L731.2,1.3 L737.0,0.5 M708.8,12.7 L706.8,17.0 L706.2,21.8 L704.8,28.4 L704.0,34.8 M704.0,34.8 L701.1,39.1 L698.1,44.6 L696.7,50.5 L694.1,53.9 L692.5,59.8 L692.0,64.0 L691.1,70.2 L689.2,75.6 M717.6,41.7 L718.0,46.6 L716.3,53.1 L715.5,58.7 L713.2,63.8 L711.7,66.8 L710.1,72.4 L708.9,76.4 M689.2,75.6 L694.1,74.3 L699.2,74.3 L703.5,74.4 L709.2,75.1 L714.9,74.4 L722.2,76.0 L728.5,77.2 M689.2,75.6 L690.7,80.0 L691.9,84.8 L693.4,90.7 L697.6,94.4 L699.4,98.6 L703.7,102.0 M703.7,102.0 L707.4,102.8 L713.6,102.7 L718.9,104.6 L725.3,108.3 M703.7,102.0 L702.8,108.1 L702.2,112.1 L701.2,117.9 L700.5,122.5 L700.1,127.6 L698.2,134.2 L698.6,139.3 M701.1,120.7 L708.0,119.2 L712.9,119.9 L717.7,119.4 L722.8,121.1 L726.3,123.3 M698.6,139.3 L704.4,137.1 L710.8,137.0 L716.1,136.8 L722.4,137.6 L727.4,138.2 M698.6,139.3 L698.2,145.0 L698.9,150.0 L697.9,155.4 L698.3,160.0 L697.0,165.5 L694.8,170.1 L694.0,175.0 M713.0,138.8 L712.8,143.5 L712.1,148.3 L710.2,153.7 L710.1,157.6 L710.1,164.3 L710.5,170.1 L711.7,176.7 M694.0,175.0 L700.1,174.8 L705.1,175.8 L709.6,175.4 L715.7,177.2 L720.4,176.5 L724.3,178.2 L729.4,178.4 M694.0,175.0 L695.2,180.7 L696.1,186.3 L697.6,190.9 L698.4,196.3 L700.3,201.7 M700.3,201.7 L706.6,202.3 L712.8,205.0 L716.5,204.2 L721.9,206.0 L727.7,205.4 L731.7,203.8 L736.9,204.1 M700.3,201.7 L698.1,206.3 L696.1,211.8 L695.1,218.1 L694.8,221.6 L693.8,227.8 L691.4,233.4 L691.2,238.1 M691.2,238.1 L695.0,237.2 L700.5,234.9 L705.9,235.2 L711.5,235.1 L717.5,235.1 L723.5,234.8 L729.5,234.7 L735.7,235.6 M691.2,238.1 L691.9,243.8 L691.1,248.3 L690.6,253.2 L691.9,258.4 L692.2,263.3 L693.8,268.2 L695.4,274.5 M713.5,236.8 L714.3,242.6 L715.3,247.8 L717.1,254.8 L717.6,260.2 L716.0,264.2 L716.7,269.8 M695.4,274.5 L700.7,272.6 L706.6,271.1 L711.1,269.4 L716.8,269.2 L721.4,268.3 L726.8,265.9 L732.7,266.2 L738.1,265.1 M695.4,274.5 L695.3,279.9 L695.5,283.3 L693.8,289.6 L694.0,294.4 L692.5,300.9 M693.9,287.7 L698.8,287.0 L704.0,285.9 L708.3,284.9 L714.9,284.2 L720.0,285.2 L724.6,285.1 L730.3,285.4 L735.5,284.9 M692.5,300.9 L698.0,302.5 L702.0,302.4 L706.9,302.9 L712.6,302.7 L717.6,303.9 L722.1,303.8 L727.7,303.6 L732.9,304.7 M692.5,300.9 L691.7,305.2 L690.8,309.4 L690.5,316.0 L691.5,321.8 L691.7,326.7 L692.9,334.2 M712.7,302.8 L713.9,308.8 L714.6,316.4 L713.8,321.4 L713.7,325.7 L711.3,330.5 M692.9,334.2 L698.3,332.7 L705.1,332.3 L711.2,329.4 L717.2,329.6 L720.3,329.1 L725.3,328.5 L729.8,326.9 M692.9,334.2 L693.5,338.9 L695.5,343.7 L697.1,349.6 L698.9,354.3 L700.5,361.1 M700.5,361.1 L700.8,366.6 L698.8,371.9 L698.2,377.8 L696.8,383.5 L696.9,388.8 L695.1,392.9 L691.9,397.9 L690.1,401.6 M713.0,366.5 L712.1,372.2 L710.0,378.6 L708.8,384.9 L708.8,389.3 L708.3,394.2 L708.7,400.7 L708.2,404.4 M690.1,401.6 L695.4,402.3 L699.0,403.6 L703.7,403.4 L709.1,404.8 L714.4,405.0 L720.7,407.3 L726.2,407.2 M693.0,435.1 L698.4,435.4 L704.0,435.8 L707.8,435.4 L711.9,437.7 L718.4,438.4 L723.1,439.8 L727.4,443.0 L732.1,444.1 M692.7,447.6 L696.5,447.7 L702.4,448.8 L707.5,450.4 L711.5,451.7 L718.8,453.3 L722.7,453.9 L728.8,456.6 L735.5,458.3 M692.3,460.0 L698.1,461.3 L701.4,462.0 L707.6,462.5 L711.6,462.8 L717.9,464.6 L723.5,466.2 L727.6,467.5 L734.1,470.1 L739.0,472.5 M692.3,460.0 L694.4,466.3 L694.7,472.5 L695.2,477.8 L697.5,483.1 L697.9,489.7 L699.0,495.0 L698.3,500.4 L699.4,504.2 L699.8,509.5 M699.8,509.5 L703.4,506.0 L706.8,503.0 L711.7,499.2 L717.0,496.5 L724.1,494.4 L729.5,491.9 M699.8,509.5 L700.7,512.8 L699.5,518.4 L701.4,523.2 L703.6,528.4 L706.4,534.3 M706.4,534.3 L712.7,535.8 L718.1,535.6 L723.6,536.7 L729.2,538.8 L733.1,538.9 M706.4,534.3 L704.1,537.5 L700.7,542.2 L699.2,547.4 L697.1,553.1 L696.9,558.3 M696.9,558.3 L704.2,559.4 L710.2,560.5 L715.2,561.1 L720.2,561.8 L725.5,562.4 L731.8,561.1 L734.9,560.6 L740.4,561.1 M696.9,558.3 L695.5,564.3 L694.2,570.8 L694.5,576.4 L693.1,582.4 L693.8,587.6 L694.8,592.5 L694.5,596.3 M694.5,596.3 L695.8,602.1 L696.6,607.4 L699.5,610.9 L702.2,615.8 L703.7,620.6 L707.8,625.3 M707.8,625.3 L713.5,626.6 L719.3,628.6 L725.5,630.8 L731.3,632.8 L736.8,632.7 M707.8,625.3 L708.5,630.1 L709.6,635.9 L709.8,641.1 L709.5,646.1 L708.8,650.3 L708.4,656.0 L707.5,661.4 L708.0,665.5 M722.3,629.0 L722.8,633.9 L724.4,639.5 L724.1,644.8 L724.6,649.6 L724.2,655.2 L722.4,662.3 M708.0,665.5 L706.9,669.6 L705.7,675.2 L703.0,680.1 L702.7,684.2 L698.9,690.0 L697.7,694.2 M697.7,694.2 L703.5,696.0 L708.6,697.7 L711.8,698.3 L717.3,701.2 L722.4,701.1 L727.1,702.2 L732.9,702.4 M697.7,694.2 L699.2,699.4 L701.6,704.6 L702.3,709.9 L705.0,714.3 L706.8,720.8 L708.3,725.7 M708.3,725.7 L707.5,729.6 L707.2,734.0 L706.8,738.8 L706.4,744.4 L704.4,749.3 L704.4,753.8 L701.9,759.9 L700.4,765.2 M704.3,745.5 L710.5,744.9 L716.2,745.6 L721.4,745.9 L725.0,746.4 L729.4,746.4 M700.4,765.2 L706.1,765.0 L710.2,764.6 L717.6,766.8 L724.7,767.5 M700.4,765.2 L698.6,769.0 L695.3,774.7 L694.3,779.4 L693.0,786.8 L693.0,792.5 M696.7,778.8 L703.3,778.4 L707.9,778.7 L714.1,777.4 L719.6,777.0 L722.5,777.9 L727.1,777.9 L732.2,779.1 M693.0,792.5 L698.4,792.3 L704.0,790.4 L707.4,790.9 L714.0,790.1 L718.0,789.2 L723.5,790.3 L729.5,790.1 L733.8,790.5 L739.7,790.8 M693.0,792.5 L693.7,798.1 L695.8,802.8 L696.1,808.4 L697.6,812.5 L700.1,818.3 L701.7,823.6 L703.4,827.8 L706.6,832.6 L708.7,836.8 M716.3,791.6 L715.7,797.3 L716.4,801.8 L715.1,808.1 L714.5,813.9 L714.5,819.6 L714.4,824.5 L715.4,829.7 M708.7,836.8 L713.6,831.7 L718.4,826.1 L722.1,822.7 M708.7,836.8 L708.7,842.1 L707.1,846.4 L707.3,852.3 L706.3,856.9 L704.5,863.2 L705.1,866.9 L703.7,872.1 M715.4,829.7 L716.1,834.7 L717.1,839.9 L718.5,845.0 L718.2,849.8 L720.5,854.8 L720.8,860.2 L720.7,866.9 M703.7,872.1 L709.0,869.6 L712.0,868.4 L716.1,866.4 L721.4,865.6 L727.5,864.8 L732.7,862.4 L737.7,861.8 M724.0,-22.9 L729.1,-21.6 L735.0,-20.0 L740.6,-19.3 L745.4,-18.9 L751.1,-18.8 L754.6,-16.9 L759.5,-18.1 L764.1,-17.1 M724.0,-22.9 L725.4,-17.8 L728.9,-12.4 L731.8,-9.4 L733.2,-4.5 L737.0,0.5 M744.0,-20.0 L745.0,-14.0 L747.1,-7.6 L748.2,-2.0 L752.1,0.9 M737.0,0.5 L743.0,0.7 L748.7,2.1 L753.6,1.8 L758.4,1.7 L762.7,2.1 L767.2,1.3 M737.0,0.5 L737.6,4.9 L736.6,9.9 L736.5,16.3 L736.9,20.0 L735.9,25.4 L735.2,31.1 L732.9,36.9 L732.2,42.0 L731.1,48.5 M731.1,48.5 L735.8,46.3 L741.1,43.2 L745.5,40.7 L749.2,39.1 L754.7,35.1 L758.8,33.8 L764.6,30.5 L769.0,29.0 M731.1,48.5 L732.0,54.6 L730.4,61.4 L731.3,66.5 L729.8,72.5 L728.5,77.2 M729.8,62.9 L734.0,60.7 L737.7,57.7 L742.7,55.6 L748.4,55.5 L753.4,53.3 L759.0,52.6 L764.8,52.5 M728.5,77.2 L732.7,76.6 L738.6,77.0 L744.2,77.6 L748.1,76.4 L755.6,76.9 L760.6,76.0 M726.9,92.8 L732.7,91.7 L736.8,89.8 L741.9,87.7 L748.7,87.7 L754.6,85.7 L759.5,85.8 M725.3,108.3 L729.5,106.0 L734.0,103.8 L739.5,102.2 L744.4,100.8 L748.8,98.2 L753.2,97.3 L758.4,95.7 M725.3,108.3 L727.0,114.4 L729.3,118.1 L729.6,125.0 L729.2,130.7 L727.4,138.2 M741.9,102.0 L743.2,105.7 L744.8,112.6 L746.2,116.6 L746.4,122.8 L745.8,129.8 L746.4,136.4 M727.4,138.2 L732.1,137.1 L736.3,136.2 L741.9,136.4 L748.6,134.8 L753.7,135.2 L758.5,135.6 L765.4,134.6 M727.4,138.2 L727.4,143.2 L727.3,150.0 L727.3,155.0 L727.4,160.2 L727.6,164.4 L728.1,170.2 L729.2,174.2 L729.4,178.4 M729.4,178.4 L734.8,175.2 L739.4,172.8 L746.0,171.6 L751.3,168.6 L754.7,167.2 L760.8,166.8 L764.2,165.2 L770.2,164.6 L774.4,163.0 M729.4,178.4 L731.0,183.0 L732.7,187.3 L734.6,192.7 L736.5,198.1 L736.9,204.1 M736.9,204.1 L742.8,204.7 L748.6,204.3 L753.8,204.7 L760.8,203.9 L765.3,202.6 L771.0,201.8 M736.9,204.1 L737.5,209.9 L737.3,215.2 L738.5,221.6 L737.4,226.4 L736.6,231.0 L735.7,235.6 M735.7,235.6 L737.7,240.5 L738.3,247.2 L737.5,252.4 L738.0,259.5 L738.1,265.1 M753.4,235.7 L753.3,240.3 L752.9,244.3 L753.3,249.1 L752.7,253.9 L752.7,259.2 L753.2,265.8 M738.1,265.1 L744.9,263.9 L750.6,264.7 L755.8,265.5 L759.5,264.8 L765.0,266.3 L768.3,266.5 M738.1,265.1 L736.5,268.8 L737.0,274.8 L736.8,279.7 L735.5,284.9 L733.8,292.4 L733.9,298.8 L732.9,304.7 M753.2,265.8 L752.8,271.0 L749.8,276.7 L748.9,282.2 L748.9,286.5 L748.3,292.6 L747.1,298.3 L746.2,303.4 M732.9,304.7 L738.3,304.0 L745.6,303.0 L749.6,304.0 L756.0,302.1 L759.5,302.0 M732.9,304.7 L731.5,310.2 L730.9,315.1 L730.8,320.4 L729.8,326.9 M729.8,326.9 L734.8,328.8 L739.6,329.0 L744.6,330.2 L749.2,331.1 L755.8,332.9 L760.7,331.8 L764.7,332.6 L771.0,332.9 M729.8,326.9 L728.7,332.6 L729.6,336.4 L728.5,342.4 L728.4,346.8 L728.4,351.0 L728.4,357.5 L727.7,362.7 L726.9,367.2 L725.4,371.8 M750.4,329.9 L748.2,333.4 L748.6,338.0 L747.0,342.6 L745.7,348.5 L745.2,353.6 L743.9,359.3 L743.3,364.4 L742.5,369.6 M725.4,371.8 L731.1,372.1 L735.7,371.6 L741.6,371.1 L747.7,369.4 L754.0,369.4 L759.6,367.3 M725.4,371.8 L724.7,377.6 L725.1,382.2 L725.8,389.0 L725.4,394.4 L725.5,398.9 L726.3,402.0 L726.2,407.2 M726.2,407.2 L731.3,406.8 L735.8,406.2 L740.3,404.3 L746.8,401.9 L752.1,400.8 L756.9,398.3 M726.2,407.2 L727.7,413.5 L727.6,419.2 L729.2,424.2 L730.3,430.8 L730.6,434.5 L730.9,439.3 L732.1,444.1 M732.1,444.1 L733.8,449.8 L736.0,453.4 L737.2,459.6 L739.1,465.9 L739.0,472.5 M749.3,440.0 L750.2,445.2 L753.1,451.9 L752.8,458.2 L752.5,463.7 L753.0,468.2 M739.0,472.5 L743.7,472.2 L748.5,471.2 L753.3,468.3 L759.2,465.8 L766.9,463.8 M739.0,472.5 L734.6,476.6 L731.2,481.4 L730.8,486.0 L729.5,491.9 M729.5,491.9 L734.5,492.6 L737.3,494.5 L743.4,494.8 L748.8,492.8 L755.5,491.5 M729.5,491.9 L730.2,496.9 L731.4,502.6 L732.5,507.7 L733.0,513.8 L733.7,519.8 L733.5,523.9 L734.5,528.1 L733.9,534.1 L733.1,538.9 M742.5,491.7 L743.4,497.3 L742.5,502.9 L743.5,507.1 L743.1,513.6 L745.0,518.8 L745.3,522.7 L746.8,529.0 L747.5,533.4 M733.1,538.9 L737.7,536.3 L741.5,534.7 L745.6,534.7 L751.1,532.7 L756.1,530.6 L761.8,527.9 M733.1,538.9 L734.4,546.5 L737.0,551.8 L738.3,557.2 L740.4,561.1 M736.8,550.0 L740.7,550.2 L745.0,548.8 L750.6,547.4 L757.3,546.0 L764.1,545.1 M740.4,561.1 L745.0,561.4 L749.3,561.0 L755.2,561.4 L761.0,562.0 L766.4,562.3 M740.4,561.1 L739.2,567.0 L737.7,570.7 L736.3,576.9 L733.7,581.3 L732.0,587.3 L731.7,592.1 L729.1,595.9 L727.5,601.0 L726.0,605.9 L725.2,609.6 M732.8,585.3 L737.9,583.8 L744.7,584.8 L749.8,583.0 L754.4,583.9 L759.4,582.5 L764.2,582.3 L768.3,582.2 M725.2,609.6 L730.8,608.9 L735.5,607.0 L740.7,605.9 L745.5,605.5 L750.5,604.1 L754.0,603.4 L759.2,601.8 L765.1,602.2 L770.2,602.0 M725.2,609.6 L725.5,613.4 L728.2,616.6 L730.7,621.2 L734.5,627.0 L736.8,632.7 M747.7,605.8 L750.2,611.3 L751.3,617.9 L751.0,623.1 L753.0,629.1 L752.5,635.2 M736.8,632.7 L742.7,632.6 L748.1,633.5 L754.2,635.4 L757.9,635.0 L763.3,637.3 L768.2,637.7 M736.8,632.7 L736.9,639.1 L736.4,643.3 L737.4,648.3 L737.1,653.7 L736.8,659.0 M736.8,645.8 L741.4,648.6 L746.0,648.5 L749.0,651.1 L755.4,651.5 L760.8,651.1 L766.8,651.1 M736.8,659.0 L741.7,660.1 L748.4,661.8 L753.0,662.6 L759.0,664.2 L765.4,664.5 M736.8,659.0 L734.9,664.9 L734.1,670.4 L733.4,675.0 L733.0,680.8 L734.2,684.9 L733.0,691.7 L733.5,696.9 L732.9,702.4 M751.1,661.8 L749.6,668.5 L747.1,674.8 L747.9,681.0 L746.4,686.2 L745.9,691.2 L747.0,696.3 M732.9,702.4 L736.6,700.3 L740.9,700.0 L745.8,697.8 L751.0,695.2 L756.1,692.4 L761.2,690.3 M732.9,702.4 L734.0,709.2 L734.4,716.3 L734.1,721.3 L734.1,725.2 M747.0,696.3 L746.9,703.7 L747.8,708.5 L749.0,714.1 L749.4,719.7 L751.0,724.3 L752.5,728.6 M734.1,725.2 L739.9,725.6 L746.1,728.7 L751.9,728.1 L757.3,729.6 L761.8,730.8 L766.4,731.8 L770.9,732.0 M734.1,725.2 L733.1,731.2 L732.3,737.0 L730.0,741.9 L730.3,747.0 L729.2,753.3 L728.0,756.7 L726.5,762.6 L724.7,767.5 M729.4,746.4 L734.1,746.8 L740.5,747.2 L744.2,747.4 L748.9,746.8 L755.1,749.4 L759.3,750.2 L763.9,752.8 M724.7,767.5 L730.7,769.8 L735.7,771.1 L741.7,770.6 L745.2,772.2 L752.1,773.9 L757.0,773.5 M724.7,767.5 L728.6,772.8 L731.9,777.2 L734.1,781.3 L738.3,786.9 L739.7,790.8 M739.7,790.8 L743.5,794.6 L749.3,796.8 L753.8,798.1 L759.7,800.0 L766.6,800.5 M739.7,790.8 L736.6,795.6 L733.7,800.5 L732.3,806.9 L730.2,810.9 L727.2,814.4 L725.4,818.4 L722.1,822.7 M722.1,822.7 L728.3,823.4 L733.4,823.4 L737.6,825.1 L744.3,824.4 L748.5,824.9 L753.9,823.6 L758.2,824.1 L763.8,823.5 M722.1,822.7 L724.9,828.3 L726.6,832.2 L728.5,837.8 L730.8,841.9 L731.2,847.2 L733.8,852.9 L736.5,857.0 L737.7,861.8 M729.9,842.2 L737.2,842.8 L742.3,841.2 L749.0,840.5 L754.8,841.9 L758.3,840.7 L763.8,840.2 L769.4,840.4 M737.7,861.8 L742.4,859.4 L748.2,858.4 L753.6,857.7 L758.6,856.6 L764.2,857.5 L768.8,857.3 L775.0,857.4 M764.1,-17.1 L768.9,-18.7 L776.0,-18.3 L781.3,-18.3 L784.8,-17.9 L790.3,-18.0 L795.3,-17.0 M764.1,-17.1 L766.0,-11.0 L767.9,-4.6 L767.2,1.3 M767.2,1.3 L772.7,3.4 L778.4,4.9 L784.9,5.1 L790.4,6.0 M767.2,1.3 L767.5,7.8 L767.4,13.8 L769.2,20.6 L769.7,24.4 L769.0,29.0 M769.0,29.0 L775.6,29.6 L780.4,30.0 L787.3,32.1 L792.3,31.7 L797.6,34.0 M769.0,29.0 L767.4,32.6 L766.5,38.6 L766.5,42.2 L765.2,47.5 L765.0,52.7 L763.4,59.6 L761.5,65.2 L760.8,70.0 L760.6,76.0 M760.6,76.0 L758.4,84.0 L757.9,90.1 L758.4,95.7 M758.4,95.7 L761.9,97.9 L766.9,100.3 L772.2,101.8 L776.1,103.9 L781.6,104.6 L788.2,104.5 M758.4,95.7 L760.1,100.5 L760.7,105.0 L762.2,109.2 L763.3,115.8 L763.7,121.3 L765.0,128.5 L765.4,134.6 M773.3,100.1 L773.7,106.5 L773.7,113.0 L773.7,119.2 L775.4,125.2 L775.4,130.2 L776.1,133.2 L776.7,138.4 M765.4,134.6 L771.7,136.0 L778.9,136.7 L784.4,140.4 L788.1,142.2 M765.4,134.6 L767.7,140.0 L769.0,145.2 L771.4,151.4 L773.2,157.7 L774.4,163.0 M774.4,163.0 L780.6,165.4 L785.3,167.7 L791.2,170.1 L797.5,171.7 L800.6,174.7 L805.4,179.1 M774.4,163.0 L772.3,168.5 L772.3,172.7 L769.9,177.9 L770.4,183.3 L770.4,190.1 L769.8,194.5 L771.0,201.8 M771.0,201.8 L776.8,203.5 L783.2,204.1 L789.0,207.5 M771.0,201.8 L771.5,208.4 L771.7,214.5 L772.9,219.0 L772.7,225.2 L770.8,231.0 L771.1,235.9 M771.1,235.9 L776.0,237.3 L782.9,238.6 L788.8,238.1 L794.1,236.5 M771.1,235.9 L769.5,239.5 L768.8,245.0 L766.6,250.7 L767.3,254.5 L767.7,260.2 L768.3,266.5 M782.6,236.2 L781.4,241.9 L782.4,248.0 L780.6,253.5 L781.0,257.1 L780.1,261.8 L781.2,266.3 M768.3,266.5 L771.9,264.9 L776.0,265.1 L781.8,263.5 L787.4,265.0 L794.0,266.1 M768.3,266.5 L766.6,272.0 L764.2,278.6 L763.1,283.9 L761.5,288.9 L760.0,292.7 L759.3,298.5 L759.5,302.0 M781.2,266.3 L781.9,273.2 L780.7,278.5 L781.0,284.5 L779.1,288.3 L778.5,295.0 L775.8,298.5 L775.1,303.8 M759.5,302.0 L762.5,306.3 L765.0,310.9 L765.8,315.3 L768.4,320.1 L769.2,327.8 L771.0,332.9 M775.1,303.8 L775.5,308.7 L777.3,313.0 L778.9,316.4 L778.2,321.8 L779.1,328.0 L779.5,332.5 L780.4,339.1 M771.0,332.9 L777.0,336.0 L783.1,339.3 L785.6,342.3 L789.8,345.3 M759.6,367.3 L765.0,369.3 L770.2,372.2 L775.6,374.9 L779.7,375.5 L783.4,377.4 L788.9,378.3 M759.6,367.3 L761.2,371.8 L760.0,376.8 L759.6,381.6 L759.2,387.9 L757.9,393.3 L756.9,398.3 M756.9,398.3 L759.6,405.1 L760.3,409.9 L761.6,417.4 L762.5,421.1 L765.4,427.7 L765.6,432.0 L766.5,435.9 M761.7,417.1 L768.0,417.3 L773.2,419.1 L779.1,418.4 L785.3,417.6 L789.2,416.2 L792.4,416.4 L797.4,414.6 M766.5,435.9 L771.0,436.8 L775.8,435.5 L780.7,435.9 L785.2,435.1 L790.1,435.9 L796.9,435.8 L802.9,435.6 M766.5,435.9 L767.2,439.9 L766.4,444.6 L766.6,450.6 L766.7,457.5 L766.9,463.8 M766.9,463.8 L772.3,463.1 L777.5,463.3 L782.4,464.0 L786.1,464.8 L792.7,465.5 L798.5,466.4 L803.4,468.2 M766.9,463.8 L763.4,468.6 L761.6,473.0 L759.5,478.5 L758.5,483.8 L756.4,487.7 L755.5,491.5 M785.2,466.0 L785.0,472.6 L784.3,478.7 L782.2,483.1 L780.5,488.8 L778.1,492.1 M755.5,491.5 L760.6,491.6 L764.7,491.2 L768.8,492.1 L772.5,491.8 L777.7,492.3 L784.7,492.1 L789.0,493.2 L793.9,492.7 L800.6,492.7 M755.5,491.5 L756.2,497.0 L758.2,503.9 L758.5,508.2 L758.8,514.7 L759.6,519.7 L760.7,522.7 L761.8,527.9 M761.8,527.9 L766.4,529.6 L771.4,529.9 L774.4,531.2 L780.5,533.1 L784.4,532.5 L791.3,533.6 L795.9,533.2 L801.5,534.2 M761.8,527.9 L762.8,535.3 L763.6,541.8 L764.8,547.7 L765.7,553.4 L766.0,557.8 L766.4,562.3 M781.6,531.1 L782.6,535.6 L784.8,540.6 L785.6,547.0 L786.8,552.8 L786.8,559.7 M766.4,562.3 L771.1,561.5 L775.6,560.5 L779.1,558.3 L784.1,556.9 L790.5,557.9 L795.3,557.7 L801.3,556.5 L807.2,557.1 M768.3,582.2 L772.6,582.6 L775.9,582.6 L781.2,581.8 L786.8,581.1 L791.7,580.3 L798.3,580.3 M770.2,602.0 L778.3,601.5 L783.8,602.0 L789.4,603.5 M779.8,602.8 L781.4,608.4 L782.8,612.5 L782.8,616.9 L784.8,623.6 L785.2,628.1 L787.4,634.6 M768.2,637.7 L767.1,643.9 L766.2,649.8 L766.1,655.2 L765.7,659.6 L765.4,664.5 M787.4,634.6 L787.6,639.4 L788.3,642.1 L787.2,648.7 L785.9,653.2 L785.1,659.6 L783.8,665.9 M765.4,664.5 L769.0,666.5 L773.6,665.7 L779.9,666.4 L784.5,667.8 L789.6,667.8 L795.6,668.2 L802.2,667.2 M765.4,664.5 L765.5,670.7 L763.9,675.5 L764.0,681.0 L762.2,684.8 L761.2,690.3 M763.3,677.4 L768.4,676.7 L775.0,678.5 L780.7,678.2 L785.3,678.7 L790.3,679.9 L794.0,680.9 L799.0,682.8 M761.2,690.3 L764.5,690.3 L769.8,691.8 L774.5,692.4 L778.5,694.4 L784.7,695.3 L790.0,695.8 L795.8,698.3 M761.2,690.3 L762.3,693.8 L763.4,698.5 L765.9,704.9 L766.0,708.5 L767.1,714.4 L769.3,719.6 L770.2,726.8 L770.9,732.0 M770.9,732.0 L776.3,731.3 L780.0,729.5 L786.0,729.0 L789.7,726.5 L795.4,724.5 L800.0,722.6 M770.9,732.0 L769.0,736.9 L768.2,740.3 L766.9,745.2 L765.5,750.8 L763.3,756.6 L761.3,762.3 L760.1,766.8 L757.0,773.5 M785.5,727.3 L784.6,731.1 L784.5,736.7 L783.5,739.6 L781.8,745.5 L779.8,748.9 L780.2,755.5 L778.3,761.3 L777.5,767.0 L775.6,771.6 M757.0,773.5 L762.2,774.8 L765.7,774.3 L771.2,773.8 L777.3,772.9 L782.1,773.2 L788.5,771.0 L794.1,769.8 M757.0,773.5 L759.5,778.4 L762.4,785.2 L765.4,790.8 L765.0,796.0 L766.6,800.5 M766.6,800.5 L770.5,802.0 L776.0,801.5 L781.9,799.7 L787.7,799.0 L793.2,797.5 M766.6,800.5 L765.7,807.9 L764.0,814.0 L764.1,819.1 L763.8,823.5 M763.8,823.5 L769.5,824.1 L774.5,827.0 L781.2,826.2 L786.1,828.4 L793.1,828.2 M763.8,823.5 L764.9,828.1 L767.3,833.6 L768.1,837.1 L770.7,841.4 L771.8,847.4 L772.2,852.8 L775.0,857.4 M775.0,857.4 L780.2,858.5 L785.5,862.2 L790.3,862.6 L795.3,866.6 L801.0,868.9 M795.3,-17.0 L801.7,-18.0 L806.4,-17.3 L812.6,-18.1 L816.4,-20.0 L823.2,-19.8 L826.3,-22.5 L832.2,-22.8 L835.7,-25.9 L840.1,-27.5 M795.3,-17.0 L793.0,-13.6 L789.6,-7.9 L789.5,-1.3 L790.4,6.0 M790.4,6.0 L796.4,3.8 L801.6,3.3 L806.1,2.4 L812.8,2.9 L819.3,2.0 L825.1,2.7 M790.4,6.0 L791.7,10.9 L793.2,16.9 L794.1,21.7 L795.4,27.7 L797.6,34.0 M807.7,4.4 L807.5,9.2 L807.9,14.6 L808.4,19.9 L809.0,26.0 L809.9,33.9 M797.6,34.0 L803.3,31.8 L810.9,30.9 L816.3,32.8 L822.2,33.8 M797.6,34.0 L799.8,39.6 L800.1,45.6 L801.7,51.8 L802.7,56.7 L804.4,61.1 L804.4,65.3 L806.5,70.3 M806.5,70.3 L811.7,70.5 L816.5,71.2 L822.0,72.2 L827.7,73.6 L832.7,74.2 M806.5,70.3 L803.6,75.9 L800.3,81.5 L797.5,86.3 L793.9,91.6 L791.9,96.9 L789.9,100.6 L788.2,104.5 M788.2,104.5 L792.9,103.2 L796.8,104.4 L801.7,103.4 L808.9,101.8 L813.6,100.4 L820.4,100.2 L825.8,98.6 M788.2,104.5 L788.0,110.4 L787.4,116.6 L787.0,122.6 L787.3,128.2 L786.9,132.4 L787.8,136.6 L788.1,142.2 M788.1,142.2 L793.1,140.2 L799.7,138.1 L805.5,136.3 L810.5,135.3 L815.4,134.4 L818.2,133.6 L823.0,131.6 M788.1,142.2 L789.3,147.9 L791.6,151.9 L794.7,156.9 L796.3,162.7 L797.8,166.2 L799.6,171.2 L803.1,174.3 L805.4,179.1 M805.4,179.1 L801.6,184.2 L797.6,187.9 L795.7,192.7 L793.7,196.9 L790.7,203.0 L789.0,207.5 M789.0,207.5 L795.8,207.2 L801.9,207.1 L807.8,206.1 L813.3,206.9 L819.0,206.6 L824.8,206.4 L828.9,205.2 L834.7,205.8 L838.7,205.3 M789.0,207.5 L790.7,212.9 L790.9,220.4 L792.3,225.2 L792.7,230.6 L794.1,236.5 M791.5,222.0 L797.8,220.9 L803.9,220.2 L808.7,221.1 L814.3,219.7 L818.8,220.4 L824.0,219.0 L828.2,220.3 L833.2,220.5 M794.1,236.5 L800.0,237.5 L805.9,238.6 L812.2,238.3 L817.6,237.6 L822.7,237.5 L827.8,235.6 M794.1,236.5 L792.8,243.6 L792.7,248.6 L793.1,255.5 L793.6,259.9 L794.0,266.1 M810.9,236.0 L812.1,242.3 L811.4,247.0 L811.0,252.6 L811.5,259.0 L809.9,265.0 L807.9,270.4 M794.0,266.1 L801.2,267.7 L807.9,268.3 L813.4,271.3 L817.8,273.0 L821.8,274.7 M794.0,266.1 L792.8,271.6 L792.0,277.7 L792.8,283.8 L792.2,289.3 L790.6,293.8 L790.5,299.0 L790.7,305.5 M790.7,305.5 L796.2,304.9 L801.1,305.5 L806.5,306.2 L810.4,304.1 L817.0,305.0 L820.7,304.2 L825.5,303.0 L831.3,301.7 L836.0,300.3 M790.7,305.5 L790.1,310.8 L787.8,316.3 L788.9,323.3 L787.9,327.8 L789.2,333.7 L788.1,338.9 L789.8,345.3 M789.8,345.3 L794.8,343.5 L800.5,342.1 L805.4,340.6 L810.8,338.9 L817.5,337.8 L822.4,337.3 L826.4,334.6 L830.6,332.6 L835.5,331.4 M789.8,345.3 L790.8,351.9 L789.8,356.9 L789.5,362.0 L788.8,369.2 L789.0,374.0 L788.9,378.3 M812.6,338.4 L810.7,344.9 L810.3,350.1 L809.4,357.1 L809.7,362.5 L807.7,365.6 L807.1,370.9 M788.9,378.3 L793.3,376.9 L799.9,374.8 L803.7,371.1 L809.9,369.7 L814.1,367.1 L819.7,366.4 L825.4,363.6 M788.9,378.3 L791.7,385.9 L792.2,391.2 L791.8,393.7 M791.8,393.7 L796.0,395.3 L802.8,396.3 L808.3,398.9 L812.5,401.1 L819.1,402.0 L824.9,404.1 M791.8,393.7 L792.0,398.0 L794.4,403.9 L794.3,409.9 L795.5,413.9 L797.7,418.9 L798.6,425.4 L801.0,429.7 L802.9,435.6 M808.4,398.9 L811.0,404.5 L812.0,409.1 L815.1,414.0 L815.3,418.7 L816.8,425.0 L817.3,431.1 L818.4,437.6 M802.9,435.6 L803.5,441.0 L804.3,446.0 L803.1,450.2 L803.6,456.2 L804.3,462.5 L803.4,468.2 M803.1,451.9 L809.2,453.9 L815.5,455.7 L820.4,456.5 L823.9,456.2 L828.5,456.4 M803.4,468.2 L807.1,469.4 L812.9,472.2 L816.4,471.8 L823.1,473.3 M803.4,468.2 L802.3,476.0 L802.2,482.1 L800.6,488.0 L800.6,492.7 M802.0,480.4 L806.4,483.4 L810.3,484.5 L816.1,485.9 L820.4,486.9 L826.8,485.9 M800.6,492.7 L805.0,492.7 L811.3,493.4 L814.7,494.4 L819.9,494.8 L825.0,496.8 L830.6,498.6 M800.6,492.7 L800.8,497.3 L802.6,504.0 L801.5,508.1 L802.6,513.6 L801.9,519.4 L801.8,524.1 L801.3,529.8 L801.5,534.2 M815.6,495.6 L816.6,499.5 L816.8,504.6 L818.0,510.1 L817.9,515.5 L817.2,520.6 L816.2,527.6 L816.3,533.5 M801.5,534.2 L804.4,540.8 L807.4,545.4 L807.7,551.4 L807.2,557.1 M804.4,545.7 L809.8,545.2 L817.0,546.4 L821.7,546.2 L828.0,548.8 M807.2,557.1 L815.4,561.8 L820.4,563.3 L825.0,564.9 M807.2,557.1 L805.7,561.3 L802.4,567.4 L801.1,571.8 L799.0,576.8 L797.2,583.9 L795.5,587.1 L793.8,593.8 L791.8,597.6 L789.4,603.5 M798.3,580.3 L804.4,582.2 L808.8,582.8 L814.9,582.6 L819.0,582.8 L824.3,585.2 L829.5,584.6 M789.4,603.5 L792.5,607.4 L793.8,611.7 L796.0,616.0 L800.2,619.2 L802.1,626.3 L806.5,631.4 M806.5,631.4 L812.0,631.7 L815.1,631.2 L821.3,630.3 L826.6,628.4 L832.7,628.7 L839.3,626.9 M806.5,631.4 L804.5,635.8 L803.9,642.0 L803.1,646.8 L802.5,651.3 L800.9,656.4 L801.5,661.6 L802.2,667.2 M822.9,629.2 L823.0,635.6 L820.4,640.8 L819.8,647.0 L819.6,651.1 L819.4,656.8 L819.6,660.8 L819.5,664.5 L820.5,669.6 M802.2,667.2 L806.6,668.1 L811.3,669.7 L816.1,671.1 L821.0,672.5 L825.9,672.5 L833.3,672.2 L838.8,672.0 M802.2,667.2 L802.0,672.2 L800.7,677.4 L799.1,683.0 L799.3,688.2 L797.6,692.6 L795.8,698.3 M795.8,698.3 L801.8,700.9 L807.9,702.8 L813.0,703.2 L817.0,705.7 L822.8,705.7 L827.9,707.0 L832.0,707.0 L835.3,708.6 M795.8,698.3 L798.4,704.3 L799.0,711.4 L801.1,717.3 L800.0,722.6 M800.0,722.6 L804.3,725.6 L809.7,726.9 L814.7,730.0 L818.7,733.3 L823.8,737.5 M800.0,722.6 L798.3,727.2 L797.5,731.7 L795.6,737.6 L796.1,742.6 L793.6,749.1 L794.1,753.0 L793.1,759.5 L794.1,765.3 L794.1,769.8 M811.9,730.1 L812.9,734.7 L811.8,741.4 L813.7,746.6 L814.3,753.2 L814.2,757.8 L816.6,763.6 M794.1,769.8 L798.6,768.9 L802.6,766.8 L808.6,763.5 L814.0,762.7 L817.4,761.7 L823.9,759.8 L828.8,759.4 L834.1,757.4 L839.0,757.4 M794.1,769.8 L794.1,774.8 L792.5,778.2 L792.2,784.0 L792.5,791.7 L793.2,797.5 M793.6,783.6 L799.3,783.0 L806.7,783.1 L812.2,784.1 L817.1,783.2 L822.3,784.3 L826.6,783.2 L831.4,783.5 L835.9,782.2 M793.2,797.5 L797.3,798.9 L802.9,799.9 L806.6,799.9 L811.4,802.3 L817.4,802.2 L822.2,803.7 L828.1,806.0 L832.9,806.9 M793.1,812.8 L798.7,814.6 L803.3,813.6 L808.3,816.2 L814.9,816.4 L819.3,817.8 L825.2,821.4 L829.9,822.5 M793.1,828.2 L797.7,828.2 L801.9,830.1 L807.0,830.8 L812.0,832.1 L816.0,834.9 L822.7,837.2 L826.9,838.1 M793.1,828.2 L794.1,834.9 L794.7,840.4 L795.3,846.0 L796.9,850.8 L798.9,856.3 L799.5,860.3 L801.0,865.0 L801.0,868.9 M797.1,848.5 L802.4,848.9 L807.3,850.8 L811.8,850.9 L817.5,852.2 L822.1,850.7 L827.8,850.3 L833.0,850.4 M801.0,868.9 L806.5,868.4 L811.2,867.5 L814.8,867.3 L821.8,866.6 L827.3,866.0 L833.6,863.6 L839.1,862.7 M840.1,-27.5 L844.4,-29.7 L850.0,-29.8 L856.9,-32.7 M840.1,-27.5 L837.5,-24.0 L833.3,-18.1 L831.4,-13.5 L827.5,-8.4 L827.5,-3.5 L825.1,2.7 M825.1,2.7 L830.4,3.6 L834.2,2.4 L839.5,3.7 L844.4,4.0 L848.8,3.9 L855.2,2.9 L859.9,3.5 L865.2,4.6 L870.6,4.4 M825.1,2.7 L823.6,7.3 L824.1,11.6 L823.2,16.6 L822.1,21.7 L822.2,27.0 L822.2,33.8 M822.2,33.8 L826.3,34.8 L831.1,34.7 L835.5,36.4 L841.7,37.7 L848.7,37.1 L854.8,37.4 L860.3,37.9 M822.2,33.8 L824.6,39.4 L826.1,44.0 L828.1,49.0 L828.4,53.7 L829.3,58.3 L831.1,64.1 L831.0,69.0 L832.7,74.2 M832.7,74.2 L838.4,73.8 L844.1,72.0 L848.9,71.1 L853.3,70.7 L859.2,70.3 L864.1,69.3 L868.4,68.0 L872.6,67.1 M832.7,74.2 L832.0,80.0 L830.3,85.1 L827.5,89.5 L826.4,93.9 L825.8,98.6 M825.8,98.6 L830.3,101.5 L834.1,102.6 L838.7,104.6 L842.4,108.5 L849.6,109.9 L854.4,114.0 M825.8,98.6 L827.1,104.5 L826.8,111.8 L826.4,116.0 L826.2,121.4 L824.1,127.8 L823.0,131.6 M823.0,131.6 L827.4,132.8 L833.5,133.6 L839.5,133.8 L843.2,135.5 L848.9,135.3 L855.7,134.8 L860.3,135.7 M823.0,131.6 L822.4,138.0 L822.8,142.9 L823.6,148.2 L826.4,152.0 L827.5,157.1 L828.7,161.4 L831.0,166.1 M831.0,166.1 L837.4,165.9 L842.5,167.0 L849.1,167.7 L854.7,166.6 L859.4,166.4 L864.7,166.9 L868.2,167.4 L873.5,166.6 M831.0,166.1 L832.5,170.6 L834.4,177.2 L834.5,182.1 L837.2,188.3 L837.8,193.6 L837.9,199.8 L838.7,205.3 M838.7,205.3 L844.6,206.9 L850.1,209.1 L855.7,211.8 M838.7,205.3 L837.0,209.0 L836.1,213.7 L834.0,219.4 L832.4,224.1 L830.8,229.1 L827.8,235.6 M827.8,235.6 L833.8,235.0 L838.9,235.7 L845.4,235.0 L850.2,235.1 L854.0,233.8 L858.9,231.4 M827.8,235.6 L827.8,239.8 L826.4,245.5 L826.6,250.9 L826.1,257.0 L824.3,262.4 L823.9,268.0 L821.8,274.7 M843.3,233.5 L843.8,239.6 L843.2,244.5 L842.5,251.2 L843.2,255.6 L843.8,259.8 L844.8,264.7 L847.3,269.6 M821.8,274.7 L826.2,274.6 L830.9,272.7 L835.7,273.4 L840.8,271.7 L847.1,271.9 L851.6,269.1 L856.9,269.5 L861.6,267.0 L867.7,266.0 L872.8,264.6 M821.8,274.7 L825.7,280.0 L827.4,283.8 L830.1,290.2 L833.2,294.7 L836.0,300.3 M847.3,269.6 L847.4,275.0 L848.7,279.5 L850.4,284.5 L851.8,288.8 L852.4,293.9 L854.0,300.0 M836.0,300.3 L841.8,299.6 L845.6,301.2 L852.0,300.3 L856.6,299.4 L862.0,299.4 L866.0,299.9 L872.0,299.7 M835.8,315.9 L839.9,314.5 L845.2,314.2 L850.8,313.8 L855.4,313.4 L860.8,314.0 L866.0,315.0 M835.5,331.4 L843.1,330.5 L849.0,329.2 L854.4,329.6 L860.1,330.3 M835.5,331.4 L834.3,337.8 L833.1,344.8 L832.8,349.3 L831.0,355.0 L828.3,359.3 L825.4,363.6 M847.8,330.9 L846.2,337.4 L845.1,342.4 L845.3,348.0 L844.2,352.1 L843.5,357.5 L844.8,361.8 L845.1,366.9 M825.4,363.6 L829.2,363.5 L835.0,364.7 L838.9,365.9 L844.7,365.3 L848.4,365.9 L853.9,366.9 L858.7,369.7 L864.8,370.2 M825.4,363.6 L826.7,368.1 L827.0,373.9 L827.8,379.0 L827.5,382.8 L827.8,388.3 L827.2,394.4 L825.7,398.3 L824.9,404.1 M824.9,404.1 L830.8,404.9 L835.0,404.5 L840.2,405.2 L845.4,405.4 L851.7,405.5 L857.6,403.3 L862.0,402.1 M824.9,404.1 L826.4,407.5 L828.2,413.5 L830.4,417.8 L831.1,421.9 L832.2,427.9 L832.7,434.4 L833.8,439.6 M843.5,403.1 L845.3,406.9 L847.0,413.2 L847.6,416.6 L848.3,423.4 L848.2,428.5 L846.7,433.8 L846.9,440.7 M833.8,439.6 L838.3,441.5 L841.7,443.5 L847.1,443.8 L853.2,441.9 L860.0,441.8 M833.8,439.6 L832.1,443.0 L830.2,448.6 L829.7,453.3 L828.2,457.6 L826.4,462.5 L825.1,468.3 L823.1,473.3 M846.9,440.7 L846.5,446.1 L847.0,452.7 L847.3,458.2 L848.6,462.5 L848.5,468.0 L847.9,473.2 M823.1,473.3 L828.9,473.8 L835.9,474.3 L840.8,473.5 L847.3,473.9 L851.6,474.1 L858.3,474.6 L862.5,472.9 L867.4,473.0 L872.7,473.1 M826.8,485.9 L832.3,485.9 L838.9,484.4 L845.7,484.4 L850.5,483.0 L857.5,484.0 L861.8,482.3 L867.2,483.4 L871.5,482.7 M830.6,498.6 L834.8,496.8 L839.9,497.1 L844.8,495.6 L849.2,495.1 L853.9,495.5 L859.0,493.1 L864.9,493.7 L870.4,492.4 M830.6,498.6 L831.8,504.7 L832.0,511.4 L830.6,517.1 L830.6,521.2 L831.7,526.7 L831.1,532.7 M830.8,515.6 L836.8,513.9 L844.1,512.8 L848.4,512.3 L855.2,510.5 L860.6,510.4 L864.7,510.2 M831.1,532.7 L834.9,532.4 L840.3,531.8 L845.9,532.3 L853.2,530.4 L859.0,528.1 M831.1,532.7 L829.3,537.6 L828.3,543.1 L827.7,547.8 L827.0,554.7 L825.0,558.9 L825.0,564.9 M845.0,530.4 L844.1,534.6 L843.5,539.7 L842.2,544.1 L841.2,550.4 L842.3,554.1 L842.0,559.6 L840.3,565.7 L841.0,570.6 M825.0,564.9 L827.7,570.4 L829.7,573.4 L830.9,578.5 L832.0,584.2 L832.0,588.5 L832.8,594.4 L834.0,599.5 L833.9,604.3 M833.9,604.3 L839.5,604.8 L847.7,604.1 L852.8,604.9 L858.5,604.9 L862.2,605.4 L867.3,606.7 L872.1,608.3 M833.9,604.3 L834.8,611.3 L835.3,615.9 L837.0,622.7 L839.3,626.9 M836.6,615.6 L842.3,615.4 L847.6,615.7 L852.1,616.2 L857.9,616.8 L862.8,617.6 L868.6,616.8 M839.3,626.9 L843.9,625.3 L849.0,624.4 L855.1,622.8 L859.9,623.7 L865.2,625.3 M839.3,626.9 L839.2,632.4 L838.6,638.5 L839.4,644.1 L839.1,649.1 L839.6,654.1 L838.9,658.7 L838.4,662.6 L839.1,668.3 L838.8,672.0 M839.1,649.4 L843.9,649.3 L850.1,647.2 L854.3,647.4 L859.1,644.2 L863.8,641.2 M838.8,672.0 L845.1,667.8 L848.4,664.4 L854.9,663.0 L857.9,659.4 L862.5,657.1 M838.8,672.0 L838.9,677.9 L838.2,682.8 L838.9,688.1 L836.7,692.9 L837.2,699.6 L836.4,703.3 L835.3,708.6 M837.0,690.3 L840.8,689.6 L845.1,686.0 L850.4,684.8 L856.2,682.4 L862.4,679.7 L867.3,675.7 M835.3,708.6 L839.8,707.0 L845.2,704.0 L848.7,703.2 L854.8,699.8 L859.9,697.6 L865.3,696.2 L872.1,694.3 M835.3,708.6 L833.4,715.3 L831.1,721.1 L829.1,726.2 L827.3,729.8 L824.6,734.5 L823.8,737.5 M853.7,701.5 L850.8,706.9 L848.0,713.1 L846.6,718.0 L844.8,723.6 L843.6,729.9 L842.6,734.0 L841.8,739.2 M823.8,737.5 L830.1,737.4 L834.4,738.3 L839.5,738.2 L845.3,739.0 L849.7,740.2 L854.5,740.6 L859.8,740.9 M831.4,747.5 L835.8,748.1 L839.5,750.4 L846.2,751.7 L851.0,754.2 L858.9,757.2 M839.0,757.4 L837.5,763.8 L836.5,769.3 L834.2,774.2 L834.7,780.9 L832.9,785.7 L832.7,792.1 L831.7,796.6 L833.7,801.3 L832.9,806.9 M835.9,782.2 L843.6,782.0 L849.6,782.6 L854.0,785.6 L859.1,787.4 M832.9,806.9 L838.2,807.0 L844.1,807.2 L849.6,805.3 L855.9,804.0 L860.2,801.3 M832.9,806.9 L830.9,813.1 L831.4,818.4 L828.8,824.1 L828.0,829.9 L827.5,834.5 L826.9,838.1 M846.6,804.1 L846.0,810.9 L846.1,817.7 L845.2,822.9 L843.9,827.8 L843.9,833.6 L841.5,838.5 M826.9,838.1 L832.8,838.9 L837.2,837.9 L842.8,838.7 L850.6,837.9 L856.1,839.0 M826.9,838.1 L830.3,842.9 L831.3,848.4 L834.9,854.1 L837.0,857.7 L839.1,862.7 M833.0,850.4 L836.9,849.4 L841.5,848.1 L845.5,847.8 L853.0,849.2 L859.1,849.9 M839.1,862.7 L845.3,860.8 L852.2,860.1 L857.5,859.3 L862.0,860.9 M856.9,-32.7 L859.6,-28.4 L861.4,-22.7 L862.1,-16.9 L864.6,-12.9 L865.8,-7.1 L868.4,-0.9 L870.6,4.4 M870.6,4.4 L869.3,10.7 L866.9,17.6 L866.0,23.1 L864.2,28.4 L861.2,33.9 L860.3,37.9 M860.3,37.9 L863.2,42.3 L864.5,48.5 L866.0,52.5 L868.4,58.2 L870.5,62.3 L872.6,67.1 M872.6,67.1 L869.9,72.2 L866.7,75.9 L866.0,79.4 L863.7,84.3 L861.6,88.9 L859.4,93.4 L858.3,99.6 L856.3,103.4 L854.8,108.6 L854.4,114.0 M860.3,135.7 L861.1,139.2 L863.7,145.0 L865.7,148.8 L866.3,155.4 L870.5,160.2 L873.5,166.6 M873.5,166.6 L871.7,171.2 L869.3,176.1 L866.6,179.2 L864.1,185.6 L862.9,189.6 L860.7,194.0 L858.1,199.6 L857.3,207.0 L855.7,211.8 M855.7,211.8 L857.6,220.1 L859.0,226.1 L858.9,231.4 M858.9,231.4 L860.7,235.3 L861.8,239.9 L863.8,245.7 L866.5,250.8 L868.9,255.0 L870.9,258.8 L872.8,264.6 M872.8,264.6 L872.4,269.7 L871.1,276.5 L869.9,281.5 L869.9,285.3 L871.7,291.4 L871.3,296.2 L872.0,299.7 M872.0,299.7 L872.1,303.3 L869.8,308.8 L867.8,314.2 L865.1,319.4 L863.5,324.1 L860.1,330.3 M860.1,330.3 L861.5,335.8 L862.7,339.8 L862.3,346.2 L864.0,350.4 L863.5,355.3 L864.3,360.8 L863.9,365.6 L864.8,370.2 M864.8,370.2 L863.5,374.2 L862.4,380.5 L863.2,386.5 L862.8,390.9 L861.1,395.8 L862.0,402.1 M862.0,402.1 L861.3,409.8 L863.1,415.7 L862.3,422.0 L861.4,427.9 L862.3,432.8 L861.3,438.1 L860.0,441.8 M860.0,441.8 L862.6,446.4 L865.6,450.1 L866.6,455.1 L869.0,460.7 L871.4,466.0 L872.7,473.1 M872.7,473.1 L872.2,481.0 L870.1,487.3 L870.4,492.4 M870.4,492.4 L868.0,496.2 L866.8,500.6 L864.3,506.5 L864.1,511.3 L862.4,516.7 L861.0,522.9 L859.0,528.1 M859.0,528.1 L859.3,533.9 L859.0,537.6 L860.3,542.6 L860.5,547.9 L859.6,552.5 L858.8,559.9 L857.8,565.4 L858.6,570.3 L857.1,576.4 M857.1,576.4 L858.9,581.3 L859.1,586.0 L862.9,591.4 L863.9,597.0 L866.0,601.0 L869.8,604.4 L872.1,608.3 M872.1,608.3 L867.8,616.6 L865.3,620.8 L865.2,625.3 M865.2,625.3 L865.4,630.2 L865.0,635.1 L863.7,640.5 L864.8,647.4 L863.8,652.8 L862.5,657.1 M862.5,657.1 L862.6,661.4 L864.5,666.4 L864.2,671.3 L865.7,677.1 L868.3,682.8 L869.9,687.7 L872.1,694.3 M872.1,694.3 L870.1,700.5 L868.0,704.9 L866.6,710.6 L865.6,715.7 L864.7,721.4 L864.0,726.6 L861.2,732.4 L859.9,737.0 L859.8,740.9 M859.8,740.9 L859.5,744.7 L860.4,749.5 L861.0,755.5 L860.0,759.8 L859.9,767.9 L858.0,773.5 M858.0,773.5 L856.7,778.9 L857.8,783.1 L857.7,788.9 L859.6,795.1 L860.2,801.3 M860.2,801.3 L860.3,806.9 L859.0,811.2 L859.2,816.7 L858.9,821.1 L857.8,827.8 L856.4,833.2 L856.1,839.0 M856.1,839.0 L857.0,843.6 L857.8,847.9 L859.8,854.6 L862.0,860.9" fill="none" stroke="#626566" stroke-width="1" shape-rendering="crispEdges"/>
<polygon points="6.0,703.0 8.9,701.6 12.0,700.0 15.9,699.4 18.0,699.0 21.0,699.2 23.3,699.0 27.3,699.6 30.0,699.0 31.0,704.0 28.1,706.1 27.0,709.0 29.3,708.8 33.8,706.3 37.6,707.5 40.0,705.9 42.1,703.8 46.0,704.0 48.0,708.0 46.6,711.0 45.0,716.0 46.8,718.4 50.0,722.0 52.5,722.9 56.9,724.8 60.5,725.0 63.6,727.2 66.6,729.2 69.6,730.3 72.8,732.7 72.2,737.3 70.1,740.2 67.6,743.3 70.1,744.9 73.0,746.8 76.4,750.0 79.9,750.8 83.0,751.8 86.1,753.8 88.0,754.0 90.6,753.6 96.3,754.4 100.1,754.5 102.7,755.0 104.8,754.9 109.3,753.6 110.8,753.3 115.8,753.9 116.9,752.3 119.9,751.5 123.8,752.0 127.7,751.6 130.3,752.6 132.7,753.5 135.8,753.6 139.0,753.5 143.0,754.0 143.3,750.5 145.8,748.7 145.3,745.8 146.0,741.8 148.3,739.3 147.5,737.1 148.7,732.5 150.8,729.6 150.7,726.1 152.0,724.0 152.2,721.2 153.7,718.2 155.4,715.0 157.3,717.1 160.8,719.5 162.2,722.6 164.2,724.0 165.6,725.6 169.2,729.4 169.8,730.3 172.9,734.3 173.8,736.7 176.5,738.0 180.2,740.0 182.0,740.6 183.9,744.3 187.2,745.5 190.6,746.8 193.0,749.0 196.6,749.3 198.6,751.7 201.3,752.1 205.2,754.9 208.0,755.6 211.8,755.5 216.0,755.6 217.6,756.1 222.0,756.0 225.7,757.3 228.8,757.6 233.4,757.6 237.0,759.0 235.0,757.0 232.4,755.9 231.4,753.3 228.4,751.2 224.9,748.0 222.3,747.9 221.0,745.0 218.6,744.4 214.2,742.2 212.4,740.8 209.2,739.8 205.8,737.2 204.4,736.5 201.0,734.0 198.8,733.1 196.2,732.2 192.5,730.4 191.0,729.5 187.2,728.0 184.7,726.0 184.1,722.2 182.0,718.0 183.9,715.1 185.4,713.0 185.9,710.5 189.5,708.4 190.0,705.0 192.3,701.5 194.0,698.7 195.1,696.0 197.0,692.0 198.1,689.6 200.0,686.2 203.0,682.4 205.0,680.0 206.7,677.0 207.8,674.9 208.2,669.9 210.0,668.0 211.1,665.4 212.3,661.3 215.4,659.4 216.0,656.0 216.0,652.0 219.5,652.5 223.0,651.7 227.0,651.0 229.3,650.8 233.7,651.9 236.8,650.7 239.2,650.6 241.2,651.0 245.0,651.0 248.7,652.0 251.5,652.4 253.5,650.9 256.9,651.3 260.0,652.0 262.4,651.8 266.3,652.0 268.6,652.7 273.1,651.9 275.0,652.0 277.1,650.2 281.8,649.4 284.5,649.8 286.6,649.4 290.0,648.0 292.4,648.2 296.9,649.0 301.2,650.4 304.0,652.0 303.7,647.8 305.3,645.5 305.8,642.8 306.7,640.3 306.9,635.5 307.0,633.0 308.9,629.0 309.9,626.3 313.0,623.0 316.5,623.8 319.0,626.0 319.1,629.1 320.6,632.8 321.1,636.8 321.2,640.2 322.0,643.0 323.9,645.1 325.0,649.5 325.0,652.0 326.9,654.1 330.8,657.4 333.0,658.9 336.0,661.0 340.3,661.2 344.0,659.9 346.8,658.9 350.0,659.0 353.7,659.0 356.8,658.0 359.1,657.6 363.0,656.0 367.1,656.3 369.1,655.1 371.6,654.7 375.8,652.7 377.1,652.1 381.1,652.1 384.0,649.7 387.7,649.0 390.7,648.5 393.0,648.5 395.6,648.9 398.2,647.3 402.0,648.3 405.7,648.1 409.0,647.4 412.0,646.3 414.0,647.0 416.4,647.2 419.5,647.8 423.3,647.5 426.8,647.7 428.6,647.5 432.8,648.7 435.0,648.0 437.4,649.8 442.0,650.1 444.2,650.3 447.1,652.0 450.2,652.0 454.0,654.0 456.0,655.0 458.5,657.2 461.6,658.1 464.7,658.7 467.1,661.1 470.8,663.7 472.0,664.3 474.4,665.8 478.0,667.5 481.4,670.5 483.4,671.3 485.6,674.0 489.9,675.0 492.4,676.9 494.5,680.0 496.3,681.6 499.9,684.0 501.7,686.9 503.6,689.3 507.0,691.0 507.3,694.2 508.6,696.7 510.3,700.4 511.1,703.5 512.5,706.1 513.5,710.0 516.1,711.0 520.0,711.5 523.8,710.9 527.8,710.5 531.3,709.0 534.0,709.0 537.3,708.5 540.5,706.2 542.0,706.3 544.6,705.3 548.0,703.0 551.7,700.8 553.0,700.7 555.9,697.9 559.9,697.2 562.0,696.0 565.5,694.0 567.5,694.1 569.4,691.8 573.7,692.2 577.2,689.3 579.0,689.0 580.5,686.1 582.0,682.0 584.8,680.4 586.8,677.1 589.4,675.0 593.0,674.0 596.1,673.5 599.0,673.0 602.7,672.5 605.3,672.8 610.2,674.8 613.0,674.0 616.7,675.4 617.5,679.5 621.2,681.3 624.0,683.0 626.2,684.6 629.2,686.2 632.0,686.9 634.8,690.4 636.2,691.2 639.5,693.0 641.5,696.1 641.8,698.9 644.0,703.0 646.4,704.5 649.7,708.7 651.7,711.4 653.9,712.9 656.0,715.6 657.1,719.4 658.8,723.9 658.6,727.0 660.5,729.9 663.9,731.6 666.5,732.8 669.1,735.8 671.0,737.6 673.0,739.0 675.1,741.6 676.5,743.7 677.2,747.4 677.9,750.0 680.8,753.4 682.0,756.0 684.6,757.8 688.7,757.3 691.9,758.7 694.7,759.1 698.9,760.5 701.0,761.0 702.7,765.1 704.6,767.0 705.0,772.0 706.0,775.0 707.8,777.8 709.7,780.3 713.0,784.0 711.7,787.1 711.0,792.0 711.0,806.0 6.0,806.0" fill="#003e62" stroke="#000" stroke-width="1.6"/>
<polygon points="14.0,716.0 22.0,714.0 30.0,716.0 36.0,718.0 39.0,722.0 35.0,727.0 30.0,729.0 22.0,726.0 16.0,721.0" fill="#5c504c" stroke="#000" stroke-width="1"/>
<polygon points="176.6,685.2 180.7,679.8 184.0,678.5 188.0,676.2 191.5,674.4 195.4,672.1 198.8,669.9 202.0,666.8 205.0,665.0 207.8,661.2 209.8,657.3 213.0,652.7 217.1,653.8 222.0,655.0 222.8,658.8 224.5,662.1 226.1,666.4 226.7,670.3 222.8,672.3 218.7,673.8 215.0,676.0 210.2,676.6 205.0,677.0 203.7,682.5 200.1,686.9 197.0,690.7 192.0,692.1 187.4,694.7 183.7,691.5 180.7,689.3" fill="#003e62" stroke="#000" stroke-width="0.8"/>
<polygon points="345.0,655.0 348.1,653.3 352.0,651.0 354.9,649.0 358.0,646.0 363.0,647.0 365.6,644.1 368.3,642.9 370.0,640.0 371.5,636.5 374.0,632.0 376.4,634.5 379.0,637.0 381.9,634.7 383.7,633.5 386.0,631.0 387.3,634.0 388.6,637.4 389.0,640.0 391.8,641.2 394.5,643.3 397.0,645.0 393.1,645.5 390.0,646.5 386.4,648.2 383.0,649.0 379.9,649.5 377.1,650.6 374.3,651.5 371.6,652.9 368.3,652.9 365.0,654.0 361.3,655.2 358.8,655.6 355.1,656.0 352.0,657.0" fill="#003e62" stroke="#000" stroke-width="0.8"/>
<polygon points="416.0,645.0 419.0,643.8 421.6,642.7 424.6,640.9 427.0,640.0 430.7,641.8 435.0,642.5 438.7,642.1 440.9,640.2 444.5,639.8 448.0,639.0 450.1,640.9 452.0,643.2 454.0,646.0 450.0,646.5 447.1,646.7 443.3,646.7 440.0,647.0 436.5,646.9 434.0,647.6 430.0,646.8 427.7,647.5 424.5,647.1 421.0,647.5" fill="#003e62" stroke="#000" stroke-width="0.8"/>
<polygon points="473.0,657.0 475.9,656.0 479.4,655.5 482.0,655.0 484.2,659.1 486.0,662.0 488.5,659.7 491.6,657.8 494.0,655.0 499.0,653.0 497.9,656.8 497.0,661.0 493.5,664.5 491.0,667.0 493.2,669.2 496.4,672.3 499.0,675.0 501.9,676.4 504.7,677.8 507.0,680.0 503.0,682.0 499.7,680.2 496.5,677.8 494.3,676.2 491.0,674.0 488.5,671.1 486.3,669.3 484.1,666.0 482.0,664.0" fill="#003e62" stroke="#000" stroke-width="0.8"/>
<polygon points="534.0,708.0 537.0,706.6 540.0,705.5 542.7,703.4 545.0,702.0 548.4,701.0 550.8,700.3 554.5,700.1 556.7,698.6 560.0,698.0 562.8,697.5 565.9,697.2 569.0,697.0 565.6,698.7 563.4,700.4 560.0,702.0 557.4,703.3 553.6,704.8 551.5,705.5 548.0,707.0" fill="#003e62" stroke="#000" stroke-width="0.8"/>
<polygon points="806.0,560.0 803.0,566.0 800.0,580.0 799.0,600.0 797.0,620.0 798.0,640.0 800.0,658.0 806.0,662.0" fill="#003e62" stroke="none"/>
<polygon points="299.5,59.2 304.2,56.5 308.3,55.2 310.9,56.6 314.4,57.9 315.3,61.1 316.7,64.4 317.1,67.4 320.8,69.3 323.9,72.1 321.9,74.7 319.8,76.8 319.4,79.4 319.8,82.9 321.4,86.5 322.1,89.4 323.9,92.4 322.5,96.5 320.3,93.9 318.9,90.5 316.6,88.1 315.0,85.0 314.4,81.2 313.7,76.8 311.9,72.6 310.3,68.7 310.3,65.7 309.4,62.4 309.0,59.2 305.6,60.6 302.9,63.6" fill="#2a4868" stroke="#24405e" stroke-width="0.8"/>
<polygon points="367.0,258.5 372.0,258.0 374.9,259.7 377.7,260.9 380.0,262.5 383.0,264.3 385.7,266.1 388.0,267.5 391.0,270.1 393.8,272.0 396.0,274.0 395.0,277.0 392.4,275.0 390.0,272.6 387.0,270.5 383.9,268.5 381.2,267.7 378.0,265.5 373.9,263.2 370.0,261.5" fill="#2a4868" stroke="#24405e" stroke-width="0.8"/>
<polygon points="438.0,376.0 439.2,372.9 441.0,370.0 443.3,368.5 446.0,366.0 450.0,363.0 451.0,368.0 448.6,370.3 447.0,373.0 444.1,375.6 442.0,378.0" fill="#2a4868" stroke="#24405e" stroke-width="0.8"/>
<polygon points="424.0,414.0 427.0,417.0 427.8,420.2 428.0,424.0 429.6,427.0 432.0,430.0 431.0,434.0 427.0,431.0 426.1,427.9 425.0,424.0" fill="#2a4868" stroke="#24405e" stroke-width="0.8"/>
<polygon points="527.0,502.0 528.0,505.6 530.0,510.0 530.4,513.1 531.1,516.9 532.0,520.0 533.6,523.7 535.0,528.0 538.0,532.0 536.7,534.8 536.0,538.0 533.2,536.3 531.0,534.0 529.8,531.0 529.3,528.0 528.0,525.0 527.3,522.1 527.4,518.3 526.5,515.7 526.0,512.0" fill="#2a4868" stroke="#24405e" stroke-width="0.8"/>
<polygon points="540.0,603.0 542.5,604.7 545.0,607.0 547.0,610.9 550.0,614.0 553.3,611.9 556.0,610.0 559.0,608.0 562.0,606.0 562.3,609.5 563.0,612.0 560.5,613.7 557.2,616.0 555.0,618.0 551.5,618.0 548.5,617.4 545.0,617.0 542.7,613.2 541.0,610.0" fill="#2a4868" stroke="#24405e" stroke-width="0.8"/>
<polygon points="604.0,310.0 605.8,307.4 608.4,305.3 610.0,303.0 612.1,300.0 614.0,296.0 616.8,293.0 620.0,290.0 622.7,288.8 626.0,287.0 625.2,290.3 625.7,293.3 625.0,296.0 622.2,298.1 620.5,300.3 618.0,303.0 615.3,305.3 613.1,307.8 610.0,310.0 606.0,313.0" fill="#2a4868" stroke="#24405e" stroke-width="0.8"/>
<polygon points="41.0,680.0 45.0,679.0 47.9,681.3 50.0,684.0 51.3,686.9 52.0,690.0 47.0,690.0 45.4,687.1 43.0,685.0" fill="#2a4868" stroke="#24405e" stroke-width="0.8"/>
<polygon points="56.0,685.0 60.0,686.0 62.3,689.7 64.0,694.0 66.7,696.0 69.0,698.3 72.0,700.0 75.8,701.3 80.0,703.0 81.6,705.3 84.0,708.0 81.0,708.2 77.9,708.2 75.0,708.0 71.6,706.2 69.0,705.1 66.0,703.0 64.3,700.8 61.5,698.2 60.0,696.0 58.7,692.7 57.0,690.0" fill="#2a4868" stroke="#24405e" stroke-width="0.8"/>
<polygon points="122.0,660.0 124.1,656.5 126.0,653.0 129.0,653.0 133.0,652.0 134.3,654.7 135.0,658.0 133.1,661.8 131.0,666.0 127.4,666.5 124.0,667.0" fill="#2a4868" stroke="#24405e" stroke-width="0.8"/>
<polygon points="142.0,710.0 143.1,706.5 144.6,703.5 146.0,700.0 148.8,697.7 152.0,696.0 153.7,699.3 155.0,703.0 153.8,706.1 151.9,708.8 150.0,712.0 147.3,712.6 144.0,714.0" fill="#2a4868" stroke="#24405e" stroke-width="0.8"/>
<polygon points="785.0,730.0 790.0,728.0 790.9,730.6 792.7,734.2 793.4,736.9 795.0,740.0 795.6,743.1 795.1,745.7 795.4,748.6 796.0,752.0 792.9,752.6 790.0,754.0 789.4,750.9 788.0,748.1 787.3,745.3 786.0,742.0" fill="#2a4868" stroke="#24405e" stroke-width="0.8"/>
<polyline points="782.0,658.0 783.1,662.3 784.5,666.4 786.0,672.0 785.3,676.9 786.0,681.6 784.8,685.7 784.0,690.0 784.5,693.4 786.7,697.8 787.7,701.0 790.0,705.0 789.0,710.6 788.7,715.2 787.0,720.0 787.3,725.5 789.8,730.1 790.0,735.0" fill="none" stroke="#2a4868" stroke-width="2.5"/>
<polyline points="249.8,678.5 251.1,682.6 251.1,685.5 251.8,688.0 252.1,691.4 253.8,693.4 251.9,695.9 252.6,699.6 250.5,703.5 249.2,706.2 248.4,709.6 245.6,712.3 243.9,713.9 241.6,717.5 239.6,719.4 237.6,720.2 234.9,723.2 231.9,725.8 228.8,726.3 227.5,730.1 224.0,731.3" fill="none" stroke="#000" stroke-width="1.2" stroke-dasharray="6,3"/>
<path d="M211.6,693.6 L209.4,691.8 M202.3,711.4 L200.3,713.7 L198.8,714.5 M193.9,725.5 L195.1,726.2 M223.0,673.1 L224.2,673.4 M193.4,699.1 L191.9,697.2 M195.6,702.4 L194.0,700.8 L194.8,700.5 L196.1,701.9 M203.8,724.1 L202.5,722.3 L199.9,721.6 L202.0,723.5 M206.5,706.0 L206.4,707.5 M198.8,725.5 L197.1,725.3 M223.1,689.5 L221.2,688.9 L219.2,690.5 M219.8,706.2 L218.6,704.3 L216.6,702.9 M217.4,680.0 L216.0,680.9 L213.5,681.5 L215.3,680.9 M210.2,693.3 L211.5,695.9 L213.0,695.4 L210.9,695.3 M218.1,737.3 L216.9,739.7 L218.9,738.6 M184.6,722.3 L184.9,719.9 M203.2,692.3 L204.7,693.3 M222.9,696.8 L225.1,698.3 L222.4,696.0 L222.5,698.6 M207.4,683.0 L207.2,685.5 L208.7,682.7 M225.3,686.3 L223.5,685.8 L221.8,685.1 M219.7,683.4 L216.9,681.6 M211.6,723.0 L211.4,723.6 M201.5,711.5 L199.3,708.6 L198.5,706.0 M213.9,728.0 L213.9,729.8 L212.2,729.8 M206.2,715.7 L206.1,712.9 M200.7,700.5 L202.2,700.9 L203.0,703.2 L202.5,700.7 M192.1,727.2 L191.3,727.7 L192.2,728.7 M215.1,702.6 L212.7,704.8 L213.1,701.9 M202.0,685.4 L203.2,685.1 L203.2,683.3 M208.8,691.3 L210.9,688.4 L211.2,688.0 L208.8,690.3 M209.6,706.7 L211.0,705.1 M217.2,733.1 L217.6,736.1 M211.3,694.1 L209.2,694.0 L208.0,695.9 M221.6,692.6 L220.2,695.0 L219.3,694.6 L219.8,692.8 M223.4,682.4 L221.1,679.6 M208.1,702.6 L209.8,703.5 M219.8,743.2 L222.3,741.2 L222.6,739.2 L225.2,741.4 M187.9,719.7 L190.2,720.0 L188.8,717.1 L191.4,717.5 M210.4,698.0 L211.0,695.4 L209.4,694.7 M213.4,711.6 L211.2,709.2 L211.2,709.4 M197.7,717.6 L199.8,719.1 L200.9,721.6 M203.2,687.8 L202.9,687.4 L205.5,686.3 M203.9,678.5 L201.7,677.7 L202.1,679.8 L203.2,677.1 M189.6,710.0 L186.7,707.1 L184.3,704.5 L184.3,703.9 M215.1,682.9 L215.0,684.3 L213.5,687.3 L216.0,689.2 M215.1,732.3 L213.3,733.9 L212.5,733.6 M193.1,706.0 L194.0,707.1 M215.2,714.5 L215.0,714.8 L216.6,716.1 M202.0,688.8 L203.8,688.1 L203.3,687.1 M220.5,681.0 L219.1,680.9 L220.5,680.9 M206.7,690.2 L208.5,689.3 L208.9,692.0 L211.1,691.4 M215.0,739.4 L212.8,739.1 M220.0,703.3 L222.6,706.1 L220.0,706.8 M205.2,703.7 L207.8,702.3 L205.7,701.8 L204.2,704.6 M209.0,689.5 L209.1,691.5 M211.8,719.4 L213.8,719.8 L211.4,718.4 M217.6,669.8 L215.6,671.1 L215.8,671.1 L213.2,669.7 M201.2,706.9 L201.3,704.2 M194.1,701.3 L196.2,699.4 L193.8,700.2 L196.6,699.9 M201.4,690.1 L201.7,689.0 L200.8,691.7 L200.4,692.5 M210.5,682.2 L212.3,681.2 L209.9,682.6 M208.6,672.4 L207.8,671.5 L205.2,669.2 M199.1,711.0 L197.1,709.9 M199.6,708.5 L197.4,711.2 M212.4,731.2 L212.0,730.9 M208.8,731.6 L205.9,730.4 M205.7,697.2 L208.2,696.5 L210.5,699.3 M190.2,720.9 L190.4,718.5 L190.9,716.8 L192.8,717.7 M206.7,697.2 L204.4,695.1 L205.0,696.2 L203.8,697.3 M218.4,671.1 L220.7,669.6 L220.1,667.7 L218.2,665.0 M196.5,732.5 L198.7,731.1 M207.1,738.5 L207.6,739.8 L204.9,737.4 M209.8,687.7 L211.2,686.4 L213.7,685.0 M222.9,695.3 L224.2,694.9 L223.1,695.5 M206.4,727.7 L203.7,725.3 L203.1,725.5 L201.1,727.6 M210.3,710.9 L212.4,708.4 M217.6,697.9 L216.9,696.4 L215.4,696.2 M207.1,678.4 L209.8,680.4 L212.2,678.9 M202.6,734.3 L202.0,734.0 M205.8,675.8 L204.9,672.9 L204.1,673.4 M198.2,709.8 L200.8,712.2 L200.1,714.1 M209.4,718.3 L208.2,720.7 M209.6,730.5 L211.9,732.7 L210.7,733.3 M211.1,727.1 L208.2,726.7 L207.2,725.6 M227.0,676.8 L225.5,676.4 L224.5,676.0 M211.3,739.0 L210.6,738.3 L212.7,739.6 M193.4,714.3 L190.7,712.9 L191.8,710.7 L191.6,713.1 M198.3,708.2 L196.3,708.3 L197.0,706.0 M213.3,688.8 L213.0,689.0 L215.0,688.1 L216.6,690.4 M204.3,684.3 L204.4,686.0 L201.7,686.6 M210.6,737.4 L209.2,736.8 M228.8,748.0 L227.5,750.3 L225.9,751.4 M210.5,704.6 L208.7,701.7 M225.5,745.5 L224.3,746.7 L222.8,748.1 M210.6,715.9 L212.1,714.0 L214.2,712.2 L212.0,712.2 M217.3,737.5 L217.6,740.3 L218.8,737.6 L218.5,734.9 M197.3,719.8 L197.9,719.7 L196.1,719.1 M210.8,688.4 L210.8,690.0 M208.1,701.6 L208.6,701.6 M184.2,716.8 L184.0,717.1 M199.3,729.1 L202.1,730.1 L200.5,727.7 M222.5,702.9 L221.5,705.2 L219.8,703.4 M205.6,709.7 L207.8,710.4 L206.6,711.8 M216.9,712.3 L218.5,712.7 M225.6,682.7 L226.6,683.4 L224.4,685.4 M202.8,717.5 L200.6,715.3 L198.0,712.7 M189.6,725.1 L189.8,727.5 M210.5,688.5 L211.2,687.5 L210.8,686.0 M198.2,693.1 L198.1,695.0 M192.5,719.9 L193.6,719.1 M214.3,725.7 L216.4,727.5 L214.7,730.2 L215.1,728.7 M227.3,681.0 L226.2,680.5 L224.2,677.5 L223.7,677.8 M209.4,708.5 L211.6,707.8 M218.2,685.3 L219.4,688.2 L217.5,687.2 L219.6,686.9 M217.6,677.1 L215.5,678.5 L216.8,677.0 L219.1,678.0 M188.1,713.8 L188.4,711.7 L188.1,709.0 L187.9,707.9 M217.1,683.7 L219.9,683.8 L218.4,682.8 M204.1,732.8 L206.0,730.2 M190.9,716.1 L189.5,713.2 M216.9,698.9 L218.3,701.7 L218.8,704.2 M209.2,734.4 L206.7,732.4 M198.2,725.9 L201.0,725.9 M186.1,715.5 L184.2,714.1 M208.0,722.2 L210.0,719.8 M222.7,680.0 L222.2,677.7 L221.3,680.2 M213.9,689.5 L215.0,689.1 M213.0,734.6 L211.4,736.0 L209.8,736.0 L212.6,735.4 M215.3,671.0 L216.9,671.9 M219.1,693.2 L217.9,693.7 L216.1,696.1 M220.4,686.9 L220.5,685.9 M188.5,729.9 L190.6,729.2 L190.7,728.7 L192.5,728.2 M211.6,727.2 L212.5,727.5 L210.0,725.2 L211.4,722.6 M214.6,673.3 L214.9,673.9 L216.7,671.2 L217.4,673.7 M223.1,690.2 L224.7,691.2 M209.1,679.5 L210.7,677.4 L208.4,674.8 M191.3,728.6 L192.0,725.7 L193.6,724.5 L195.0,726.7 M209.7,738.4 L207.6,740.1 M196.4,699.3 L199.1,699.3 M196.1,691.5 L194.3,691.1 L195.6,693.4 M207.0,702.2 L209.7,699.5 M194.1,699.6 L194.9,699.9 L192.5,701.7 L189.6,702.2 M222.0,690.7 L223.8,690.1 L224.9,689.8 M225.1,678.8 L223.6,680.3 M204.3,697.8 L206.3,695.8 M203.6,713.9 L203.0,712.0 M186.9,723.3 L184.1,724.7 L183.3,723.1 M206.0,678.7 L207.3,679.4 M208.0,727.8 L207.5,728.9 M217.9,685.2 L219.3,686.1 L220.1,685.5 M215.5,705.7 L213.4,704.6 L215.4,703.7 M213.2,699.0 L215.6,698.5 M186.6,715.7 L183.6,716.4 L183.7,717.0 M196.5,700.6 L194.3,699.8 L191.8,701.7 M191.2,704.3 L189.4,704.1 M208.3,726.4 L208.2,724.8 L205.5,721.9 M227.7,683.4 L226.8,682.1 M194.2,724.7 L196.1,723.6 L193.7,725.0 L195.5,726.4 M186.8,726.6 L185.2,724.0 M218.0,673.4 L220.4,670.7 L222.3,669.8 M203.6,697.2 L203.2,697.9 M199.0,694.8 L198.9,695.7 L198.1,693.2 M216.2,704.1 L214.1,702.2 L212.7,704.4 L210.6,706.3 M208.8,693.5 L206.9,690.6 L208.9,693.0 L208.1,694.5 M209.8,719.0 L211.2,719.3 L213.9,721.7 M204.7,702.6 L206.9,702.8 L209.4,704.7 M197.4,688.1 L198.6,685.3 L196.2,684.3 M223.8,694.1 L223.8,691.9 L223.2,690.1 L225.4,688.6 M217.5,694.3 L216.3,691.8 L219.0,692.9 M222.9,678.7 L221.6,676.7 L221.9,676.9 L219.6,675.7 M198.9,729.3 L199.7,730.7 L197.4,728.7 L197.7,728.9 M210.6,706.6 L210.4,706.3 L207.7,705.8 L209.9,704.6 M197.9,709.5 L196.4,709.7 L199.2,709.5 L196.9,707.9 M188.5,707.4 L187.8,707.3 L188.3,708.5 L188.9,708.0 M199.6,716.9 L197.9,715.5 M209.5,678.5 L211.4,677.0 L211.8,674.3 M221.1,695.2 L220.8,694.4 L219.0,695.4 L220.8,697.0 M212.2,728.5 L209.9,726.6 L210.7,724.9 L211.4,722.5 M200.4,691.7 L202.0,690.6 L203.6,690.5 M212.9,695.2 L214.7,694.9 L213.2,692.1 M182.2,718.8 L179.3,716.8 L181.4,718.8 M217.4,677.1 L219.6,674.3 L219.7,672.8 M211.5,679.0 L209.2,677.3 L209.9,675.8 M194.8,701.1 L194.9,703.9 L194.9,706.0 L194.3,704.3 M212.8,729.5 L211.2,729.5 M221.5,692.8 L220.5,692.8 M198.6,705.1 L197.1,703.6 M207.6,681.7 L205.6,681.9 L205.7,681.5 M217.9,687.4 L220.3,688.7 M226.9,746.1 L228.0,744.2 L227.2,745.1 L225.1,746.3 M211.0,717.0 L210.9,717.6 L208.5,715.6 L211.2,716.4 M210.9,701.1 L210.9,698.8 M204.4,727.0 L206.5,725.9 M201.7,698.0 L204.0,699.7 L202.8,702.2 L203.3,699.4 M205.3,675.0 L206.3,676.3 M198.3,689.8 L200.6,689.6 L201.5,689.5 L199.6,692.2 M206.6,687.6 L204.7,686.6 L206.1,688.7 L204.8,689.1 M203.1,680.6 L204.4,680.9 L205.8,680.7 M198.9,715.4 L201.6,713.6 L201.0,716.0 M191.3,717.9 L190.1,720.3 L189.1,722.1 M205.9,716.0 L205.9,713.3 L206.1,711.3 L205.2,710.7 M217.3,671.3 L217.8,673.1 L220.5,670.3 M210.2,684.2 L207.7,685.9 M210.9,679.1 L208.1,681.0 L209.8,682.5 M216.2,741.3 L215.4,741.9 L215.1,739.0 L213.0,739.4 M208.5,731.2 L211.5,728.6 L213.4,727.2 M197.1,714.5 L197.0,712.8 L197.2,711.4 L198.7,709.5 M187.0,726.2 L187.3,726.9 L188.3,725.2 L190.9,722.3 M223.0,676.4 L220.6,678.9 L218.0,680.0 M194.1,727.9 L196.9,729.8 L194.3,729.7 M197.8,687.1 L200.2,689.2 L199.2,689.2 M205.8,688.7 L203.2,689.1 L203.8,687.0 M217.2,702.9 L215.1,700.2 L215.4,699.8 M194.2,699.3 L193.3,700.0 L192.6,700.2 L192.8,702.6 M198.0,711.4 L195.9,713.6 L195.8,715.2 L193.3,715.6 M216.3,710.9 L218.6,713.5 L220.2,711.6 M192.4,699.9 L191.1,698.4 L191.7,696.5 M198.8,711.0 L201.2,708.6 L200.8,710.1 M193.7,711.2 L196.5,708.5 L196.7,707.8 L193.8,705.6 M207.2,674.5 L208.6,677.4 L206.7,678.6 M209.7,727.3 L212.0,724.4 L213.4,722.1 M217.3,699.6 L218.1,701.2 M190.5,703.6 L188.7,703.6 L190.5,703.8 L193.3,704.2 M208.2,721.1 L210.6,723.3 M211.6,714.3 L210.9,711.9 L213.7,709.1 M209.1,678.0 L209.8,677.8 L207.1,677.5 L206.7,675.5 M200.9,696.5 L202.7,698.4 M199.2,730.9 L202.1,730.4 L203.0,730.0 M194.2,696.9 L194.2,695.8 M201.5,726.8 L199.6,726.3 L200.2,723.7 M210.3,703.5 L208.2,700.6 L207.0,699.9 M219.2,671.2 L221.6,668.5 L224.1,667.7 M203.4,688.5 L206.2,685.6 L204.4,688.5 L204.8,688.9 M210.5,739.4 L208.2,739.6 L210.8,739.7 M206.2,696.2 L205.7,695.2 L203.2,696.6 L205.8,698.8 M218.0,700.9 L220.9,702.7 M219.5,695.8 L219.9,695.7 L217.8,694.8 M220.4,699.6 L222.7,702.2 M218.7,681.9 L215.9,681.3 L217.3,682.9 L218.4,684.4 M200.9,689.6 L203.7,689.4 L202.2,691.6 M215.5,734.1 L217.3,734.5 L220.2,733.9 L219.8,734.2 M225.4,695.3 L224.0,696.2 L226.7,694.3 M209.2,706.9 L211.3,706.4 L213.7,704.5 M210.6,699.0 L212.7,696.3 M226.8,677.9 L224.1,675.5 L224.0,675.1 L222.6,676.1 M211.3,736.5 L208.9,736.4 L206.5,738.5 M182.7,717.0 L184.8,715.6 M212.1,670.0 L214.1,668.2 L214.8,669.1 M220.6,688.6 L223.1,687.8 M222.4,687.0 L224.6,686.7 M192.4,725.9 L190.3,726.2 M199.6,695.2 L201.1,697.1 M216.4,734.8 L217.9,737.4 L215.3,738.1 L217.8,740.1 M201.4,707.9 L203.9,706.1 L204.1,704.6 L201.8,706.2 M199.4,701.4 L197.2,698.7 M204.4,709.9 L207.1,708.4 L204.5,710.6 M215.9,677.8 L214.3,678.6 L214.4,680.2 M219.1,681.9 L221.3,684.0 L219.6,686.3 L220.9,685.8 M186.2,724.9 L188.0,727.9 L186.4,725.0 L186.5,727.8 M213.0,686.9 L213.9,686.6 L216.6,685.8 M193.0,715.3 L194.7,716.1 L194.7,716.5 L193.6,718.6 M200.7,714.3 L199.0,712.1 L199.9,711.0 L202.8,708.7 M221.5,675.3 L221.1,675.1 L222.8,672.7 L225.7,674.2 M210.8,673.6 L211.4,672.6 M219.8,687.5 L216.9,684.9 M215.4,705.3 L217.7,703.7 M202.1,713.7 L205.0,712.4 L203.9,713.2 L203.4,711.5 M213.1,684.7 L215.4,687.5 L217.6,686.3 M215.7,736.7 L215.4,735.6 L212.8,734.2 L212.2,735.4 M201.8,721.5 L204.1,724.4 L205.8,724.6 M221.6,703.8 L223.7,706.5 L226.0,703.9 M225.1,745.4 L225.6,745.1 L224.7,744.5 L225.1,746.3 M211.8,717.0 L209.3,718.1 L210.9,719.0 L209.6,717.8 M195.4,712.9 L196.1,713.3 L196.8,716.1 L198.8,713.3 M224.7,689.4 L224.9,692.2 L226.0,694.0 M201.4,682.6 L200.5,683.1 L199.0,686.1 L201.1,684.3 M209.2,739.0 L210.5,736.2 M219.7,675.3 L217.0,674.8 L219.5,672.9 M227.0,678.3 L225.1,680.9 M212.8,715.6 L210.1,717.8 L212.9,716.0 L211.0,718.9 M221.9,672.5 L223.7,673.6 L223.9,674.4 L224.1,672.0 M209.8,674.8 L207.0,674.6 M212.5,676.6 L210.6,674.2 L211.8,676.9 L212.7,678.8 M187.4,719.6 L185.2,720.7 L187.8,721.4 M199.2,721.4 L197.5,720.6 M187.2,709.3 L186.2,706.6 L188.6,706.9 L191.0,705.3 M220.0,707.2 L217.0,706.2 M208.8,685.0 L209.5,682.2 L210.6,680.1 L213.4,679.7 M202.7,676.9 L200.3,676.1 L199.3,677.2 M199.2,697.3 L196.8,697.7 L199.2,699.2 L199.8,699.3 M221.3,688.7 L220.3,690.5 M210.6,711.5 L208.1,713.3 L207.2,710.8 M209.9,708.4 L211.9,710.5 L210.0,707.7 M203.8,727.8 L204.1,725.1 L204.4,728.1 M217.7,680.0 L218.4,681.4 M191.1,708.8 L190.2,709.5 L190.5,712.1 L191.3,713.6 M207.8,726.1 L207.4,728.3 M186.8,726.2 L189.0,726.1 L187.8,726.4 M204.2,688.6 L203.9,686.0 M208.1,688.5 L207.1,690.6 L209.5,690.3 M220.5,685.8 L222.9,684.8 M217.1,733.4 L216.5,734.1 L215.2,736.6 L214.2,735.5 M173.5,747.3 L176.3,748.5 M156.0,717.6 L154.9,716.7 L157.4,717.9 M165.6,746.7 L164.6,749.3 L165.4,748.7 M177.7,716.3 L179.7,717.4 L176.8,715.2 M178.9,722.3 L181.2,724.5 M176.8,750.8 L178.5,753.6 L177.6,751.5 L179.2,752.0 M149.8,757.8 L150.4,755.3 L147.4,757.3 M148.5,741.2 L147.5,743.6 L144.8,741.3 L143.4,741.7 M150.7,731.4 L152.7,729.7 L152.5,727.3 M174.2,751.3 L174.0,748.3 L171.1,750.2 M171.4,721.6 L170.9,723.9 M157.0,754.9 L154.3,756.1 L153.7,756.0 M164.5,727.3 L167.4,729.3 M161.7,727.4 L160.6,730.4 M172.2,726.3 L174.3,727.6 L177.0,726.9 L175.8,728.5 M167.0,743.3 L165.0,740.9 M146.5,753.9 L143.7,751.9 L145.2,751.6 M152.9,746.0 L152.0,745.7 M150.2,751.8 L153.2,753.3 M148.5,757.0 L147.4,754.6 L147.4,757.6 M159.4,730.2 L160.3,728.0 L159.0,729.6 M161.4,720.2 L161.9,719.0 M150.9,737.0 L152.8,735.8 M158.6,725.3 L157.3,727.4 L158.7,726.6 L156.2,726.8 M160.9,734.8 L160.7,736.3 L161.0,735.2 M178.5,743.5 L178.5,746.0 L178.0,747.8 L180.2,746.0 M166.6,754.2 L169.5,752.8 L167.4,753.5 M172.6,738.2 L172.7,738.6 L175.4,741.3 L173.5,741.3 M157.7,737.7 L159.3,736.0 L158.8,738.6 M160.7,736.9 L162.3,738.0 L159.4,735.8 M150.5,731.0 L152.1,730.0 L151.1,731.3 M154.0,745.9 L155.9,746.7 L153.5,747.5 M156.0,733.3 L158.2,730.8 L158.9,727.8 L156.2,730.2 M154.6,733.7 L155.9,734.5 L158.1,731.8 M175.1,732.3 L177.3,731.7 L178.3,733.2 M161.6,757.6 L161.5,755.5 L164.0,758.1 L165.9,759.2 M154.4,740.3 L151.6,741.0 M147.0,739.4 L146.6,739.8 L146.7,738.4 M150.7,722.2 L151.9,720.3 M165.5,746.5 L164.4,746.6 L162.3,745.8 M153.0,742.2 L150.4,739.8 L152.8,739.4 M148.6,746.0 L151.4,745.3 L150.8,743.3 L150.8,742.6 M161.9,735.8 L160.6,738.7 L162.8,738.2 L165.3,737.0 M151.3,730.6 L148.7,730.2 L149.7,732.6 L150.2,732.5 M150.6,718.5 L151.2,716.8 L150.3,715.4 L150.3,713.0 M164.1,745.0 L163.5,747.9 M146.8,725.4 L148.4,724.1 M174.7,750.3 L176.5,749.6 L178.1,751.9 L178.6,749.2 M156.8,751.5 L155.2,748.9 M170.0,754.0 L171.1,751.7 M176.8,734.7 L176.3,735.0 L176.7,733.0 M172.8,723.2 L173.3,725.6 L175.0,723.5 L177.6,724.5 M154.6,748.9 L152.3,747.9 M170.5,745.8 L167.9,745.4 M167.2,720.5 L167.4,718.1 M160.6,740.4 L159.8,742.1 M146.3,717.7 L146.0,717.6 L145.7,716.5 M148.4,752.3 L150.5,750.4 L151.0,752.8 L151.7,752.8 M176.8,756.8 L173.9,754.4 M163.6,747.4 L165.3,744.9 L168.1,743.9 M165.9,731.8 L167.1,734.7 L167.5,733.1 L164.9,734.5 M169.6,731.5 L172.5,731.7 L170.9,729.4 L172.7,727.9 M159.7,746.7 L160.7,747.0 L160.4,749.6 L158.6,747.3 M161.2,746.2 L159.8,745.0 L161.7,744.2 L159.2,744.7 M151.4,735.5 L153.1,736.7 L155.8,734.0 M172.9,754.1 L170.5,756.1 L168.0,753.2 L167.4,755.9 M174.0,718.9 L175.9,718.1 L175.8,717.8 M154.4,743.2 L155.9,743.6 M155.5,737.6 L153.3,740.5 L153.9,742.8 M165.8,750.3 L164.8,751.0 M125.3,742.5 L126.5,744.9 L127.2,747.3 L126.6,748.6 M114.1,759.5 L112.1,757.1 L110.2,756.3 L109.2,753.4 M92.6,757.5 L90.1,757.7 L91.5,757.9 L90.7,758.2 M119.4,757.3 L117.5,756.0 L119.2,753.8 M77.7,745.7 L80.0,744.3 M117.1,744.0 L115.3,746.7 M139.5,754.0 L141.7,756.1 L141.3,755.6 M146.4,759.5 L145.5,761.3 L147.5,760.4 L148.1,761.9 M103.0,753.5 L102.8,751.0 L105.2,752.5 M79.6,744.2 L81.2,743.4 M125.7,748.1 L127.3,748.5 L127.1,748.0 L128.0,748.2 M139.6,747.0 L140.7,749.2 M142.9,757.8 L140.1,754.8 L137.3,753.0 L138.2,753.9 M87.4,745.9 L86.8,746.6 L89.2,749.3 L88.0,747.4 M64.2,748.9 L66.5,748.8 M67.2,759.6 L69.0,759.5 M95.0,745.5 L93.8,746.8 M120.2,756.9 L120.7,755.7 M94.4,756.9 L96.7,756.9 L95.6,759.1 M95.8,751.1 L93.1,750.4 L94.9,752.9 L97.2,752.4 M148.1,752.7 L145.3,754.7 L143.6,757.3 L145.4,758.1 M71.8,751.8 L69.7,751.9 L68.4,751.7 M110.3,750.6 L108.6,753.0 L108.0,753.8 M73.0,754.2 L76.0,754.9 L77.6,752.3 M143.4,744.2 L144.7,741.9 L142.1,743.0 M115.9,746.2 L115.3,745.2 M134.9,751.3 L137.5,752.6 M83.6,752.1 L86.1,751.3 L84.8,751.4 M82.1,742.2 L83.4,744.7 M107.0,751.6 L105.5,753.7 L105.8,756.3 M112.2,753.0 L111.1,751.8 M134.6,757.7 L132.0,758.4 M119.6,756.5 L118.5,758.5 M83.4,759.1 L84.3,759.8 M93.7,755.2 L95.7,753.4 L93.9,756.3 L93.0,756.8 M80.7,746.3 L78.3,745.7 L75.7,744.8 M128.6,743.8 L129.2,743.3 M126.6,758.8 L128.8,761.4 L127.1,759.4 L124.4,759.5 M148.1,746.4 L147.6,744.0 M118.6,745.8 L118.0,747.8 L116.9,748.2 L117.1,747.0 M129.8,757.4 L127.2,755.3 L126.0,755.8 M93.5,757.5 L91.9,756.8 L94.6,757.9 M132.6,751.1 L129.9,752.6 L131.3,750.1 M68.7,758.4 L70.8,757.5 L71.7,758.3 L70.4,758.8 M88.6,754.2 L86.1,752.9 L87.3,755.0 L84.9,755.4 M107.5,742.9 L108.9,743.9 L105.9,742.7 M64.4,745.0 L67.0,742.8 L67.6,744.2 M111.9,748.4 L110.7,748.1 L112.8,746.2 M131.7,757.3 L132.1,758.0 L134.4,760.6 M121.0,747.3 L121.1,750.2 L123.4,748.9 M94.5,748.0 L92.3,747.0 M131.9,747.7 L130.8,745.3 M136.8,759.7 L135.3,761.8 L137.2,761.3 L135.1,762.3 M99.5,746.1 L101.7,744.2 M101.3,752.8 L99.1,753.7 M77.0,751.4 L74.2,754.1 L74.9,752.2 L72.2,749.2 M146.0,753.1 L148.2,751.3 L148.8,749.2 M96.5,749.0 L93.9,746.9 L91.5,748.5 L94.2,750.9 M104.3,742.1 L101.6,742.7 L99.6,742.2 M137.8,759.5 L137.0,759.9 L135.8,757.6 M76.0,754.5 L73.3,752.5 L75.5,752.7 M118.1,753.9 L116.1,754.4 L118.2,755.0 M99.5,754.1 L101.5,757.0 L103.2,754.5 M140.2,751.5 L137.4,752.8 L139.5,751.3 M117.2,748.5 L117.5,748.4 L116.2,746.7 L114.2,746.2 M121.1,750.9 L118.4,748.9 L117.2,748.6 M114.0,743.1 L116.3,743.8 M147.6,745.6 L148.1,746.4 M131.1,756.2 L129.2,754.4 L130.9,752.9 L129.1,750.3 M117.8,755.7 L118.1,758.2 L118.1,759.9 M217.4,748.5 L219.5,749.8 M192.8,746.0 L195.2,746.2 L195.3,747.3 M229.2,749.9 L231.1,748.2 L230.8,747.8 M218.0,741.5 L215.4,742.6 L214.0,742.9 M231.2,751.8 L233.3,751.4 L230.5,754.0 M205.7,750.2 L207.3,749.7 L207.9,749.1 M229.3,754.5 L231.6,756.4 M196.2,750.8 L195.7,749.5 L197.4,747.1 L197.3,746.0 M231.9,751.0 L230.1,752.1 L230.5,749.9 M183.5,741.3 L182.1,744.2 M188.6,755.7 L185.9,754.6 L186.2,751.7 M227.2,754.6 L224.5,753.0 L225.5,753.4 L228.2,755.9 M194.8,746.1 L192.0,744.9 M205.4,746.5 L203.5,749.5 M211.6,748.6 L209.1,748.2 L210.8,748.5 M219.7,757.9 L218.8,759.8 M211.5,752.9 L213.0,754.8 L212.1,753.6 L212.6,751.8 M209.0,753.3 L211.1,753.6 L211.0,755.5 L213.0,754.0 M197.3,750.5 L200.0,749.7 L197.8,748.6 L197.2,747.0 M182.7,753.5 L184.3,755.2 M216.1,743.3 L213.8,745.5 L212.3,745.8 L213.8,746.7 M203.3,740.2 L203.8,741.9 L202.7,744.2 L205.7,746.6 M190.9,742.2 L189.1,742.7 L187.1,741.8 L189.1,744.0 M215.8,755.7 L218.6,758.1 L221.2,755.4 L219.3,752.7 M190.8,750.5 L189.2,748.6 L189.2,749.9 M200.0,746.3 L198.1,747.4 L197.5,748.6 M206.4,741.0 L206.8,739.6 L204.2,737.9 M216.5,745.9 L216.9,746.8 L214.8,744.9 M201.2,743.4 L202.1,742.6 L202.8,745.2 M222.1,754.7 L221.7,754.4 M800.2,569.9 L800.7,571.7 M789.6,573.7 L791.0,573.4 M789.4,639.4 L787.2,638.5 M797.1,651.9 L797.3,651.1 L799.2,649.1 M792.2,597.4 L791.7,595.7 L793.4,598.0 M797.8,568.2 L800.0,565.6 L798.8,563.7 M795.1,592.4 L795.7,589.6 M797.6,609.0 L795.6,607.9 L795.4,609.9 M789.7,573.8 L789.1,575.1 L792.0,576.8 M800.9,576.6 L799.5,579.4 L799.7,578.3 L800.5,580.3 M799.7,612.7 L799.4,612.4 L802.3,613.4 L803.1,613.0 M792.9,640.2 L792.2,638.7 L789.6,636.9 L788.3,635.8 M795.7,573.4 L792.9,576.1 M799.5,574.6 L801.3,572.8 L802.1,573.0 L804.7,574.6 M787.0,586.9 L785.4,587.2 L786.0,585.4 M789.9,606.9 L791.6,608.7 L791.3,610.0 L793.3,610.4 M803.6,582.1 L802.5,579.9 L805.3,577.9 M789.1,573.5 L786.6,571.5 L788.2,572.4 L787.8,570.4 M800.5,628.0 L801.1,626.6 M791.9,594.1 L793.8,593.7 L793.7,592.4 M797.9,579.6 L795.8,580.5 M789.3,592.1 L791.7,589.6 L792.6,590.1 L793.2,589.4 M803.9,650.0 L804.7,651.8 L807.2,648.8 M787.6,655.5 L788.9,656.3 L789.9,659.1 M792.8,616.8 L791.6,615.2 M798.7,600.1 L799.3,602.0 L798.0,599.1 L796.8,601.3 M790.9,610.8 L792.0,612.0 M803.5,619.9 L800.9,618.5 L798.0,620.4 M786.9,657.8 L787.1,658.1 L789.6,655.3 L791.4,654.0 M786.4,648.6 L785.4,651.6 M799.3,645.0 L798.9,642.4 L797.9,643.4 L797.4,644.0 M789.7,648.3 L788.9,647.7 L786.0,647.9 M800.4,635.5 L803.1,633.0 L804.0,630.2 M790.0,603.4 L787.7,602.1 M794.6,572.2 L795.2,572.1 L797.5,572.1 M802.3,641.8 L801.9,643.2 M793.0,654.9 L791.5,653.0 M805.3,620.2 L803.0,618.5 L804.8,619.2 L803.7,620.9 M798.8,610.8 L799.4,611.8 L799.1,611.5 L800.6,614.3 M805.8,620.0 L805.6,621.4 L808.4,622.1 M791.2,576.9 L793.3,576.1 L792.2,576.9 L790.7,575.5 M789.9,628.5 L790.4,630.9 M805.9,590.8 L804.6,593.6 L802.5,596.6 M796.0,599.3 L795.0,596.5 M801.0,648.5 L801.5,649.7 L799.2,647.5 L799.9,647.0 M795.4,595.3 L797.7,593.6 L797.1,592.5 L800.0,590.8 M791.7,592.4 L792.4,594.9 M791.7,602.2 L793.8,600.6 M786.6,637.0 L788.0,634.5 M796.6,575.9 L797.7,573.4 L799.4,570.5 L800.3,573.2 M803.5,620.5 L802.1,618.4 M795.2,603.0 L797.9,605.8 M802.7,577.3 L802.6,579.2 M797.6,587.8 L794.7,586.4 L794.3,587.1 M791.5,590.4 L792.0,589.2 L791.4,588.7 L792.2,591.4 M799.6,588.4 L801.3,587.3 L802.8,588.1 M798.6,599.6 L796.0,600.6 M789.3,618.2 L787.2,620.4 L786.4,620.1 M789.3,646.8 L791.0,645.7 L788.3,642.8 M790.4,572.5 L788.5,571.6 L787.6,573.4 M799.5,621.2 L800.5,619.0 L797.8,618.1 M792.9,609.7 L790.2,608.1 L787.8,605.1 L784.9,603.4 M804.4,592.8 L802.7,595.4 L803.3,593.5 L801.0,591.6 M792.7,628.2 L794.3,630.6 M786.4,601.6 L788.0,604.0 M790.2,619.9 L790.1,618.8 M798.1,650.0 L797.1,651.6 L799.5,652.8 L802.5,651.7 M791.9,656.6 L791.6,658.1 L793.4,655.8 M800.2,622.5 L797.4,621.3 L798.8,624.2 L801.0,622.5 M790.4,622.0 L790.5,624.3 L790.9,626.7 L793.7,624.7 M573.7,707.0 L574.7,709.6 L574.5,709.9 L574.2,706.9 M578.1,707.3 L577.3,705.0 L575.3,707.4 M565.0,706.6 L567.8,707.0 M569.4,707.2 L568.2,707.1 M572.9,708.2 L572.9,708.0 L570.0,706.4 L570.8,706.8 M585.9,698.4 L584.2,696.3 L581.9,694.9 L584.0,694.6 M275.9,664.8 L278.2,667.4 M264.0,661.2 L265.3,659.5 M289.3,662.4 L290.1,660.1 L290.6,657.5 L291.0,655.9 M289.2,662.8 L292.0,660.3 L291.8,658.6 M301.5,661.3 L303.5,662.1 L303.4,660.3 M289.1,662.4 L292.0,664.9 M263.2,658.2 L263.9,659.0 L262.0,656.5 L259.5,656.2 M280.0,660.8 L280.9,659.3 L280.6,661.3 L281.9,661.4 M263.8,665.4 L262.2,664.4 M266.1,659.5 L267.3,659.5 L270.0,661.0 M281.2,666.2 L281.9,664.5 L282.7,667.1 M290.9,665.7 L290.7,668.1 L292.9,666.6 L295.5,667.9 M279.0,664.4 L276.9,663.4 L279.2,666.1 L280.8,664.2 M294.3,658.5 L295.0,659.3 L297.7,657.4" fill="none" stroke="#000" stroke-width="1.6" stroke-linecap="round"/>
<polyline points="470.0,6.0 470.5,12.1 471.2,18.0 471.3,23.6 470.2,28.2 472.3,34.2 472.5,38.7 472.0,45.0 467.2,46.9 462.7,50.0 456.9,51.7 452.7,55.5 449.0,56.5 444.3,58.8 439.0,62.0 435.8,66.1 431.2,72.3 428.2,75.8 426.4,81.9 422.0,86.0 420.6,92.5 420.1,97.6 418.4,103.7 418.4,109.3 417.0,114.0 416.0,118.4 413.1,122.9 410.9,127.5 409.4,133.4 408.0,138.0 405.6,143.9 404.9,148.6 404.4,154.5 402.0,160.0 401.0,165.5 400.8,169.8 400.7,174.9 399.6,181.8 397.5,186.8 397.6,191.6 396.3,195.7 396.0,202.7 396.0,207.0 395.7,213.2 397.5,219.2 396.7,223.7 397.4,230.2 396.9,235.8 398.0,241.0 398.1,247.3 396.1,253.0 395.7,257.4 396.2,264.1 395.2,269.7 395.1,274.1 394.5,280.0 394.5,284.6 394.4,289.8 396.0,296.7 396.0,301.0 395.9,305.3 398.2,311.6 397.7,316.2 398.7,322.7 399.0,327.1 398.9,333.3 399.4,337.7 401.0,343.0 402.3,347.9 402.8,355.2 403.3,360.6 402.9,365.5 403.6,372.0 405.0,377.0 405.0,381.9 406.9,387.7 407.2,391.9 406.7,397.5 407.1,401.6 407.4,406.3 408.0,412.0 410.3,417.8 413.9,422.0 415.5,426.2 417.2,431.0 421.1,437.0 422.7,441.7 425.5,446.0 428.7,451.2 431.2,456.1 433.3,460.8 435.9,465.2 439.0,470.0 437.4,475.1 434.3,480.4 432.9,484.4 429.5,489.1 427.9,494.1 426.2,499.1 424.4,503.8 422.0,508.0 418.2,514.3 415.0,520.0 412.3,524.6 408.4,528.6 406.2,532.3 403.3,536.8 399.2,539.9 395.3,544.5 393.7,547.8 390.0,552.3 386.9,555.1 383.9,559.9 380.5,563.6 377.2,568.3 373.8,571.7 369.6,575.3 364.0,577.4 360.4,581.6 355.5,584.8 351.9,586.7 347.2,590.3 342.8,594.0 336.7,595.3 332.1,597.4 326.6,599.1 322.0,601.8 317.1,604.2 311.7,606.0 309.5,612.1 307.3,616.3 306.1,621.6 304.8,627.0" fill="none" stroke="#8a7200" stroke-width="1" shape-rendering="crispEdges"/>
<polyline points="260.0,148.0 265.0,148.2 271.2,146.1 277.5,145.7 283.1,145.7 288.9,146.4 294.5,145.0 300.3,144.1 305.4,143.9 309.7,142.2 315.3,142.3 321.2,142.4 325.6,140.5 331.3,139.1 334.9,139.5 341.1,138.0 346.0,138.0 351.3,138.0 355.8,136.3 360.5,135.2 366.9,134.6 371.9,134.9 376.2,132.9 382.0,132.5 385.8,131.4 391.0,131.0 396.5,133.3 399.7,135.6 403.9,138.1 409.1,139.8 414.3,143.2 417.4,144.9 422.4,148.0 428.0,148.9 432.0,151.7 436.7,149.6 443.4,148.5 447.8,147.5 453.1,146.4 458.5,144.1 463.7,143.1 468.5,141.8 473.2,140.8 478.7,139.1 484.0,138.0 489.6,138.8 493.3,138.8 499.2,140.7 505.1,140.6 508.5,141.7 514.4,142.0 520.1,142.7 524.7,143.9 529.6,143.5 535.6,143.8 540.0,145.0 544.5,147.7 548.9,149.7 555.1,150.9 559.2,153.6 564.5,155.0 571.1,153.7 576.0,154.0 581.7,153.0 586.8,153.0 593.9,151.4 599.0,151.7 603.6,151.4 609.9,150.2 613.6,149.4 619.7,148.0 626.4,148.5 631.5,146.1 637.5,145.9 642.9,146.9 648.7,144.8 654.0,145.0 658.0,142.8 662.2,139.2 667.1,135.3 672.0,132.1 675.4,129.8 679.7,126.1 685.0,124.0 689.9,122.3 695.2,118.9 699.0,117.1 704.1,115.3 709.5,112.8 712.5,111.3 717.4,109.0 722.8,107.4 727.7,104.6 731.8,102.3 737.0,100.0 741.4,98.5 746.7,95.3 751.0,93.7 756.9,91.4 761.7,90.3 765.3,88.3 771.0,86.0 775.2,83.2 781.2,81.5 786.8,80.0 790.6,78.6 795.1,76.5 800.1,73.3 806.0,72.0" fill="none" stroke="#8a7200" stroke-width="1" shape-rendering="crispEdges"/>
<polyline points="6.0,257.6 12.0,257.6 15.6,256.0 22.2,256.7 27.0,255.3 31.6,255.3 35.9,254.9 41.8,254.5 46.4,253.7 51.7,254.0 58.1,252.6 63.8,250.5 69.0,249.0 74.5,247.3 78.7,245.7 83.8,243.6 87.3,241.1 92.3,239.4 98.4,238.6 103.0,235.9 107.2,235.9 112.0,233.4 117.2,232.2 121.9,230.4 126.2,229.5 131.6,228.9 137.6,227.3 141.3,226.5 146.1,225.4 151.7,224.8 156.8,224.4 162.1,224.9 168.4,224.6 174.7,223.7 180.0,223.0 183.7,219.6 187.6,214.4 191.2,211.9 196.0,209.0 201.2,205.1 204.6,202.0 209.0,199.2 213.7,198.2 218.0,194.0 222.7,191.5 227.7,188.8 233.3,187.4 237.2,184.2 243.2,183.4 248.2,180.1 253.9,177.0 258.0,175.7 262.1,175.0 267.8,172.3 273.1,173.0 278.0,170.4 282.2,168.6 288.8,168.2 293.0,167.0 298.9,164.8 302.5,163.5 307.8,162.3 312.5,161.7 317.6,159.7 322.1,160.2 328.0,158.0 332.6,156.7 338.3,155.5 342.9,153.7 348.2,152.9 355.1,151.7 360.2,149.6 363.8,149.0 370.0,147.6 374.2,144.4 378.2,141.2 383.1,138.5 386.4,134.2 391.0,131.0" fill="none" stroke="#8a7200" stroke-width="1" shape-rendering="crispEdges"/>
<polyline points="199.5,6.0 200.2,10.5 198.7,15.7 198.7,21.7 200.1,25.8 198.8,30.4 199.0,35.4 199.4,41.4 199.0,45.5 199.9,50.5 198.9,56.0 199.2,60.7 199.5,66.5 198.8,71.8 199.0,77.9 198.8,83.7 198.0,89.2 196.9,95.3 196.8,101.3 196.0,106.0 194.8,111.4 192.3,116.6 190.8,120.3 188.6,125.3 187.3,131.4 185.7,135.1 185.0,141.1 181.9,145.1 180.5,150.7 179.6,156.0 177.4,161.1 173.9,163.8 170.6,168.3 167.5,171.8 165.0,177.6 162.4,180.3 159.0,184.7 156.0,189.5 154.4,194.1 152.9,199.5 149.2,203.2 148.8,208.2 146.0,213.0 148.4,217.9 151.5,223.9 153.6,228.9 156.0,233.0 158.8,237.6 161.8,243.6 162.9,250.2 165.5,254.8 169.0,260.0 169.5,266.5 169.9,270.9 170.3,276.7 171.4,282.7 172.3,288.2 172.4,294.5 172.8,299.3 174.8,305.8 175.2,310.6 175.0,314.9 176.5,320.9 175.6,325.6 176.5,331.9 178.7,336.2 179.2,341.7 179.7,348.1 180.3,353.3 180.5,357.0 181.4,363.4 181.5,368.3 182.8,373.8 181.7,378.7 181.0,385.2 180.7,391.6 180.0,397.0 177.2,402.4 175.5,406.7 172.7,410.6 169.8,415.3 166.9,419.3 164.9,423.6 162.0,428.0 160.3,432.5 158.6,438.5 158.3,444.6 157.3,449.1 156.4,454.4 154.7,459.4 153.5,466.0 151.7,471.0 150.5,476.8 147.8,481.6 145.7,486.1 142.5,490.9 141.7,495.3 139.7,500.9 136.4,504.7 134.5,510.7 133.7,516.5 133.7,524.4 132.8,530.0 133.9,535.2 133.1,539.2 134.0,545.1 134.4,549.7 135.0,554.4 134.5,560.0 133.7,564.8 133.9,571.3 132.6,576.1 133.4,580.5 131.6,586.5 132.7,592.4 132.1,596.7 131.1,602.2 131.6,607.0 130.0,612.9 131.0,617.3 128.7,622.4 129.3,628.7 128.2,633.1 128.4,639.0 132.2,642.8 136.0,646.5 138.3,649.5 143.5,653.9 146.0,657.2 150.0,660.0 154.8,663.5 158.5,665.7 164.2,668.0 167.2,670.1 171.8,672.5 177.0,676.0" fill="none" stroke="#8a7200" stroke-width="1" shape-rendering="crispEdges"/>
<polyline points="6.0,460.7 10.4,461.5 15.4,462.3 21.7,462.9 27.0,463.2 32.3,464.2 36.8,464.8 40.8,463.5 45.8,464.3 51.6,465.3 56.9,465.9 62.7,468.1 67.0,469.1 73.4,470.8 78.0,473.0 84.0,474.9 89.7,476.2 94.9,476.8 100.9,474.8 105.7,475.8 110.0,474.3 115.5,474.5 121.2,475.3 125.6,473.8 131.0,474.3 136.2,473.6 142.3,474.4 146.7,474.6 153.3,475.6 157.2,476.0 163.1,477.2 168.2,477.0 173.7,478.1 180.0,478.8 186.0,478.3 189.8,478.5 194.2,476.8 200.6,475.6 205.0,476.0 211.0,475.5 215.0,475.1 221.4,475.2 227.0,474.4 231.9,476.1 237.8,474.9 242.6,474.3 249.8,475.0 254.4,474.4 260.0,471.7 265.4,471.4 271.1,469.3 277.7,467.7 282.5,465.6 286.6,460.8 289.3,458.4 293.9,454.7 298.6,450.9 301.8,446.2 305.3,443.5 309.7,439.6 312.2,435.6 316.5,432.3 321.3,427.1 323.9,423.5 327.7,419.8 331.8,415.8 335.2,412.8 338.9,407.5 344.0,402.3 348.3,401.4 355.2,401.7 359.0,399.2 365.5,400.4 370.0,398.8 374.6,395.0 378.2,393.4 384.0,388.6 386.9,386.3 391.4,383.8 396.0,380.8 399.9,377.1 405.0,374.0 409.7,370.8 411.8,365.9 416.7,362.8 419.9,359.4 424.2,356.7 427.3,352.3 431.1,348.6 435.9,344.1 439.2,341.7 443.0,337.6 445.5,334.1 449.7,329.5 453.6,326.0 455.9,321.3 459.3,317.0 463.4,312.2 466.7,309.0 470.9,305.9 474.0,301.0 476.4,296.5 479.8,292.8 482.9,288.3 484.3,282.1 488.2,277.4 489.9,274.1 492.7,268.9 496.2,264.2 498.0,260.0 502.7,257.8 506.4,254.0 511.7,251.6 515.7,248.5 520.0,244.9 525.1,242.1 530.0,240.0" fill="none" stroke="#8a7200" stroke-width="1" shape-rendering="crispEdges"/>
<polyline points="411.7,367.0 417.8,366.0 421.6,366.6 427.7,365.0 433.0,365.3 437.3,364.8 442.2,363.5 448.6,363.4 453.0,363.0 458.9,361.8 462.5,360.9 468.8,361.4 472.5,359.7 479.2,360.0 484.4,358.6 489.0,358.1 494.4,358.5 499.3,357.1 505.1,356.3 508.4,356.9 513.6,355.1 519.4,355.7 525.4,355.2 528.9,354.5 535.6,352.8 540.0,353.0 545.7,351.6 550.0,350.3 556.2,350.4 561.7,349.4 565.4,348.1 570.8,348.6 575.9,346.1 581.7,346.0 586.6,346.9 591.9,349.7 597.5,350.6 601.7,352.9 607.9,354.6 612.9,357.3 617.2,357.7 623.0,360.0 629.0,361.8 633.4,363.4 638.9,363.6 644.3,364.8 648.5,363.7 653.6,364.6 660.0,364.7 664.6,365.8 670.4,365.2 675.2,366.0 679.0,366.9 685.0,367.0 690.9,367.5 694.5,368.5 700.4,368.2 706.2,367.7 710.8,368.2 715.4,367.9 721.8,368.9 727.3,368.5 731.4,369.1 737.0,370.0 743.6,369.5 749.1,367.8 753.2,366.5 759.1,364.7 765.5,364.1 771.0,363.4 774.5,360.7 780.5,358.9 783.9,354.5 788.9,351.8 792.7,349.0 798.0,347.2 801.2,344.0 805.8,342.7 810.0,339.0" fill="none" stroke="#8a7200" stroke-width="1" shape-rendering="crispEdges"/>
<polyline points="439.0,470.0 443.9,468.4 449.0,468.8 453.8,467.3 459.8,465.7 464.6,465.1 468.3,463.1 474.0,463.0 479.4,459.6 482.9,457.2 487.6,453.0 491.6,450.2 496.0,446.3 501.0,443.0 505.7,440.2 508.6,436.4 513.8,434.5 516.8,432.0 521.0,427.3 525.0,424.9 530.0,422.0 533.3,418.1 535.5,413.2 538.4,408.4 541.8,403.4 544.4,399.5 547.6,395.0 551.1,390.1 554.8,385.3 557.6,380.7 561.4,377.2 563.2,371.7 567.4,367.0 569.5,363.2 573.6,358.3 576.0,355.2 579.1,349.3 581.7,346.0 586.9,342.6 591.0,340.3 594.4,337.7 599.2,333.7 603.6,331.0 607.8,328.2 612.3,324.3 616.0,322.0 620.7,318.5 626.0,317.5 630.9,313.6 635.0,312.0 638.9,308.9 645.3,307.7 648.6,305.2 654.1,301.8 658.8,299.0 662.8,296.0 668.0,294.5 673.0,292.2 677.9,289.5 682.0,286.6 687.3,284.2 691.7,282.5 696.1,279.9 700.0,276.5 706.3,273.8 709.4,271.0 715.5,268.7 719.7,267.0 724.2,263.7 729.4,260.6 733.4,256.6 738.5,254.9 742.8,251.9 747.3,248.5 752.3,245.1 756.2,241.7 760.4,240.1 767.5,236.3 770.8,234.2 776.0,231.8 782.0,229.7 787.2,227.4 793.0,226.1 799.6,225.0 806.0,222.8" fill="none" stroke="#8a7200" stroke-width="1" shape-rendering="crispEdges"/>
<polyline points="581.7,346.0 579.8,340.2 579.2,336.5 576.9,330.0 574.6,325.3 572.9,319.3 571.3,315.6 570.0,310.7 568.3,305.3 567.0,300.5 564.5,294.5 563.1,289.4 560.9,285.0 559.4,280.1 556.5,274.2 554.3,269.4 553.0,265.5 550.7,260.0 545.9,256.1 543.1,251.7 537.5,248.2 533.9,243.3 530.0,240.0" fill="none" stroke="#8a7200" stroke-width="1" shape-rendering="crispEdges"/>
<polyline points="581.7,346.0 583.7,350.0 585.9,355.8 588.3,359.9 591.7,366.7 594.7,370.4 597.4,374.9 599.0,380.7 601.1,384.2 603.6,389.9 607.8,394.1 610.6,398.5 613.6,403.3 615.6,406.9 618.1,411.9 621.6,416.0 623.3,421.7 626.5,425.5 627.9,430.1 630.5,434.8 633.4,439.0 632.9,443.8 632.5,450.0 631.0,456.5 631.2,461.0 630.0,467.0 630.4,471.9 630.0,477.5 630.3,484.8 630.3,488.7 630.0,495.3 630.0,501.0 630.9,505.9 631.6,512.0 632.1,518.1 633.5,522.9 634.2,528.5 636.9,534.0 637.0,540.0 640.7,542.7 646.0,546.0 648.4,550.2 648.7,555.4 651.0,560.9 651.3,566.7 653.3,571.4 655.1,576.7 655.8,580.5 657.8,585.5 660.4,591.0 661.3,596.0 664.3,599.9 668.7,603.9 671.2,607.9 674.9,611.3 677.8,614.6 681.2,620.0 684.3,622.9 688.0,627.0 691.1,631.5 693.2,635.5 697.2,639.0 698.9,644.7 703.4,647.6 704.6,653.1 708.0,657.4 711.3,661.4 712.9,666.0 715.8,670.5 719.4,675.5 722.3,680.9 724.4,685.6 726.1,689.5 728.9,694.5 731.1,699.8 734.4,703.7 735.6,709.6 738.2,715.2 738.5,720.3 741.2,724.1 742.1,730.6 743.0,735.0 743.9,740.5 746.0,746.0 747.5,750.8 746.8,756.2 747.8,761.2 748.4,765.6 748.2,771.6 750.1,775.5 750.4,781.2 751.1,786.8 752.3,790.6 752.0,796.2 752.3,801.9 753.6,806.0" fill="none" stroke="#8a7200" stroke-width="1" shape-rendering="crispEdges"/>
<polyline points="633.4,432.4 637.1,434.5 642.1,436.6 646.3,438.0 652.8,441.2 655.8,442.6 660.1,444.0 665.0,447.8 669.8,448.4 673.9,450.2 680.4,453.5 684.8,455.8 689.2,456.7 692.5,458.8 696.9,460.7 702.4,463.4 707.9,464.7 711.6,465.6 718.4,467.9 723.2,469.0 728.6,469.9 732.7,471.2 737.6,471.4 742.6,473.5 747.4,474.0 752.7,475.9 759.2,477.4 764.1,479.2 768.7,479.6 773.4,480.9 778.9,483.2 784.3,483.4 788.1,484.1 794.1,485.8 799.0,487.6" fill="none" stroke="#8a7200" stroke-width="1" shape-rendering="crispEdges"/>
<polyline points="304.8,630.0 311.7,623.4 316.4,623.0 322.6,622.8 329.2,623.6 334.1,623.9 339.7,624.2 346.0,623.4 350.4,623.2 356.8,623.2 361.6,623.1 367.1,622.4 371.2,621.1 377.1,621.5 381.6,621.5 387.3,620.6 392.8,621.0 398.0,620.0 403.2,619.7 409.4,619.5 414.4,618.3 420.3,618.5 426.3,617.1 431.5,617.6 436.6,616.2 442.8,616.6 449.4,615.4 454.2,615.7 459.0,615.3 464.9,615.3 472.1,614.4 477.0,615.0 482.1,616.0 488.1,615.2 492.7,616.3 499.5,617.2 503.7,617.8 509.5,617.7 515.0,619.0 520.2,620.7 524.6,621.7 530.0,623.8 534.6,623.3 539.2,625.8 543.7,627.1 548.6,628.3 553.9,629.7 559.4,631.0 563.8,632.3 567.6,633.4 573.0,634.5 578.5,634.3 584.0,635.3 588.7,636.6 594.4,637.8 599.1,638.8 604.3,638.7 610.6,638.9 615.3,640.9 619.3,641.2 625.7,641.4 630.6,642.0 636.3,643.8 640.1,644.1 646.2,645.5 652.0,646.8 656.9,646.3 661.2,649.1 667.4,649.8 671.3,650.9 676.8,651.7 682.1,653.1 687.4,654.4 692.1,654.5 697.6,655.6 701.5,657.5 707.5,657.6 712.6,657.6 717.6,657.0 724.9,657.2 729.1,658.2 734.5,657.9 740.6,658.4 746.0,657.6 751.4,656.7 756.4,656.2 761.3,655.2 767.0,655.0 773.7,655.7 778.3,653.8 784.0,653.7 789.1,653.0 795.0,651.1 800.5,650.5 806.0,650.0" fill="none" stroke="#8a7200" stroke-width="1" shape-rendering="crispEdges"/>
<polyline points="6.0,661.0 10.3,661.2 16.0,660.3 20.6,658.2 27.3,656.5 32.9,654.1 38.5,651.5 43.0,650.5 49.7,648.6 53.8,646.6 61.6,645.8 66.5,643.7 76.3,643.0 82.3,643.2 86.4,641.7 92.9,642.5 98.5,641.2 104.6,640.3 110.0,640.9 113.9,639.8 119.4,640.4 124.7,639.8 130.0,640.0 136.6,640.0 140.9,640.6 146.5,639.8 151.9,639.5 159.3,640.2 164.0,640.0 169.0,643.0 174.3,645.4 178.7,647.3 183.1,649.9 188.8,652.4 194.0,656.0 200.2,653.2 205.2,650.7 211.6,648.6 218.1,646.5 225.2,645.5 231.0,644.0 235.6,643.5 242.7,644.8 246.9,645.4 251.9,646.1 259.1,646.0 262.8,645.9 269.8,646.5 274.0,646.1 280.0,647.0 283.3,644.2 287.6,641.2 293.2,639.3 296.5,636.2 299.9,633.7 304.8,630.0" fill="none" stroke="#8a7200" stroke-width="1" shape-rendering="crispEdges"/>
<polyline points="256.0,476.0 255.0,481.6 253.3,486.8 251.7,492.4 249.9,499.1 247.3,504.0 244.6,509.8 239.2,514.2 236.5,520.0 234.1,525.8 231.5,529.1 228.5,535.0 225.1,538.7 221.6,542.5 219.2,546.7 216.0,551.0 214.9,558.2 214.8,565.7 216.0,573.0 215.0,578.0 212.8,583.5 209.4,588.3 207.7,591.7 207.1,597.7 205.0,602.0 203.3,606.7 201.0,611.7 198.6,616.7 196.7,621.9 196.7,629.3 194.0,634.0 193.7,639.3 193.6,645.6 194.0,649.8 194.0,656.0" fill="none" stroke="#8a7200" stroke-width="1" shape-rendering="crispEdges"/>
<polyline points="6.0,616.0 10.5,623.0 13.5,628.3 11.3,635.6 11.0,643.0 12.1,649.0 14.1,654.1 16.0,660.3" fill="none" stroke="#8a7200" stroke-width="1" shape-rendering="crispEdges"/>
<polyline points="86.2,646.8 88.3,651.9 91.1,656.6 93.6,661.6 98.9,664.8 104.3,668.0 108.3,671.4 114.3,672.9 119.4,672.8 125.2,673.7 130.0,673.9 134.4,675.5 139.3,676.5 145.4,678.9 150.0,681.0" fill="none" stroke="#8a7200" stroke-width="1" shape-rendering="crispEdges"/>
<polyline points="240.3,6.0 242.1,10.1 244.0,16.3 247.3,21.0 251.7,25.5 257.1,31.1 261.4,35.0 263.6,41.5 265.0,49.2 269.5,53.0 272.0,58.0 277.4,57.4 282.1,57.0 288.0,55.8 293.0,54.5 299.3,54.3 307.0,52.7 312.8,56.5 319.4,59.8 324.3,62.4 327.7,65.3 333.5,68.9 336.9,71.6 341.6,73.9 345.7,77.3 349.7,79.3 355.6,83.1 361.2,86.0 365.8,89.6 370.0,91.4 373.9,95.0 377.7,98.6 382.2,102.8 384.8,107.2 389.5,110.6 393.4,114.0 397.4,116.8 400.4,121.7 405.0,125.0" fill="none" stroke="#8a7200" stroke-width="1" shape-rendering="crispEdges"/>
<polyline points="716.6,190.0 719.4,193.6 723.5,199.1 726.6,202.7 728.5,207.8 731.8,211.9 735.5,215.9 741.9,217.5 747.6,220.0 749.6,225.6 754.2,231.0 757.6,235.7 759.7,241.7 762.3,247.6 764.0,253.8 765.4,258.6 765.9,264.3 767.8,270.2 769.0,274.5 770.0,279.7 774.6,284.3 778.4,287.9 783.3,292.4 787.2,297.0 790.6,299.8 795.6,304.2 800.5,307.3 804.5,310.7" fill="none" stroke="#8a7200" stroke-width="1" shape-rendering="crispEdges"/>
<polyline points="670.0,291.7 675.8,289.0 680.1,287.4 685.9,284.4 691.5,281.2 695.9,279.7 700.2,277.2 705.0,272.7 709.1,270.1 713.5,266.5 717.2,263.9 722.0,260.1 725.2,257.2 731.9,254.7 739.0,253.8 742.8,257.5 746.6,262.3 749.3,267.6 753.9,271.9 759.6,275.0 764.5,277.4 770.0,281.4 773.9,285.5 777.7,288.4 783.2,291.1 786.1,294.3 790.7,297.0" fill="none" stroke="#8a7200" stroke-width="1" shape-rendering="crispEdges"/>
<polyline points="670.0,151.4 673.1,156.5 674.0,161.4 677.8,166.2 678.5,170.3 681.8,174.9 683.8,180.7 688.5,182.7 694.8,185.3 701.0,187.6 705.9,187.1 712.9,186.0 718.4,185.9 724.6,185.4 730.0,184.7 735.5,184.0 742.0,182.2 746.4,182.7 753.7,180.0 759.7,180.2 764.8,179.0 770.6,178.8 774.7,176.9 780.5,177.5 785.0,175.9 789.8,176.6 795.1,174.5 801.2,175.4 805.3,173.8" fill="none" stroke="#8a7200" stroke-width="1" shape-rendering="crispEdges"/>
<polyline points="434.0,131.0 432.9,138.8 429.6,146.0 424.3,152.2 417.5,157.0 409.5,160.0 401.0,161.0 392.5,160.0 384.5,157.0 377.7,152.2 372.4,146.0 369.1,138.8 368.0,131.0 369.1,123.2 372.4,116.0 377.7,109.8 384.5,105.0 392.5,102.0 401.0,101.0 409.5,102.0 417.5,105.0 424.3,109.8 429.6,116.0 432.9,123.2 434.0,131.0" fill="none" stroke="#8a7200" stroke-width="1" shape-rendering="crispEdges"/>
<polyline points="596.0,348.0 595.0,353.7 592.2,358.6 588.0,361.9 583.0,363.0 578.0,361.9 573.8,358.6 571.0,353.7 570.0,348.0 571.0,342.3 573.8,337.4 578.0,334.1 583.0,333.0 588.0,334.1 592.2,337.4 595.0,342.3 596.0,348.0" fill="none" stroke="#8a7200" stroke-width="1" shape-rendering="crispEdges"/>
<polyline points="405.0,125.0 400.8,120.8 398.3,117.6 394.2,114.7 390.3,110.9 386.6,106.6 383.7,103.4 380.0,100.0 378.3,94.3 375.8,89.5 372.2,84.2 369.6,81.0 367.2,75.7 366.0,70.4 361.9,64.9 360.0,60.0 358.0,54.6 356.9,49.5 356.3,45.3 354.1,39.9 352.5,34.7 351.7,29.7 350.5,25.1 349.6,20.3 348.4,16.7 347.2,10.4 345.0,6.0" fill="none" stroke="#8a7200" stroke-width="1" shape-rendering="crispEdges"/>
<polyline points="405.0,125.0 409.4,121.4 412.9,117.8 415.8,113.8 419.8,110.4 423.6,107.6 426.3,102.6 430.0,100.0 433.2,96.2 437.0,92.9 439.9,89.0 445.3,86.4 448.6,82.2 452.0,79.2 456.0,74.5 459.1,71.8 462.8,67.5 466.0,64.0 470.0,60.0" fill="none" stroke="#8a7200" stroke-width="1" shape-rendering="crispEdges"/>
<polyline points="405.0,125.0 407.1,130.9 410.3,136.0 412.3,139.1 412.7,144.7 416.4,150.1 417.4,154.2 420.0,160.0 423.7,162.6 427.6,167.2 431.9,169.3 436.9,172.6 441.5,177.0 445.8,180.5 449.6,182.9 453.2,186.4 457.3,190.8 461.5,193.9 466.1,195.8 470.0,200.0 473.7,203.0 479.2,205.2 482.4,208.3 487.1,211.3 492.3,214.5 495.3,216.8 500.0,219.3 504.1,222.0 508.9,226.4 513.7,228.8 516.9,231.5 521.5,233.6 525.8,237.1 530.0,240.0" fill="none" stroke="#8a7200" stroke-width="1" shape-rendering="crispEdges"/>
<polyline points="6.0,105.0 12.1,104.8 17.8,105.5 23.8,105.0 31.2,104.4 36.8,105.2 42.3,104.8 49.3,104.9 55.5,104.5 61.0,104.5 67.5,105.6 73.8,105.4 79.6,105.3 85.4,104.7 92.3,105.3 98.1,104.4 104.1,104.6 110.2,105.4 116.3,105.5 123.4,104.4 128.8,105.0 134.5,104.9 141.9,104.5 147.6,104.5 153.6,105.0 157.4,110.4 161.0,114.7 159.6,126.4 151.0,133.0 146.3,137.6 141.8,143.7 138.0,149.0 143.3,148.4 150.0,149.6 155.9,148.9 162.2,148.4 168.1,148.5 174.2,149.6 179.4,149.1 186.0,149.0" fill="none" stroke="#000" stroke-width="1" shape-rendering="crispEdges"/>
<polyline points="201.6,7.0 202.9,10.2 204.0,14.0 205.8,18.4 208.0,22.0 207.9,24.7 207.0,28.0 204.7,30.9 202.0,33.0 202.3,36.6 203.0,40.0 204.3,42.6 206.5,45.4 208.0,48.0 210.7,50.7 213.0,54.0 216.1,56.2 219.5,57.8 222.7,59.8 224.4,63.7 226.3,66.4 228.0,70.3 228.2,74.5 228.0,79.0 227.1,81.9 226.2,85.1 225.0,88.4 224.5,91.4 220.7,93.4 217.5,95.0" fill="none" stroke="#000" stroke-width="1" shape-rendering="crispEdges"/>
<polyline points="216.0,93.7 215.9,92.9 215.9,92.1 215.8,91.6 215.9,91.2 215.8,90.6 215.6,90.7 215.3,91.3 214.6,91.8 211.1,90.8 211.7,91.2 212.2,92.3 212.8,93.2 213.2,94.0 213.4,95.2 214.0,96.3 213.8,97.6 213.4,98.8 213.2,100.1 212.1,101.0 211.2,101.5 210.2,102.2 209.1,102.6 207.8,102.9 207.0,103.1 205.8,103.3 205.2,103.2 204.0,103.2 203.5,103.0 203.2,103.0 203.6,103.0 210.4,103.5 209.6,104.1 209.2,104.5 208.4,104.9 206.9,105.2 205.7,105.7 204.4,105.9 203.3,105.7 202.0,105.6 200.9,105.1 199.8,104.2 199.2,102.9 198.2,102.0 198.0,100.6 197.9,99.5 198.0,98.2 199.7,100.8 198.4,101.1 197.4,101.4 196.4,101.4 195.6,101.6 194.8,101.3 194.5,100.9 194.7,101.2 194.5,101.1 194.6,104.9 195.1,104.8 195.5,104.4 196.6,104.2 197.8,104.1 199.0,104.0 200.2,104.4 201.4,104.8 202.7,104.8 203.3,106.0 205.0,109.1 205.4,110.2 204.6,111.3 204.3,112.2 203.9,113.3 202.8,114.2 201.6,115.0 200.4,115.4 199.5,115.4 198.8,115.7 198.1,115.9 197.5,116.1 197.7,116.2 197.6,116.4 197.7,116.5 198.3,116.9 198.7,117.2 199.1,117.6 199.6,118.1 200.4,118.9 201.1,119.6 201.7,120.4 202.4,121.4 201.8,124.6 201.1,125.4 200.3,125.9 199.5,126.5 198.5,126.7 197.5,126.5 196.4,126.6 195.5,126.4 194.6,126.6 194.0,126.4 193.4,126.3 192.4,125.9 192.1,125.7 191.6,125.6 191.2,125.6 191.1,125.9 190.8,126.1 189.0,128.6 189.6,128.7 190.0,129.0 190.6,129.3 191.3,129.5 192.2,129.8 192.8,130.5 193.5,130.9 194.1,131.6 194.7,132.3 195.2,133.0 195.4,134.0 195.8,134.7 195.7,135.6 195.8,136.4 195.9,137.3 195.8,138.0 195.6,138.8 195.4,139.6 195.1,140.1 195.2,140.4 195.1,139.1 194.7,139.3 194.6,139.5 194.5,139.8 194.4,140.5 194.4,141.0 194.4,141.9 194.4,142.5 194.2,143.3 193.9,144.2 193.8,145.0 193.2,145.7 192.6,146.4 192.1,147.0 191.5,147.6 190.8,148.1 189.9,148.4 189.1,148.7 188.3,148.9 187.5,149.1 186.6,149.2 186.0,149.9 185.8,150.2 185.3,150.3 185.1,150.6 184.8,150.9 185.1,151.3 185.2,151.5 185.3,152.0 185.9,152.6 186.1,153.3 186.3,153.8 186.7,154.5 186.8,155.5 187.1,156.3 187.3,157.2 187.5,158.1 187.3,159.2 187.0,160.2 186.6,161.2 186.2,162.1 185.4,162.6 186.1,161.2 186.2,162.4 186.5,163.4 186.6,164.3 186.6,165.3 186.6,165.8 186.5,166.6 186.5,166.9 186.5,166.9 186.5,167.1 188.5,161.8 188.6,162.5 188.6,162.9 188.8,163.8 188.7,164.6 188.7,165.9 188.3,166.9 187.9,168.0 187.5,169.3 186.7,170.3 186.0,171.5 184.7,171.8 183.8,172.1 182.6,172.6 181.1,172.3 179.9,171.4 178.9,171.2 178.1,170.9 177.2,170.4 176.3,169.7 175.5,169.1 175.1,168.8 175.1,168.6 175.4,168.2 175.8,168.8 175.9,168.9 176.0,169.6 176.1,170.8 176.3,171.8 176.1,173.1 175.7,174.5 175.2,175.4 174.7,176.8 173.8,177.5 173.7,171.9 174.5,172.7 175.1,173.9 175.5,175.3 175.5,176.4 175.2,177.8 175.0,179.4 174.3,180.4 174.1,181.6 173.5,182.2 172.9,183.1 172.5,183.5 172.2,183.9 172.4,183.6 173.7,178.0 174.0,178.5 174.5,178.9 174.8,179.8 175.2,180.8 175.1,181.9 175.4,183.0 175.0,184.3 175.2,185.4 174.7,186.8 174.3,187.8 173.2,188.6 172.3,189.3 171.5,190.1 170.3,190.1 169.1,190.2 167.7,190.5 166.7,190.2 165.7,190.1 164.5,189.5 163.9,189.1 163.2,188.8 163.0,188.7 162.7,188.6 162.6,188.3 162.7,189.0 162.8,189.4 162.9,189.7 163.2,190.7 163.4,191.5 163.1,192.5 163.1,193.6 162.8,194.8 162.4,195.7 161.9,196.6 161.3,197.3 160.5,198.2 159.4,198.4 158.4,198.7 157.6,199.2 156.6,199.1 155.6,199.0 154.8,199.0 153.8,198.8 155.0,200.6 154.8,201.2 154.7,201.8 154.9,202.0 155.2,202.1 155.5,202.2 156.0,202.2 156.3,202.3 157.1,202.2 158.0,202.3 158.7,202.1 159.7,202.3 160.7,202.5 161.3,203.1 162.0,203.6 162.7,204.2 163.2,207.2 162.6,207.8 161.8,208.3 161.1,208.7 160.4,209.0 159.5,209.2 158.7,209.4 158.0,209.5 157.5,209.6 156.9,209.8 156.3,209.8 155.9,209.9 155.4,210.0 155.2,210.3 155.1,210.7 154.8,210.9 153.6,212.4 154.1,212.7 154.8,213.0 155.4,213.5 156.0,213.9 156.5,214.6 157.0,215.2 157.7,215.7 158.0,216.5 158.4,217.3 158.6,218.2 158.8,219.1 158.7,219.9 158.7,220.8 158.6,221.6 158.4,222.4 158.1,223.0 157.8,223.6 156.9,222.6 156.6,222.8 155.9,222.8 155.9,223.0 155.6,223.0 155.6,223.5 155.5,224.0 155.4,224.5 155.4,225.0 155.4,225.6 155.5,226.6 155.5,227.5 155.3,228.5 155.1,229.3 154.4,230.1 154.0,230.9 153.6,231.5 153.0,232.3 152.2,232.8 151.5,233.5 150.6,233.8 149.7,234.2 148.8,234.5 148.0,234.6 147.0,234.6 146.1,234.6 145.3,234.4 144.7,234.1 144.3,234.0 144.4,234.4 144.2,234.5 144.2,234.8 144.4,235.2 144.7,235.6 143.4,236.7 144.4,237.3 145.6,237.6 146.6,238.6 147.5,239.2 148.2,240.1 148.8,241.3 149.0,242.4 149.2,243.6 148.8,244.7 148.8,246.1 147.9,246.9 147.5,248.0 146.6,249.0 145.6,249.6 144.6,250.3 143.9,250.3 145.6,245.8 145.2,244.9 145.4,245.0 145.5,245.1 145.5,245.8 145.4,246.7 144.9,247.5 144.8,248.5 144.2,249.9 143.2,250.6 142.5,251.7 141.4,252.0 140.2,252.9 139.1,252.7 138.0,253.0 136.8,252.7 135.4,252.6 134.2,251.9 133.3,250.7 132.4,249.5 131.6,248.5 131.2,247.3 131.1,246.5 130.8,245.5 130.9,245.4 127.5,247.7 127.5,247.9 127.8,247.9 128.4,248.3 129.1,248.7 129.8,249.2 130.7,250.2 131.3,251.6 131.7,252.5 132.3,253.6 132.0,254.7 132.1,255.9 131.8,256.9 131.3,257.8 130.8,259.0 130.0,259.6 129.2,260.7 128.3,261.2 127.0,261.7 126.1,262.1 125.1,262.0 124.0,262.2 123.3,262.4 123.2,262.2 122.7,262.3 122.6,262.5 123.0,262.6 123.1,262.7 123.8,263.0 124.3,263.6 124.9,264.5 125.4,265.1 125.9,266.2 126.4,267.1 126.6,268.2 126.8,269.3 127.0,269.6 127.0,270.6 126.6,271.7 126.2,272.7 126.1,273.7 125.3,274.5 124.5,275.0 123.8,276.0 123.1,276.4 122.6,276.9 122.2,277.1 121.5,277.4 121.2,277.7 121.0,277.8 121.0,278.1 121.3,278.3 121.6,278.7 122.2,279.1 122.6,279.8 123.2,280.3 123.7,281.1 124.4,281.7 124.8,282.6 125.3,283.4 125.3,284.5 125.5,285.3 125.6,286.2 125.2,287.0 124.9,287.9 124.7,288.8 124.3,289.4 123.8,290.3 123.4,290.7 123.0,291.3 122.8,290.0 122.4,289.8 122.1,289.8 121.7,290.0 121.5,290.4 121.2,290.4 120.8,290.7 120.5,291.4 120.2,291.7 119.7,292.5 119.3,293.1 118.8,293.8 118.2,294.5 117.6,295.1 116.7,295.5 115.9,295.8 115.1,295.9 114.1,296.0 113.2,295.9 112.2,295.7 111.7,295.5 110.9,295.3 110.3,295.1 109.8,295.0 108.7,295.6 108.2,295.6 107.9,295.8 107.8,296.1 107.7,296.5 107.7,296.8 107.9,297.4 108.1,298.2 108.2,298.9 108.1,300.0 108.2,301.0 108.0,302.0 107.7,302.9 107.3,303.9 106.6,304.6 105.6,305.0 104.7,305.7 103.8,305.9 102.7,306.1 101.9,306.3 100.8,306.2 100.1,306.0 99.7,306.0 99.2,305.9 98.7,305.9 98.5,305.9 98.4,306.2 98.4,306.3 98.6,306.8 98.8,307.3 99.1,308.2 99.3,309.3 99.2,310.3 99.2,311.3 98.5,309.8 99.1,310.7 100.1,311.4 100.4,312.6 100.6,313.9 100.5,315.3 100.0,316.5 99.2,317.7 98.6,318.7 98.0,319.3 97.1,319.9 96.5,320.5 95.6,321.0 95.5,321.2 95.6,321.3 95.3,321.5 95.5,321.2 96.5,321.3 97.1,321.0 98.4,321.1 102.2,323.1 102.0,324.3 101.9,325.7 101.3,326.8 100.2,327.3 99.5,328.2 98.6,329.0 97.2,329.2 95.9,329.5 94.7,329.6 93.4,329.4 92.3,329.1 91.5,328.6 90.4,328.1 89.7,327.3 88.9,326.9 88.1,326.2 87.7,325.4 87.7,324.9 87.8,325.2 87.8,325.4 88.0,325.7 88.5,326.8 88.7,327.4 88.6,329.0 86.1,328.0 87.1,328.5 88.5,329.3 89.2,330.1 90.2,330.9 90.2,332.2 90.8,333.2 90.9,334.6 91.0,335.7 90.9,336.9 90.1,338.2 89.1,339.2 88.4,340.4 87.4,341.0 86.7,341.7 86.2,342.0 86.1,342.1 85.4,342.6 85.5,342.5 85.5,342.6 86.0,342.6 86.6,342.8 86.7,342.9 90.2,342.1 90.5,343.3 90.5,344.3 90.7,345.3 90.4,346.7 90.2,347.8 89.7,349.1 88.8,350.0 87.6,350.5 86.4,350.8 85.2,351.0 84.0,351.1 82.9,350.8 82.1,350.6 81.1,350.1 80.7,350.1 80.2,350.0 79.9,350.1 79.6,350.0 79.6,350.4 79.5,350.6 79.6,351.3 79.5,351.9 79.5,352.7 79.4,353.7 79.4,354.6 79.0,355.4 78.4,356.2 78.1,357.0 77.0,355.1 77.8,355.5 78.4,356.3 78.7,357.3 79.2,358.2 79.4,359.1 79.4,359.9 79.4,360.7 79.2,361.5 79.3,362.3 79.1,362.8 79.2,363.4 79.2,363.9 79.3,364.1 79.4,362.5 79.6,363.0 79.5,363.3 79.6,363.8 79.9,364.5 80.1,365.3 80.3,366.0 80.2,366.8 80.2,367.7 80.2,368.5 80.0,369.3 79.7,370.1 79.1,370.7 78.8,371.5 78.3,372.1 77.7,372.7 77.0,373.3 76.4,373.8 75.8,374.2 76.6,374.7 76.7,375.5 76.9,375.8 77.1,376.4 77.3,376.6 77.4,377.1 77.8,377.3 78.1,377.4 78.7,377.3 79.2,377.4 79.6,377.3 80.4,377.2 81.2,377.0 82.1,377.1 83.1,377.2 83.9,377.2 84.8,377.4 85.6,377.9 86.6,378.3 87.1,379.2 87.8,381.6 87.5,382.6 86.9,383.4 86.2,383.8 85.5,384.5 84.9,385.0 84.5,385.3 83.9,385.7 83.6,386.0 83.6,386.2 83.8,386.5 83.8,386.7 84.2,386.8 84.7,387.3 85.5,387.8 86.4,388.0 87.2,388.9 88.1,389.7 88.7,392.0 88.8,393.1 88.6,394.2 87.9,395.3 87.0,396.2 86.0,396.6 85.3,397.4 84.0,397.7 82.8,397.8 81.5,398.1 80.6,397.8 79.7,397.6 78.8,397.1 78.6,397.0 78.7,397.2 78.6,397.2 79.3,397.7 79.7,398.2 80.1,398.9 80.8,399.7 81.3,401.0 81.9,402.1 82.1,403.6 81.8,404.7 82.0,406.2 81.3,407.1 81.2,404.4 81.5,405.5 81.5,406.8 80.9,408.1 80.7,409.4 79.9,410.9 78.9,411.7 77.9,412.5 77.3,412.8 76.8,413.0 76.8,413.0 76.9,413.1 78.0,409.5 78.4,409.9 79.3,410.4 80.1,411.3 80.9,412.1 81.5,413.6 82.6,414.7 82.6,416.2 83.0,417.5 82.4,418.8 81.8,419.8 81.1,420.7 80.3,421.5 79.4,422.5 78.1,422.8 77.0,423.2 76.0,423.5 74.9,423.8 74.0,423.4 77.3,425.3 77.6,426.4 77.5,426.3 77.6,427.1 77.5,426.9 77.5,426.5 77.6,426.4 78.0,425.5 78.5,425.0 79.0,424.4 79.9,423.2 81.1,422.6 81.9,422.0 82.9,421.4 87.7,425.4 87.6,426.8 86.4,427.3 86.1,428.4 85.1,429.1 83.7,429.4 82.7,429.9 81.6,430.1 80.5,430.2 79.5,430.2 78.7,430.2 78.2,430.1 77.8,430.1 77.6,430.1 77.9,430.4 77.9,430.7 77.1,433.2 77.7,433.2 78.4,433.3 79.0,433.5 80.0,433.7 80.9,434.1 81.7,434.7 82.5,435.2 83.1,435.8 83.8,436.6 84.2,437.3 84.4,438.3 84.8,439.1 85.0,440.1 84.6,441.1 84.5,442.1 84.2,442.9 84.0,443.5 83.7,444.2 83.7,445.1 83.9,445.4 84.0,445.6 83.9,446.1 84.2,446.3 84.7,446.4 85.0,446.6 85.7,446.7 86.4,446.9 86.9,447.1 87.8,447.4 88.6,447.7 89.4,447.9 90.2,448.5 91.2,451.1 90.6,451.7 90.2,452.5 89.6,453.1 88.7,453.5 88.0,453.9 87.2,454.2 86.5,454.5 85.8,454.8 85.3,454.9 84.4,455.1 83.9,455.1 83.7,455.3 83.5,455.5 83.2,455.8 83.2,456.1 83.2,456.8 83.3,457.4 81.7,458.6 82.6,458.5 83.5,458.5 84.3,458.5 85.2,458.8 86.0,458.9 87.0,459.2 87.7,459.8 88.3,460.4 89.0,460.9 89.7,461.5 90.2,462.1 90.5,463.0 90.9,463.8 91.0,464.6 91.1,465.4 90.4,465.9 90.5,466.2 90.5,466.7 90.7,466.8 90.9,467.0 91.2,467.3 91.9,467.1 92.2,467.2 93.0,467.1 93.8,467.1 95.0,467.3 95.9,467.6 96.9,467.7 97.9,468.2 98.9,468.8 99.3,469.8 100.2,470.3 100.7,471.3 100.5,473.0 100.5,474.0 100.4,475.1 100.1,475.9 100.0,477.1 99.5,477.8 97.6,476.1 96.7,475.7 96.1,475.5 96.2,475.5 96.0,475.6 95.9,475.8 95.8,475.6 96.1,476.1 96.6,476.7 96.9,477.8 97.4,478.8 97.6,480.0 97.7,481.3 97.2,482.6 97.0,484.0 96.6,485.2 94.8,486.6 93.5,487.0 92.3,487.2 91.0,487.0 89.6,486.7 88.3,486.1 87.2,485.2 86.4,484.4 85.6,483.5 85.6,483.3 85.2,482.8 85.0,482.2 85.2,482.3 85.4,482.9 85.4,483.4 85.7,484.5 85.8,485.4 85.7,486.4 85.8,487.4 85.6,488.6 85.3,489.7 84.6,491.2 83.4,491.7 82.7,492.9 81.8,493.8 81.2,486.7 82.5,487.3 83.0,488.4 83.9,489.5 84.0,490.9 84.2,492.4 84.5,493.5 84.4,494.4 84.3,495.4 84.1,495.7 84.1,495.8 84.2,496.1 84.2,496.4 84.6,496.1 84.7,495.8 86.6,490.7 87.1,491.3 87.6,492.3 88.5,493.2 89.3,494.5 89.2,495.9 89.8,497.2 89.3,498.3 88.7,499.5 88.1,500.4 87.1,501.2 86.4,502.0 85.5,502.6 84.2,502.8 83.3,503.3 82.5,503.5 81.2,503.6 80.5,503.6 80.1,503.7 79.6,503.6 79.7,503.8 79.8,503.9 80.3,504.3 80.7,504.6 81.1,505.2 81.5,506.0 81.9,506.8 82.6,508.7 82.4,509.7 81.9,510.4 81.5,511.3 80.9,512.1 80.1,512.7 79.6,513.4 78.7,513.9 77.6,513.9 76.7,514.2 75.7,514.4 74.9,514.3 74.2,514.3 73.4,514.4 72.8,514.4 72.3,514.3 71.9,514.4 71.5,514.5 71.3,514.6 70.9,514.8 70.6,515.0 70.7,515.7 70.3,516.1 70.3,516.8 70.4,517.5 70.4,518.3 70.3,519.0 70.1,519.8 70.0,520.8 69.7,521.6 69.1,522.3 68.4,523.0 67.9,523.6 67.2,524.1 66.4,524.6 65.6,524.9 64.8,525.1 64.1,525.2 63.4,525.4 63.0,525.6 62.5,525.8 62.1,526.1 61.6,526.2 61.4,526.4 61.3,526.7 61.0,527.6 61.1,528.1 61.3,528.7 61.4,529.3 61.7,530.1 61.9,530.8 62.2,531.5 62.3,532.4 62.1,533.2 62.0,534.1 61.9,534.9 61.7,535.9 61.2,536.7 60.5,537.3 60.0,537.9 59.3,538.6 58.6,538.9 57.9,539.3 57.2,539.5 56.5,539.7 55.9,539.8 55.6,539.9 55.5,540.2 55.4,540.6 55.4,540.8 55.5,541.1 55.9,541.7 56.1,542.2 56.5,543.1 56.7,543.9 56.8,544.8 57.2,545.7 57.1,546.8 57.1,547.9 56.9,548.9 56.0,549.6 55.5,550.5 55.7,550.7 55.1,551.4 54.3,552.3 53.5,553.0 52.7,553.5 52.0,553.8 50.9,554.3 50.5,554.5 50.2,554.7 50.1,554.9 49.5,555.1 50.1,555.2 50.2,555.2 50.5,555.4 51.6,555.8 52.5,556.0 53.6,556.7 54.7,557.5 55.2,558.8 55.9,559.8 56.5,561.0 56.5,562.1 56.0,563.4 55.8,564.7 55.0,565.7 54.0,566.6 53.3,567.3 52.5,567.9 51.7,568.4 50.5,569.2 49.6,569.4 49.1,569.4 48.2,569.7 47.4,569.6 48.3,567.9 48.4,567.8 48.7,568.2 48.8,568.3 49.2,569.1 49.5,569.4 49.9,570.1 50.7,571.1 51.1,572.5 51.6,573.7 51.3,574.9 51.3,576.1 51.7,577.8 50.8,578.8 49.9,579.5 49.2,580.4 48.0,581.0 46.8,581.3 45.4,581.8 44.1,581.6 45.5,582.4 44.8,583.1 44.0,584.0 43.7,584.4 43.3,584.5 42.7,584.8 43.3,584.5 43.0,584.6 44.2,584.2 44.6,583.8 45.6,583.8 47.0,584.0 48.0,584.0 49.0,584.4 50.3,584.8 51.7,585.1 52.3,586.4 52.4,591.6 51.3,592.1 50.3,592.7 49.1,593.2 47.9,593.3 46.8,593.4 45.8,593.0 44.9,592.7 43.8,592.5 43.2,592.1 42.7,592.0 42.7,591.9 42.0,591.6 44.0,594.5" fill="none" stroke="#000" stroke-width="1" shape-rendering="crispEdges"/>
<polyline points="44.0,594.5 64.5,594.4 84.2,594.4 104.6,594.4 125.0,594.7 145.4,594.8 165.6,594.4 185.7,594.7" fill="none" stroke="#000" stroke-width="1" shape-rendering="crispEdges"/>
<polyline points="184.7,594.5 185.4,596.6 186.1,599.0 184.5,600.0 182.4,600.8 182.1,602.5 183.0,604.6 182.7,606.2 181.4,607.4 179.5,608.4 179.0,609.9 179.9,611.9 180.2,613.5 179.6,614.9 177.3,615.9 176.8,617.3 178.0,619.2 178.7,620.9 177.4,621.8 176.3,623.9 177.0,625.4 179.2,626.2 180.5,627.4 180.1,629.4 179.5,631.4 180.5,632.8 182.6,633.3 183.8,634.5 184.2,636.6 185.0,638.3 187.2,638.5 188.8,639.3 189.6,641.2 188.8,642.9 189.2,644.3 190.8,645.5 191.6,646.9 191.0,648.6 191.0,650.3 192.2,651.4 193.6,652.4 194.5,653.7 194.4,655.4 194.7,657.0 196.0,658.0" fill="none" stroke="#000" stroke-width="1" shape-rendering="crispEdges"/>
<polyline points="222.7,59.8 226.0,54.5 230.0,48.0 236.0,42.0 243.8,39.5 252.0,42.0 261.4,47.5 268.0,51.0 275.4,53.6 280.0,51.0 282.5,45.7 280.0,38.0 277.0,31.6 280.0,26.0 286.0,22.0 296.0,19.0 302.1,17.8 308.8,17.6 309.0,12.0 308.8,6.0" fill="none" stroke="#000" stroke-width="1" shape-rendering="crispEdges"/>
<polyline points="207.0,105.4 212.6,105.6 219.2,104.8 225.6,105.3 232.0,105.8 237.0,104.7 243.9,104.9 250.0,105.9 255.9,104.9 262.6,104.9 269.1,105.8 275.1,105.5 280.5,105.8 286.4,105.6 292.5,104.7 299.8,106.1 306.0,105.2 311.5,105.4 310.4,97.4 309.7,88.8 316.9,90.6 324.7,91.4 331.3,90.9 336.1,91.0 342.6,91.6 348.8,90.9 355.4,90.3 360.2,90.3 366.1,91.4 373.1,91.4 378.5,91.3 384.4,90.7 391.5,90.6 396.3,90.5 402.8,90.5 408.5,90.1 415.0,90.3 421.3,89.9 426.5,91.3 433.0,90.6 439.0,91.2 444.6,91.3 452.0,91.4 458.0,92.2 463.3,91.6 468.8,92.0 476.0,92.8 481.8,91.7 487.9,91.9 493.5,92.9 499.9,93.1 505.7,93.1 512.2,93.8 517.4,93.2 524.2,92.9 530.0,93.8 535.9,93.7 542.8,93.9 548.2,94.8 553.8,94.6 559.8,94.1 567.0,94.3 571.9,94.6 579.2,94.6 585.2,95.0 590.4,95.1 597.2,95.8 602.9,95.3 608.4,95.9 615.6,95.6 620.9,96.2 627.5,95.8 633.4,96.6 639.0,96.9 645.8,97.3 651.5,96.5 657.9,96.9 663.8,96.8 670.0,96.4 676.4,97.0 683.1,96.8 688.6,96.3 694.9,97.2 701.8,97.3 707.8,96.5 712.9,96.8 719.7,96.3 726.3,96.9 731.6,97.1 738.3,97.2 744.0,97.4 750.9,96.5 756.8,96.5 762.8,97.1 769.5,97.1 775.0,96.5 781.5,97.2 787.8,97.4 794.0,97.6 800.0,96.5 806.0,97.0" fill="none" stroke="#000" stroke-width="1" shape-rendering="crispEdges"/>
<polyline points="633.4,96.6 638.9,93.2 645.3,91.0 650.0,88.0 656.6,84.6 662.6,81.6 668.0,79.0 674.3,76.1 680.2,73.8 685.7,71.9 692.0,69.0 699.0,60.0 704.0,54.6 709.0,48.0 714.1,44.6 719.9,41.7 726.1,37.6 731.1,34.0 737.0,31.0 741.6,26.8 747.9,22.0 752.5,17.8 757.6,13.8 750.7,6.0" fill="none" stroke="#000" stroke-width="1" shape-rendering="crispEdges"/>
<polyline points="757.6,13.8 764.5,13.8 766.9,19.8 769.4,25.4 771.0,31.0 778.6,35.3 785.0,41.0 792.4,37.7 799.0,34.9 806.0,32.8" fill="none" stroke="#000" stroke-width="1" shape-rendering="crispEdges"/>
<polyline points="787.2,97.0 783.8,101.4 783.1,107.9 782.0,115.0 773.4,118.6 766.6,125.5 762.2,132.2 758.0,137.6 751.0,136.0 744.0,136.0 735.5,139.3 728.6,144.5 723.4,147.8 718.3,151.4 711.4,146.2 704.5,148.0 695.9,153.0 692.4,163.4 686.0,165.4 680.3,168.6 673.6,174.1 668.0,179.0 661.0,181.3 654.5,184.5 647.0,188.0 639.8,187.9 633.8,188.2 626.1,187.7 619.7,188.0 614.2,193.6 609.0,200.0 609.0,210.0 601.9,212.4 594.0,215.5 592.2,222.4 590.1,230.2 588.6,238.0" fill="none" stroke="#000" stroke-width="1" shape-rendering="crispEdges"/>
<polyline points="144.8,238.5 151.3,239.0 157.4,238.5 163.6,238.6 168.8,238.5 175.0,238.0 182.1,238.6 187.2,237.8 193.4,238.6 201.0,237.8 206.6,238.8 212.9,238.4 219.1,237.7 225.5,238.4 231.5,238.7 237.0,238.7 242.9,238.7 248.9,238.2 255.1,238.0 262.5,238.4 267.6,238.6 274.3,237.8 279.8,237.6 286.5,237.8 292.3,237.7 298.5,238.3 305.0,238.0 310.7,238.6 317.0,237.9 322.8,238.6 328.7,237.7 335.1,238.2 340.8,238.4 347.0,238.4 352.8,238.1 359.7,238.0 365.7,238.1 371.0,238.5 377.7,238.7 382.7,238.4 389.8,238.6 395.3,238.8 400.9,238.2 407.2,238.8 413.6,238.5 419.8,237.7 425.1,238.1 431.5,237.9 437.4,238.0 443.6,238.7 449.2,238.5 455.5,238.2 461.0,237.9 468.2,239.0 473.2,238.8 479.4,238.0 485.5,238.9 491.6,238.0 498.0,238.9 504.5,238.7 510.0,239.0 516.2,239.1 522.1,237.9 528.4,239.3 534.4,238.0 540.0,238.6 545.5,238.8 552.6,238.9 557.7,238.3 563.7,238.6 570.5,238.1 576.5,238.1 581.9,237.8 588.6,238.0 594.9,237.8 601.3,238.4 606.4,237.6 613.2,238.4 618.2,237.7 625.3,237.6 630.9,238.2 636.7,238.2 643.4,238.6 648.5,238.5 655.3,238.8 661.0,238.5 667.2,238.8 672.7,237.9 679.3,238.2" fill="none" stroke="#000" stroke-width="1" shape-rendering="crispEdges"/>
<polyline points="305.0,238.0 304.9,245.2 304.6,251.8 304.8,258.6 304.2,265.1 304.4,270.7 304.3,278.1 303.6,284.6 303.5,290.2 302.6,296.1 302.3,303.0 300.4,309.2 300.9,315.6 299.7,320.7 298.7,327.6 297.9,333.1 298.4,339.4 296.6,345.6 296.6,351.9 295.4,358.1 295.5,363.0 295.1,370.1 293.4,375.1 292.6,382.0 292.2,387.6 292.2,393.6 291.3,400.0 290.7,406.0 290.9,412.9 289.4,419.2 288.8,424.6 287.9,431.1 287.8,436.7 288.0,442.9 286.7,449.2 286.8,455.7 285.2,461.7 285.3,467.4 285.4,474.6 283.6,480.2 284.0,486.1 283.5,493.1 282.2,499.7 281.3,504.8 280.8,511.3 280.4,517.2 279.8,523.4 279.8,530.0 280.6,535.7 279.7,542.0 281.2,548.2 280.1,554.2 280.5,560.4 281.0,566.6 280.8,573.5 282.1,579.7 281.3,585.7 281.5,592.3 282.4,598.1 282.5,603.9 283.2,610.8 283.5,617.6 283.5,622.5 283.3,629.7 283.2,635.9 284.4,641.8 284.0,648.0" fill="none" stroke="#000" stroke-width="1" shape-rendering="crispEdges"/>
<polyline points="498.0,238.6 498.4,245.5 498.8,252.3 499.6,258.9 500.4,265.9 500.7,273.4 501.0,280.0 501.7,286.4 503.5,291.6 504.1,297.7 505.4,304.4 505.8,310.1 507.2,315.5 507.5,321.6 508.5,328.2 509.4,333.5 510.3,339.6 512.0,346.1 513.0,351.4 514.0,358.1 515.1,363.4 515.4,369.5 516.4,374.8 517.7,380.8 518.6,387.6 519.9,393.8 520.3,399.7 522.0,404.6 522.5,411.7 523.5,416.5 524.5,423.5 525.5,429.0 527.3,435.1 529.7,440.8 532.9,445.7 535.2,451.6 537.3,457.4 539.0,463.4 539.4,470.9 539.9,477.1 540.0,484.0 536.0,489.5 533.0,495.4 530.0,501.0 530.1,507.0 529.7,514.1 529.7,520.3 529.9,526.5 528.8,533.1 529.7,539.7 528.8,546.1 529.7,552.7 529.7,558.0 529.0,565.0 531.2,572.9 532.3,580.1 534.8,587.0 536.0,594.0 538.1,600.6 539.5,607.1 541.6,612.1 544.0,619.0" fill="none" stroke="#000" stroke-width="1" shape-rendering="crispEdges"/>
<polyline points="342.8,594.0 348.8,593.8 355.3,594.2 360.4,594.0 367.2,594.1 372.6,594.1 378.5,593.8 385.6,594.6 390.8,593.6 396.6,593.6 403.3,593.9 409.0,593.3 415.3,593.9 420.9,593.7 427.0,593.4 433.0,594.2 439.1,594.6 445.3,594.6 451.1,594.6 457.1,593.5 463.2,593.7 470.1,594.1 475.5,593.6 481.1,594.4 487.3,593.5 493.9,594.3 499.4,593.9 506.2,593.4 512.1,593.7 517.8,594.0 523.9,594.6 529.4,593.3 536.0,594.0" fill="none" stroke="#000" stroke-width="1" shape-rendering="crispEdges"/>
<polyline points="342.8,594.0 341.4,600.1 341.0,606.0 345.8,610.6 351.4,615.5 356.6,620.0 358.0,627.9 360.0,637.0 356.6,647.6" fill="none" stroke="#000" stroke-width="1" shape-rendering="crispEdges"/>
<polyline points="544.0,619.0 550.3,619.7 556.1,619.5 562.6,619.6 568.6,620.0 575.1,621.1 580.2,621.7 586.5,620.9 592.7,622.2 598.6,622.7 605.1,622.6 611.2,622.9 617.6,623.1 623.2,623.3 629.3,623.6 636.2,624.1 642.4,625.1 647.9,625.7 653.7,625.3 660.2,625.1 665.8,626.8 672.3,627.1 679.0,627.5 684.7,627.2 690.2,627.2 696.5,627.8 703.7,627.9 709.1,628.9 715.5,628.9 721.3,629.3 727.1,629.2 734.0,629.6 739.3,631.0 746.0,630.7 744.8,632.7 743.4,639.2 743.2,645.5 749.9,647.3 756.0,650.3 758.2,643.6 759.2,636.0 758.9,629.7 758.2,622.5 757.6,616.7 765.6,610.3 772.2,610.8 778.4,610.3 788.0,616.7" fill="none" stroke="#000" stroke-width="1" shape-rendering="crispEdges"/>
<polyline points="679.3,238.2 685.4,236.6 691.1,234.3 696.7,232.3 702.9,230.8 710.8,226.9 717.6,225.5 724.2,223.7 730.0,222.0 735.6,221.4 742.4,220.7 748.9,220.2 754.2,221.0 760.4,221.6 767.5,221.8 773.3,222.3 778.7,222.2 786.0,221.8 791.2,222.1 798.0,222.7 803.8,222.0 810.0,222.8" fill="none" stroke="#000" stroke-width="1" shape-rendering="crispEdges"/>
<polyline points="679.3,238.2 678.3,243.6 669.4,249.6 663.5,254.5 660.5,263.3 664.5,268.3 674.3,274.2 678.6,279.4 684.2,284.0 694.0,284.0 698.3,291.1 702.0,298.8 704.5,305.4 706.0,311.7 710.5,316.8 714.5,322.2 718.4,327.3 723.0,332.0 728.3,336.2 733.9,340.5 739.0,344.9 743.8,349.7 748.8,356.8 754.0,363.4 759.1,368.2 763.8,372.6 768.0,377.0 768.0,387.6 772.6,392.4 778.0,398.0 784.5,402.1 790.0,407.4 795.5,411.7 798.2,418.9 800.5,425.0 802.0,432.4 806.7,439.7 810.0,446.0" fill="none" stroke="#000" stroke-width="1" shape-rendering="crispEdges"/>
<polyline points="6.0,415.5 12.2,415.1 18.2,414.9 23.4,415.7 29.9,415.6 35.5,415.9 41.5,415.9 48.4,415.3 54.9,415.5 60.9,415.6 65.8,415.4 72.9,415.1 78.4,415.5" fill="none" stroke="#000" stroke-width="1" shape-rendering="crispEdges"/>
<circle cx="406.5" cy="406.5" r="519" fill="none" stroke="#c8c8c8" stroke-width="1" shape-rendering="crispEdges"/>
<circle cx="406.5" cy="406.5" r="399.5" fill="none" stroke="#c8c8c8" stroke-width="1" shape-rendering="crispEdges"/>
<circle cx="406.5" cy="406.5" r="279" fill="none" stroke="#c8c8c8" stroke-width="1" shape-rendering="crispEdges"/>
<circle cx="406.5" cy="406.5" r="159.3" fill="none" stroke="#c8c8c8" stroke-width="1" shape-rendering="crispEdges"/>
<circle cx="406.5" cy="406.5" r="39.6" fill="none" stroke="#e81010" stroke-width="1.2"/>
<rect x="395.0" y="5.5" width="23" height="3" fill="#5c504c"/>
<text x="406.5" y="11.0" font-size="10.5" font-weight="400" fill="#f4f0b0" text-anchor="middle" textLength="20.0" lengthAdjust="spacingAndGlyphs">313</text>
<rect x="395.0" y="126.0" width="23" height="3" fill="#5c504c"/>
<text x="406.5" y="131.0" font-size="10.5" font-weight="400" fill="#f4f0b0" text-anchor="middle" textLength="20.0" lengthAdjust="spacingAndGlyphs">219</text>
<rect x="394.5" y="246.0" width="24" height="3" fill="#5c504c"/>
<text x="406.5" y="251.0" font-size="10.5" font-weight="400" fill="#f4f0b0" text-anchor="middle" textLength="21.0" lengthAdjust="spacingAndGlyphs">125</text>
<rect x="399.0" y="365.5" width="15" height="3" fill="#5c504c"/>
<text x="406.5" y="371.0" font-size="10.5" font-weight="400" fill="#f4f0b0" text-anchor="middle" textLength="12.0" lengthAdjust="spacingAndGlyphs">31</text>
<polygon points="301.5,184 322.5,205 301.5,226 280.5,205" fill="none" stroke="#00e000" stroke-width="1.2" stroke-dasharray="4.5,3.5"/>
<polygon points="131,587.5 151,607.5 131,627.5 111,607.5" fill="none" stroke="#00e000" stroke-width="1.2" stroke-dasharray="4.5,3.5"/>
<polygon points="250.5,601.0 270.0,620.5 250.5,640.0 231.0,620.5" fill="none" stroke="#00e000" stroke-width="1.2" stroke-dasharray="4.5,3.5"/>
<line x1="242" y1="145.5" x2="287" y2="189.8" stroke="#d8d8d8" stroke-width="1"/>
<line x1="72.4" y1="548.4" x2="117.2" y2="593.3" stroke="#d8d8d8" stroke-width="1"/>
<line x1="190.8" y1="562.3" x2="235.4" y2="605.7" stroke="#d8d8d8" stroke-width="1"/>
<circle cx="37.5" cy="41.5" r="4.1" fill="none" stroke="#e86400" stroke-width="1"/><path d="M35.0,41.5H40.0" stroke="#e86400" stroke-width="1"/><path d="M37.5,39.0V44.0" stroke="#e86400" stroke-width="1"/>
<circle cx="96.5" cy="10.5" r="4.1" fill="none" stroke="#f0a400" stroke-width="1"/><path d="M94.0,10.5H99.0" stroke="#f0a400" stroke-width="1"/>
<circle cx="134.5" cy="39.5" r="4.1" fill="none" stroke="#f0a400" stroke-width="1"/><path d="M132.0,39.5H137.0" stroke="#f0a400" stroke-width="1"/>
<circle cx="162.5" cy="28.5" r="4.1" fill="none" stroke="#f8c800" stroke-width="1"/><path d="M160.0,28.5H165.0" stroke="#f8c800" stroke-width="1"/><path d="M162.5,26.0V31.0" stroke="#f8c800" stroke-width="1"/>
<circle cx="157.5" cy="35.5" r="4.1" fill="none" stroke="#f8c800" stroke-width="1"/><path d="M155.0,35.5H160.0" stroke="#f8c800" stroke-width="1"/>
<rect x="151.0" y="44" width="7" height="1.3" fill="#f0a400"/>
<circle cx="135.5" cy="60.5" r="4.1" fill="none" stroke="#ffff00" stroke-width="1"/><path d="M133.0,60.5H138.0" stroke="#ffff00" stroke-width="1"/><path d="M135.5,58.0V63.0" stroke="#ffff00" stroke-width="1"/>
<rect x="140.0" y="79" width="7" height="1.3" fill="#ffff00"/>
<circle cx="74.5" cy="124.5" r="4.1" fill="none" stroke="#f0a400" stroke-width="1"/><path d="M72.0,124.5H77.0" stroke="#f0a400" stroke-width="1"/>
<circle cx="221.5" cy="48.5" r="4.1" fill="none" stroke="#e86400" stroke-width="1"/><path d="M219.0,48.5H224.0" stroke="#e86400" stroke-width="1"/><path d="M221.5,46.0V51.0" stroke="#e86400" stroke-width="1"/>
<rect x="233.0" y="42" width="7" height="1.3" fill="#e86400"/>
<path d="M224.0,62.5H231.0M227.5,59.0V66.0" stroke="#f8c800" stroke-width="1"/>
<circle cx="207.5" cy="70.5" r="4.1" fill="none" stroke="#f8c800" stroke-width="1"/><path d="M205.0,70.5H210.0" stroke="#f8c800" stroke-width="1"/><path d="M207.5,68.0V73.0" stroke="#f8c800" stroke-width="1"/>
<circle cx="183.5" cy="76.5" r="4.1" fill="none" stroke="#f0a400" stroke-width="1"/><path d="M181.0,76.5H186.0" stroke="#f0a400" stroke-width="1"/>
<circle cx="225.5" cy="90.5" r="4.1" fill="none" stroke="#f8c800" stroke-width="1"/><path d="M223.0,90.5H228.0" stroke="#f8c800" stroke-width="1"/><path d="M225.5,88.0V93.0" stroke="#f8c800" stroke-width="1"/>
<rect x="243.0" y="84" width="7" height="1.3" fill="#f0a400"/>
<rect x="239.0" y="98" width="7" height="1.3" fill="#f0a400"/>
<circle cx="192.5" cy="115.5" r="4.1" fill="none" stroke="#f8c800" stroke-width="1"/><path d="M190.0,115.5H195.0" stroke="#f8c800" stroke-width="1"/>
<circle cx="183.5" cy="121.5" r="4.1" fill="none" stroke="#e86400" stroke-width="1"/><path d="M181.0,121.5H186.0" stroke="#e86400" stroke-width="1"/>
<circle cx="213.5" cy="114.5" r="4.1" fill="none" stroke="#f0a400" stroke-width="1"/><path d="M211.0,114.5H216.0" stroke="#f0a400" stroke-width="1"/>
<circle cx="17.5" cy="154.5" r="4.1" fill="none" stroke="#f0a400" stroke-width="1"/><path d="M15.0,154.5H20.0" stroke="#f0a400" stroke-width="1"/>
<path d="M37.0,164.5H44.0M40.5,161.0V168.0" stroke="#f08400" stroke-width="1"/>
<circle cx="154.5" cy="140.5" r="4.1" fill="none" stroke="#f8c800" stroke-width="1"/><path d="M152.0,140.5H157.0" stroke="#f8c800" stroke-width="1"/>
<circle cx="162.5" cy="146.5" r="4.1" fill="none" stroke="#f8c800" stroke-width="1"/><path d="M160.0,146.5H165.0" stroke="#f8c800" stroke-width="1"/>
<circle cx="128.5" cy="160.5" r="4.1" fill="none" stroke="#f8c800" stroke-width="1"/><path d="M126.0,160.5H131.0" stroke="#f8c800" stroke-width="1"/>
<circle cx="135.5" cy="157.5" r="4.1" fill="none" stroke="#f8c800" stroke-width="1"/><path d="M133.0,157.5H138.0" stroke="#f8c800" stroke-width="1"/><path d="M135.5,155.0V160.0" stroke="#f8c800" stroke-width="1"/>
<circle cx="131.5" cy="167.5" r="4.1" fill="none" stroke="#f8c800" stroke-width="1"/><path d="M129.0,167.5H134.0" stroke="#f8c800" stroke-width="1"/>
<circle cx="106.5" cy="206.5" r="4.1" fill="none" stroke="#f4ec00" stroke-width="1"/><path d="M104.0,206.5H109.0" stroke="#f4ec00" stroke-width="1"/>
<circle cx="66.5" cy="210.5" r="4.1" fill="none" stroke="#f0a400" stroke-width="1"/><path d="M64.0,210.5H69.0" stroke="#f0a400" stroke-width="1"/><path d="M66.5,208.0V213.0" stroke="#f0a400" stroke-width="1"/>
<path d="M34.0,219.5H41.0M37.5,216.0V223.0" stroke="#f0a400" stroke-width="1"/>
<path d="M65.0,230.5H72.0M68.5,227.0V234.0" stroke="#f08400" stroke-width="1"/>
<circle cx="56.5" cy="251.5" r="4.1" fill="none" stroke="#f0a400" stroke-width="1"/><path d="M54.0,251.5H59.0" stroke="#f0a400" stroke-width="1"/>
<rect x="17.0" y="258" width="7" height="1.3" fill="#f08400"/>
<circle cx="154.5" cy="225.5" r="4.1" fill="none" stroke="#f4ec00" stroke-width="1"/><path d="M152.0,225.5H157.0" stroke="#f4ec00" stroke-width="1"/>
<circle cx="151.5" cy="234.5" r="4.1" fill="none" stroke="#f8c800" stroke-width="1"/><path d="M149.0,234.5H154.0" stroke="#f8c800" stroke-width="1"/><path d="M151.5,232.0V237.0" stroke="#f8c800" stroke-width="1"/>
<rect x="131.0" y="261" width="7" height="1.3" fill="#e86400"/>
<circle cx="191.5" cy="160.5" r="4.1" fill="none" stroke="#f0a400" stroke-width="1"/><path d="M189.0,160.5H194.0" stroke="#f0a400" stroke-width="1"/>
<circle cx="263.5" cy="172.5" r="4.1" fill="none" stroke="#e86400" stroke-width="1"/><path d="M261.0,172.5H266.0" stroke="#e86400" stroke-width="1"/>
<circle cx="253.5" cy="178.5" r="4.1" fill="none" stroke="#e86400" stroke-width="1"/><path d="M251.0,178.5H256.0" stroke="#e86400" stroke-width="1"/>
<circle cx="259.5" cy="180.5" r="4.1" fill="none" stroke="#f0a400" stroke-width="1"/><path d="M257.0,180.5H262.0" stroke="#f0a400" stroke-width="1"/>
<circle cx="270.5" cy="198.5" r="4.1" fill="none" stroke="#f8c800" stroke-width="1"/><path d="M268.0,198.5H273.0" stroke="#f8c800" stroke-width="1"/>
<path d="M267.0,192.5H274.0M270.5,189.0V196.0" stroke="#f8c800" stroke-width="1"/>
<path d="M243.0,201.5H250.0M246.5,198.0V205.0" stroke="#f8c800" stroke-width="1"/>
<circle cx="268.5" cy="212.5" r="4.1" fill="none" stroke="#f0a400" stroke-width="1"/><path d="M266.0,212.5H271.0" stroke="#f0a400" stroke-width="1"/>
<path d="M251.0,216.5H258.0M254.5,213.0V220.0" stroke="#f8c800" stroke-width="1"/>
<circle cx="267.5" cy="223.5" r="4.1" fill="none" stroke="#f8c800" stroke-width="1"/><path d="M265.0,223.5H270.0" stroke="#f8c800" stroke-width="1"/>
<path d="M273.0,222.5H280.0M276.5,219.0V226.0" stroke="#f8c800" stroke-width="1"/>
<circle cx="281.5" cy="220.5" r="4.1" fill="none" stroke="#f8c800" stroke-width="1"/><path d="M279.0,220.5H284.0" stroke="#f8c800" stroke-width="1"/>
<circle cx="280.5" cy="229.5" r="4.1" fill="none" stroke="#f8c800" stroke-width="1"/><path d="M278.0,229.5H283.0" stroke="#f8c800" stroke-width="1"/>
<circle cx="192.5" cy="220.5" r="4.1" fill="none" stroke="#e86400" stroke-width="1"/><path d="M190.0,220.5H195.0" stroke="#e86400" stroke-width="1"/>
<circle cx="303.5" cy="208.5" r="4.1" fill="none" stroke="#f4ec00" stroke-width="1"/><path d="M301.0,208.5H306.0" stroke="#f4ec00" stroke-width="1"/>
<path d="M301.0,215.5H308.0M304.5,212.0V219.0" stroke="#f8c800" stroke-width="1"/>
<circle cx="311.5" cy="214.5" r="4.1" fill="none" stroke="#00f0f0" stroke-width="1"/><path d="M309.0,214.5H314.0" stroke="#00f0f0" stroke-width="1"/><path d="M311.5,212.0V217.0" stroke="#00f0f0" stroke-width="1"/>
<rect x="289.0" y="215" width="7" height="1.3" fill="#f4ec00"/>
<circle cx="290.5" cy="221.5" r="4.1" fill="none" stroke="#f8c800" stroke-width="1"/><path d="M288.0,221.5H293.0" stroke="#f8c800" stroke-width="1"/>
<circle cx="338.5" cy="235.5" r="4.1" fill="none" stroke="#f4ec00" stroke-width="1"/><path d="M336.0,235.5H341.0" stroke="#f4ec00" stroke-width="1"/>
<path d="M323.0,243.5H330.0M326.5,240.0V247.0" stroke="#f4ec00" stroke-width="1"/>
<circle cx="280.5" cy="253.5" r="4.1" fill="none" stroke="#f8c800" stroke-width="1"/><path d="M278.0,253.5H283.0" stroke="#f8c800" stroke-width="1"/><path d="M280.5,251.0V256.0" stroke="#f8c800" stroke-width="1"/>
<circle cx="334.5" cy="255.5" r="4.1" fill="none" stroke="#f8c800" stroke-width="1"/><path d="M332.0,255.5H337.0" stroke="#f8c800" stroke-width="1"/><path d="M334.5,253.0V258.0" stroke="#f8c800" stroke-width="1"/>
<path d="M321.0,267.5H328.0M324.5,264.0V271.0" stroke="#f8c800" stroke-width="1"/>
<circle cx="306.5" cy="263.5" r="4.1" fill="none" stroke="#f8c800" stroke-width="1"/><path d="M304.0,263.5H309.0" stroke="#f8c800" stroke-width="1"/><path d="M306.5,261.0V266.0" stroke="#f8c800" stroke-width="1"/>
<circle cx="311.5" cy="260.5" r="4.1" fill="none" stroke="#f4ec00" stroke-width="1"/><path d="M309.0,260.5H314.0" stroke="#f4ec00" stroke-width="1"/><path d="M311.5,258.0V263.0" stroke="#f4ec00" stroke-width="1"/>
<rect x="289.0" y="246" width="7" height="1.3" fill="#f8c800"/>
<rect x="293.0" y="249" width="7" height="1.3" fill="#f4ec00"/>
<circle cx="203.5" cy="266.5" r="4.1" fill="none" stroke="#f0a400" stroke-width="1"/><path d="M201.0,266.5H206.0" stroke="#f0a400" stroke-width="1"/>
<circle cx="119.5" cy="282.5" r="4.1" fill="none" stroke="#f0a400" stroke-width="1"/><path d="M117.0,282.5H122.0" stroke="#f0a400" stroke-width="1"/>
<circle cx="51.5" cy="294.5" r="4.1" fill="none" stroke="#f0a400" stroke-width="1"/><path d="M49.0,294.5H54.0" stroke="#f0a400" stroke-width="1"/><path d="M51.5,292.0V297.0" stroke="#f0a400" stroke-width="1"/>
<circle cx="79.5" cy="310.5" r="4.1" fill="none" stroke="#e86400" stroke-width="1"/><path d="M77.0,310.5H82.0" stroke="#e86400" stroke-width="1"/>
<circle cx="68.5" cy="376.5" r="4.1" fill="none" stroke="#f0a400" stroke-width="1"/><path d="M66.0,376.5H71.0" stroke="#f0a400" stroke-width="1"/>
<circle cx="163.5" cy="370.5" r="4.1" fill="none" stroke="#f0a400" stroke-width="1"/><path d="M161.0,370.5H166.0" stroke="#f0a400" stroke-width="1"/><path d="M163.5,368.0V373.0" stroke="#f0a400" stroke-width="1"/>
<circle cx="172.5" cy="365.5" r="4.1" fill="none" stroke="#f8c800" stroke-width="1"/><path d="M170.0,365.5H175.0" stroke="#f8c800" stroke-width="1"/>
<rect x="191.0" y="271" width="7" height="1.3" fill="#f8c800"/>
<path d="M227.0,274.5H234.0M230.5,271.0V278.0" stroke="#f0a400" stroke-width="1"/>
<rect x="218.0" y="302" width="7" height="1.3" fill="#f4ec00"/>
<path d="M226.0,329.5H233.0M229.5,326.0V333.0" stroke="#f0a400" stroke-width="1"/>
<rect x="212.0" y="344" width="7" height="1.3" fill="#f0a400"/>
<circle cx="361.5" cy="332.5" r="4.1" fill="none" stroke="#f0a400" stroke-width="1"/><path d="M359.0,332.5H364.0" stroke="#f0a400" stroke-width="1"/>
<path d="M299.0,366.5H306.0M302.5,363.0V370.0" stroke="#f0a400" stroke-width="1"/>
<rect x="299.0" y="387" width="7" height="1.3" fill="#f0a400"/>
<path d="M146.0,406.5H153.0M149.5,403.0V410.0" stroke="#f0a400" stroke-width="1"/>
<circle cx="125.5" cy="449.5" r="4.1" fill="none" stroke="#f8c800" stroke-width="1"/><path d="M123.0,449.5H128.0" stroke="#f8c800" stroke-width="1"/><path d="M125.5,447.0V452.0" stroke="#f8c800" stroke-width="1"/>
<path d="M174.0,452.5H181.0M177.5,449.0V456.0" stroke="#f8c800" stroke-width="1"/>
<path d="M159.0,464.5H166.0M162.5,461.0V468.0" stroke="#f8c800" stroke-width="1"/>
<rect x="162.0" y="474" width="7" height="1.3" fill="#f8c800"/>
<path d="M61.0,470.5H68.0M64.5,467.0V474.0" stroke="#f8c800" stroke-width="1"/>
<path d="M101.0,476.5H108.0M104.5,473.0V480.0" stroke="#f8c800" stroke-width="1"/>
<rect x="91.0" y="483" width="7" height="1.3" fill="#f0a400"/>
<path d="M120.0,478.5H127.0M123.5,475.0V482.0" stroke="#f8c800" stroke-width="1"/>
<circle cx="133.5" cy="480.5" r="4.1" fill="none" stroke="#f4ec00" stroke-width="1"/><path d="M131.0,480.5H136.0" stroke="#f4ec00" stroke-width="1"/>
<circle cx="132.5" cy="483.5" r="4.1" fill="none" stroke="#f8c800" stroke-width="1"/><path d="M130.0,483.5H135.0" stroke="#f8c800" stroke-width="1"/>
<circle cx="142.5" cy="480.5" r="4.1" fill="none" stroke="#e86400" stroke-width="1"/><path d="M140.0,480.5H145.0" stroke="#e86400" stroke-width="1"/>
<circle cx="125.5" cy="496.5" r="4.1" fill="none" stroke="#f8c800" stroke-width="1"/><path d="M123.0,496.5H128.0" stroke="#f8c800" stroke-width="1"/>
<circle cx="138.5" cy="501.5" r="4.1" fill="none" stroke="#f0a400" stroke-width="1"/><path d="M136.0,501.5H141.0" stroke="#f0a400" stroke-width="1"/>
<circle cx="147.5" cy="504.5" r="4.1" fill="none" stroke="#f0a400" stroke-width="1"/><path d="M145.0,504.5H150.0" stroke="#f0a400" stroke-width="1"/>
<circle cx="61.5" cy="504.5" r="4.1" fill="none" stroke="#f8c800" stroke-width="1"/><path d="M59.0,504.5H64.0" stroke="#f8c800" stroke-width="1"/>
<path d="M59.0,513.5H66.0M62.5,510.0V517.0" stroke="#f8c800" stroke-width="1"/>
<circle cx="90.5" cy="513.5" r="4.1" fill="none" stroke="#f0a400" stroke-width="1"/><path d="M88.0,513.5H93.0" stroke="#f0a400" stroke-width="1"/>
<circle cx="116.5" cy="512.5" r="4.1" fill="none" stroke="#f4ec00" stroke-width="1"/><path d="M114.0,512.5H119.0" stroke="#f4ec00" stroke-width="1"/>
<path d="M113.0,516.5H120.0M116.5,513.0V520.0" stroke="#f4ec00" stroke-width="1"/>
<rect x="131.0" y="512" width="7" height="1.3" fill="#f8c800"/>
<path d="M137.0,516.5H144.0M140.5,513.0V520.0" stroke="#f8c800" stroke-width="1"/>
<path d="M38.0,518.5H45.0M41.5,515.0V522.0" stroke="#f8c800" stroke-width="1"/>
<path d="M56.0,518.5H63.0M59.5,515.0V522.0" stroke="#f0a400" stroke-width="1"/>
<circle cx="71.5" cy="520.5" r="4.1" fill="none" stroke="#f08400" stroke-width="1"/><path d="M69.0,520.5H74.0" stroke="#f08400" stroke-width="1"/><path d="M71.5,518.0V523.0" stroke="#f08400" stroke-width="1"/>
<path d="M75.0,524.5H82.0M78.5,521.0V528.0" stroke="#f8c800" stroke-width="1"/>
<circle cx="114.5" cy="526.5" r="4.1" fill="none" stroke="#f0a400" stroke-width="1"/><path d="M112.0,526.5H117.0" stroke="#f0a400" stroke-width="1"/>
<circle cx="122.5" cy="526.5" r="4.1" fill="none" stroke="#f4ec00" stroke-width="1"/><path d="M120.0,526.5H125.0" stroke="#f4ec00" stroke-width="1"/>
<circle cx="79.5" cy="528.5" r="4.1" fill="none" stroke="#f0a400" stroke-width="1"/><path d="M77.0,528.5H82.0" stroke="#f0a400" stroke-width="1"/>
<path d="M304.0,473.5H311.0M307.5,470.0V477.0" stroke="#f8c800" stroke-width="1"/>
<path d="M267.0,499.5H274.0M270.5,496.0V503.0" stroke="#f0a400" stroke-width="1"/>
<circle cx="213.5" cy="505.5" r="4.1" fill="none" stroke="#f0a400" stroke-width="1"/><path d="M211.0,505.5H216.0" stroke="#f0a400" stroke-width="1"/>
<circle cx="250.5" cy="512.5" r="4.1" fill="none" stroke="#f8c800" stroke-width="1"/><path d="M248.0,512.5H253.0" stroke="#f8c800" stroke-width="1"/>
<rect x="27.0" y="529" width="7" height="1.3" fill="#f0a400"/>
<circle cx="44.5" cy="532.5" r="4.1" fill="none" stroke="#e86400" stroke-width="1"/><path d="M42.0,532.5H47.0" stroke="#e86400" stroke-width="1"/>
<circle cx="62.5" cy="528.5" r="4.1" fill="none" stroke="#f8c800" stroke-width="1"/><path d="M60.0,528.5H65.0" stroke="#f8c800" stroke-width="1"/>
<rect x="138.0" y="537" width="7" height="1.3" fill="#f08400"/>
<path d="M146.0,541.5H153.0M149.5,538.0V545.0" stroke="#f0a400" stroke-width="1"/>
<circle cx="136.5" cy="544.5" r="4.1" fill="none" stroke="#f8c800" stroke-width="1"/><path d="M134.0,544.5H139.0" stroke="#f8c800" stroke-width="1"/><path d="M136.5,542.0V547.0" stroke="#f8c800" stroke-width="1"/>
<circle cx="119.5" cy="536.5" r="4.1" fill="none" stroke="#f8c800" stroke-width="1"/><path d="M117.0,536.5H122.0" stroke="#f8c800" stroke-width="1"/>
<circle cx="64.5" cy="556.5" r="4.1" fill="none" stroke="#f08400" stroke-width="1"/><path d="M62.0,556.5H67.0" stroke="#f08400" stroke-width="1"/>
<circle cx="52.5" cy="558.5" r="4.1" fill="none" stroke="#e86400" stroke-width="1"/><path d="M50.0,558.5H55.0" stroke="#e86400" stroke-width="1"/>
<path d="M60.0,567.5H67.0M63.5,564.0V571.0" stroke="#f0a400" stroke-width="1"/>
<circle cx="88.5" cy="553.5" r="4.1" fill="none" stroke="#f8c800" stroke-width="1"/><path d="M86.0,553.5H91.0" stroke="#f8c800" stroke-width="1"/><path d="M88.5,551.0V556.0" stroke="#f8c800" stroke-width="1"/>
<circle cx="107.5" cy="562.5" r="4.1" fill="none" stroke="#f8c800" stroke-width="1"/><path d="M105.0,562.5H110.0" stroke="#f8c800" stroke-width="1"/>
<circle cx="157.5" cy="561.5" r="4.1" fill="none" stroke="#f0a400" stroke-width="1"/><path d="M155.0,561.5H160.0" stroke="#f0a400" stroke-width="1"/>
<circle cx="155.5" cy="573.5" r="4.1" fill="none" stroke="#f0a400" stroke-width="1"/><path d="M153.0,573.5H158.0" stroke="#f0a400" stroke-width="1"/>
<path d="M145.0,576.5H152.0M148.5,573.0V580.0" stroke="#f8c800" stroke-width="1"/>
<circle cx="35.5" cy="579.5" r="4.1" fill="none" stroke="#f0a400" stroke-width="1"/><path d="M33.0,579.5H38.0" stroke="#f0a400" stroke-width="1"/>
<circle cx="96.5" cy="575.5" r="4.1" fill="none" stroke="#f8c800" stroke-width="1"/><path d="M94.0,575.5H99.0" stroke="#f8c800" stroke-width="1"/><path d="M96.5,573.0V578.0" stroke="#f8c800" stroke-width="1"/>
<circle cx="102.5" cy="587.5" r="4.1" fill="none" stroke="#f0a400" stroke-width="1"/><path d="M100.0,587.5H105.0" stroke="#f0a400" stroke-width="1"/><path d="M102.5,585.0V590.0" stroke="#f0a400" stroke-width="1"/>
<path d="M107.0,591.5H114.0M110.5,588.0V595.0" stroke="#f8c800" stroke-width="1"/>
<circle cx="71.5" cy="591.5" r="4.1" fill="none" stroke="#f08400" stroke-width="1"/><path d="M69.0,591.5H74.0" stroke="#f08400" stroke-width="1"/><path d="M71.5,589.0V594.0" stroke="#f08400" stroke-width="1"/>
<circle cx="112.5" cy="598.5" r="4.1" fill="none" stroke="#f8c800" stroke-width="1"/><path d="M110.0,598.5H115.0" stroke="#f8c800" stroke-width="1"/><path d="M112.5,596.0V601.0" stroke="#f8c800" stroke-width="1"/>
<rect x="107.0" y="604" width="7" height="1.3" fill="#f0a400"/>
<circle cx="65.5" cy="608.5" r="4.1" fill="none" stroke="#f08400" stroke-width="1"/><path d="M63.0,608.5H68.0" stroke="#f08400" stroke-width="1"/>
<circle cx="81.5" cy="613.5" r="4.1" fill="none" stroke="#f08400" stroke-width="1"/><path d="M79.0,613.5H84.0" stroke="#f08400" stroke-width="1"/>
<circle cx="131.5" cy="604.5" r="4.1" fill="none" stroke="#f0a400" stroke-width="1"/><path d="M129.0,604.5H134.0" stroke="#f0a400" stroke-width="1"/><path d="M131.5,602.0V607.0" stroke="#f0a400" stroke-width="1"/>
<circle cx="113.5" cy="613.5" r="4.1" fill="none" stroke="#f8c800" stroke-width="1"/><path d="M111.0,613.5H116.0" stroke="#f8c800" stroke-width="1"/>
<circle cx="138.5" cy="613.5" r="4.1" fill="none" stroke="#f0a400" stroke-width="1"/><path d="M136.0,613.5H141.0" stroke="#f0a400" stroke-width="1"/>
<circle cx="123.5" cy="619.5" r="4.1" fill="none" stroke="#f0a400" stroke-width="1"/><path d="M121.0,619.5H126.0" stroke="#f0a400" stroke-width="1"/>
<path d="M125.0,618.5H132.0M128.5,615.0V622.0" stroke="#f0a400" stroke-width="1"/>
<path d="M113.0,623.5H120.0M116.5,620.0V627.0" stroke="#f08400" stroke-width="1"/>
<rect x="139.0" y="620" width="7" height="1.3" fill="#f0a400"/>
<path d="M163.0,596.5H170.0M166.5,593.0V600.0" stroke="#f8c800" stroke-width="1"/>
<path d="M169.0,601.5H176.0M172.5,598.0V605.0" stroke="#f8c800" stroke-width="1"/>
<circle cx="157.5" cy="620.5" r="4.1" fill="none" stroke="#f4ec00" stroke-width="1"/><path d="M155.0,620.5H160.0" stroke="#f4ec00" stroke-width="1"/>
<circle cx="161.5" cy="623.5" r="4.1" fill="none" stroke="#f4ec00" stroke-width="1"/><path d="M159.0,623.5H164.0" stroke="#f4ec00" stroke-width="1"/><path d="M161.5,621.0V626.0" stroke="#f4ec00" stroke-width="1"/>
<path d="M159.0,617.5H166.0M162.5,614.0V621.0" stroke="#f4ec00" stroke-width="1"/>
<circle cx="174.5" cy="615.5" r="4.1" fill="none" stroke="#f8c800" stroke-width="1"/><path d="M172.0,615.5H177.0" stroke="#f8c800" stroke-width="1"/>
<circle cx="81.5" cy="643.5" r="4.1" fill="none" stroke="#f08400" stroke-width="1"/><path d="M79.0,643.5H84.0" stroke="#f08400" stroke-width="1"/>
<circle cx="66.5" cy="658.5" r="4.1" fill="none" stroke="#f08400" stroke-width="1"/><path d="M64.0,658.5H69.0" stroke="#f08400" stroke-width="1"/>
<circle cx="166.5" cy="638.5" r="4.1" fill="none" stroke="#f0a400" stroke-width="1"/><path d="M164.0,638.5H169.0" stroke="#f0a400" stroke-width="1"/>
<circle cx="186.5" cy="552.5" r="4.1" fill="none" stroke="#f0a400" stroke-width="1"/><path d="M184.0,552.5H189.0" stroke="#f0a400" stroke-width="1"/>
<path d="M246.0,581.5H253.0M249.5,578.0V585.0" stroke="#f0a400" stroke-width="1"/>
<rect x="206.0" y="591" width="7" height="1.3" fill="#f0a400"/>
<rect x="234.0" y="592" width="7" height="1.3" fill="#f8c800"/>
<path d="M231.0,598.5H238.0M234.5,595.0V602.0" stroke="#f8c800" stroke-width="1"/>
<path d="M247.0,600.5H254.0M250.5,597.0V604.0" stroke="#f4ec00" stroke-width="1"/>
<path d="M234.0,604.5H241.0M237.5,601.0V608.0" stroke="#f4ec00" stroke-width="1"/>
<circle cx="209.5" cy="606.5" r="4.1" fill="none" stroke="#f8c800" stroke-width="1"/><path d="M207.0,606.5H212.0" stroke="#f8c800" stroke-width="1"/>
<path d="M121.0,618.5H128.0M124.5,615.0V622.0" stroke="#f8c800" stroke-width="1"/>
<circle cx="185.5" cy="616.5" r="4.1" fill="none" stroke="#f0a400" stroke-width="1"/><path d="M183.0,616.5H188.0" stroke="#f0a400" stroke-width="1"/>
<circle cx="196.5" cy="624.5" r="4.1" fill="none" stroke="#f4ec00" stroke-width="1"/><path d="M194.0,624.5H199.0" stroke="#f4ec00" stroke-width="1"/><path d="M196.5,622.0V627.0" stroke="#f4ec00" stroke-width="1"/>
<circle cx="218.5" cy="623.5" r="4.1" fill="none" stroke="#f4ec00" stroke-width="1"/><path d="M216.0,623.5H221.0" stroke="#f4ec00" stroke-width="1"/><path d="M218.5,621.0V626.0" stroke="#f4ec00" stroke-width="1"/>
<circle cx="217.5" cy="632.5" r="4.1" fill="none" stroke="#f4ec00" stroke-width="1"/><path d="M215.0,632.5H220.0" stroke="#f4ec00" stroke-width="1"/>
<path d="M217.0,632.5H224.0M220.5,629.0V636.0" stroke="#f4ec00" stroke-width="1"/>
<rect x="196.0" y="629" width="7" height="1.3" fill="#f0a400"/>
<circle cx="195.5" cy="635.5" r="4.1" fill="none" stroke="#f8c800" stroke-width="1"/><path d="M193.0,635.5H198.0" stroke="#f8c800" stroke-width="1"/>
<circle cx="198.5" cy="642.5" r="4.1" fill="none" stroke="#f4ec00" stroke-width="1"/><path d="M196.0,642.5H201.0" stroke="#f4ec00" stroke-width="1"/><path d="M198.5,640.0V645.0" stroke="#f4ec00" stroke-width="1"/>
<circle cx="232.5" cy="618.5" r="4.1" fill="none" stroke="#f8c800" stroke-width="1"/><path d="M230.0,618.5H235.0" stroke="#f8c800" stroke-width="1"/>
<circle cx="241.5" cy="616.5" r="4.1" fill="none" stroke="#f4ec00" stroke-width="1"/><path d="M239.0,616.5H244.0" stroke="#f4ec00" stroke-width="1"/>
<circle cx="248.5" cy="610.5" r="4.1" fill="none" stroke="#f4ec00" stroke-width="1"/><path d="M246.0,610.5H251.0" stroke="#f4ec00" stroke-width="1"/><path d="M248.5,608.0V613.0" stroke="#f4ec00" stroke-width="1"/>
<circle cx="254.5" cy="608.5" r="4.1" fill="none" stroke="#f4ec00" stroke-width="1"/><path d="M252.0,608.5H257.0" stroke="#f4ec00" stroke-width="1"/><path d="M254.5,606.0V611.0" stroke="#f4ec00" stroke-width="1"/>
<circle cx="260.5" cy="614.5" r="4.1" fill="none" stroke="#f4ec00" stroke-width="1"/><path d="M258.0,614.5H263.0" stroke="#f4ec00" stroke-width="1"/>
<circle cx="237.5" cy="624.5" r="4.1" fill="none" stroke="#f4ec00" stroke-width="1"/><path d="M235.0,624.5H240.0" stroke="#f4ec00" stroke-width="1"/><path d="M237.5,622.0V627.0" stroke="#f4ec00" stroke-width="1"/>
<circle cx="241.5" cy="625.5" r="4.1" fill="none" stroke="#f4ec00" stroke-width="1"/><path d="M239.0,625.5H244.0" stroke="#f4ec00" stroke-width="1"/>
<path d="M229.0,631.5H236.0M232.5,628.0V635.0" stroke="#f0a400" stroke-width="1"/>
<path d="M223.0,640.5H230.0M226.5,637.0V644.0" stroke="#f8c800" stroke-width="1"/>
<circle cx="234.5" cy="635.5" r="4.1" fill="none" stroke="#f4ec00" stroke-width="1"/><path d="M232.0,635.5H237.0" stroke="#f4ec00" stroke-width="1"/><path d="M234.5,633.0V638.0" stroke="#f4ec00" stroke-width="1"/>
<circle cx="234.5" cy="640.5" r="4.1" fill="none" stroke="#f4ec00" stroke-width="1"/><path d="M232.0,640.5H237.0" stroke="#f4ec00" stroke-width="1"/><path d="M234.5,638.0V643.0" stroke="#f4ec00" stroke-width="1"/>
<circle cx="244.5" cy="640.5" r="4.1" fill="none" stroke="#f4ec00" stroke-width="1"/><path d="M242.0,640.5H247.0" stroke="#f4ec00" stroke-width="1"/><path d="M244.5,638.0V643.0" stroke="#f4ec00" stroke-width="1"/>
<circle cx="248.5" cy="643.5" r="4.1" fill="none" stroke="#f4ec00" stroke-width="1"/><path d="M246.0,643.5H251.0" stroke="#f4ec00" stroke-width="1"/>
<rect x="208.0" y="644" width="7" height="1.3" fill="#f4ec00"/>
<path d="M219.0,646.5H226.0M222.5,643.0V650.0" stroke="#f4ec00" stroke-width="1"/>
<path d="M201.0,650.5H208.0M204.5,647.0V654.0" stroke="#f8c800" stroke-width="1"/>
<circle cx="225.5" cy="650.5" r="4.1" fill="none" stroke="#f8c800" stroke-width="1"/><path d="M223.0,650.5H228.0" stroke="#f8c800" stroke-width="1"/><path d="M225.5,648.0V653.0" stroke="#f8c800" stroke-width="1"/>
<circle cx="237.5" cy="649.5" r="4.1" fill="none" stroke="#f8c800" stroke-width="1"/><path d="M235.0,649.5H240.0" stroke="#f8c800" stroke-width="1"/>
<circle cx="248.5" cy="649.5" r="4.1" fill="none" stroke="#f8c800" stroke-width="1"/><path d="M246.0,649.5H251.0" stroke="#f8c800" stroke-width="1"/>
<circle cx="230.5" cy="655.5" r="4.1" fill="none" stroke="#f4ec00" stroke-width="1"/><path d="M228.0,655.5H233.0" stroke="#f4ec00" stroke-width="1"/>
<circle cx="237.5" cy="658.5" r="4.1" fill="none" stroke="#f4ec00" stroke-width="1"/><path d="M235.0,658.5H240.0" stroke="#f4ec00" stroke-width="1"/>
<rect x="209.0" y="662" width="7" height="1.3" fill="#f4ec00"/>
<circle cx="198.5" cy="658.5" r="4.1" fill="none" stroke="#f8c800" stroke-width="1"/><path d="M196.0,658.5H201.0" stroke="#f8c800" stroke-width="1"/><path d="M198.5,656.0V661.0" stroke="#f8c800" stroke-width="1"/>
<circle cx="198.5" cy="662.5" r="4.1" fill="none" stroke="#f8c800" stroke-width="1"/><path d="M196.0,662.5H201.0" stroke="#f8c800" stroke-width="1"/>
<circle cx="204.5" cy="664.5" r="4.1" fill="none" stroke="#f4ec00" stroke-width="1"/><path d="M202.0,664.5H207.0" stroke="#f4ec00" stroke-width="1"/><path d="M204.5,662.0V667.0" stroke="#f4ec00" stroke-width="1"/>
<circle cx="242.5" cy="669.5" r="4.1" fill="none" stroke="#f4ec00" stroke-width="1"/><path d="M240.0,669.5H245.0" stroke="#f4ec00" stroke-width="1"/>
<circle cx="141.5" cy="635.5" r="4.1" fill="none" stroke="#f8c800" stroke-width="1"/><path d="M139.0,635.5H144.0" stroke="#f8c800" stroke-width="1"/><path d="M141.5,633.0V638.0" stroke="#f8c800" stroke-width="1"/>
<circle cx="147.5" cy="634.5" r="4.1" fill="none" stroke="#f8c800" stroke-width="1"/><path d="M145.0,634.5H150.0" stroke="#f8c800" stroke-width="1"/><path d="M147.5,632.0V637.0" stroke="#f8c800" stroke-width="1"/>
<circle cx="135.5" cy="642.5" r="4.1" fill="none" stroke="#f8c800" stroke-width="1"/><path d="M133.0,642.5H138.0" stroke="#f8c800" stroke-width="1"/>
<circle cx="130.5" cy="647.5" r="4.1" fill="none" stroke="#f8c800" stroke-width="1"/><path d="M128.0,647.5H133.0" stroke="#f8c800" stroke-width="1"/>
<circle cx="135.5" cy="649.5" r="4.1" fill="none" stroke="#f8c800" stroke-width="1"/><path d="M133.0,649.5H138.0" stroke="#f8c800" stroke-width="1"/>
<circle cx="150.5" cy="640.5" r="4.1" fill="none" stroke="#f4ec00" stroke-width="1"/><path d="M148.0,640.5H153.0" stroke="#f4ec00" stroke-width="1"/><path d="M150.5,638.0V643.0" stroke="#f4ec00" stroke-width="1"/>
<circle cx="154.5" cy="649.5" r="4.1" fill="none" stroke="#f4ec00" stroke-width="1"/><path d="M152.0,649.5H157.0" stroke="#f4ec00" stroke-width="1"/><path d="M154.5,647.0V652.0" stroke="#f4ec00" stroke-width="1"/>
<circle cx="158.5" cy="654.5" r="4.1" fill="none" stroke="#f4ec00" stroke-width="1"/><path d="M156.0,654.5H161.0" stroke="#f4ec00" stroke-width="1"/>
<circle cx="168.5" cy="646.5" r="4.1" fill="none" stroke="#f8c800" stroke-width="1"/><path d="M166.0,646.5H171.0" stroke="#f8c800" stroke-width="1"/>
<rect x="159.0" y="646" width="7" height="1.3" fill="#f8c800"/>
<circle cx="142.5" cy="658.5" r="4.1" fill="none" stroke="#f8c800" stroke-width="1"/><path d="M140.0,658.5H145.0" stroke="#f8c800" stroke-width="1"/><path d="M142.5,656.0V661.0" stroke="#f8c800" stroke-width="1"/>
<circle cx="156.5" cy="663.5" r="4.1" fill="none" stroke="#f8c800" stroke-width="1"/><path d="M154.0,663.5H159.0" stroke="#f8c800" stroke-width="1"/>
<circle cx="167.5" cy="657.5" r="4.1" fill="none" stroke="#f8c800" stroke-width="1"/><path d="M165.0,657.5H170.0" stroke="#f8c800" stroke-width="1"/>
<circle cx="174.5" cy="659.5" r="4.1" fill="none" stroke="#f4ec00" stroke-width="1"/><path d="M172.0,659.5H177.0" stroke="#f4ec00" stroke-width="1"/><path d="M174.5,657.0V662.0" stroke="#f4ec00" stroke-width="1"/>
<circle cx="181.5" cy="660.5" r="4.1" fill="none" stroke="#f4ec00" stroke-width="1"/><path d="M179.0,660.5H184.0" stroke="#f4ec00" stroke-width="1"/><path d="M181.5,658.0V663.0" stroke="#f4ec00" stroke-width="1"/>
<circle cx="185.5" cy="658.5" r="4.1" fill="none" stroke="#f4ec00" stroke-width="1"/><path d="M183.0,658.5H188.0" stroke="#f4ec00" stroke-width="1"/><path d="M185.5,656.0V661.0" stroke="#f4ec00" stroke-width="1"/>
<circle cx="170.5" cy="668.5" r="4.1" fill="none" stroke="#f8c800" stroke-width="1"/><path d="M168.0,668.5H173.0" stroke="#f8c800" stroke-width="1"/>
<circle cx="136.5" cy="672.5" r="4.1" fill="none" stroke="#f8c800" stroke-width="1"/><path d="M134.0,672.5H139.0" stroke="#f8c800" stroke-width="1"/>
<circle cx="165.5" cy="677.5" r="4.1" fill="none" stroke="#f8c800" stroke-width="1"/><path d="M163.0,677.5H168.0" stroke="#f8c800" stroke-width="1"/>
<path d="M130.0,660.5H137.0M133.5,657.0V664.0" stroke="#f8c800" stroke-width="1"/>
<path d="M27.0,742.5H34.0M30.5,739.0V746.0" stroke="#f08400" stroke-width="1"/>
<circle cx="104.5" cy="712.5" r="4.1" fill="none" stroke="#f8c800" stroke-width="1"/><path d="M102.0,712.5H107.0" stroke="#f8c800" stroke-width="1"/><path d="M104.5,710.0V715.0" stroke="#f8c800" stroke-width="1"/>
<path d="M102.0,741.5H109.0M105.5,738.0V745.0" stroke="#f8c800" stroke-width="1"/>
<path d="M110.0,742.5H117.0M113.5,739.0V746.0" stroke="#f8c800" stroke-width="1"/>
<circle cx="147.5" cy="742.5" r="4.1" fill="none" stroke="#f8c800" stroke-width="1"/><path d="M145.0,742.5H150.0" stroke="#f8c800" stroke-width="1"/><path d="M147.5,740.0V745.0" stroke="#f8c800" stroke-width="1"/>
<circle cx="148.5" cy="709.5" r="4.1" fill="none" stroke="#f4ec00" stroke-width="1"/><path d="M146.0,709.5H151.0" stroke="#f4ec00" stroke-width="1"/>
<path d="M724.0,75.5H731.0M727.5,72.0V79.0" stroke="#e86400" stroke-width="1"/>
<circle cx="715.5" cy="97.5" r="4.1" fill="none" stroke="#e86400" stroke-width="1"/><path d="M713.0,97.5H718.0" stroke="#e86400" stroke-width="1"/><path d="M715.5,95.0V100.0" stroke="#e86400" stroke-width="1"/>
<rect x="764.0" y="91" width="7" height="1.3" fill="#f0a400"/>
<rect x="717.0" y="107" width="7" height="1.3" fill="#f0a400"/>
<rect x="733.0" y="117" width="7" height="1.3" fill="#f0a400"/>
<rect x="741.0" y="129" width="7" height="1.3" fill="#f08400"/>
<rect x="789.0" y="117" width="7" height="1.3" fill="#f0a400"/>
<rect x="784.0" y="136" width="7" height="1.3" fill="#f0a400"/>
<circle cx="756.5" cy="143.5" r="4.1" fill="none" stroke="#f8c800" stroke-width="1"/><path d="M754.0,143.5H759.0" stroke="#f8c800" stroke-width="1"/><path d="M756.5,141.0V146.0" stroke="#f8c800" stroke-width="1"/>
<rect x="726.0" y="149" width="7" height="1.3" fill="#f4ec00"/>
<circle cx="777.5" cy="160.5" r="4.1" fill="none" stroke="#f4ec00" stroke-width="1"/><path d="M775.0,160.5H780.0" stroke="#f4ec00" stroke-width="1"/>
<rect x="767.0" y="166" width="7" height="1.3" fill="#f4ec00"/>
<rect x="790.0" y="170" width="7" height="1.3" fill="#f4ec00"/>
<rect x="710.0" y="163" width="7" height="1.3" fill="#f08400"/>
<rect x="766.0" y="179" width="7" height="1.3" fill="#f4ec00"/>
<rect x="773.0" y="182" width="7" height="1.3" fill="#f4ec00"/>
<rect x="705.0" y="191" width="7" height="1.3" fill="#f4ec00"/>
<circle cx="746.5" cy="198.5" r="4.1" fill="none" stroke="#f08400" stroke-width="1"/><path d="M744.0,198.5H749.0" stroke="#f08400" stroke-width="1"/><path d="M746.5,196.0V201.0" stroke="#f08400" stroke-width="1"/>
<rect x="797.0" y="200" width="7" height="1.3" fill="#e86400"/>
<rect x="689.0" y="212" width="7" height="1.3" fill="#f4ec00"/>
<rect x="684.0" y="216" width="7" height="1.3" fill="#f4ec00"/>
<rect x="800.0" y="208" width="7" height="1.3" fill="#f4ec00"/>
<rect x="780.0" y="217" width="7" height="1.3" fill="#f4ec00"/>
<rect x="724.0" y="228" width="7" height="1.3" fill="#f08400"/>
<rect x="733.0" y="232" width="7" height="1.3" fill="#f4ec00"/>
<rect x="730.0" y="234" width="7" height="1.3" fill="#f4ec00"/>
<rect x="686.0" y="246" width="7" height="1.3" fill="#f08400"/>
<rect x="734.0" y="250" width="7" height="1.3" fill="#00f0f0"/>
<rect x="745.0" y="252" width="7" height="1.3" fill="#f4ec00"/>
<rect x="755.0" y="250" width="7" height="1.3" fill="#f8c800"/>
<rect x="780.0" y="238" width="7" height="1.3" fill="#f4ec00"/>
<rect x="790.0" y="250" width="7" height="1.3" fill="#f08400"/>
<rect x="800.0" y="250" width="7" height="1.3" fill="#f08400"/>
<rect x="712.0" y="260" width="7" height="1.3" fill="#f08400"/>
<rect x="729.0" y="281" width="7" height="1.3" fill="#f8c800"/>
<circle cx="792.5" cy="283.5" r="4.1" fill="none" stroke="#f4ec00" stroke-width="1"/><path d="M790.0,283.5H795.0" stroke="#f4ec00" stroke-width="1"/><path d="M792.5,281.0V286.0" stroke="#f4ec00" stroke-width="1"/>
<rect x="767.0" y="287" width="7" height="1.3" fill="#f08400"/>
<rect x="797.0" y="298" width="7" height="1.3" fill="#f0a400"/>
<rect x="791.0" y="309" width="7" height="1.3" fill="#f0a400"/>
<rect x="799.0" y="310" width="7" height="1.3" fill="#f0a400"/>
<circle cx="294.5" cy="250.5" r="4.1" fill="none" stroke="#f4ec00" stroke-width="1"/><path d="M292.0,250.5H297.0" stroke="#f4ec00" stroke-width="1"/><path d="M294.5,248.0V253.0" stroke="#f4ec00" stroke-width="1"/>
<path d="M317.0,262.5H324.0M320.5,259.0V266.0" stroke="#f8c800" stroke-width="1"/>
<circle cx="295.5" cy="243.5" r="4.1" fill="none" stroke="#f4ec00" stroke-width="1"/><path d="M293.0,243.5H298.0" stroke="#f4ec00" stroke-width="1"/>
<circle cx="302.5" cy="245.5" r="4.1" fill="none" stroke="#f8c800" stroke-width="1"/><path d="M300.0,245.5H305.0" stroke="#f8c800" stroke-width="1"/>
<circle cx="318.5" cy="231.5" r="4.1" fill="none" stroke="#ffff00" stroke-width="1"/><path d="M316.0,231.5H321.0" stroke="#ffff00" stroke-width="1"/><path d="M318.5,229.0V234.0" stroke="#ffff00" stroke-width="1"/>
<path d="M287.0,262.5H294.0M290.5,259.0V266.0" stroke="#f8c800" stroke-width="1"/>
<rect x="302.0" y="260" width="7" height="1.3" fill="#f4ec00"/>
<circle cx="314.5" cy="248.5" r="4.1" fill="none" stroke="#f4ec00" stroke-width="1"/><path d="M312.0,248.5H317.0" stroke="#f4ec00" stroke-width="1"/><path d="M314.5,246.0V251.0" stroke="#f4ec00" stroke-width="1"/>
<circle cx="294.5" cy="255.5" r="4.1" fill="none" stroke="#f4ec00" stroke-width="1"/><path d="M292.0,255.5H297.0" stroke="#f4ec00" stroke-width="1"/>
<circle cx="305.5" cy="244.5" r="4.1" fill="none" stroke="#f4ec00" stroke-width="1"/><path d="M303.0,244.5H308.0" stroke="#f4ec00" stroke-width="1"/><path d="M305.5,242.0V247.0" stroke="#f4ec00" stroke-width="1"/>
<circle cx="306.5" cy="229.5" r="4.1" fill="none" stroke="#f4ec00" stroke-width="1"/><path d="M304.0,229.5H309.0" stroke="#f4ec00" stroke-width="1"/>
<circle cx="321.5" cy="231.5" r="4.1" fill="none" stroke="#f8c800" stroke-width="1"/><path d="M319.0,231.5H324.0" stroke="#f8c800" stroke-width="1"/><path d="M321.5,229.0V234.0" stroke="#f8c800" stroke-width="1"/>
<rect x="311.0" y="254" width="7" height="1.3" fill="#ffff00"/>
<rect x="288.0" y="244" width="7" height="1.3" fill="#f4ec00"/>
<rect x="293.0" y="259" width="7" height="1.3" fill="#f4ec00"/>
<rect x="296.0" y="260" width="7" height="1.3" fill="#f4ec00"/>
<circle cx="300.5" cy="241.5" r="4.1" fill="none" stroke="#f4ec00" stroke-width="1"/><path d="M298.0,241.5H303.0" stroke="#f4ec00" stroke-width="1"/><path d="M300.5,239.0V244.0" stroke="#f4ec00" stroke-width="1"/>
<path d="M317.0,228.5H324.0M320.5,225.0V232.0" stroke="#f4ec00" stroke-width="1"/>
<rect x="304.0" y="244" width="7" height="1.3" fill="#f8c800"/>
<rect x="307.0" y="235" width="7" height="1.3" fill="#f4ec00"/>
<circle cx="295.5" cy="229.5" r="4.1" fill="none" stroke="#ffff00" stroke-width="1"/><path d="M293.0,229.5H298.0" stroke="#ffff00" stroke-width="1"/><path d="M295.5,227.0V232.0" stroke="#ffff00" stroke-width="1"/>
<circle cx="301.5" cy="246.5" r="4.1" fill="none" stroke="#f8c800" stroke-width="1"/><path d="M299.0,246.5H304.0" stroke="#f8c800" stroke-width="1"/><path d="M301.5,244.0V249.0" stroke="#f8c800" stroke-width="1"/>
<circle cx="292.5" cy="225.5" r="4.1" fill="none" stroke="#f4ec00" stroke-width="1"/><path d="M290.0,225.5H295.0" stroke="#f4ec00" stroke-width="1"/><path d="M292.5,223.0V228.0" stroke="#f4ec00" stroke-width="1"/>
<rect x="299.0" y="249" width="7" height="1.3" fill="#ffff00"/>
<circle cx="324.5" cy="238.5" r="4.1" fill="none" stroke="#ffff00" stroke-width="1"/><path d="M322.0,238.5H327.0" stroke="#ffff00" stroke-width="1"/><path d="M324.5,236.0V241.0" stroke="#ffff00" stroke-width="1"/>
<path d="M307.0,257.5H314.0M310.5,254.0V261.0" stroke="#f8c800" stroke-width="1"/>
<circle cx="302.5" cy="232.5" r="4.1" fill="none" stroke="#f8c800" stroke-width="1"/><path d="M300.0,232.5H305.0" stroke="#f8c800" stroke-width="1"/><path d="M302.5,230.0V235.0" stroke="#f8c800" stroke-width="1"/>
<path d="M306.0,240.5H313.0M309.5,237.0V244.0" stroke="#ffff00" stroke-width="1"/>
<circle cx="306.5" cy="255.5" r="4.1" fill="none" stroke="#ffff00" stroke-width="1"/><path d="M304.0,255.5H309.0" stroke="#ffff00" stroke-width="1"/>
<circle cx="313.5" cy="223.5" r="4.1" fill="none" stroke="#f8c800" stroke-width="1"/><path d="M311.0,223.5H316.0" stroke="#f8c800" stroke-width="1"/><path d="M313.5,221.0V226.0" stroke="#f8c800" stroke-width="1"/>
<circle cx="303.5" cy="257.5" r="4.1" fill="none" stroke="#f8c800" stroke-width="1"/><path d="M301.0,257.5H306.0" stroke="#f8c800" stroke-width="1"/><path d="M303.5,255.0V260.0" stroke="#f8c800" stroke-width="1"/>
<circle cx="316.5" cy="241.5" r="4.1" fill="none" stroke="#f8c800" stroke-width="1"/><path d="M314.0,241.5H319.0" stroke="#f8c800" stroke-width="1"/><path d="M316.5,239.0V244.0" stroke="#f8c800" stroke-width="1"/>
<path d="M321.0,243.5H328.0M324.5,240.0V247.0" stroke="#f4ec00" stroke-width="1"/>
<circle cx="324.5" cy="258.5" r="4.1" fill="none" stroke="#f8c800" stroke-width="1"/><path d="M322.0,258.5H327.0" stroke="#f8c800" stroke-width="1"/><path d="M324.5,256.0V261.0" stroke="#f8c800" stroke-width="1"/>
<path d="M318.0,246.5H325.0M321.5,243.0V250.0" stroke="#f4ec00" stroke-width="1"/>
<circle cx="310.5" cy="256.5" r="4.1" fill="none" stroke="#f8c800" stroke-width="1"/><path d="M308.0,256.5H313.0" stroke="#f8c800" stroke-width="1"/><path d="M310.5,254.0V259.0" stroke="#f8c800" stroke-width="1"/>
<circle cx="308.5" cy="233.5" r="4.1" fill="none" stroke="#f4ec00" stroke-width="1"/><path d="M306.0,233.5H311.0" stroke="#f4ec00" stroke-width="1"/>
<circle cx="314.5" cy="260.5" r="4.1" fill="none" stroke="#ffff00" stroke-width="1"/><path d="M312.0,260.5H317.0" stroke="#ffff00" stroke-width="1"/>
<rect x="308.0" y="248" width="7" height="1.3" fill="#f4ec00"/>
<circle cx="298.5" cy="238.5" r="4.1" fill="none" stroke="#f8c800" stroke-width="1"/><path d="M296.0,238.5H301.0" stroke="#f8c800" stroke-width="1"/><path d="M298.5,236.0V241.0" stroke="#f8c800" stroke-width="1"/>
<circle cx="293.5" cy="238.5" r="4.1" fill="none" stroke="#f4ec00" stroke-width="1"/><path d="M291.0,238.5H296.0" stroke="#f4ec00" stroke-width="1"/><path d="M293.5,236.0V241.0" stroke="#f4ec00" stroke-width="1"/>
<circle cx="312.5" cy="253.5" r="4.1" fill="none" stroke="#f4ec00" stroke-width="1"/><path d="M310.0,253.5H315.0" stroke="#f4ec00" stroke-width="1"/>
<rect x="310.0" y="227" width="7" height="1.3" fill="#ffff00"/>
<rect x="300.0" y="258" width="7" height="1.3" fill="#f8c800"/>
<circle cx="295.5" cy="256.5" r="4.1" fill="none" stroke="#ffff00" stroke-width="1"/><path d="M293.0,256.5H298.0" stroke="#ffff00" stroke-width="1"/><path d="M295.5,254.0V259.0" stroke="#ffff00" stroke-width="1"/>
<rect x="313.0" y="252" width="7" height="1.3" fill="#ffff00"/>
<circle cx="307.5" cy="252.5" r="4.1" fill="none" stroke="#f4ec00" stroke-width="1"/><path d="M305.0,252.5H310.0" stroke="#f4ec00" stroke-width="1"/>
<path d="M300.0,257.5H307.0M303.5,254.0V261.0" stroke="#f8c800" stroke-width="1"/>
<circle cx="295.5" cy="250.5" r="4.1" fill="none" stroke="#ffff00" stroke-width="1"/><path d="M293.0,250.5H298.0" stroke="#ffff00" stroke-width="1"/><path d="M295.5,248.0V253.0" stroke="#ffff00" stroke-width="1"/>
<circle cx="311.5" cy="252.5" r="4.1" fill="none" stroke="#f4ec00" stroke-width="1"/><path d="M309.0,252.5H314.0" stroke="#f4ec00" stroke-width="1"/><path d="M311.5,250.0V255.0" stroke="#f4ec00" stroke-width="1"/>
<circle cx="294.5" cy="251.5" r="4.1" fill="none" stroke="#f8c800" stroke-width="1"/><path d="M292.0,251.5H297.0" stroke="#f8c800" stroke-width="1"/><path d="M294.5,249.0V254.0" stroke="#f8c800" stroke-width="1"/>
<rect x="316.0" y="242" width="7" height="1.3" fill="#f4ec00"/>
<rect x="306.0" y="224" width="7" height="1.3" fill="#ffff00"/>
<circle cx="300.5" cy="243.5" r="4.1" fill="none" stroke="#ffff00" stroke-width="1"/><path d="M298.0,243.5H303.0" stroke="#ffff00" stroke-width="1"/><path d="M300.5,241.0V246.0" stroke="#ffff00" stroke-width="1"/>
<circle cx="312.5" cy="252.5" r="4.1" fill="none" stroke="#f4ec00" stroke-width="1"/><path d="M310.0,252.5H315.0" stroke="#f4ec00" stroke-width="1"/><path d="M312.5,250.0V255.0" stroke="#f4ec00" stroke-width="1"/>
<circle cx="214.5" cy="633.5" r="4.1" fill="none" stroke="#ffff00" stroke-width="1"/><path d="M212.0,633.5H217.0" stroke="#ffff00" stroke-width="1"/><path d="M214.5,631.0V636.0" stroke="#ffff00" stroke-width="1"/>
<path d="M145.0,651.5H152.0M148.5,648.0V655.0" stroke="#f4ec00" stroke-width="1"/>
<path d="M241.0,651.5H248.0M244.5,648.0V655.0" stroke="#f0a400" stroke-width="1"/>
<path d="M212.0,616.5H219.0M215.5,613.0V620.0" stroke="#f8c800" stroke-width="1"/>
<path d="M199.0,636.5H206.0M202.5,633.0V640.0" stroke="#f4ec00" stroke-width="1"/>
<path d="M164.0,618.5H171.0M167.5,615.0V622.0" stroke="#f4ec00" stroke-width="1"/>
<path d="M167.0,654.5H174.0M170.5,651.0V658.0" stroke="#f8c800" stroke-width="1"/>
<path d="M192.0,628.5H199.0M195.5,625.0V632.0" stroke="#ffff00" stroke-width="1"/>
<circle cx="198.5" cy="650.5" r="4.1" fill="none" stroke="#f4ec00" stroke-width="1"/><path d="M196.0,650.5H201.0" stroke="#f4ec00" stroke-width="1"/>
<rect x="195.0" y="642" width="7" height="1.3" fill="#f8c800"/>
<rect x="231.0" y="649" width="7" height="1.3" fill="#f0a400"/>
<circle cx="224.5" cy="653.5" r="4.1" fill="none" stroke="#f8c800" stroke-width="1"/><path d="M222.0,653.5H227.0" stroke="#f8c800" stroke-width="1"/><path d="M224.5,651.0V656.0" stroke="#f8c800" stroke-width="1"/>
<rect x="247.0" y="636" width="7" height="1.3" fill="#f8c800"/>
<circle cx="239.5" cy="668.5" r="4.1" fill="none" stroke="#f8c800" stroke-width="1"/><path d="M237.0,668.5H242.0" stroke="#f8c800" stroke-width="1"/>
<path d="M175.0,632.5H182.0M178.5,629.0V636.0" stroke="#f8c800" stroke-width="1"/>
<rect x="148.0" y="625" width="7" height="1.3" fill="#ffff00"/>
<path d="M211.0,636.5H218.0M214.5,633.0V640.0" stroke="#f4ec00" stroke-width="1"/>
<path d="M256.0,624.5H263.0M259.5,621.0V628.0" stroke="#f8c800" stroke-width="1"/>
<rect x="218.0" y="635" width="7" height="1.3" fill="#f8c800"/>
<circle cx="171.5" cy="667.5" r="4.1" fill="none" stroke="#f0a400" stroke-width="1"/><path d="M169.0,667.5H174.0" stroke="#f0a400" stroke-width="1"/><path d="M171.5,665.0V670.0" stroke="#f0a400" stroke-width="1"/>
<circle cx="171.5" cy="661.5" r="4.1" fill="none" stroke="#f0a400" stroke-width="1"/><path d="M169.0,661.5H174.0" stroke="#f0a400" stroke-width="1"/><path d="M171.5,659.0V664.0" stroke="#f0a400" stroke-width="1"/>
<circle cx="164.5" cy="648.5" r="4.1" fill="none" stroke="#f8c800" stroke-width="1"/><path d="M162.0,648.5H167.0" stroke="#f8c800" stroke-width="1"/><path d="M164.5,646.0V651.0" stroke="#f8c800" stroke-width="1"/>
</g>
<text x="231.5" y="142.0" font-size="9.5" font-weight="400" fill="#f0f0f0" text-anchor="start" textLength="41.3" lengthAdjust="spacingAndGlyphs">O-1158</text>
<rect x="273.7" y="138" width="3.5" height="1.2" fill="#00e0e0"/>
<text x="278.0" y="142.0" font-size="9.5" font-weight="400" fill="#f0f0f0" text-anchor="start" textLength="6.2" lengthAdjust="spacingAndGlyphs">3</text>
<rect x="285" y="138" width="6.3" height="1.4" fill="#ffff00"/>
<text x="61.2" y="545.9" font-size="9.5" font-weight="400" fill="#f0f0f0" text-anchor="start" textLength="32.8" lengthAdjust="spacingAndGlyphs">C-143</text>
<rect x="94.8" y="541.8" width="4.3" height="1.2" fill="#00e0e0"/>
<text x="100.9" y="545.9" font-size="9.5" font-weight="400" fill="#f0f0f0" text-anchor="start" textLength="5.1" lengthAdjust="spacingAndGlyphs">1</text>
<text x="107.0" y="545.9" font-size="9.5" font-weight="400" fill="#e0e000" text-anchor="start" textLength="6.8" lengthAdjust="spacingAndGlyphs">v</text>
<text x="180.6" y="559.0" font-size="9.5" font-weight="400" fill="#f0f0f0" text-anchor="start" textLength="39.9" lengthAdjust="spacingAndGlyphs">G-1596</text>
<rect x="221.5" y="555" width="4" height="1.2" fill="#00e0e0"/>
<text x="227.4" y="559.0" font-size="9.5" font-weight="400" fill="#f0f0f0" text-anchor="start" textLength="4.6" lengthAdjust="spacingAndGlyphs">1</text>
<rect x="233.1" y="555" width="5.7" height="1.4" fill="#ffff00"/>
<rect x="9.5" y="759.5" width="242.5" height="43.5" fill="#000" stroke="#9a9a9a" stroke-width="1"/>
<text x="13.2" y="771.0" font-size="9" font-weight="400" fill="#e8e8e8" text-anchor="start" textLength="36.0" lengthAdjust="spacingAndGlyphs">Symbols</text>
<text x="52.8" y="771.0" font-size="9" font-weight="400" fill="#e8e8e8" text-anchor="start" textLength="17.0" lengthAdjust="spacingAndGlyphs">-CG</text>
<text x="78.0" y="771.0" font-size="9" font-weight="400" fill="#e8e8e8" text-anchor="start" textLength="14.3" lengthAdjust="spacingAndGlyphs">-IC</text>
<text x="99.0" y="771.0" font-size="9" font-weight="400" fill="#e8e8e8" text-anchor="start" textLength="19.7" lengthAdjust="spacingAndGlyphs">+CG</text>
<text x="125.0" y="771.0" font-size="9" font-weight="400" fill="#e8e8e8" text-anchor="start" textLength="16.0" lengthAdjust="spacingAndGlyphs">+IC</text>
<text x="153.6" y="771.0" font-size="9" font-weight="400" fill="#e8e8e8" text-anchor="start" textLength="89.0" lengthAdjust="spacingAndGlyphs">Strike age color codes</text>
<text x="13.2" y="784.0" font-size="9" font-weight="400" fill="#e8e8e8" text-anchor="start" textLength="32.0" lengthAdjust="spacingAndGlyphs">Recent</text>
<text x="13.2" y="796.5" font-size="9" font-weight="400" fill="#e8e8e8" text-anchor="start" textLength="15.0" lengthAdjust="spacingAndGlyphs">Old</text>
<circle cx="60.5" cy="780.5" r="4.1" fill="none" stroke="#00e8e8" stroke-width="1"/><path d="M58.0,780.5H63.0" stroke="#00e8e8" stroke-width="1"/>
<rect x="83.0" y="780" width="7" height="1.3" fill="#00e8e8"/>
<circle cx="110.5" cy="780.5" r="4.1" fill="none" stroke="#00e8e8" stroke-width="1"/><path d="M108.0,780.5H113.0" stroke="#00e8e8" stroke-width="1"/><path d="M110.5,778.0V783.0" stroke="#00e8e8" stroke-width="1"/>
<path d="M132.0,780.5H139.0M135.5,777.0V784.0" stroke="#00e8e8" stroke-width="1"/>
<circle cx="60.5" cy="793.5" r="4.1" fill="none" stroke="#ffff00" stroke-width="1"/><path d="M58.0,793.5H63.0" stroke="#ffff00" stroke-width="1"/>
<rect x="83.0" y="793" width="7" height="1.3" fill="#ffff00"/>
<circle cx="110.5" cy="793.5" r="4.1" fill="none" stroke="#ffff00" stroke-width="1"/><path d="M108.0,793.5H113.0" stroke="#ffff00" stroke-width="1"/><path d="M110.5,791.0V796.0" stroke="#ffff00" stroke-width="1"/>
<path d="M132.0,793.5H139.0M135.5,790.0V797.0" stroke="#ffff00" stroke-width="1"/>
<text x="153.6" y="784.0" font-size="9" font-weight="400" fill="#e0e000" text-anchor="start" textLength="16.0" lengthAdjust="spacingAndGlyphs">15+</text>
<text x="188.4" y="784.0" font-size="9" font-weight="400" fill="#f0b000" text-anchor="start" textLength="16.0" lengthAdjust="spacingAndGlyphs">30+</text>
<text x="223.0" y="784.0" font-size="9" font-weight="400" fill="#f09c00" text-anchor="start" textLength="16.0" lengthAdjust="spacingAndGlyphs">45+</text>
<text x="153.6" y="796.5" font-size="9" font-weight="400" fill="#f08000" text-anchor="start" textLength="16.0" lengthAdjust="spacingAndGlyphs">60+</text>
<text x="188.4" y="796.5" font-size="9" font-weight="400" fill="#f06000" text-anchor="start" textLength="16.0" lengthAdjust="spacingAndGlyphs">75+</text>
<text x="223.0" y="796.5" font-size="9" font-weight="400" fill="#f04000" text-anchor="start" textLength="16.0" lengthAdjust="spacingAndGlyphs">90+</text>
<rect x="685" y="791.5" width="121" height="14.5" fill="#000"/>
<text x="689.0" y="802.5" font-size="9.5" font-weight="400" fill="#f0f0f0" text-anchor="start" textLength="113.0" lengthAdjust="spacingAndGlyphs">©2005 Astrogenic Systems</text>
<rect x="812.5" y="8.5" width="319" height="318" rx="5" ry="5" fill="none" stroke="#c0c0c0" stroke-width="1"/>
<rect x="812.5" y="334.0" width="319" height="112.5" rx="5" ry="5" fill="none" stroke="#c0c0c0" stroke-width="1"/>
<rect x="812.5" y="454.0" width="319" height="347.5" rx="5" ry="5" fill="none" stroke="#c0c0c0" stroke-width="1"/>
<rect x="819" y="16" width="58" height="18" fill="#5a0000"/><path d="M819.5 34 V16.5 H877" stroke="#f0f0f0" fill="none"/><path d="M820 33.5 H876.5 V17" stroke="#9a9a9a" fill="none"/>
<text x="824.2" y="29.8" font-size="12" font-weight="700" fill="#dcdcdc" text-anchor="start" textLength="48.0" lengthAdjust="spacingAndGlyphs">STRIKE</text>
<rect x="883" y="16" width="58" height="18" fill="#333333"/><path d="M883.5 34 V16.5 H941" stroke="#f0f0f0" fill="none"/><path d="M884 33.5 H940.5 V17" stroke="#9a9a9a" fill="none"/>
<text x="890.6" y="29.8" font-size="12" font-weight="700" fill="#c0c0c0" text-anchor="start" textLength="42.8" lengthAdjust="spacingAndGlyphs">NOISE</text>
<rect x="994" y="16" width="128" height="18" fill="#333333"/><path d="M994.5 34 V16.5 H1122" stroke="#f0f0f0" fill="none"/><path d="M995 33.5 H1121.5 V17" stroke="#9a9a9a" fill="none"/>
<text x="998.5" y="29.8" font-size="12.5" font-weight="700" fill="#ffffff" text-anchor="start" textLength="52.5" lengthAdjust="spacingAndGlyphs">Bng 64°</text>
<text x="1075.8" y="29.8" font-size="12.5" font-weight="700" fill="#00ff00" text-anchor="start" textLength="42.2" lengthAdjust="spacingAndGlyphs">286mi</text>
<rect x="821.5" y="64.5" width="81" height="15" fill="#606060" stroke="#d0d0d0" stroke-width="1"/>
<text x="829.2" y="76.2" font-size="11.5" font-weight="400" fill="#e8e8e8" text-anchor="start" textLength="65.8" lengthAdjust="spacingAndGlyphs">Strikes/min</text>
<rect x="931.5" y="64.5" width="81" height="15" fill="#606060" stroke="#d0d0d0" stroke-width="1"/>
<text x="943.5" y="76.2" font-size="11.5" font-weight="400" fill="#e8e8e8" text-anchor="start" textLength="57.2" lengthAdjust="spacingAndGlyphs">Close/min</text>
<rect x="1041.5" y="64.5" width="81" height="15" fill="#606060" stroke="#d0d0d0" stroke-width="1"/>
<text x="1050.5" y="76.2" font-size="11.5" font-weight="400" fill="#e8e8e8" text-anchor="start" textLength="62.4" lengthAdjust="spacingAndGlyphs">Noises/min</text>
<text x="884.0" y="112.0" font-size="29" font-weight="700" fill="#ffffff" text-anchor="start" textLength="17.7" lengthAdjust="spacingAndGlyphs">4</text>
<text x="994.2" y="112.0" font-size="29" font-weight="700" fill="#ffffff" text-anchor="start" textLength="17.5" lengthAdjust="spacingAndGlyphs">0</text>
<text x="1104.4" y="112.0" font-size="29" font-weight="700" fill="#c0c0c0" text-anchor="start" textLength="17.6" lengthAdjust="spacingAndGlyphs">0</text>
<text x="826.0" y="143.0" font-size="12.5" font-weight="400" fill="#ffffff" text-anchor="start" textLength="76.5" lengthAdjust="spacingAndGlyphs">Total Strikes</text>
<text x="872.0" y="160.5" font-size="12.5" font-weight="400" fill="#ffffff" text-anchor="start" textLength="30.0" lengthAdjust="spacingAndGlyphs">2701</text>
<text x="944.4" y="143.0" font-size="12.5" font-weight="400" fill="#ffffff" text-anchor="start" textLength="68.3" lengthAdjust="spacingAndGlyphs">Total Close</text>
<text x="1005.3" y="160.5" font-size="12.5" font-weight="400" fill="#ffffff" text-anchor="start" textLength="6.9" lengthAdjust="spacingAndGlyphs">0</text>
<text x="1047.7" y="143.0" font-size="12.5" font-weight="400" fill="#ffffff" text-anchor="start" textLength="74.8" lengthAdjust="spacingAndGlyphs">Total Noises</text>
<text x="1100.3" y="160.5" font-size="12.5" font-weight="400" fill="#ffffff" text-anchor="start" textLength="22.2" lengthAdjust="spacingAndGlyphs">186</text>
<text x="821.0" y="215.0" font-size="12.5" font-weight="400" fill="#c8c8c8" text-anchor="start" textLength="164.4" lengthAdjust="spacingAndGlyphs">Lightning type distribution</text>
<rect x="821" y="218" width="303" height="1" fill="#a0a0a0"/>
<text x="821.0" y="236.6" font-size="12.5" font-weight="700" fill="#ffffff" text-anchor="start" textLength="84.0" lengthAdjust="spacingAndGlyphs">Cloud-ground</text>
<text x="913.3" y="236.6" font-size="12.5" font-weight="700" fill="#d0d0d0" text-anchor="start" textLength="8.0" lengthAdjust="spacingAndGlyphs">+</text>
<rect x="926" y="227.9" width="49" height="9" rx="1.5" fill="#000" stroke="#9a9a9a"/>
<rect x="926.5" y="228.4" width="16" height="8" fill="#ff0000"/>
<text x="979.0" y="236.6" font-size="12.5" font-weight="700" fill="#ffffff" text-anchor="start" textLength="29.5" lengthAdjust="spacingAndGlyphs">32%</text>
<rect x="1016" y="231.6" width="6" height="2" fill="#c0c0c0"/>
<rect x="1028.5" y="227.9" width="49.5" height="9" rx="1.5" fill="#000" stroke="#9a9a9a"/>
<rect x="1029" y="228.4" width="12" height="8" fill="#90c8f8"/>
<text x="1082.0" y="236.6" font-size="12.5" font-weight="700" fill="#ffffff" text-anchor="start" textLength="29.6" lengthAdjust="spacingAndGlyphs">24%</text>
<text x="821.0" y="261.0" font-size="12.5" font-weight="700" fill="#c0c0c0" text-anchor="start" textLength="37.9" lengthAdjust="spacingAndGlyphs">Count</text>
<text x="925.0" y="261.0" font-size="12.5" font-weight="700" fill="#ffffff" text-anchor="start" textLength="23.7" lengthAdjust="spacingAndGlyphs">858</text>
<text x="1028.0" y="261.0" font-size="12.5" font-weight="700" fill="#ffffff" text-anchor="start" textLength="24.0" lengthAdjust="spacingAndGlyphs">642</text>
<text x="821.0" y="291.0" font-size="12.5" font-weight="700" fill="#ffffff" text-anchor="start" textLength="63.6" lengthAdjust="spacingAndGlyphs">Intracloud</text>
<text x="913.3" y="291.0" font-size="12.5" font-weight="700" fill="#d0d0d0" text-anchor="start" textLength="8.0" lengthAdjust="spacingAndGlyphs">+</text>
<rect x="926" y="282.3" width="49" height="9" rx="1.5" fill="#000" stroke="#9a9a9a"/>
<rect x="926.5" y="282.8" width="6" height="8" fill="#f060b0"/>
<text x="979.0" y="291.0" font-size="12.5" font-weight="700" fill="#ffffff" text-anchor="start" textLength="29.5" lengthAdjust="spacingAndGlyphs">12%</text>
<rect x="1016" y="286.0" width="6" height="2" fill="#c0c0c0"/>
<rect x="1028.5" y="282.3" width="49.5" height="9" rx="1.5" fill="#000" stroke="#9a9a9a"/>
<rect x="1029" y="282.8" width="16" height="8" fill="#00ff00"/>
<text x="1082.0" y="291.0" font-size="12.5" font-weight="700" fill="#ffffff" text-anchor="start" textLength="29.6" lengthAdjust="spacingAndGlyphs">32%</text>
<text x="821.0" y="315.4" font-size="12.5" font-weight="700" fill="#c0c0c0" text-anchor="start" textLength="37.9" lengthAdjust="spacingAndGlyphs">Count</text>
<text x="925.0" y="315.4" font-size="12.5" font-weight="700" fill="#ffffff" text-anchor="start" textLength="23.7" lengthAdjust="spacingAndGlyphs">325</text>
<text x="1028.0" y="315.4" font-size="12.5" font-weight="700" fill="#ffffff" text-anchor="start" textLength="24.0" lengthAdjust="spacingAndGlyphs">876</text>
<text x="822.0" y="353.0" font-size="16.5" font-weight="700" fill="#00ff00" text-anchor="start" textLength="223.0" lengthAdjust="spacingAndGlyphs">10/21/2025 11:39:16 AM</text>
<rect x="821" y="358" width="302" height="1" fill="#a0a0a0"/>
<text x="821.5" y="388.0" font-size="12.5" font-weight="400" fill="#ffffff" text-anchor="start" textLength="48.3" lengthAdjust="spacingAndGlyphs">Squelch</text>
<text x="910.0" y="388.0" font-size="12.5" font-weight="400" fill="#ffffff" text-anchor="start" textLength="6.5" lengthAdjust="spacingAndGlyphs">0</text>
<text x="981.6" y="388.0" font-size="12.5" font-weight="400" fill="#ffffff" text-anchor="start" textLength="43.3" lengthAdjust="spacingAndGlyphs">Upload</text>
<text x="1061.4" y="388.0" font-size="12.5" font-weight="400" fill="#c0c0c0" text-anchor="start" textLength="53.6" lengthAdjust="spacingAndGlyphs">Disabled</text>
<text x="821.5" y="407.7" font-size="12.5" font-weight="400" fill="#ffffff" text-anchor="start" textLength="71.5" lengthAdjust="spacingAndGlyphs">Persistence</text>
<text x="910.0" y="407.7" font-size="12.5" font-weight="400" fill="#ffffff" text-anchor="start" textLength="40.4" lengthAdjust="spacingAndGlyphs">90 min</text>
<text x="981.6" y="407.7" font-size="12.5" font-weight="400" fill="#ffffff" text-anchor="start" textLength="50.4" lengthAdjust="spacingAndGlyphs">Capture</text>
<text x="1061.4" y="407.7" font-size="12.5" font-weight="400" fill="#00ee00" text-anchor="start" textLength="36.2" lengthAdjust="spacingAndGlyphs">Active</text>
<text x="821.5" y="428.0" font-size="12.5" font-weight="400" fill="#ffffff" text-anchor="start" textLength="39.3" lengthAdjust="spacingAndGlyphs">Range</text>
<text x="910.0" y="428.0" font-size="12.5" font-weight="400" fill="#ffffff" text-anchor="start" textLength="40.4" lengthAdjust="spacingAndGlyphs">313 mi</text>
<text x="981.6" y="428.0" font-size="12.5" font-weight="400" fill="#ffffff" text-anchor="start" textLength="51.9" lengthAdjust="spacingAndGlyphs">Receiver</text>
<text x="1061.4" y="428.0" font-size="12.5" font-weight="400" fill="#00ee00" text-anchor="start" textLength="50.0" lengthAdjust="spacingAndGlyphs">Enabled</text>
<text x="821.0" y="475.0" font-size="12.5" font-weight="400" fill="#c0c0c0" text-anchor="start" textLength="43.5" lengthAdjust="spacingAndGlyphs">Uptime</text>
<text x="910.4" y="475.0" font-size="12.5" font-weight="400" fill="#ffffff" text-anchor="start" textLength="43.0" lengthAdjust="spacingAndGlyphs">103:09</text>
<text x="981.6" y="475.0" font-size="12.5" font-weight="400" fill="#c0c0c0" text-anchor="start" textLength="61.0" lengthAdjust="spacingAndGlyphs">Peak time</text>
<text x="1061.4" y="475.0" font-size="12.5" font-weight="400" fill="#c0c0c0" text-anchor="start" textLength="23.7" lengthAdjust="spacingAndGlyphs">Plot</text>
<text x="821.0" y="497.7" font-size="12.5" font-weight="400" fill="#c0c0c0" text-anchor="start" textLength="60.7" lengthAdjust="spacingAndGlyphs">Peak rate</text>
<text x="910.0" y="497.7" font-size="12.5" font-weight="400" fill="#ffffff" text-anchor="start" textLength="41.6" lengthAdjust="spacingAndGlyphs">17/min</text>
<text x="982.0" y="497.7" font-size="12.5" font-weight="400" fill="#ffffff" text-anchor="start" textLength="57.5" lengthAdjust="spacingAndGlyphs">11:20 AM</text>
<text x="1061.0" y="497.7" font-size="12.5" font-weight="400" fill="#ffffff" text-anchor="start" textLength="35.9" lengthAdjust="spacingAndGlyphs">Strike</text>
<text x="822.7" y="527.6" font-size="12.5" font-weight="400" fill="#d8d8d8" text-anchor="start" textLength="75.3" lengthAdjust="spacingAndGlyphs">Trend graph</text>
<text x="908.6" y="527.6" font-size="12.5" font-weight="400" fill="#ffffff" text-anchor="start" textLength="41.1" lengthAdjust="spacingAndGlyphs">60 min</text>
<g clip-path="url(#gclip)">
<polyline points="822.6,769.2 824.0,753.6 826.0,761.4 828.0,753.6 830.0,761.4 832.0,753.6 834.0,761.4 836.0,769.2 838.0,761.4 840.0,769.2 842.0,761.4 844.0,753.6 846.0,761.4 848.0,738.0 850.0,706.8 852.0,706.8 854.0,730.2 856.0,745.8 858.0,738.0 860.0,730.2 862.0,745.8 864.0,761.4 866.0,769.2 868.0,745.8 870.0,730.2 872.0,722.4 874.0,738.0 876.0,753.6 878.0,745.8 880.0,745.8 882.0,761.4 884.0,769.2 886.0,761.4 888.0,745.8 890.0,730.2 892.0,714.6 894.0,722.4 896.0,722.4 898.0,738.0 900.0,730.2 902.0,730.2 904.0,753.6 906.0,769.2 908.0,753.6 910.0,745.8 912.0,738.0 914.0,738.0 916.0,753.6 918.0,738.0 920.0,714.6 922.0,706.8 924.0,730.2 926.0,745.8 928.0,722.4 930.0,699.0 932.0,691.2 934.0,714.6 936.0,738.0 938.0,745.8 940.0,745.8 942.0,753.6 944.0,738.0 946.0,738.0 948.0,753.6 950.0,706.8 952.0,667.8 954.0,644.4 956.0,675.6 958.0,706.8 960.0,714.6 962.0,699.0 964.0,714.6 966.0,738.0 968.0,753.6 970.0,761.4 972.0,745.8 974.0,730.2 976.0,714.6 978.0,699.0 980.0,722.4 982.0,745.8 984.0,738.0 986.0,714.6 988.0,691.2 990.0,706.8 992.0,738.0 994.0,730.2 996.0,714.6 998.0,699.0 1000.0,683.4 1002.0,644.4 1004.0,675.6 1006.0,667.8 1008.0,714.6 1010.0,738.0 1012.0,722.4 1014.0,706.8 1016.0,691.2 1018.0,714.6 1020.0,730.2 1022.0,683.4 1024.0,722.4 1026.0,745.8 1028.0,738.0 1030.0,722.4 1032.0,714.6 1034.0,738.0 1036.0,745.8 1038.0,730.2 1040.0,714.6 1042.0,699.0 1044.0,722.4 1046.0,745.8 1048.0,738.0 1050.0,730.2 1052.0,745.8 1054.0,730.2 1056.0,714.6 1058.0,706.8 1060.0,714.6 1062.0,738.0 1064.0,753.6 1066.0,738.0 1068.0,722.4 1070.0,706.8 1072.0,722.4 1074.0,745.8 1076.0,753.6 1078.0,745.8 1080.0,753.6 1082.0,745.8 1084.0,753.6 1086.0,738.0 1088.0,722.4" fill="none" stroke="#ffffff" stroke-width="1" shape-rendering="crispEdges"/>
<polyline points="822.6,777.0 824.0,777.0 826.0,777.0 828.0,761.4 830.0,761.4 832.0,761.4 834.0,777.0 836.0,777.0 838.0,777.0 840.0,777.0 842.0,777.0 844.0,769.2 846.0,777.0 848.0,753.6 850.0,738.0 852.0,745.8 854.0,761.4 856.0,753.6 858.0,761.4 860.0,761.4 862.0,769.2 864.0,769.2 866.0,777.0 868.0,761.4 870.0,761.4 872.0,753.6 874.0,769.2 876.0,769.2 878.0,769.2 880.0,761.4 882.0,777.0 884.0,777.0 886.0,777.0 888.0,769.2 890.0,753.6 892.0,745.8 894.0,745.8 896.0,745.8 898.0,753.6 900.0,745.8 902.0,761.4 904.0,769.2 906.0,761.4 908.0,777.0 910.0,761.4 912.0,753.6 914.0,769.2 916.0,761.4 918.0,753.6 920.0,745.8 922.0,738.0 924.0,745.8 926.0,769.2 928.0,753.6 930.0,738.0 932.0,730.2 934.0,745.8 936.0,753.6 938.0,761.4 940.0,753.6 942.0,761.4 944.0,753.6 946.0,761.4 948.0,777.0 950.0,753.6 952.0,730.2 954.0,722.4 956.0,722.4 958.0,745.8 960.0,745.8 962.0,738.0 964.0,745.8 966.0,761.4 968.0,777.0 970.0,761.4 972.0,761.4 974.0,753.6 976.0,745.8 978.0,738.0 980.0,761.4 982.0,761.4 984.0,761.4 986.0,761.4 988.0,745.8 990.0,738.0 992.0,769.2 994.0,753.6 996.0,738.0 998.0,745.8 1000.0,738.0 1002.0,714.6 1004.0,730.2 1006.0,722.4 1008.0,745.8 1010.0,753.6 1012.0,761.4 1014.0,753.6 1016.0,745.8 1018.0,745.8 1020.0,761.4 1022.0,730.2 1024.0,761.4 1026.0,769.2 1028.0,761.4 1030.0,745.8 1032.0,745.8 1034.0,753.6 1036.0,769.2 1038.0,753.6 1040.0,745.8 1042.0,745.8 1044.0,761.4 1046.0,753.6 1048.0,769.2 1050.0,745.8 1052.0,753.6 1054.0,769.2 1056.0,753.6 1058.0,738.0 1060.0,738.0 1062.0,761.4 1064.0,769.2 1066.0,769.2 1068.0,745.8 1070.0,753.6 1072.0,753.6 1074.0,769.2 1076.0,769.2 1078.0,753.6 1080.0,777.0 1082.0,753.6 1084.0,769.2 1086.0,753.6 1088.0,745.8" fill="none" stroke="#90c8f8" stroke-width="1" shape-rendering="crispEdges"/>
<polyline points="822.6,777.0 824.0,777.0 826.0,769.2 828.0,769.2 830.0,769.2 832.0,769.2 834.0,761.4 836.0,777.0 838.0,769.2 840.0,777.0 842.0,777.0 844.0,769.2 846.0,777.0 848.0,769.2 850.0,761.4 852.0,753.6 854.0,761.4 856.0,761.4 858.0,761.4 860.0,769.2 862.0,769.2 864.0,761.4 866.0,769.2 868.0,777.0 870.0,777.0 872.0,769.2 874.0,777.0 876.0,777.0 878.0,777.0 880.0,769.2 882.0,769.2 884.0,769.2 886.0,777.0 888.0,769.2 890.0,761.4 892.0,769.2 894.0,753.6 896.0,753.6 898.0,777.0 900.0,761.4 902.0,769.2 904.0,769.2 906.0,769.2 908.0,761.4 910.0,777.0 912.0,769.2 914.0,769.2 916.0,777.0 918.0,777.0 920.0,769.2 922.0,753.6 924.0,777.0 926.0,769.2 928.0,769.2 930.0,769.2 932.0,761.4 934.0,761.4 936.0,769.2 938.0,777.0 940.0,761.4 942.0,769.2 944.0,761.4 946.0,777.0 948.0,777.0 950.0,769.2 952.0,745.8 954.0,753.6 956.0,761.4 958.0,761.4 960.0,753.6 962.0,753.6 964.0,769.2 966.0,777.0 968.0,761.4 970.0,769.2 972.0,769.2 974.0,777.0 976.0,769.2 978.0,753.6 980.0,769.2 982.0,777.0 984.0,761.4 986.0,761.4 988.0,753.6 990.0,769.2 992.0,761.4 994.0,777.0 996.0,753.6 998.0,761.4 1000.0,761.4 1002.0,745.8 1004.0,745.8 1006.0,761.4 1008.0,769.2 1010.0,769.2 1012.0,769.2 1014.0,769.2 1016.0,761.4 1018.0,769.2 1020.0,769.2 1022.0,761.4 1024.0,769.2 1026.0,761.4 1028.0,769.2 1030.0,761.4 1032.0,769.2 1034.0,769.2 1036.0,777.0 1038.0,769.2 1040.0,777.0 1042.0,753.6 1044.0,761.4 1046.0,777.0 1048.0,769.2 1050.0,761.4 1052.0,777.0 1054.0,761.4 1056.0,761.4 1058.0,761.4 1060.0,753.6 1062.0,769.2 1064.0,769.2 1066.0,761.4 1068.0,753.6 1070.0,761.4 1072.0,761.4 1074.0,769.2 1076.0,769.2 1078.0,769.2 1080.0,777.0 1082.0,777.0 1084.0,777.0 1086.0,777.0 1088.0,761.4" fill="none" stroke="#ff1010" stroke-width="1" shape-rendering="crispEdges"/>
<polyline points="822.6,777.0 824.0,761.4 826.0,769.2 828.0,777.0 830.0,777.0 832.0,777.0 834.0,777.0 836.0,777.0 838.0,769.2 840.0,761.4 842.0,777.0 844.0,769.2 846.0,777.0 848.0,777.0 850.0,761.4 852.0,769.2 854.0,761.4 856.0,777.0 858.0,777.0 860.0,761.4 862.0,769.2 864.0,777.0 866.0,777.0 868.0,777.0 870.0,769.2 872.0,753.6 874.0,761.4 876.0,769.2 878.0,777.0 880.0,769.2 882.0,777.0 884.0,769.2 886.0,769.2 888.0,761.4 890.0,769.2 892.0,769.2 894.0,761.4 896.0,753.6 898.0,761.4 900.0,761.4 902.0,761.4 904.0,769.2 906.0,777.0 908.0,769.2 910.0,769.2 912.0,777.0 914.0,777.0 916.0,777.0 918.0,777.0 920.0,761.4 922.0,753.6 924.0,769.2 926.0,761.4 928.0,753.6 930.0,753.6 932.0,761.4 934.0,769.2 936.0,777.0 938.0,777.0 940.0,777.0 942.0,769.2 944.0,761.4 946.0,761.4 948.0,769.2 950.0,761.4 952.0,745.8 954.0,753.6 956.0,753.6 958.0,753.6 960.0,761.4 962.0,753.6 964.0,761.4 966.0,777.0 968.0,769.2 970.0,777.0 972.0,761.4 974.0,753.6 976.0,769.2 978.0,761.4 980.0,753.6 982.0,769.2 984.0,777.0 986.0,769.2 988.0,761.4 990.0,753.6 992.0,761.4 994.0,777.0 996.0,753.6 998.0,753.6 1000.0,753.6 1002.0,753.6 1004.0,753.6 1006.0,761.4 1008.0,777.0 1010.0,761.4 1012.0,761.4 1014.0,761.4 1016.0,745.8 1018.0,761.4 1020.0,761.4 1022.0,753.6 1024.0,769.2 1026.0,777.0 1028.0,769.2 1030.0,769.2 1032.0,761.4 1034.0,777.0 1036.0,769.2 1038.0,777.0 1040.0,753.6 1042.0,761.4 1044.0,769.2 1046.0,769.2 1048.0,761.4 1050.0,769.2 1052.0,761.4 1054.0,769.2 1056.0,761.4 1058.0,761.4 1060.0,769.2 1062.0,769.2 1064.0,777.0 1066.0,777.0 1068.0,761.4 1070.0,769.2 1072.0,769.2 1074.0,769.2 1076.0,769.2 1078.0,777.0 1080.0,769.2 1082.0,769.2 1084.0,769.2 1086.0,777.0 1088.0,761.4" fill="none" stroke="#ff60b0" stroke-width="1" shape-rendering="crispEdges"/>
<polyline points="822.6,777.0 824.0,777.0 826.0,769.2 828.0,777.0 830.0,769.2 832.0,777.0 834.0,777.0 836.0,777.0 838.0,777.0 840.0,777.0 842.0,777.0 844.0,777.0 846.0,777.0 848.0,761.4 850.0,769.2 852.0,769.2 854.0,761.4 856.0,761.4 858.0,769.2 860.0,769.2 862.0,761.4 864.0,777.0 866.0,769.2 868.0,777.0 870.0,777.0 872.0,769.2 874.0,769.2 876.0,769.2 878.0,777.0 880.0,769.2 882.0,769.2 884.0,777.0 886.0,769.2 888.0,777.0 890.0,777.0 892.0,769.2 894.0,761.4 896.0,769.2 898.0,769.2 900.0,761.4 902.0,769.2 904.0,777.0 906.0,769.2 908.0,769.2 910.0,777.0 912.0,769.2 914.0,769.2 916.0,761.4 918.0,761.4 920.0,769.2 922.0,753.6 924.0,777.0 926.0,769.2 928.0,761.4 930.0,769.2 932.0,761.4 934.0,769.2 936.0,761.4 938.0,761.4 940.0,769.2 942.0,761.4 944.0,769.2 946.0,761.4 948.0,769.2 950.0,761.4 952.0,753.6 954.0,745.8 956.0,745.8 958.0,761.4 960.0,761.4 962.0,769.2 964.0,761.4 966.0,769.2 968.0,761.4 970.0,769.2 972.0,777.0 974.0,769.2 976.0,761.4 978.0,769.2 980.0,769.2 982.0,777.0 984.0,777.0 986.0,769.2 988.0,753.6 990.0,769.2 992.0,777.0 994.0,769.2 996.0,753.6 998.0,769.2 1000.0,753.6 1002.0,745.8 1004.0,745.8 1006.0,745.8 1008.0,753.6 1010.0,769.2 1012.0,769.2 1014.0,761.4 1016.0,753.6 1018.0,753.6 1020.0,777.0 1022.0,761.4 1024.0,769.2 1026.0,777.0 1028.0,769.2 1030.0,761.4 1032.0,769.2 1034.0,777.0 1036.0,769.2 1038.0,769.2 1040.0,761.4 1042.0,753.6 1044.0,761.4 1046.0,769.2 1048.0,769.2 1050.0,761.4 1052.0,777.0 1054.0,761.4 1056.0,761.4 1058.0,753.6 1060.0,753.6 1062.0,769.2 1064.0,777.0 1066.0,777.0 1068.0,761.4 1070.0,769.2 1072.0,777.0 1074.0,777.0 1076.0,777.0 1078.0,777.0 1080.0,777.0 1082.0,777.0 1084.0,777.0 1086.0,777.0 1088.0,769.2" fill="none" stroke="#00ff00" stroke-width="1" shape-rendering="crispEdges"/>
</g>
<rect x="822" y="776.5" width="267" height="1.2" fill="#c0c0c0"/>
<rect x="1088" y="542.5" width="1.2" height="235" fill="#c0c0c0"/>
<rect x="1084" y="776.5" width="5" height="1" fill="#c0c0c0"/>
<rect x="1084" y="737.5" width="5" height="1" fill="#c0c0c0"/>
<rect x="1084" y="698.5" width="5" height="1" fill="#c0c0c0"/>
<rect x="1084" y="659.5" width="5" height="1" fill="#c0c0c0"/>
<rect x="1084" y="620.5" width="5" height="1" fill="#c0c0c0"/>
<rect x="1084" y="581.5" width="5" height="1" fill="#c0c0c0"/>
<rect x="1084" y="542.5" width="5" height="1" fill="#c0c0c0"/>
<text x="1092.0" y="547.4" font-size="11.5" font-weight="400" fill="#c8c8c8" textLength="12.5" lengthAdjust="spacingAndGlyphs">30</text>
<text x="1092.0" y="624.9" font-size="11.5" font-weight="400" fill="#c8c8c8" textLength="12.5" lengthAdjust="spacingAndGlyphs">20</text>
<text x="1092.0" y="703.8" font-size="11.5" font-weight="400" fill="#c8c8c8" textLength="12.5" lengthAdjust="spacingAndGlyphs">10</text>
<text x="820.9" y="793.2" font-size="11.5" font-weight="400" fill="#c8c8c8" textLength="12.4" lengthAdjust="spacingAndGlyphs">60</text>
<text x="864.3" y="793.2" font-size="11.5" font-weight="400" fill="#c8c8c8" textLength="12.4" lengthAdjust="spacingAndGlyphs">50</text>
<text x="909.5" y="793.2" font-size="11.5" font-weight="400" fill="#c8c8c8" textLength="12.4" lengthAdjust="spacingAndGlyphs">40</text>
<text x="953.6" y="793.2" font-size="11.5" font-weight="400" fill="#c8c8c8" textLength="12.4" lengthAdjust="spacingAndGlyphs">30</text>
<text x="998.0" y="793.2" font-size="11.5" font-weight="400" fill="#c8c8c8" textLength="12.4" lengthAdjust="spacingAndGlyphs">20</text>
<text x="1042.6" y="793.2" font-size="11.5" font-weight="400" fill="#c8c8c8" textLength="12.4" lengthAdjust="spacingAndGlyphs">10</text>
<text x="1088.5" y="793.2" font-size="11.5" font-weight="400" fill="#c8c8c8" textLength="6.2" lengthAdjust="spacingAndGlyphs">0</text>
<text x="1100.7" y="793.2" font-size="11.5" font-weight="400" fill="#c8c8c8" textLength="17.3" lengthAdjust="spacingAndGlyphs">min</text>
</svg></body></html>
